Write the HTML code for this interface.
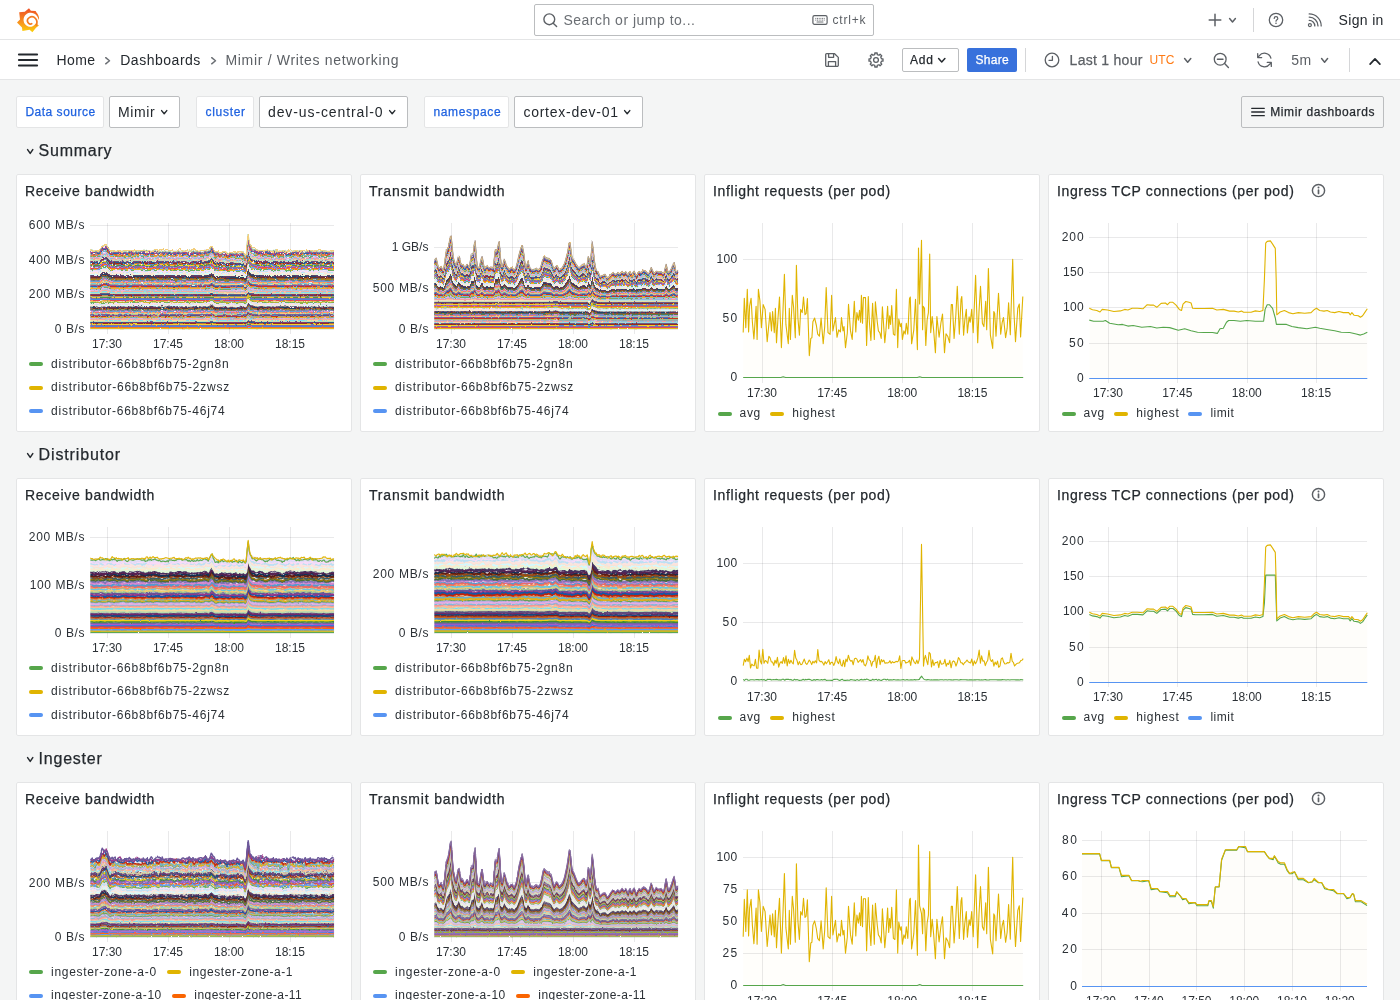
<!DOCTYPE html>
<html lang="en"><head><meta charset="utf-8"><title>Mimir / Writes networking - Dashboards - Grafana</title>
<style>
html,body{margin:0;padding:0}
body{width:1400px;height:1000px;overflow:hidden;background:#f4f5f5;font-family:"Liberation Sans", sans-serif;position:relative;color:#24292e}
#app{position:absolute;left:0;top:0;width:1400px;height:1000px;will-change:transform}
.t{position:absolute;white-space:pre;line-height:1;font-family:"Liberation Sans", sans-serif}
.abs{position:absolute}
header.top{position:absolute;left:0;top:0;width:1400px;height:39px;background:#fff;border-bottom:1px solid #e4e5e6}
nav.bar{position:absolute;left:0;top:40px;width:1400px;height:39px;background:#fff;border-bottom:1px solid #e4e5e6}
.panel{position:absolute;width:334px;height:256px;background:#fff;border:1px solid #e4e5e6;border-radius:2px}
.lbl{position:absolute;top:96px;height:30px;background:#fff;border:1px solid #e4e5e6;border-radius:2px}
.sel{position:absolute;top:96px;height:30px;background:#fff;border:1px solid #bbbdbf;border-radius:2px}
svg{position:absolute;overflow:visible}
.ns path{vector-effect:non-scaling-stroke;fill:none}
.sw{position:absolute;width:14px;height:4px;border-radius:2px}
</style></head>
<body>
<div id="app">
<header class="top"><svg class="abs" style="left:17px;top:7.8px" width="22.4" height="24.4" viewBox="0 0 22.4 24.4"><defs><linearGradient id="lg" x1="0" y1="1" x2="0" y2="0"><stop offset="0" stop-color="#fbd20b"/><stop offset="0.35" stop-color="#f99b1c"/><stop offset="1" stop-color="#ee4f27"/></linearGradient></defs>
<path d="M12.0 0.2 L13.9 2.7 L18.6 2.9 L19.5 4.4 C21.3 6.4 22.2 8.8 22.1 10.6 L21.7 11.9 C21.0 8.9 19.4 6.7 17.0 5.5 C14.4 4.3 11.4 4.6 9.3 6.2 C7.2 7.8 6.3 10.2 6.6 12.8 C6.9 15.5 8.7 17.7 11.2 18.5 C13.6 19.3 16.2 18.6 17.7 16.8 L19.0 15.2 L21.9 17.6 L19.0 19.8 L15.4 24.2 L12.6 21.8 L5.4 23.0 L5.0 19.4 L0.0 14.6 L3.0 11.4 L2.2 4.2 L7.8 3.8 Z" fill="url(#lg)"/>
<path d="M19.4 17.0 C20.3 14.6 20.1 12.2 18.5 10.5 C16.9 8.8 14.2 8.4 12.3 9.6 C10.6 10.7 10.0 12.7 10.9 14.4 C11.7 15.9 13.4 16.5 14.7 15.7" fill="none" stroke="#f47b20" stroke-width="1.7" stroke-linecap="round"/></svg><div class="abs" style="left:534px;top:4px;width:338px;height:30px;border:1px solid #bbbdbf;border-radius:2px;background:#fff"></div><svg class="abs" style="left:542px;top:12px" width="16" height="16" viewBox="0 0 16 16"><circle cx="7.3" cy="7.3" r="5.4" fill="none" stroke="#5c6065" stroke-width="1.4"/><path d="M11.2 11.2 L14.6 14.6" stroke="#5c6065" stroke-width="1.4" stroke-linecap="round"/></svg><span class="t" style="left:563.40px;top:13.00px;font-size:14px;color:#6b6f74;letter-spacing:0.496px;">Search or jump to...</span><svg class="abs" style="left:812px;top:14px" width="16" height="12" viewBox="0 0 16 12"><rect x="0.9" y="1.6" width="14.2" height="8.8" rx="1.6" fill="none" stroke="#5c6065" stroke-width="1.2"/><path d="M3.3 4.4h9.4M3.3 6.1h9.4" stroke="#5c6065" stroke-width="0.9" stroke-dasharray="1 0.7"/><path d="M4.6 8h6.8" stroke="#5c6065" stroke-width="0.9"/></svg><span class="t" style="left:832.40px;top:14.00px;font-size:12px;color:#5c6065;letter-spacing:0.837px;">ctrl+k</span><svg class="abs" style="left:1208px;top:13px" width="14" height="14" viewBox="0 0 14 14"><path d="M7 1.2V12.8M1.2 7H12.8" stroke="#5c6065" stroke-width="1.5" stroke-linecap="round"/></svg><svg class="abs" style="left:1228.6px;top:17.6px" width="7" height="5" viewBox="0 0 7 5"><path d="M0.6 0.6 L3.5 4 L6.4 0.6" fill="none" stroke="#5c6065" stroke-width="1.5" stroke-linecap="round" stroke-linejoin="round"/></svg><div class="abs" style="left:1253px;top:8px;width:1px;height:24px;background:#d5d6d8"></div><svg class="abs" style="left:1268px;top:12px" width="16" height="16" viewBox="0 0 16 16"><circle cx="8" cy="8" r="6.7" fill="none" stroke="#5c6065" stroke-width="1.3"/><path d="M6.2 6.5c0-1.1 0.8-1.8 1.8-1.8s1.8 0.7 1.8 1.7c0 1.3-1.8 1.4-1.8 2.8" fill="none" stroke="#5c6065" stroke-width="1.2" stroke-linecap="round"/><circle cx="8" cy="11.2" r="0.8" fill="#5c6065"/></svg><svg class="abs" style="left:1307px;top:13px" width="16" height="15" viewBox="0 0 16 15"><circle cx="2.9" cy="12.1" r="1.5" fill="none" stroke="#5c6065" stroke-width="1.2"/><path d="M2.2 7.3a5.6 5.6 0 0 1 5.6 5.6M2.2 4.1a8.8 8.8 0 0 1 8.8 8.8M2.2 0.9a12 12 0 0 1 12 12" fill="none" stroke="#5c6065" stroke-width="1.3" stroke-linecap="round"/></svg><span class="t" style="left:1338.50px;top:13.00px;font-size:14px;color:#24292e;letter-spacing:0.348px;">Sign in</span></header>
<nav class="bar"><svg class="abs" style="left:18px;top:13px" width="20" height="14" viewBox="0 0 20 14"><path d="M0.9 1.5H19.1M0.9 7H19.1M0.9 12.5H19.1" stroke="#24292e" stroke-width="2" stroke-linecap="round"/></svg><span class="t" style="left:56.60px;top:13.00px;font-size:14px;color:#24292e;letter-spacing:0.347px;">Home</span><svg class="abs" style="left:105.4px;top:17px" width="5.5" height="7.5" viewBox="0 0 5.5 7.5"><path d="M0.7 0.7 L4.5 3.75 L0.7 6.8" fill="none" stroke="#6b6f74" stroke-width="1.5" stroke-linecap="round" stroke-linejoin="round"/></svg><span class="t" style="left:120.20px;top:13.00px;font-size:14px;color:#24292e;letter-spacing:0.522px;">Dashboards</span><svg class="abs" style="left:210.6px;top:17px" width="5.5" height="7.5" viewBox="0 0 5.5 7.5"><path d="M0.7 0.7 L4.5 3.75 L0.7 6.8" fill="none" stroke="#6b6f74" stroke-width="1.5" stroke-linecap="round" stroke-linejoin="round"/></svg><span class="t" style="left:225.50px;top:13.00px;font-size:14px;color:#5c6065;letter-spacing:0.675px;">Mimir / Writes networking</span><svg class="abs" style="left:824px;top:12px" width="16" height="16" viewBox="0 0 16 16"><path d="M2.6 1.7H10.6L14.3 5.4V13.2A1.2 1.2 0 0 1 13.1 14.4H2.9A1.2 1.2 0 0 1 1.7 13.2V2.6A0.9 0.9 0 0 1 2.6 1.7Z" fill="none" stroke="#5c6065" stroke-width="1.3" stroke-linejoin="round"/><path d="M4.6 1.9V5.3H9.6V1.9M4.4 14.2V9.6H11.6V14.2" fill="none" stroke="#5c6065" stroke-width="1.3" stroke-linejoin="round"/></svg><svg class="abs" style="left:868px;top:12px" width="16" height="16" viewBox="0 0 16 16"><path d="M6.80 1.00 L9.20 1.00 L9.22 2.53 L11.00 3.27 L12.10 2.20 L13.80 3.90 L12.73 5.00 L13.47 6.78 L15.00 6.80 L15.00 9.20 L13.47 9.22 L12.73 11.00 L13.80 12.10 L12.10 13.80 L11.00 12.73 L9.22 13.47 L9.20 15.00 L6.80 15.00 L6.78 13.47 L5.00 12.73 L3.90 13.80 L2.20 12.10 L3.27 11.00 L2.53 9.22 L1.00 9.20 L1.00 6.80 L2.53 6.78 L3.27 5.00 L2.20 3.90 L3.90 2.20 L5.00 3.27 L6.78 2.53Z" fill="none" stroke="#5c6065" stroke-width="1.3" stroke-linejoin="round"/><circle cx="8" cy="8" r="2.4" fill="none" stroke="#5c6065" stroke-width="1.3"/></svg><div class="abs" style="left:902px;top:8px;width:55px;height:22px;border:1px solid #bbbdbf;border-radius:2px;background:#fff"></div><span class="t" style="left:910.00px;top:14.00px;font-size:12px;color:#24292e;letter-spacing:0.820px;-webkit-text-stroke:0.25px #24292e;">Add</span><svg class="abs" style="left:938px;top:18px" width="7.5" height="5" viewBox="0 0 7.5 5"><path d="M0.6 0.6 L3.75 4 L6.9 0.6" fill="none" stroke="#24292e" stroke-width="1.5" stroke-linecap="round" stroke-linejoin="round"/></svg><div class="abs" style="left:967px;top:8px;width:50px;height:24px;border-radius:2px;background:#3871dc"></div><span class="t" style="left:975.60px;top:14.00px;font-size:12px;color:#ffffff;letter-spacing:0.242px;-webkit-text-stroke:0.25px #ffffff;">Share</span><div class="abs" style="left:1025px;top:8px;width:1px;height:24px;background:#d5d6d8"></div><svg class="abs" style="left:1044px;top:12px" width="16" height="16" viewBox="0 0 16 16"><circle cx="8" cy="8" r="6.8" fill="none" stroke="#5c6065" stroke-width="1.3"/><path d="M8.4 4.3V8.3H5" fill="none" stroke="#5c6065" stroke-width="1.3" stroke-linecap="round" stroke-linejoin="round"/></svg><span class="t" style="left:1069.60px;top:13.00px;font-size:14px;color:#5c6065;letter-spacing:0.274px;-webkit-text-stroke:0.25px #5c6065;">Last 1 hour</span><span class="t" style="left:1149.60px;top:14.40px;font-size:12px;color:#ff7a14;letter-spacing:0.064px;">UTC</span><svg class="abs" style="left:1183.6px;top:18px" width="7.4" height="5.2" viewBox="0 0 7.4 5.2"><path d="M0.6 0.6 L3.7 4.2 L6.800000000000001 0.6" fill="none" stroke="#5c6065" stroke-width="1.5" stroke-linecap="round" stroke-linejoin="round"/></svg><svg class="abs" style="left:1213px;top:12px" width="17" height="17" viewBox="0 0 17 17"><circle cx="7.2" cy="7.2" r="5.9" fill="none" stroke="#5c6065" stroke-width="1.3"/><path d="M4.4 7.2H10M11.6 11.6L15.4 15.4" stroke="#5c6065" stroke-width="1.4" stroke-linecap="round"/></svg><svg class="abs" style="left:1256px;top:12px" width="17" height="16" viewBox="0 0 17 16"><path d="M14.9 6.2A6.6 6.6 0 0 0 3.2 3.9L1.9 5.4M1.7 1.6V5.6H5.7M2.1 9.8A6.6 6.6 0 0 0 13.8 12.1L15.1 10.6M15.3 14.4V10.4H11.3" fill="none" stroke="#5c6065" stroke-width="1.3" stroke-linecap="round" stroke-linejoin="round"/></svg><span class="t" style="left:1291.20px;top:13.00px;font-size:14px;color:#5c6065;letter-spacing:0.547px;">5m</span><svg class="abs" style="left:1320.8px;top:18px" width="7.2" height="5.2" viewBox="0 0 7.2 5.2"><path d="M0.6 0.6 L3.6 4.2 L6.6000000000000005 0.6" fill="none" stroke="#5c6065" stroke-width="1.5" stroke-linecap="round" stroke-linejoin="round"/></svg><div class="abs" style="left:1349px;top:8px;width:1px;height:24px;background:#d5d6d8"></div><svg class="abs" style="left:1369px;top:16.6px" width="12" height="9" viewBox="0 0 12 9"><path d="M1.1 7.2L6 1.9L10.9 7.2" fill="none" stroke="#24292e" stroke-width="1.7" stroke-linecap="round" stroke-linejoin="round"/></svg></nav>
<div class="lbl" style="left:16px;width:86px"></div><span class="t" style="left:25.40px;top:106.00px;font-size:12px;color:#1f62e0;letter-spacing:0.510px;-webkit-text-stroke:0.25px #1f62e0;">Data source</span><div class="sel" style="left:109px;width:69px"></div><span class="t" style="left:118.00px;top:105.00px;font-size:14px;color:#24292e;letter-spacing:0.595px;">Mimir</span><svg class="abs" style="left:161px;top:110px" width="6.4" height="4.8" viewBox="0 0 6.4 4.8"><path d="M0.6 0.6 L3.2 3.8 L5.800000000000001 0.6" fill="none" stroke="#24292e" stroke-width="1.4" stroke-linecap="round" stroke-linejoin="round"/></svg><div class="lbl" style="left:196px;width:56px"></div><span class="t" style="left:205.60px;top:106.00px;font-size:12px;color:#1f62e0;letter-spacing:0.676px;-webkit-text-stroke:0.25px #1f62e0;">cluster</span><div class="sel" style="left:259px;width:147px"></div><span class="t" style="left:268.00px;top:105.00px;font-size:14px;color:#24292e;letter-spacing:0.896px;">dev-us-central-0</span><svg class="abs" style="left:389px;top:110px" width="6.4" height="4.8" viewBox="0 0 6.4 4.8"><path d="M0.6 0.6 L3.2 3.8 L5.800000000000001 0.6" fill="none" stroke="#24292e" stroke-width="1.4" stroke-linecap="round" stroke-linejoin="round"/></svg><div class="lbl" style="left:424px;width:83px"></div><span class="t" style="left:433.40px;top:106.00px;font-size:12px;color:#1f62e0;letter-spacing:0.644px;-webkit-text-stroke:0.25px #1f62e0;">namespace</span><div class="sel" style="left:514px;width:127px"></div><span class="t" style="left:523.40px;top:105.00px;font-size:14px;color:#24292e;letter-spacing:0.751px;">cortex-dev-01</span><svg class="abs" style="left:624px;top:110px" width="6.4" height="4.8" viewBox="0 0 6.4 4.8"><path d="M0.6 0.6 L3.2 3.8 L5.800000000000001 0.6" fill="none" stroke="#24292e" stroke-width="1.4" stroke-linecap="round" stroke-linejoin="round"/></svg><div class="abs" style="left:1241px;top:96px;width:141px;height:30px;border:1px solid #bbbdbf;border-radius:2px"></div><svg class="abs" style="left:1251px;top:107px" width="14" height="10" viewBox="0 0 14 10"><path d="M0.7 1.3H13.3M0.7 5H13.3M0.7 8.7H13.3" stroke="#24292e" stroke-width="1.3" stroke-linecap="round"/></svg><span class="t" style="left:1270.20px;top:106.20px;font-size:12px;color:#24292e;letter-spacing:0.595px;-webkit-text-stroke:0.25px #24292e;">Mimir dashboards</span>
<svg class="abs" style="left:26.6px;top:149.4px" width="6.4" height="5.4" viewBox="0 0 6.4 5.4"><path d="M0.6 0.6 L3.2 4.4 L5.800000000000001 0.6" fill="none" stroke="#24292e" stroke-width="1.5" stroke-linecap="round" stroke-linejoin="round"/></svg><span class="t" style="left:38.60px;top:142.50px;font-size:16px;color:#24292e;letter-spacing:0.758px;-webkit-text-stroke:0.25px #24292e;">Summary</span>
<svg class="abs" style="left:26.6px;top:453.4px" width="6.4" height="5.4" viewBox="0 0 6.4 5.4"><path d="M0.6 0.6 L3.2 4.4 L5.800000000000001 0.6" fill="none" stroke="#24292e" stroke-width="1.5" stroke-linecap="round" stroke-linejoin="round"/></svg><span class="t" style="left:38.60px;top:446.50px;font-size:16px;color:#24292e;letter-spacing:0.869px;-webkit-text-stroke:0.25px #24292e;">Distributor</span>
<svg class="abs" style="left:26.6px;top:757.4px" width="6.4" height="5.4" viewBox="0 0 6.4 5.4"><path d="M0.6 0.6 L3.2 4.4 L5.800000000000001 0.6" fill="none" stroke="#24292e" stroke-width="1.5" stroke-linecap="round" stroke-linejoin="round"/></svg><span class="t" style="left:38.60px;top:750.50px;font-size:16px;color:#24292e;letter-spacing:0.770px;-webkit-text-stroke:0.25px #24292e;">Ingester</span>
<section class="panel" style="left:16px;top:174px"></section><span class="t" style="left:25.00px;top:183.70px;font-size:14px;color:#24292e;letter-spacing:0.688px;-webkit-text-stroke:0.25px #24292e;">Receive bandwidth</span>
<section class="panel" style="left:360px;top:174px"></section><span class="t" style="left:369.00px;top:183.70px;font-size:14px;color:#24292e;letter-spacing:0.814px;-webkit-text-stroke:0.25px #24292e;">Transmit bandwidth</span>
<section class="panel" style="left:704px;top:174px"></section><span class="t" style="left:713.00px;top:183.70px;font-size:14px;color:#24292e;letter-spacing:0.680px;-webkit-text-stroke:0.25px #24292e;">Inflight requests (per pod)</span>
<section class="panel" style="left:1048px;top:174px"></section><span class="t" style="left:1057.00px;top:183.70px;font-size:14px;color:#24292e;letter-spacing:0.631px;-webkit-text-stroke:0.25px #24292e;">Ingress TCP connections (per pod)</span><svg class="abs" style="left:1311.3px;top:183.0px" width="15" height="15" viewBox="0 0 15 15"><circle cx="7.5" cy="7.5" r="6.1" fill="none" stroke="#5c6065" stroke-width="1.45"/><path d="M7.5 7.1V10.5" stroke="#5c6065" stroke-width="1.7" stroke-linecap="round"/><circle cx="7.5" cy="4.6" r="1.0" fill="#5c6065"/></svg>
<section class="panel" style="left:16px;top:478px"></section><span class="t" style="left:25.00px;top:487.70px;font-size:14px;color:#24292e;letter-spacing:0.688px;-webkit-text-stroke:0.25px #24292e;">Receive bandwidth</span>
<section class="panel" style="left:360px;top:478px"></section><span class="t" style="left:369.00px;top:487.70px;font-size:14px;color:#24292e;letter-spacing:0.814px;-webkit-text-stroke:0.25px #24292e;">Transmit bandwidth</span>
<section class="panel" style="left:704px;top:478px"></section><span class="t" style="left:713.00px;top:487.70px;font-size:14px;color:#24292e;letter-spacing:0.680px;-webkit-text-stroke:0.25px #24292e;">Inflight requests (per pod)</span>
<section class="panel" style="left:1048px;top:478px"></section><span class="t" style="left:1057.00px;top:487.70px;font-size:14px;color:#24292e;letter-spacing:0.631px;-webkit-text-stroke:0.25px #24292e;">Ingress TCP connections (per pod)</span><svg class="abs" style="left:1311.3px;top:487.0px" width="15" height="15" viewBox="0 0 15 15"><circle cx="7.5" cy="7.5" r="6.1" fill="none" stroke="#5c6065" stroke-width="1.45"/><path d="M7.5 7.1V10.5" stroke="#5c6065" stroke-width="1.7" stroke-linecap="round"/><circle cx="7.5" cy="4.6" r="1.0" fill="#5c6065"/></svg>
<section class="panel" style="left:16px;top:782px"></section><span class="t" style="left:25.00px;top:791.70px;font-size:14px;color:#24292e;letter-spacing:0.688px;-webkit-text-stroke:0.25px #24292e;">Receive bandwidth</span>
<section class="panel" style="left:360px;top:782px"></section><span class="t" style="left:369.00px;top:791.70px;font-size:14px;color:#24292e;letter-spacing:0.814px;-webkit-text-stroke:0.25px #24292e;">Transmit bandwidth</span>
<section class="panel" style="left:704px;top:782px"></section><span class="t" style="left:713.00px;top:791.70px;font-size:14px;color:#24292e;letter-spacing:0.680px;-webkit-text-stroke:0.25px #24292e;">Inflight requests (per pod)</span>
<section class="panel" style="left:1048px;top:782px"></section><span class="t" style="left:1057.00px;top:791.70px;font-size:14px;color:#24292e;letter-spacing:0.631px;-webkit-text-stroke:0.25px #24292e;">Ingress TCP connections (per pod)</span><svg class="abs" style="left:1311.3px;top:791.0px" width="15" height="15" viewBox="0 0 15 15"><circle cx="7.5" cy="7.5" r="6.1" fill="none" stroke="#5c6065" stroke-width="1.45"/><path d="M7.5 7.1V10.5" stroke="#5c6065" stroke-width="1.7" stroke-linecap="round"/><circle cx="7.5" cy="4.6" r="1.0" fill="#5c6065"/></svg>
<svg class="abs" style="left:0;top:0" width="1400" height="1000" shape-rendering="crispEdges"><path d="M107.5 223.3V334.0" stroke="rgba(36,41,46,0.1)" stroke-width="1"/><path d="M168.5 223.3V334.0" stroke="rgba(36,41,46,0.1)" stroke-width="1"/><path d="M229.5 223.3V334.0" stroke="rgba(36,41,46,0.1)" stroke-width="1"/><path d="M290.5 223.3V334.0" stroke="rgba(36,41,46,0.1)" stroke-width="1"/><path d="M90.2 329.5H334.2" stroke="rgba(36,41,46,0.1)" stroke-width="1"/><path d="M90.2 294.5H334.2" stroke="rgba(36,41,46,0.1)" stroke-width="1"/><path d="M90.2 260.5H334.2" stroke="rgba(36,41,46,0.1)" stroke-width="1"/><path d="M90.2 225.5H334.2" stroke="rgba(36,41,46,0.1)" stroke-width="1"/></svg><span class="t" style="left:92.00px;top:337.60px;font-size:12px;color:#2b3035;letter-spacing:-0.008px;">17:30</span><span class="t" style="left:153.00px;top:337.60px;font-size:12px;color:#2b3035;letter-spacing:-0.008px;">17:45</span><span class="t" style="left:214.00px;top:337.60px;font-size:12px;color:#2b3035;letter-spacing:-0.008px;">18:00</span><span class="t" style="left:275.00px;top:337.60px;font-size:12px;color:#2b3035;letter-spacing:-0.008px;">18:15</span><span class="t" style="left:54.80px;top:322.90px;font-size:12px;color:#2b3035;letter-spacing:0.560px;">0 B/s</span><span class="t" style="left:28.80px;top:287.90px;font-size:12px;color:#2b3035;letter-spacing:0.700px;">200 MB/s</span><span class="t" style="left:28.80px;top:253.90px;font-size:12px;color:#2b3035;letter-spacing:0.700px;">400 MB/s</span><span class="t" style="left:28.80px;top:218.90px;font-size:12px;color:#2b3035;letter-spacing:0.700px;">600 MB/s</span>
<svg class="abs" style="left:0;top:0" width="1400" height="1000"><defs><filter id="fs00" x="-2%" y="-10%" width="104%" height="120%" color-interpolation-filters="sRGB"><feTurbulence type="fractalNoise" baseFrequency="0.45 0.35" numOctaves="1" seed="23" result="t"/><feColorMatrix in="t" type="matrix" values="0 0 0 0 0.5  0 1 0 0 0  0 0 1 0 0  0 0 0 0 1" result="m"/><feDisplacementMap in="SourceGraphic" in2="m" scale="2.4" xChannelSelector="R" yChannelSelector="G"/></filter><clipPath id="cs00"><rect x="90.2" y="0" width="244" height="329.3"/></clipPath><g class="ns"><path id="s0000" d="M0 -27.6L1 -28.1L2 -27.8L3 -27.3L4 -27.4L5 -26.6L6 -27.2L7 -26.7L8 -27.4L9 -27.8L10 -28.3L11 -28.3L12 -27.7L13 -27.9L14 -27.0L15 -28.2L16 -28.0L17 -27.4L18 -27.8L19 -28.3L20 -26.6L21 -26.6L22 -27.2L23 -28.2L24 -26.8L25 -26.8L26 -27.2L27 -27.0L28 -27.1L29 -27.5L30 -28.1L31 -27.4L32 -27.2L33 -26.8L34 -27.8L35 -27.9L36 -28.1L37 -27.2L38 -26.9L39 -27.1L40 -27.7L41 -27.3L42 -26.7L43 -26.7L44 -26.6L45 -26.3L46 -27.5L47 -26.5L48 -27.1L49 -28.1L50 -27.5L51 -27.2L52 -27.9L53 -27.0L54 -26.8L55 -27.2L56 -27.8L57 -26.7L58 -26.9L59 -26.9L60 -28.0L61 -27.1L62 -26.9L63 -26.9L64 -26.8L65 -26.9L66 -27.1L67 -26.9L68 -26.8L69 -26.3L70 -27.0L71 -28.0L72 -27.9L73 -27.6L74 -27.6L75 -28.1L76 -27.5L77 -28.0L78 -27.3L79 -27.0L80 -27.4L81 -27.2L82 -27.3L83 -27.4L84 -27.9L85 -27.9L86 -26.9L87 -27.5L88 -27.3L89 -27.4L90 -28.3L91 -27.9L92 -27.4L93 -27.1L94 -27.1L95 -26.6L96 -26.9L97 -27.0L98 -27.9L99 -28.0L100 -27.6L101 -27.7L102 -27.6L103 -28.1L104 -27.4L105 -27.8L106 -27.8L107 -27.0L108 -27.9L109 -28.1L110 -27.5L111 -27.8L112 -27.2L113 -27.3L114 -27.6L115 -28.3L116 -27.5L117 -27.2L118 -27.9L119 -27.7L120 -27.9L121 -29.6L122 -28.5L123 -27.5L124 -27.2L125 -26.8L126 -27.2L127 -26.2L128 -27.1L129 -27.0L130 -27.1L131 -27.0L132 -26.5L133 -27.6L134 -27.8L135 -27.2L136 -27.4L137 -26.7L138 -26.6L139 -27.0L140 -26.3L141 -26.0L142 -27.0L143 -26.1L144 -26.5L145 -27.4L146 -26.6L147 -27.3L148 -27.0L149 -28.2L150 -28.1L151 -27.2L152 -26.7L153 -27.6L154 -27.4L155 -27.2L156 -27.9L157 -31.3L158 -34.3L159 -30.5L160 -29.2L161 -29.2L162 -28.6L163 -27.9L164 -28.7L165 -28.4L166 -27.9L167 -27.7L168 -27.0L169 -26.8L170 -27.9L171 -27.8L172 -27.6L173 -27.2L174 -27.4L175 -28.5L176 -27.7L177 -27.3L178 -27.5L179 -27.5L180 -27.2L181 -26.6L182 -27.6L183 -27.3L184 -27.2L185 -27.5L186 -27.7L187 -27.8L188 -28.1L189 -28.1L190 -28.0L191 -27.9L192 -28.3L193 -27.6L194 -27.8L195 -26.9L196 -27.3L197 -28.2L198 -27.8L199 -27.2L200 -27.3L201 -27.1L202 -27.4L203 -27.1L204 -27.9L205 -28.4L206 -28.2L207 -27.1L208 -27.3L209 -28.2L210 -28.0L211 -27.5L212 -27.7L213 -27.3L214 -27.4L215 -27.5L216 -28.0L217 -28.2L218 -28.3L219 -27.9L220 -27.4L221 -27.7L222 -28.0L223 -28.1L224 -28.3L225 -27.1L226 -27.5L227 -27.5L228 -28.1L229 -27.6L230 -27.3L231 -27.2L232 -26.9L233 -27.2L234 -27.1L235 -27.3L236 -27.3L237 -28.3L238 -28.1L239 -27.7L240 -27.8L241 -28.0L242 -27.8L243 -26.5L244 -27.2"/><path id="s0001" d="M0 -27.3L1 -27.0L2 -27.1L3 -27.0L4 -27.5L5 -27.2L6 -26.8L7 -26.9L8 -27.5L9 -26.7L10 -27.4L11 -27.3L12 -25.9L13 -27.0L14 -25.9L15 -26.5L16 -27.2L17 -27.7L18 -27.6L19 -26.8L20 -26.8L21 -27.1L22 -27.2L23 -27.5L24 -27.7L25 -28.2L26 -27.9L27 -27.6L28 -26.9L29 -26.8L30 -27.4L31 -27.1L32 -27.5L33 -27.2L34 -27.2L35 -27.0L36 -27.2L37 -27.1L38 -27.5L39 -27.6L40 -27.0L41 -27.9L42 -27.5L43 -27.0L44 -27.1L45 -27.5L46 -27.4L47 -27.1L48 -27.4L49 -27.6L50 -27.8L51 -28.2L52 -28.0L53 -28.1L54 -27.2L55 -27.9L56 -27.3L57 -27.1L58 -27.0L59 -27.5L60 -26.9L61 -27.6L62 -27.8L63 -28.4L64 -27.8L65 -27.9L66 -27.3L67 -27.3L68 -27.3L69 -27.3L70 -26.6L71 -28.6L72 -28.2L73 -27.9L74 -27.3L75 -27.2L76 -27.0L77 -27.5L78 -27.2L79 -26.9L80 -27.6L81 -27.7L82 -27.7L83 -27.6L84 -27.2L85 -27.3L86 -26.9L87 -27.9L88 -27.4L89 -27.0L90 -27.3L91 -27.3L92 -27.6L93 -26.9L94 -28.0L95 -28.0L96 -27.3L97 -27.1L98 -26.7L99 -27.0L100 -26.8L101 -27.8L102 -27.8L103 -28.0L104 -27.7L105 -27.1L106 -27.7L107 -27.7L108 -27.3L109 -27.6L110 -27.2L111 -26.8L112 -26.8L113 -27.1L114 -28.1L115 -27.8L116 -27.3L117 -28.4L118 -28.1L119 -28.0L120 -28.5L121 -29.2L122 -29.2L123 -28.7L124 -27.7L125 -27.0L126 -26.3L127 -26.0L128 -26.0L129 -26.9L130 -26.6L131 -27.0L132 -26.6L133 -27.2L134 -27.7L135 -27.2L136 -27.3L137 -26.7L138 -26.5L139 -26.6L140 -26.6L141 -26.9L142 -26.7L143 -26.8L144 -26.6L145 -26.9L146 -26.0L147 -26.2L148 -27.1L149 -26.6L150 -26.6L151 -27.2L152 -26.9L153 -27.3L154 -27.2L155 -25.7L156 -27.2L157 -30.4L158 -33.4L159 -30.5L160 -29.9L161 -29.1L162 -29.8L163 -27.6L164 -27.7L165 -27.8L166 -28.0L167 -27.6L168 -27.5L169 -28.2L170 -27.8L171 -28.4L172 -27.3L173 -26.5L174 -27.2L175 -27.3L176 -27.4L177 -27.5L178 -27.3L179 -28.1L180 -27.8L181 -26.8L182 -26.9L183 -27.1L184 -27.1L185 -26.8L186 -27.0L187 -26.8L188 -27.0L189 -27.7L190 -27.9L191 -27.5L192 -27.5L193 -28.1L194 -28.5L195 -27.5L196 -26.8L197 -27.6L198 -27.2L199 -27.4L200 -27.2L201 -27.0L202 -27.4L203 -27.0L204 -27.3L205 -28.1L206 -27.2L207 -26.9L208 -27.1L209 -27.5L210 -26.8L211 -27.1L212 -26.4L213 -27.7L214 -27.3L215 -27.8L216 -26.9L217 -27.3L218 -27.4L219 -27.2L220 -27.1L221 -26.9L222 -27.8L223 -26.1L224 -26.9L225 -27.3L226 -27.3L227 -28.1L228 -27.7L229 -27.0L230 -26.4L231 -27.1L232 -27.6L233 -28.0L234 -27.9L235 -27.6L236 -27.4L237 -28.4L238 -27.4L239 -27.1L240 -27.2L241 -27.1L242 -26.6L243 -27.1L244 -28.0"/><path id="s0002" d="M0 -27.3L1 -27.9L2 -27.7L3 -27.8L4 -27.3L5 -27.8L6 -27.1L7 -27.2L8 -27.5L9 -26.1L10 -26.4L11 -26.7L12 -27.4L13 -27.3L14 -27.4L15 -27.6L16 -27.0L17 -27.2L18 -27.3L19 -27.6L20 -28.0L21 -26.9L22 -27.1L23 -27.3L24 -26.8L25 -27.2L26 -28.0L27 -27.8L28 -27.4L29 -27.0L30 -26.9L31 -26.8L32 -27.4L33 -26.9L34 -26.9L35 -27.2L36 -27.2L37 -27.4L38 -27.5L39 -27.2L40 -27.6L41 -27.9L42 -27.1L43 -28.5L44 -28.8L45 -27.2L46 -27.1L47 -27.2L48 -28.3L49 -27.6L50 -27.2L51 -27.8L52 -28.8L53 -26.7L54 -27.0L55 -26.5L56 -27.0L57 -26.6L58 -26.4L59 -26.7L60 -27.6L61 -27.7L62 -26.9L63 -27.2L64 -27.0L65 -27.0L66 -27.6L67 -27.1L68 -27.9L69 -27.9L70 -27.4L71 -28.2L72 -28.4L73 -27.9L74 -27.9L75 -27.5L76 -27.3L77 -27.5L78 -28.5L79 -28.7L80 -27.3L81 -27.2L82 -27.4L83 -26.9L84 -26.7L85 -26.8L86 -27.4L87 -27.3L88 -26.3L89 -27.1L90 -27.2L91 -26.9L92 -27.1L93 -26.8L94 -26.5L95 -27.4L96 -27.6L97 -27.6L98 -27.8L99 -27.3L100 -27.4L101 -27.4L102 -27.1L103 -27.1L104 -27.2L105 -27.0L106 -28.1L107 -28.2L108 -27.7L109 -27.7L110 -27.4L111 -27.4L112 -26.8L113 -26.8L114 -27.3L115 -27.7L116 -27.5L117 -27.7L118 -27.7L119 -28.2L120 -29.4L121 -29.3L122 -29.5L123 -28.7L124 -28.3L125 -26.9L126 -26.6L127 -26.5L128 -26.4L129 -26.7L130 -26.8L131 -27.5L132 -27.4L133 -27.4L134 -26.9L135 -26.9L136 -27.0L137 -26.8L138 -26.8L139 -26.3L140 -26.9L141 -26.8L142 -27.7L143 -26.7L144 -26.6L145 -26.3L146 -26.7L147 -26.6L148 -25.8L149 -27.3L150 -26.9L151 -27.5L152 -27.2L153 -27.2L154 -27.3L155 -26.2L156 -26.8L157 -30.4L158 -34.5L159 -29.8L160 -28.8L161 -28.0L162 -28.5L163 -28.4L164 -27.5L165 -27.9L166 -27.7L167 -28.0L168 -27.3L169 -27.1L170 -27.5L171 -27.9L172 -27.8L173 -27.2L174 -27.5L175 -28.0L176 -27.3L177 -26.9L178 -27.1L179 -27.0L180 -27.0L181 -27.2L182 -27.4L183 -27.2L184 -26.8L185 -27.1L186 -27.2L187 -27.0L188 -26.9L189 -27.6L190 -28.4L191 -27.6L192 -27.9L193 -27.7L194 -28.6L195 -28.2L196 -28.1L197 -28.0L198 -27.9L199 -27.4L200 -27.7L201 -27.3L202 -27.7L203 -28.2L204 -27.4L205 -27.3L206 -27.3L207 -26.4L208 -27.7L209 -27.3L210 -27.3L211 -27.4L212 -27.0L213 -27.5L214 -26.6L215 -27.7L216 -27.0L217 -26.6L218 -28.1L219 -26.9L220 -27.9L221 -28.1L222 -27.1L223 -27.9L224 -27.7L225 -27.8L226 -27.5L227 -26.7L228 -26.8L229 -27.4L230 -26.6L231 -26.9L232 -26.9L233 -27.1L234 -27.0L235 -27.5L236 -28.2L237 -27.6L238 -27.2L239 -27.5L240 -26.7L241 -27.2L242 -27.3L243 -28.0L244 -27.6"/><path id="s0003" d="M0 -28.1L1 -28.0L2 -27.5L3 -27.6L4 -27.7L5 -27.5L6 -28.0L7 -27.0L8 -27.7L9 -28.1L10 -28.4L11 -28.4L12 -27.9L13 -27.3L14 -27.7L15 -27.3L16 -26.6L17 -26.7L18 -28.3L19 -27.5L20 -26.9L21 -27.2L22 -26.9L23 -28.0L24 -27.2L25 -27.1L26 -27.2L27 -26.7L28 -27.3L29 -27.0L30 -27.1L31 -27.7L32 -27.9L33 -27.5L34 -27.6L35 -27.6L36 -27.5L37 -28.2L38 -27.0L39 -26.9L40 -28.3L41 -27.9L42 -27.5L43 -27.1L44 -27.6L45 -26.9L46 -27.8L47 -27.8L48 -27.1L49 -26.7L50 -26.2L51 -26.6L52 -27.1L53 -27.9L54 -27.5L55 -27.9L56 -27.3L57 -27.2L58 -27.2L59 -27.4L60 -26.8L61 -26.8L62 -27.3L63 -27.9L64 -27.7L65 -27.8L66 -27.2L67 -27.5L68 -26.9L69 -27.2L70 -27.1L71 -27.9L72 -27.2L73 -26.7L74 -27.8L75 -27.8L76 -27.2L77 -28.5L78 -27.1L79 -27.5L80 -27.5L81 -26.9L82 -27.5L83 -27.5L84 -28.2L85 -27.8L86 -28.3L87 -27.9L88 -27.0L89 -27.8L90 -28.1L91 -27.7L92 -28.2L93 -27.5L94 -27.9L95 -27.7L96 -27.2L97 -26.9L98 -27.0L99 -28.0L100 -27.2L101 -27.3L102 -27.0L103 -27.3L104 -27.2L105 -26.3L106 -28.3L107 -27.7L108 -28.2L109 -27.7L110 -28.0L111 -27.6L112 -28.7L113 -28.0L114 -28.6L115 -28.2L116 -27.4L117 -27.5L118 -27.4L119 -26.9L120 -28.5L121 -29.5L122 -28.9L123 -28.7L124 -28.3L125 -27.7L126 -27.5L127 -26.7L128 -27.3L129 -26.5L130 -27.4L131 -26.9L132 -26.2L133 -26.5L134 -26.2L135 -26.7L136 -27.3L137 -26.7L138 -27.3L139 -26.8L140 -26.2L141 -26.8L142 -26.8L143 -26.4L144 -27.0L145 -26.3L146 -27.4L147 -27.1L148 -26.5L149 -26.4L150 -26.0L151 -27.1L152 -26.9L153 -28.3L154 -27.1L155 -27.3L156 -27.2L157 -30.5L158 -34.5L159 -30.9L160 -29.7L161 -29.0L162 -28.8L163 -28.2L164 -27.9L165 -27.1L166 -27.9L167 -27.8L168 -27.0L169 -28.0L170 -27.7L171 -28.2L172 -28.3L173 -27.3L174 -27.7L175 -27.5L176 -28.4L177 -27.7L178 -27.2L179 -27.6L180 -27.7L181 -28.0L182 -27.3L183 -27.4L184 -27.6L185 -27.1L186 -27.6L187 -26.9L188 -27.0L189 -27.4L190 -27.3L191 -27.7L192 -27.6L193 -27.3L194 -27.7L195 -27.0L196 -27.0L197 -27.4L198 -27.4L199 -27.3L200 -26.4L201 -26.8L202 -26.6L203 -26.5L204 -26.6L205 -26.3L206 -27.3L207 -27.6L208 -27.1L209 -26.6L210 -27.3L211 -27.0L212 -26.8L213 -27.1L214 -27.1L215 -27.7L216 -26.9L217 -27.5L218 -28.2L219 -27.8L220 -27.7L221 -27.4L222 -27.4L223 -27.5L224 -27.8L225 -28.4L226 -27.5L227 -27.5L228 -27.5L229 -27.0L230 -27.0L231 -27.3L232 -27.1L233 -27.6L234 -26.9L235 -27.5L236 -27.2L237 -27.6L238 -27.6L239 -27.7L240 -28.0L241 -28.3L242 -28.2L243 -27.6L244 -28.0"/><path id="s0004" d="M0 -28.1L1 -26.4L2 -26.5L3 -28.2L4 -27.6L5 -27.3L6 -26.0L7 -26.4L8 -26.8L9 -27.4L10 -26.9L11 -26.4L12 -26.5L13 -27.2L14 -27.6L15 -26.8L16 -27.1L17 -27.4L18 -27.7L19 -27.9L20 -27.8L21 -27.9L22 -27.5L23 -27.4L24 -27.3L25 -27.9L26 -27.6L27 -27.4L28 -28.0L29 -27.2L30 -26.8L31 -27.4L32 -27.2L33 -27.6L34 -27.6L35 -27.0L36 -26.8L37 -26.8L38 -26.9L39 -27.4L40 -27.6L41 -27.5L42 -26.9L43 -27.1L44 -27.5L45 -27.5L46 -27.1L47 -27.7L48 -27.0L49 -27.4L50 -27.6L51 -27.1L52 -26.5L53 -26.8L54 -27.7L55 -27.7L56 -27.7L57 -27.3L58 -26.6L59 -27.6L60 -28.0L61 -28.5L62 -28.4L63 -27.6L64 -27.3L65 -27.3L66 -27.8L67 -26.5L68 -27.5L69 -27.5L70 -27.6L71 -26.2L72 -26.6L73 -26.9L74 -26.8L75 -25.7L76 -26.8L77 -28.1L78 -27.8L79 -27.8L80 -27.6L81 -28.2L82 -27.0L83 -28.0L84 -27.3L85 -27.2L86 -27.0L87 -28.2L88 -27.5L89 -26.1L90 -26.9L91 -27.6L92 -27.6L93 -26.9L94 -27.4L95 -27.8L96 -27.8L97 -27.8L98 -26.9L99 -26.9L100 -26.6L101 -26.5L102 -26.8L103 -28.1L104 -27.3L105 -27.9L106 -28.3L107 -27.8L108 -27.7L109 -27.8L110 -27.9L111 -27.0L112 -26.8L113 -27.7L114 -27.6L115 -28.0L116 -27.0L117 -26.9L118 -27.8L119 -27.6L120 -28.5L121 -29.2L122 -29.4L123 -28.0L124 -27.2L125 -27.3L126 -27.7L127 -27.3L128 -26.5L129 -26.9L130 -27.0L131 -26.8L132 -26.9L133 -26.1L134 -27.0L135 -27.5L136 -27.3L137 -26.2L138 -26.0L139 -26.4L140 -26.8L141 -26.7L142 -27.1L143 -26.6L144 -26.6L145 -26.2L146 -26.1L147 -26.7L148 -27.5L149 -26.8L150 -26.4L151 -27.5L152 -26.7L153 -27.6L154 -27.6L155 -26.4L156 -26.6L157 -30.3L158 -34.2L159 -31.5L160 -29.3L161 -28.9L162 -29.1L163 -28.2L164 -28.4L165 -27.5L166 -27.6L167 -27.1L168 -27.2L169 -27.6L170 -27.8L171 -28.2L172 -28.2L173 -27.4L174 -27.4L175 -27.0L176 -27.0L177 -27.6L178 -27.7L179 -27.6L180 -27.6L181 -26.5L182 -27.5L183 -27.7L184 -27.0L185 -26.7L186 -27.8L187 -27.6L188 -27.7L189 -28.1L190 -27.1L191 -27.6L192 -27.8L193 -27.8L194 -27.5L195 -27.4L196 -27.5L197 -28.6L198 -27.3L199 -27.9L200 -28.2L201 -27.4L202 -27.7L203 -27.6L204 -27.8L205 -28.0L206 -27.9L207 -27.6L208 -27.7L209 -26.9L210 -27.5L211 -27.6L212 -26.8L213 -27.8L214 -27.0L215 -27.9L216 -27.3L217 -27.5L218 -28.0L219 -26.8L220 -27.0L221 -26.1L222 -25.9L223 -27.3L224 -28.1L225 -27.6L226 -26.5L227 -28.2L228 -27.4L229 -27.8L230 -27.4L231 -26.8L232 -26.2L233 -27.2L234 -26.9L235 -26.7L236 -27.1L237 -26.4L238 -26.7L239 -27.4L240 -27.5L241 -27.2L242 -27.3L243 -27.0L244 -27.0"/><path id="s0010" d="M0 -52.0L1 -51.1L2 -51.2L3 -50.1L4 -50.2L5 -51.2L6 -51.5L7 -51.0L8 -50.5L9 -51.6L10 -53.1L11 -54.4L12 -55.4L13 -55.6L14 -56.8L15 -57.0L16 -57.1L17 -55.7L18 -53.0L19 -52.9L20 -51.1L21 -50.0L22 -51.6L23 -50.9L24 -51.6L25 -50.1L26 -49.7L27 -50.7L28 -51.2L29 -50.7L30 -51.4L31 -50.2L32 -49.0L33 -51.5L34 -51.7L35 -51.4L36 -51.2L37 -51.0L38 -51.2L39 -51.5L40 -51.5L41 -50.8L42 -51.0L43 -50.1L44 -52.4L45 -51.2L46 -51.9L47 -51.2L48 -51.1L49 -51.3L50 -51.8L51 -51.5L52 -51.6L53 -50.9L54 -51.8L55 -50.9L56 -50.3L57 -50.0L58 -51.4L59 -51.0L60 -49.7L61 -50.4L62 -49.9L63 -50.5L64 -52.2L65 -51.8L66 -52.2L67 -52.7L68 -50.4L69 -51.7L70 -52.3L71 -52.1L72 -51.4L73 -53.1L74 -51.6L75 -51.8L76 -52.5L77 -52.1L78 -51.7L79 -51.5L80 -51.3L81 -51.0L82 -52.0L83 -50.6L84 -50.1L85 -49.8L86 -49.8L87 -51.0L88 -51.5L89 -52.8L90 -53.0L91 -51.6L92 -51.0L93 -50.8L94 -50.8L95 -50.7L96 -51.6L97 -52.0L98 -50.6L99 -50.5L100 -50.1L101 -51.2L102 -52.7L103 -52.5L104 -53.2L105 -51.9L106 -50.9L107 -51.6L108 -50.4L109 -50.0L110 -50.8L111 -51.3L112 -51.6L113 -51.2L114 -51.0L115 -51.8L116 -51.6L117 -52.4L118 -52.2L119 -52.8L120 -54.6L121 -55.8L122 -55.5L123 -53.4L124 -51.3L125 -49.8L126 -50.3L127 -50.7L128 -50.7L129 -48.0L130 -48.5L131 -49.4L132 -49.7L133 -50.1L134 -50.0L135 -50.0L136 -49.2L137 -47.5L138 -47.3L139 -49.1L140 -48.9L141 -49.9L142 -48.8L143 -50.1L144 -49.7L145 -50.2L146 -49.0L147 -49.6L148 -50.1L149 -49.8L150 -50.0L151 -50.3L152 -49.3L153 -49.7L154 -48.7L155 -45.9L156 -47.7L157 -59.5L158 -68.0L159 -60.0L160 -57.8L161 -56.8L162 -54.7L163 -54.1L164 -54.5L165 -53.3L166 -52.5L167 -51.2L168 -50.5L169 -51.6L170 -51.5L171 -51.7L172 -50.8L173 -51.4L174 -50.2L175 -51.6L176 -51.1L177 -52.1L178 -51.6L179 -51.0L180 -50.4L181 -50.3L182 -49.7L183 -50.2L184 -49.4L185 -49.4L186 -51.4L187 -52.1L188 -50.0L189 -50.7L190 -50.0L191 -50.2L192 -51.3L193 -51.0L194 -49.1L195 -49.6L196 -50.2L197 -50.5L198 -51.0L199 -50.4L200 -52.4L201 -51.4L202 -50.8L203 -50.4L204 -50.6L205 -51.4L206 -51.1L207 -51.1L208 -50.4L209 -49.7L210 -49.0L211 -50.7L212 -51.4L213 -51.5L214 -51.1L215 -51.8L216 -52.1L217 -51.1L218 -50.7L219 -51.2L220 -51.4L221 -51.8L222 -51.4L223 -50.5L224 -51.0L225 -49.9L226 -51.5L227 -51.1L228 -50.8L229 -52.0L230 -52.1L231 -51.1L232 -51.7L233 -51.7L234 -51.8L235 -50.4L236 -49.9L237 -50.0L238 -50.1L239 -50.4L240 -51.1L241 -51.1L242 -51.9L243 -51.3L244 -50.3"/><path id="s0011" d="M0 -51.5L1 -52.7L2 -52.9L3 -51.2L4 -51.6L5 -51.2L6 -51.0L7 -51.5L8 -50.6L9 -50.8L10 -53.3L11 -54.5L12 -56.7L13 -56.8L14 -57.0L15 -56.6L16 -56.8L17 -56.3L18 -55.5L19 -52.7L20 -51.7L21 -52.0L22 -50.3L23 -50.7L24 -51.5L25 -51.2L26 -51.0L27 -50.9L28 -51.3L29 -51.2L30 -51.3L31 -51.0L32 -51.6L33 -50.6L34 -50.9L35 -51.1L36 -51.3L37 -49.7L38 -50.5L39 -52.3L40 -50.9L41 -51.6L42 -51.6L43 -50.3L44 -50.1L45 -50.4L46 -52.3L47 -50.2L48 -51.0L49 -51.0L50 -51.3L51 -51.6L52 -51.1L53 -52.0L54 -53.0L55 -51.6L56 -52.4L57 -52.0L58 -51.3L59 -51.2L60 -51.7L61 -50.6L62 -51.0L63 -52.3L64 -51.9L65 -52.6L66 -51.3L67 -50.2L68 -49.9L69 -50.7L70 -51.2L71 -50.9L72 -49.7L73 -50.8L74 -51.0L75 -51.4L76 -50.9L77 -50.5L78 -50.9L79 -51.1L80 -51.1L81 -50.2L82 -49.8L83 -50.8L84 -50.9L85 -51.0L86 -50.3L87 -50.9L88 -51.4L89 -51.2L90 -50.2L91 -50.5L92 -50.4L93 -51.6L94 -51.5L95 -51.1L96 -50.9L97 -49.8L98 -51.0L99 -51.5L100 -51.9L101 -51.3L102 -50.1L103 -52.1L104 -51.2L105 -51.0L106 -50.4L107 -52.2L108 -50.2L109 -51.4L110 -51.2L111 -50.3L112 -49.4L113 -49.5L114 -51.3L115 -52.5L116 -50.8L117 -51.1L118 -52.0L119 -51.9L120 -52.4L121 -56.4L122 -55.6L123 -53.7L124 -51.8L125 -49.8L126 -49.6L127 -50.2L128 -50.7L129 -50.2L130 -49.5L131 -48.7L132 -49.8L133 -50.2L134 -50.2L135 -51.0L136 -50.8L137 -49.3L138 -48.9L139 -49.2L140 -49.8L141 -49.2L142 -49.3L143 -49.2L144 -49.2L145 -48.7L146 -50.0L147 -49.1L148 -49.3L149 -49.1L150 -49.4L151 -49.0L152 -50.4L153 -51.0L154 -47.2L155 -44.7L156 -47.5L157 -60.2L158 -68.9L159 -60.8L160 -56.8L161 -56.3L162 -53.5L163 -51.6L164 -53.4L165 -52.9L166 -52.7L167 -52.6L168 -52.2L169 -52.0L170 -51.6L171 -51.8L172 -52.1L173 -51.5L174 -51.8L175 -52.3L176 -52.1L177 -52.6L178 -51.3L179 -50.9L180 -51.6L181 -51.7L182 -50.9L183 -52.4L184 -52.2L185 -52.2L186 -51.1L187 -50.2L188 -50.4L189 -51.6L190 -51.5L191 -51.6L192 -50.9L193 -51.7L194 -51.4L195 -52.2L196 -50.9L197 -51.7L198 -51.5L199 -51.7L200 -50.9L201 -49.8L202 -51.1L203 -51.7L204 -51.5L205 -51.4L206 -50.8L207 -51.6L208 -51.2L209 -52.0L210 -51.9L211 -50.9L212 -50.5L213 -50.0L214 -50.2L215 -50.7L216 -51.1L217 -51.2L218 -51.8L219 -51.9L220 -51.3L221 -51.6L222 -50.2L223 -51.5L224 -51.5L225 -51.0L226 -51.0L227 -50.9L228 -50.6L229 -50.3L230 -51.3L231 -50.8L232 -51.8L233 -50.9L234 -50.9L235 -51.4L236 -51.9L237 -50.6L238 -50.5L239 -50.8L240 -50.4L241 -50.4L242 -50.2L243 -51.1L244 -52.2"/><path id="s0012" d="M0 -51.5L1 -51.6L2 -50.5L3 -51.7L4 -51.9L5 -52.2L6 -52.4L7 -51.2L8 -51.2L9 -50.9L10 -52.8L11 -53.1L12 -57.2L13 -55.9L14 -55.4L15 -55.1L16 -57.1L17 -55.7L18 -55.3L19 -52.7L20 -50.4L21 -51.0L22 -50.1L23 -50.9L24 -51.3L25 -51.5L26 -51.1L27 -51.2L28 -51.1L29 -51.6L30 -51.8L31 -50.4L32 -50.7L33 -51.5L34 -51.3L35 -50.4L36 -50.5L37 -50.2L38 -52.0L39 -52.6L40 -52.2L41 -51.5L42 -50.2L43 -50.5L44 -51.2L45 -52.2L46 -51.3L47 -51.3L48 -51.6L49 -51.3L50 -51.1L51 -50.7L52 -50.9L53 -50.8L54 -51.6L55 -50.7L56 -49.5L57 -51.2L58 -50.2L59 -51.0L60 -50.4L61 -51.3L62 -50.8L63 -51.5L64 -50.5L65 -50.5L66 -50.5L67 -51.6L68 -52.8L69 -51.1L70 -51.4L71 -51.7L72 -51.7L73 -50.2L74 -51.2L75 -51.9L76 -51.2L77 -50.2L78 -51.3L79 -51.0L80 -51.0L81 -49.7L82 -50.4L83 -50.7L84 -50.3L85 -49.8L86 -50.3L87 -51.3L88 -51.0L89 -50.7L90 -50.5L91 -51.1L92 -50.1L93 -51.4L94 -51.4L95 -51.0L96 -50.5L97 -50.6L98 -49.9L99 -47.9L100 -49.7L101 -50.4L102 -50.1L103 -50.3L104 -50.9L105 -50.8L106 -51.8L107 -49.8L108 -50.8L109 -50.7L110 -51.3L111 -51.9L112 -51.5L113 -50.6L114 -51.2L115 -50.7L116 -52.1L117 -53.0L118 -52.7L119 -52.1L120 -52.9L121 -55.7L122 -55.5L123 -52.5L124 -51.4L125 -49.8L126 -51.8L127 -50.7L128 -50.2L129 -49.3L130 -49.5L131 -49.7L132 -50.9L133 -49.4L134 -49.3L135 -49.3L136 -50.7L137 -48.3L138 -48.5L139 -48.1L140 -49.4L141 -50.2L142 -49.9L143 -48.6L144 -49.8L145 -49.5L146 -49.7L147 -48.0L148 -49.2L149 -48.1L150 -48.3L151 -49.9L152 -50.0L153 -51.1L154 -48.1L155 -45.8L156 -48.7L157 -60.5L158 -67.7L159 -59.1L160 -55.9L161 -54.3L162 -52.9L163 -53.0L164 -52.2L165 -53.7L166 -52.2L167 -52.3L168 -51.1L169 -52.0L170 -50.3L171 -51.8L172 -50.8L173 -50.7L174 -52.0L175 -51.9L176 -52.4L177 -51.5L178 -51.1L179 -51.4L180 -51.0L181 -50.9L182 -50.1L183 -48.7L184 -49.5L185 -50.3L186 -51.1L187 -50.9L188 -50.5L189 -50.6L190 -52.1L191 -51.3L192 -52.1L193 -51.9L194 -51.3L195 -50.8L196 -48.9L197 -50.2L198 -50.0L199 -49.8L200 -49.0L201 -50.2L202 -50.7L203 -51.3L204 -52.3L205 -51.5L206 -53.0L207 -50.5L208 -50.5L209 -51.6L210 -51.6L211 -50.7L212 -52.3L213 -51.1L214 -51.7L215 -51.1L216 -51.1L217 -51.2L218 -51.2L219 -50.9L220 -50.7L221 -52.0L222 -51.9L223 -50.6L224 -51.2L225 -51.1L226 -52.2L227 -51.1L228 -50.7L229 -51.3L230 -51.4L231 -52.3L232 -51.5L233 -51.1L234 -51.6L235 -51.4L236 -51.0L237 -51.4L238 -50.9L239 -50.7L240 -50.9L241 -50.7L242 -51.2L243 -50.1L244 -49.4"/><path id="s0013" d="M0 -49.6L1 -49.8L2 -49.9L3 -49.9L4 -50.5L5 -50.6L6 -49.7L7 -49.7L8 -50.8L9 -51.3L10 -51.9L11 -54.4L12 -55.5L13 -57.9L14 -57.3L15 -58.4L16 -56.5L17 -56.0L18 -54.0L19 -53.6L20 -52.1L21 -51.1L22 -51.3L23 -50.9L24 -51.5L25 -51.1L26 -51.1L27 -49.6L28 -49.9L29 -50.8L30 -50.6L31 -50.5L32 -49.9L33 -49.3L34 -49.7L35 -50.4L36 -51.5L37 -52.7L38 -52.3L39 -50.1L40 -50.3L41 -50.4L42 -51.9L43 -51.4L44 -52.3L45 -51.6L46 -51.5L47 -51.4L48 -51.4L49 -52.3L50 -51.6L51 -52.6L52 -52.3L53 -52.4L54 -50.9L55 -50.4L56 -50.2L57 -51.0L58 -52.0L59 -52.0L60 -51.9L61 -51.6L62 -51.0L63 -51.4L64 -51.4L65 -50.0L66 -49.8L67 -50.6L68 -52.3L69 -50.2L70 -50.8L71 -50.7L72 -51.2L73 -50.0L74 -49.7L75 -50.7L76 -51.0L77 -51.0L78 -50.7L79 -50.0L80 -50.5L81 -50.1L82 -50.2L83 -49.7L84 -48.9L85 -49.6L86 -50.3L87 -50.5L88 -50.8L89 -51.0L90 -52.1L91 -50.7L92 -49.9L93 -50.5L94 -50.6L95 -51.6L96 -51.4L97 -51.0L98 -52.0L99 -50.3L100 -51.5L101 -50.6L102 -50.5L103 -50.9L104 -49.7L105 -50.1L106 -49.8L107 -49.5L108 -50.8L109 -50.7L110 -49.7L111 -51.3L112 -51.5L113 -49.7L114 -51.0L115 -52.2L116 -51.7L117 -50.8L118 -51.2L119 -51.8L120 -53.6L121 -54.7L122 -55.6L123 -53.0L124 -52.1L125 -49.3L126 -49.3L127 -49.0L128 -49.9L129 -50.8L130 -49.6L131 -49.7L132 -48.5L133 -48.1L134 -48.4L135 -49.7L136 -48.9L137 -48.5L138 -49.1L139 -48.9L140 -49.4L141 -50.2L142 -50.8L143 -50.1L144 -50.4L145 -49.7L146 -49.3L147 -50.9L148 -50.2L149 -50.4L150 -50.0L151 -50.3L152 -50.7L153 -51.5L154 -48.6L155 -44.9L156 -47.7L157 -60.9L158 -68.9L159 -61.5L160 -56.8L161 -54.7L162 -54.0L163 -55.1L164 -53.5L165 -53.1L166 -52.6L167 -52.3L168 -51.6L169 -51.6L170 -51.4L171 -49.9L172 -50.8L173 -51.3L174 -50.8L175 -51.3L176 -51.2L177 -50.9L178 -51.0L179 -51.0L180 -51.2L181 -51.7L182 -51.9L183 -51.7L184 -52.1L185 -51.5L186 -50.7L187 -50.9L188 -50.2L189 -50.6L190 -50.9L191 -49.8L192 -50.6L193 -50.4L194 -50.3L195 -51.1L196 -52.4L197 -51.6L198 -51.5L199 -52.7L200 -52.0L201 -51.7L202 -52.0L203 -51.3L204 -51.4L205 -51.7L206 -50.5L207 -50.4L208 -52.4L209 -51.6L210 -51.4L211 -52.0L212 -51.2L213 -52.1L214 -52.7L215 -51.9L216 -52.1L217 -50.8L218 -52.0L219 -52.7L220 -52.5L221 -52.6L222 -53.3L223 -52.3L224 -52.0L225 -51.3L226 -51.0L227 -49.7L228 -50.7L229 -51.3L230 -50.2L231 -50.7L232 -50.8L233 -50.4L234 -51.1L235 -50.6L236 -49.9L237 -50.3L238 -51.2L239 -51.3L240 -51.8L241 -51.9L242 -51.8L243 -50.7L244 -50.3"/><path id="s0014" d="M0 -51.8L1 -50.5L2 -51.3L3 -50.5L4 -50.8L5 -51.0L6 -51.4L7 -51.1L8 -50.2L9 -50.0L10 -52.7L11 -55.7L12 -57.0L13 -57.5L14 -56.6L15 -56.0L16 -56.8L17 -56.6L18 -54.6L19 -53.4L20 -52.8L21 -51.6L22 -51.1L23 -50.7L24 -52.0L25 -51.1L26 -50.9L27 -50.8L28 -51.3L29 -50.2L30 -50.5L31 -51.0L32 -50.5L33 -51.8L34 -50.7L35 -49.5L36 -50.9L37 -51.7L38 -51.4L39 -50.7L40 -50.6L41 -50.1L42 -49.8L43 -51.6L44 -51.3L45 -50.7L46 -51.4L47 -51.2L48 -51.0L49 -52.1L50 -52.4L51 -50.9L52 -51.1L53 -49.7L54 -51.5L55 -52.0L56 -51.1L57 -51.2L58 -51.0L59 -51.4L60 -51.8L61 -52.9L62 -50.1L63 -50.9L64 -50.1L65 -51.1L66 -52.0L67 -51.9L68 -52.0L69 -50.7L70 -50.8L71 -50.7L72 -51.8L73 -52.0L74 -50.4L75 -50.8L76 -51.8L77 -50.9L78 -52.6L79 -52.1L80 -50.9L81 -51.7L82 -51.2L83 -52.1L84 -51.2L85 -50.2L86 -51.3L87 -51.2L88 -52.3L89 -51.3L90 -50.2L91 -50.8L92 -51.6L93 -51.7L94 -51.5L95 -51.9L96 -51.5L97 -50.2L98 -50.8L99 -50.7L100 -50.5L101 -50.6L102 -50.8L103 -51.3L104 -51.1L105 -51.2L106 -50.6L107 -51.2L108 -51.6L109 -51.9L110 -51.1L111 -51.1L112 -50.3L113 -49.8L114 -51.4L115 -51.9L116 -52.2L117 -51.2L118 -52.1L119 -52.4L120 -53.9L121 -55.8L122 -54.5L123 -53.1L124 -52.5L125 -48.4L126 -49.7L127 -50.3L128 -50.0L129 -50.5L130 -49.9L131 -50.6L132 -50.1L133 -50.6L134 -49.8L135 -48.6L136 -49.3L137 -49.1L138 -48.7L139 -50.2L140 -49.7L141 -49.9L142 -49.8L143 -50.1L144 -49.4L145 -49.0L146 -48.5L147 -48.5L148 -48.7L149 -49.1L150 -48.1L151 -48.5L152 -47.3L153 -49.5L154 -47.5L155 -45.9L156 -49.0L157 -60.6L158 -67.8L159 -61.6L160 -56.4L161 -53.9L162 -53.7L163 -53.5L164 -52.6L165 -51.5L166 -52.6L167 -51.4L168 -53.2L169 -52.7L170 -50.9L171 -52.5L172 -51.1L173 -50.7L174 -51.2L175 -52.0L176 -52.4L177 -50.9L178 -50.5L179 -50.3L180 -50.2L181 -50.0L182 -50.0L183 -50.4L184 -51.2L185 -51.9L186 -51.5L187 -52.4L188 -50.1L189 -49.9L190 -51.1L191 -51.2L192 -50.4L193 -50.9L194 -51.2L195 -51.6L196 -51.0L197 -51.0L198 -51.9L199 -51.7L200 -50.8L201 -49.8L202 -51.1L203 -51.0L204 -51.8L205 -51.3L206 -52.0L207 -52.0L208 -50.8L209 -50.3L210 -51.5L211 -50.7L212 -50.3L213 -49.1L214 -50.1L215 -51.3L216 -50.7L217 -52.5L218 -52.4L219 -49.7L220 -49.5L221 -51.2L222 -50.8L223 -51.6L224 -52.0L225 -51.6L226 -52.2L227 -51.5L228 -50.9L229 -49.8L230 -51.8L231 -51.7L232 -50.4L233 -50.3L234 -50.0L235 -49.9L236 -49.9L237 -51.0L238 -51.0L239 -51.1L240 -50.3L241 -51.4L242 -51.6L243 -52.4L244 -49.9"/></g></defs><g clip-path="url(#cs00)" opacity="0.88"><g fill="none" stroke-linejoin="round" shape-rendering="crispEdges" filter="url(#fs00)"><g transform="translate(90.2,301.45)"><path d="M0 0L0 -51.1L1 -51.1L2 -51.1L3 -51.1L4 -51.1L5 -51.1L6 -51.1L7 -51.1L8 -51.1L9 -51.2L10 -53.0L11 -54.9L12 -56.7L13 -56.9L14 -56.6L15 -56.4L16 -56.2L17 -55.6L18 -54.1L19 -52.5L20 -51.1L21 -51.1L22 -51.1L23 -51.1L24 -51.1L25 -51.1L26 -51.1L27 -51.1L28 -51.1L29 -51.1L30 -51.1L31 -51.1L32 -51.1L33 -51.1L34 -51.1L35 -51.1L36 -51.1L37 -51.1L38 -51.1L39 -51.1L40 -51.1L41 -51.1L42 -51.1L43 -51.1L44 -51.1L45 -51.1L46 -51.1L47 -51.1L48 -51.1L49 -51.1L50 -51.1L51 -51.1L52 -51.1L53 -51.1L54 -51.1L55 -51.1L56 -51.1L57 -51.1L58 -51.1L59 -51.1L60 -51.1L61 -51.1L62 -51.1L63 -51.1L64 -51.1L65 -51.1L66 -51.1L67 -51.1L68 -51.1L69 -51.1L70 -51.1L71 -51.1L72 -51.1L73 -51.1L74 -51.1L75 -51.1L76 -51.1L77 -51.1L78 -51.1L79 -51.1L80 -51.1L81 -51.1L82 -51.1L83 -51.1L84 -51.1L85 -51.1L86 -51.1L87 -51.1L88 -51.1L89 -51.1L90 -51.1L91 -51.1L92 -51.1L93 -51.1L94 -51.1L95 -51.1L96 -51.1L97 -51.1L98 -51.1L99 -51.1L100 -51.1L101 -51.1L102 -51.1L103 -51.1L104 -51.1L105 -51.1L106 -51.1L107 -51.1L108 -51.1L109 -51.1L110 -51.1L111 -51.1L112 -51.2L113 -51.3L114 -51.9L115 -52.6L116 -52.1L117 -51.4L118 -51.3L119 -52.0L120 -53.9L121 -55.8L122 -55.5L123 -53.4L124 -51.8L125 -49.7L126 -49.6L127 -49.6L128 -49.6L129 -49.6L130 -49.6L131 -49.6L132 -49.6L133 -49.6L134 -49.6L135 -49.6L136 -49.6L137 -48.6L138 -48.6L139 -48.6L140 -48.6L141 -49.6L142 -49.6L143 -49.6L144 -49.6L145 -49.6L146 -49.6L147 -49.6L148 -49.6L149 -49.6L150 -49.6L151 -49.6L152 -49.6L153 -50.8L154 -48.3L155 -45.5L156 -48.7L157 -60.1L158 -68.6L159 -60.2L160 -56.6L161 -54.9L162 -54.0L163 -53.4L164 -52.9L165 -52.6L166 -52.4L167 -52.1L168 -52.0L169 -51.8L170 -51.7L171 -51.6L172 -51.5L173 -51.5L174 -51.4L175 -51.4L176 -51.3L177 -51.3L178 -51.3L179 -51.2L180 -51.2L181 -51.2L182 -51.2L183 -51.2L184 -51.2L185 -51.2L186 -51.2L187 -51.2L188 -51.2L189 -51.2L190 -51.2L191 -51.2L192 -51.2L193 -51.2L194 -51.1L195 -51.1L196 -51.1L197 -51.1L198 -51.1L199 -51.1L200 -51.1L201 -51.1L202 -51.1L203 -51.1L204 -51.1L205 -51.1L206 -51.1L207 -51.1L208 -51.1L209 -51.1L210 -51.1L211 -51.1L212 -51.1L213 -51.1L214 -51.1L215 -51.1L216 -51.1L217 -51.1L218 -51.1L219 -51.1L220 -51.1L221 -51.1L222 -51.1L223 -51.1L224 -51.1L225 -51.1L226 -51.1L227 -51.1L228 -51.1L229 -51.1L230 -51.1L231 -51.1L232 -51.1L233 -51.1L234 -51.1L235 -51.1L236 -51.1L237 -51.1L238 -51.1L239 -51.1L240 -51.1L241 -51.1L242 -51.1L243 -51.1L244 -51.1L244 0Z" fill="#ece9f1" fill-opacity="0.9" stroke="none"/><use href="#s0010" transform="scale(1,0.0045)" stroke="#5794F2" stroke-width="1"/><use href="#s0010" transform="scale(1,0.0154)" stroke="#FA6400" stroke-width="1"/><use href="#s0011" transform="scale(1,0.0278)" stroke="#E02F44" stroke-width="1"/><use href="#s0013" transform="scale(1,0.0395)" stroke="#3274D9" stroke-width="1"/><use href="#s0013" transform="scale(1,0.0498)" stroke="#A352CC" stroke-width="1"/><use href="#s0013" transform="scale(1,0.0611)" stroke="#705DA0" stroke-width="1"/><use href="#s0010" transform="scale(1,0.0745)" stroke="#37872D" stroke-width="1"/><use href="#s0014" transform="scale(1,0.0869)" stroke="#F2CC0C" stroke-width="1"/><use href="#s0010" transform="scale(1,0.0983)" stroke="#447EBC" stroke-width="1"/><use href="#s0011" transform="scale(1,0.1087)" stroke="#C15C17" stroke-width="1"/><use href="#s0012" transform="scale(1,0.1175)" stroke="#890F02" stroke-width="1"/><use href="#s0012" transform="scale(1,0.1267)" stroke="#0A437C" stroke-width="1"/><use href="#s0014" transform="scale(1,0.1378)" stroke="#6D1F62" stroke-width="1"/><use href="#s0012" transform="scale(1,0.148)" stroke="#584477" stroke-width="1"/><use href="#s0014" transform="scale(1,0.1588)" stroke="#B7DBAB" stroke-width="1"/><use href="#s0014" transform="scale(1,0.1702)" stroke="#F4D598" stroke-width="1"/><use href="#s0012" transform="scale(1,0.1797)" stroke="#70DBED" stroke-width="1"/><use href="#s0010" transform="scale(1,0.1886)" stroke="#F9BA8F" stroke-width="1"/><use href="#s0012" transform="scale(1,0.2001)" stroke="#F29191" stroke-width="1"/><use href="#s0014" transform="scale(1,0.2139)" stroke="#82B5D8" stroke-width="1"/><use href="#s0013" transform="scale(1,0.2273)" stroke="#E5A8E2" stroke-width="1"/><use href="#s0013" transform="scale(1,0.2403)" stroke="#AEA2E0" stroke-width="1"/><use href="#s0013" transform="scale(1,0.2504)" stroke="#629E51" stroke-width="1"/><use href="#s0014" transform="scale(1,0.2596)" stroke="#E5AC0E" stroke-width="1"/><use href="#s0012" transform="scale(1,0.2703)" stroke="#64B0C8" stroke-width="1"/><use href="#s0012" transform="scale(1,0.2803)" stroke="#E0752D" stroke-width="1"/><use href="#s0013" transform="scale(1,0.2919)" stroke="#BF1B00" stroke-width="1"/><use href="#s0013" transform="scale(1,0.3043)" stroke="#0A50A1" stroke-width="1"/><use href="#s0010" transform="scale(1,0.314)" stroke="#962D82" stroke-width="1"/><use href="#s0014" transform="scale(1,0.3252)" stroke="#614D93" stroke-width="1"/><use href="#s0013" transform="scale(1,0.3363)" stroke="#9AC48A" stroke-width="1"/><use href="#s0012" transform="scale(1,0.3478)" stroke="#F2C96D" stroke-width="1"/><use href="#s0014" transform="scale(1,0.3605)" stroke="#65C5DB" stroke-width="1"/><use href="#s0013" transform="scale(1,0.3718)" stroke="#F9934E" stroke-width="1"/><use href="#s0011" transform="scale(1,0.3828)" stroke="#EA6460" stroke-width="1"/><use href="#s0013" transform="scale(1,0.3935)" stroke="#5195CE" stroke-width="1"/><use href="#s0012" transform="scale(1,0.4037)" stroke="#D683CE" stroke-width="1"/><use href="#s0014" transform="scale(1,0.4124)" stroke="#806EB7" stroke-width="1"/><use href="#s0010" transform="scale(1,0.4234)" stroke="#3F6833" stroke-width="1"/><use href="#s0014" transform="scale(1,0.435)" stroke="#967302" stroke-width="1"/><use href="#s0011" transform="scale(1,0.4464)" stroke="#2F575E" stroke-width="1"/><use href="#s0014" transform="scale(1,0.4577)" stroke="#99440A" stroke-width="1"/><use href="#s0014" transform="scale(1,0.4696)" stroke="#58140C" stroke-width="1"/><use href="#s0012" transform="scale(1,0.4839)" stroke="#052B51" stroke-width="1"/><use href="#s0013" transform="scale(1,0.4974)" stroke="#511749" stroke-width="1"/><use href="#s0012" transform="scale(1,0.5105)" stroke="#3F2B5B" stroke-width="1"/><use href="#s0014" transform="scale(1,0.523)" stroke="#E0F9D7" stroke-width="1"/><use href="#s0012" transform="scale(1,0.5353)" stroke="#FCEACA" stroke-width="1"/><use href="#s0013" transform="scale(1,0.5462)" stroke="#CFFAFF" stroke-width="1"/><use href="#s0010" transform="scale(1,0.5561)" stroke="#F9E2D2" stroke-width="1"/><use href="#s0012" transform="scale(1,0.5685)" stroke="#FCE2DE" stroke-width="1"/><use href="#s0011" transform="scale(1,0.5799)" stroke="#BADFF4" stroke-width="1"/><use href="#s0011" transform="scale(1,0.5916)" stroke="#F9D9F9" stroke-width="1"/><use href="#s0014" transform="scale(1,0.6057)" stroke="#DEDAF7" stroke-width="1"/><use href="#s0012" transform="scale(1,0.618)" stroke="#56A64B" stroke-width="1"/><use href="#s0011" transform="scale(1,0.6286)" stroke="#E0B400" stroke-width="1"/><use href="#s0014" transform="scale(1,0.6393)" stroke="#5794F2" stroke-width="1"/><use href="#s0010" transform="scale(1,0.6501)" stroke="#FA6400" stroke-width="1"/><use href="#s0013" transform="scale(1,0.6627)" stroke="#E02F44" stroke-width="1"/><use href="#s0011" transform="scale(1,0.6753)" stroke="#3274D9" stroke-width="1"/><use href="#s0010" transform="scale(1,0.6846)" stroke="#A352CC" stroke-width="1"/><use href="#s0011" transform="scale(1,0.693)" stroke="#705DA0" stroke-width="1"/><use href="#s0010" transform="scale(1,0.7036)" stroke="#37872D" stroke-width="1"/><use href="#s0012" transform="scale(1,0.7174)" stroke="#F2CC0C" stroke-width="1"/><use href="#s0010" transform="scale(1,0.7304)" stroke="#447EBC" stroke-width="1"/><use href="#s0013" transform="scale(1,0.7416)" stroke="#C15C17" stroke-width="1"/><use href="#s0010" transform="scale(1,0.7531)" stroke="#890F02" stroke-width="1"/><use href="#s0014" transform="scale(1,0.7654)" stroke="#0A437C" stroke-width="1"/><use href="#s0012" transform="scale(1,0.7767)" stroke="#6D1F62" stroke-width="1"/><use href="#s0011" transform="scale(1,0.7874)" stroke="#584477" stroke-width="1"/><use href="#s0014" transform="scale(1,0.7993)" stroke="#B7DBAB" stroke-width="1"/><use href="#s0012" transform="scale(1,0.8112)" stroke="#F4D598" stroke-width="1"/><use href="#s0012" transform="scale(1,0.8219)" stroke="#70DBED" stroke-width="1"/><use href="#s0011" transform="scale(1,0.831)" stroke="#F9BA8F" stroke-width="1"/><use href="#s0010" transform="scale(1,0.8407)" stroke="#F29191" stroke-width="1"/><use href="#s0012" transform="scale(1,0.8529)" stroke="#82B5D8" stroke-width="1"/><use href="#s0012" transform="scale(1,0.8652)" stroke="#E5A8E2" stroke-width="1"/><use href="#s0013" transform="scale(1,0.8763)" stroke="#AEA2E0" stroke-width="1"/><use href="#s0014" transform="scale(1,0.8873)" stroke="#629E51" stroke-width="1"/><use href="#s0012" transform="scale(1,0.8966)" stroke="#E5AC0E" stroke-width="1"/><use href="#s0012" transform="scale(1,0.9051)" stroke="#64B0C8" stroke-width="1"/><use href="#s0013" transform="scale(1,0.916)" stroke="#E0752D" stroke-width="1"/><use href="#s0010" transform="scale(1,0.9294)" stroke="#BF1B00" stroke-width="1"/><use href="#s0012" transform="scale(1,0.9412)" stroke="#0A50A1" stroke-width="1"/><use href="#s0012" transform="scale(1,0.9527)" stroke="#962D82" stroke-width="1"/><use href="#s0011" transform="scale(1,0.9653)" stroke="#614D93" stroke-width="1"/><use href="#s0011" transform="scale(1,0.9785)" stroke="#9AC48A" stroke-width="1"/><use href="#s0010" transform="scale(1,0.9928)" stroke="#F2C96D" stroke-width="1"/></g><g transform="translate(90.2,328.90)"><path d="M0 0L0 -27.4L1 -27.4L2 -27.4L3 -27.4L4 -27.4L5 -27.4L6 -27.4L7 -27.4L8 -27.4L9 -27.4L10 -27.4L11 -27.4L12 -27.4L13 -27.4L14 -27.4L15 -27.4L16 -27.4L17 -27.4L18 -27.4L19 -27.4L20 -27.4L21 -27.4L22 -27.4L23 -27.4L24 -27.4L25 -27.4L26 -27.4L27 -27.4L28 -27.4L29 -27.4L30 -27.4L31 -27.4L32 -27.4L33 -27.4L34 -27.4L35 -27.4L36 -27.4L37 -27.4L38 -27.4L39 -27.4L40 -27.4L41 -27.4L42 -27.4L43 -27.4L44 -27.4L45 -27.4L46 -27.4L47 -27.4L48 -27.4L49 -27.4L50 -27.4L51 -27.4L52 -27.4L53 -27.4L54 -27.4L55 -27.4L56 -27.4L57 -27.4L58 -27.4L59 -27.4L60 -27.4L61 -27.4L62 -27.4L63 -27.4L64 -27.4L65 -27.4L66 -27.4L67 -27.4L68 -27.4L69 -27.4L70 -27.4L71 -27.4L72 -27.4L73 -27.4L74 -27.4L75 -27.4L76 -27.4L77 -27.4L78 -27.4L79 -27.4L80 -27.4L81 -27.4L82 -27.4L83 -27.4L84 -27.4L85 -27.4L86 -27.4L87 -27.4L88 -27.4L89 -27.4L90 -27.4L91 -27.4L92 -27.4L93 -27.4L94 -27.4L95 -27.4L96 -27.4L97 -27.4L98 -27.4L99 -27.4L100 -27.4L101 -27.4L102 -27.4L103 -27.4L104 -27.4L105 -27.4L106 -27.4L107 -27.4L108 -27.4L109 -27.4L110 -27.4L111 -27.4L112 -27.4L113 -27.5L114 -27.7L115 -27.9L116 -27.8L117 -27.5L118 -27.5L119 -27.8L120 -28.4L121 -29.1L122 -29.0L123 -28.3L124 -27.7L125 -26.9L126 -26.9L127 -26.9L128 -26.9L129 -26.9L130 -26.9L131 -26.9L132 -26.9L133 -26.9L134 -26.9L135 -26.9L136 -26.9L137 -26.6L138 -26.6L139 -26.6L140 -26.6L141 -26.9L142 -26.9L143 -26.9L144 -26.9L145 -26.9L146 -26.9L147 -26.9L148 -26.9L149 -26.9L150 -26.9L151 -26.9L152 -26.9L153 -27.4L154 -26.9L155 -26.4L156 -27.0L157 -30.8L158 -34.0L159 -30.8L160 -29.5L161 -28.9L162 -28.5L163 -28.3L164 -28.1L165 -28.0L166 -27.9L167 -27.8L168 -27.8L169 -27.7L170 -27.7L171 -27.6L172 -27.6L173 -27.6L174 -27.5L175 -27.5L176 -27.5L177 -27.5L178 -27.5L179 -27.5L180 -27.5L181 -27.5L182 -27.5L183 -27.5L184 -27.5L185 -27.5L186 -27.5L187 -27.5L188 -27.5L189 -27.5L190 -27.4L191 -27.4L192 -27.4L193 -27.4L194 -27.4L195 -27.4L196 -27.4L197 -27.4L198 -27.4L199 -27.4L200 -27.4L201 -27.4L202 -27.4L203 -27.4L204 -27.4L205 -27.4L206 -27.4L207 -27.4L208 -27.4L209 -27.4L210 -27.4L211 -27.4L212 -27.4L213 -27.4L214 -27.4L215 -27.4L216 -27.4L217 -27.4L218 -27.4L219 -27.4L220 -27.4L221 -27.4L222 -27.4L223 -27.4L224 -27.4L225 -27.4L226 -27.4L227 -27.4L228 -27.4L229 -27.4L230 -27.4L231 -27.4L232 -27.4L233 -27.4L234 -27.4L235 -27.4L236 -27.4L237 -27.4L238 -27.4L239 -27.4L240 -27.4L241 -27.4L242 -27.4L243 -27.4L244 -27.4L244 0Z" fill="#ece9f1" fill-opacity="0.9" stroke="none"/><use href="#s0002" transform="scale(1,0.0084)" stroke="#56A64B" stroke-width="1"/><use href="#s0002" transform="scale(1,0.0256)" stroke="#E0B400" stroke-width="1"/><use href="#s0003" transform="scale(1,0.0453)" stroke="#5794F2" stroke-width="1"/><use href="#s0001" transform="scale(1,0.0645)" stroke="#FA6400" stroke-width="1"/><use href="#s0002" transform="scale(1,0.0816)" stroke="#E02F44" stroke-width="1"/><use href="#s0001" transform="scale(1,0.0993)" stroke="#3274D9" stroke-width="1"/><use href="#s0001" transform="scale(1,0.1153)" stroke="#A352CC" stroke-width="1"/><use href="#s0002" transform="scale(1,0.131)" stroke="#705DA0" stroke-width="1"/><use href="#s0001" transform="scale(1,0.1489)" stroke="#37872D" stroke-width="1"/><use href="#s0003" transform="scale(1,0.1683)" stroke="#F2CC0C" stroke-width="1"/><use href="#s0004" transform="scale(1,0.1849)" stroke="#447EBC" stroke-width="1"/><use href="#s0004" transform="scale(1,0.199)" stroke="#C15C17" stroke-width="1"/><use href="#s0003" transform="scale(1,0.2131)" stroke="#890F02" stroke-width="1"/><use href="#s0001" transform="scale(1,0.2298)" stroke="#0A437C" stroke-width="1"/><use href="#s0003" transform="scale(1,0.2496)" stroke="#6D1F62" stroke-width="1"/><use href="#s0003" transform="scale(1,0.2654)" stroke="#584477" stroke-width="1"/><use href="#s0004" transform="scale(1,0.2827)" stroke="#B7DBAB" stroke-width="1"/><use href="#s0002" transform="scale(1,0.3048)" stroke="#F4D598" stroke-width="1"/><use href="#s0003" transform="scale(1,0.3252)" stroke="#70DBED" stroke-width="1"/><use href="#s0001" transform="scale(1,0.3438)" stroke="#F9BA8F" stroke-width="1"/><use href="#s0001" transform="scale(1,0.3598)" stroke="#F29191" stroke-width="1"/><use href="#s0000" transform="scale(1,0.3728)" stroke="#82B5D8" stroke-width="1"/><use href="#s0000" transform="scale(1,0.3876)" stroke="#E5A8E2" stroke-width="1"/><use href="#s0001" transform="scale(1,0.4027)" stroke="#AEA2E0" stroke-width="1"/><use href="#s0002" transform="scale(1,0.416)" stroke="#629E51" stroke-width="1"/><use href="#s0003" transform="scale(1,0.4303)" stroke="#E5AC0E" stroke-width="1"/><use href="#s0000" transform="scale(1,0.4437)" stroke="#64B0C8" stroke-width="1"/><use href="#s0004" transform="scale(1,0.4583)" stroke="#E0752D" stroke-width="1"/><use href="#s0001" transform="scale(1,0.475)" stroke="#BF1B00" stroke-width="1"/><use href="#s0003" transform="scale(1,0.4937)" stroke="#0A50A1" stroke-width="1"/><use href="#s0000" transform="scale(1,0.5128)" stroke="#962D82" stroke-width="1"/><use href="#s0001" transform="scale(1,0.5308)" stroke="#614D93" stroke-width="1"/><use href="#s0000" transform="scale(1,0.5487)" stroke="#9AC48A" stroke-width="1"/><use href="#s0000" transform="scale(1,0.5668)" stroke="#F2C96D" stroke-width="1"/><use href="#s0004" transform="scale(1,0.5846)" stroke="#65C5DB" stroke-width="1"/><use href="#s0004" transform="scale(1,0.6004)" stroke="#F9934E" stroke-width="1"/><use href="#s0001" transform="scale(1,0.6191)" stroke="#EA6460" stroke-width="1"/><use href="#s0003" transform="scale(1,0.6414)" stroke="#5195CE" stroke-width="1"/><use href="#s0004" transform="scale(1,0.6629)" stroke="#D683CE" stroke-width="1"/><use href="#s0001" transform="scale(1,0.6829)" stroke="#806EB7" stroke-width="1"/><use href="#s0000" transform="scale(1,0.7003)" stroke="#3F6833" stroke-width="1"/><use href="#s0003" transform="scale(1,0.7151)" stroke="#967302" stroke-width="1"/><use href="#s0004" transform="scale(1,0.7298)" stroke="#2F575E" stroke-width="1"/><use href="#s0001" transform="scale(1,0.7437)" stroke="#99440A" stroke-width="1"/><use href="#s0000" transform="scale(1,0.7601)" stroke="#58140C" stroke-width="1"/><use href="#s0003" transform="scale(1,0.7782)" stroke="#052B51" stroke-width="1"/><use href="#s0002" transform="scale(1,0.7966)" stroke="#511749" stroke-width="1"/><use href="#s0002" transform="scale(1,0.815)" stroke="#3F2B5B" stroke-width="1"/><use href="#s0004" transform="scale(1,0.834)" stroke="#E0F9D7" stroke-width="1"/><use href="#s0002" transform="scale(1,0.8554)" stroke="#FCEACA" stroke-width="1"/><use href="#s0002" transform="scale(1,0.8718)" stroke="#CFFAFF" stroke-width="1"/><use href="#s0001" transform="scale(1,0.8849)" stroke="#F9E2D2" stroke-width="1"/><use href="#s0001" transform="scale(1,0.9027)" stroke="#FCE2DE" stroke-width="1"/><use href="#s0004" transform="scale(1,0.9219)" stroke="#BADFF4" stroke-width="1"/><use href="#s0000" transform="scale(1,0.9414)" stroke="#F9D9F9" stroke-width="1"/><use href="#s0001" transform="scale(1,0.9606)" stroke="#DEDAF7" stroke-width="1"/><use href="#s0001" transform="scale(1,0.9751)" stroke="#56A64B" stroke-width="1"/><use href="#s0002" transform="scale(1,0.9907)" stroke="#E0B400" stroke-width="1"/></g></g></g></svg>
<div class="sw" style="left:29.1px;top:362.0px;background:#56A64B"></div><span class="t" style="left:51.10px;top:357.50px;font-size:12px;color:#2b3035;letter-spacing:0.742px;">distributor-66b8bf6b75-2gn8n</span>
<div class="sw" style="left:29.1px;top:385.5px;background:#E0B400"></div><span class="t" style="left:51.10px;top:381.00px;font-size:12px;color:#2b3035;letter-spacing:0.766px;">distributor-66b8bf6b75-2zwsz</span>
<div class="sw" style="left:29.1px;top:409.0px;background:#5794F2"></div><span class="t" style="left:51.10px;top:404.50px;font-size:12px;color:#2b3035;letter-spacing:0.746px;">distributor-66b8bf6b75-46j74</span>
<svg class="abs" style="left:0;top:0" width="1400" height="1000" shape-rendering="crispEdges"><path d="M451.5 223.3V334.0" stroke="rgba(36,41,46,0.1)" stroke-width="1"/><path d="M512.5 223.3V334.0" stroke="rgba(36,41,46,0.1)" stroke-width="1"/><path d="M573.5 223.3V334.0" stroke="rgba(36,41,46,0.1)" stroke-width="1"/><path d="M634.5 223.3V334.0" stroke="rgba(36,41,46,0.1)" stroke-width="1"/><path d="M434.2 329.5H678.2" stroke="rgba(36,41,46,0.1)" stroke-width="1"/><path d="M434.2 288.5H678.2" stroke="rgba(36,41,46,0.1)" stroke-width="1"/><path d="M434.2 247.5H678.2" stroke="rgba(36,41,46,0.1)" stroke-width="1"/></svg><span class="t" style="left:436.00px;top:337.60px;font-size:12px;color:#2b3035;letter-spacing:-0.008px;">17:30</span><span class="t" style="left:497.00px;top:337.60px;font-size:12px;color:#2b3035;letter-spacing:-0.008px;">17:45</span><span class="t" style="left:558.00px;top:337.60px;font-size:12px;color:#2b3035;letter-spacing:-0.008px;">18:00</span><span class="t" style="left:619.00px;top:337.60px;font-size:12px;color:#2b3035;letter-spacing:-0.008px;">18:15</span><span class="t" style="left:398.80px;top:322.90px;font-size:12px;color:#2b3035;letter-spacing:0.560px;">0 B/s</span><span class="t" style="left:372.80px;top:281.90px;font-size:12px;color:#2b3035;letter-spacing:0.700px;">500 MB/s</span><span class="t" style="left:391.80px;top:240.90px;font-size:12px;color:#2b3035;letter-spacing:-0.017px;">1 GB/s</span>
<svg class="abs" style="left:0;top:0" width="1400" height="1000"><defs><filter id="fs01" x="-2%" y="-10%" width="104%" height="120%" color-interpolation-filters="sRGB"><feTurbulence type="fractalNoise" baseFrequency="0.45 0.35" numOctaves="1" seed="5" result="t"/><feColorMatrix in="t" type="matrix" values="0 0 0 0 0.5  0 1 0 0 0  0 0 1 0 0  0 0 0 0 1" result="m"/><feDisplacementMap in="SourceGraphic" in2="m" scale="2.4" xChannelSelector="R" yChannelSelector="G"/></filter><clipPath id="cs01"><rect x="434.2" y="0" width="244" height="329.3"/></clipPath><g class="ns"><path id="s0100" d="M0 -21.8L1 -21.7L2 -22.2L3 -22.0L4 -21.7L5 -22.0L6 -22.0L7 -21.7L8 -21.9L9 -21.9L10 -22.1L11 -22.3L12 -22.3L13 -21.8L14 -22.3L15 -21.9L16 -21.6L17 -21.8L18 -21.6L19 -22.2L20 -21.9L21 -22.0L22 -21.6L23 -21.9L24 -22.2L25 -22.2L26 -21.8L27 -21.8L28 -21.9L29 -21.8L30 -21.6L31 -21.8L32 -21.7L33 -21.9L34 -22.0L35 -22.1L36 -21.7L37 -21.9L38 -21.8L39 -22.0L40 -22.2L41 -21.7L42 -22.0L43 -21.8L44 -21.9L45 -21.9L46 -21.8L47 -22.3L48 -21.8L49 -21.6L50 -21.6L51 -21.4L52 -21.2L53 -21.7L54 -21.4L55 -22.0L56 -22.0L57 -21.6L58 -21.9L59 -21.9L60 -21.8L61 -21.7L62 -22.3L63 -22.0L64 -22.0L65 -21.9L66 -21.7L67 -21.7L68 -21.9L69 -21.6L70 -21.9L71 -21.7L72 -22.0L73 -21.6L74 -21.7L75 -21.6L76 -21.9L77 -21.8L78 -22.1L79 -21.8L80 -21.8L81 -22.0L82 -21.8L83 -21.7L84 -21.8L85 -21.6L86 -21.6L87 -22.1L88 -22.4L89 -22.1L90 -21.8L91 -22.0L92 -22.2L93 -22.1L94 -22.0L95 -21.8L96 -22.1L97 -21.9L98 -22.1L99 -21.7L100 -21.5L101 -21.6L102 -21.3L103 -21.6L104 -21.7L105 -21.6L106 -21.9L107 -21.9L108 -21.8L109 -21.9L110 -21.5L111 -22.2L112 -21.8L113 -22.2L114 -22.3L115 -22.2L116 -22.3L117 -22.0L118 -21.9L119 -22.1L120 -22.3L121 -22.6L122 -22.6L123 -22.5L124 -21.7L125 -21.3L126 -21.3L127 -21.0L128 -21.0L129 -21.1L130 -21.6L131 -21.7L132 -21.2L133 -21.6L134 -21.6L135 -21.2L136 -21.0L137 -21.1L138 -21.2L139 -21.3L140 -21.7L141 -21.5L142 -21.4L143 -21.1L144 -21.3L145 -21.2L146 -21.4L147 -21.0L148 -21.2L149 -21.2L150 -21.5L151 -21.6L152 -21.7L153 -22.0L154 -20.8L155 -19.5L156 -20.7L157 -23.5L158 -25.6L159 -23.3L160 -23.2L161 -22.9L162 -22.5L163 -22.0L164 -21.5L165 -21.3L166 -21.3L167 -21.3L168 -21.5L169 -21.4L170 -21.2L171 -21.4L172 -21.2L173 -21.4L174 -21.4L175 -21.8L176 -21.4L177 -21.6L178 -21.4L179 -21.6L180 -21.3L181 -21.2L182 -21.3L183 -20.8L184 -21.2L185 -21.2L186 -21.3L187 -21.4L188 -21.2L189 -21.1L190 -20.9L191 -21.4L192 -21.0L193 -20.9L194 -21.1L195 -21.5L196 -21.7L197 -21.2L198 -21.3L199 -21.1L200 -21.2L201 -21.3L202 -21.1L203 -21.0L204 -21.5L205 -21.5L206 -21.5L207 -21.4L208 -21.5L209 -21.3L210 -21.5L211 -21.3L212 -21.5L213 -21.5L214 -21.3L215 -21.5L216 -21.2L217 -21.6L218 -21.7L219 -21.5L220 -21.7L221 -21.2L222 -21.3L223 -21.2L224 -21.5L225 -21.4L226 -21.4L227 -21.3L228 -21.2L229 -21.3L230 -21.3L231 -21.6L232 -21.6L233 -21.4L234 -21.3L235 -21.0L236 -21.3L237 -21.5L238 -21.5L239 -21.7L240 -21.6L241 -21.5L242 -21.4L243 -21.6L244 -21.2"/><path id="s0101" d="M0 -21.5L1 -21.6L2 -21.7L3 -21.6L4 -21.7L5 -21.9L6 -21.5L7 -21.9L8 -21.7L9 -22.2L10 -21.6L11 -21.4L12 -21.9L13 -22.0L14 -21.8L15 -21.7L16 -21.4L17 -21.6L18 -21.3L19 -21.7L20 -22.2L21 -21.8L22 -21.8L23 -22.2L24 -21.8L25 -22.0L26 -21.7L27 -22.0L28 -22.2L29 -21.9L30 -21.6L31 -21.9L32 -21.8L33 -21.8L34 -21.9L35 -21.9L36 -21.9L37 -21.4L38 -21.8L39 -21.7L40 -21.4L41 -21.7L42 -21.8L43 -21.6L44 -21.9L45 -21.7L46 -21.8L47 -21.6L48 -21.3L49 -21.4L50 -21.5L51 -21.6L52 -21.7L53 -21.6L54 -21.8L55 -21.4L56 -21.9L57 -21.7L58 -21.9L59 -22.1L60 -21.9L61 -21.7L62 -21.7L63 -21.7L64 -21.8L65 -21.8L66 -22.0L67 -21.7L68 -21.5L69 -21.4L70 -21.6L71 -21.6L72 -21.5L73 -21.9L74 -21.7L75 -21.9L76 -21.6L77 -21.9L78 -22.1L79 -21.9L80 -21.9L81 -22.2L82 -21.6L83 -21.4L84 -21.6L85 -21.9L86 -21.7L87 -22.2L88 -22.1L89 -22.2L90 -21.9L91 -21.9L92 -21.8L93 -21.8L94 -21.7L95 -22.2L96 -22.1L97 -22.2L98 -21.9L99 -21.7L100 -21.7L101 -21.5L102 -21.7L103 -21.8L104 -21.4L105 -21.5L106 -21.9L107 -21.9L108 -21.8L109 -21.6L110 -21.4L111 -21.4L112 -22.0L113 -21.6L114 -21.8L115 -21.9L116 -21.7L117 -21.4L118 -21.5L119 -21.9L120 -22.7L121 -22.8L122 -22.7L123 -22.2L124 -21.8L125 -21.6L126 -21.5L127 -21.5L128 -21.4L129 -21.2L130 -21.5L131 -21.6L132 -21.6L133 -21.7L134 -21.5L135 -21.3L136 -21.5L137 -21.1L138 -21.3L139 -21.2L140 -20.7L141 -20.8L142 -20.9L143 -21.7L144 -21.5L145 -21.5L146 -21.8L147 -22.0L148 -21.8L149 -21.6L150 -20.9L151 -20.8L152 -21.4L153 -21.5L154 -21.2L155 -19.8L156 -21.1L157 -23.5L158 -25.8L159 -23.6L160 -22.9L161 -22.3L162 -22.0L163 -21.8L164 -21.8L165 -21.7L166 -21.5L167 -21.8L168 -21.8L169 -21.6L170 -21.6L171 -21.3L172 -21.5L173 -21.4L174 -21.3L175 -21.6L176 -21.8L177 -21.4L178 -21.5L179 -21.3L180 -21.3L181 -21.2L182 -21.2L183 -21.6L184 -21.2L185 -21.0L186 -21.3L187 -20.8L188 -21.0L189 -21.1L190 -21.2L191 -21.2L192 -21.3L193 -21.6L194 -21.5L195 -21.3L196 -22.0L197 -21.6L198 -21.5L199 -21.3L200 -21.4L201 -21.2L202 -21.5L203 -21.6L204 -21.2L205 -21.7L206 -21.2L207 -21.4L208 -20.9L209 -21.3L210 -21.6L211 -21.3L212 -21.4L213 -21.4L214 -21.7L215 -21.1L216 -21.2L217 -21.3L218 -21.2L219 -21.1L220 -21.3L221 -21.6L222 -21.4L223 -21.3L224 -21.3L225 -21.2L226 -21.3L227 -21.3L228 -21.5L229 -21.5L230 -21.4L231 -21.6L232 -21.4L233 -21.3L234 -21.2L235 -21.1L236 -21.4L237 -21.4L238 -21.4L239 -21.7L240 -21.3L241 -21.0L242 -21.2L243 -21.1L244 -21.4"/><path id="s0102" d="M0 -21.8L1 -22.1L2 -21.9L3 -22.0L4 -22.0L5 -21.8L6 -21.7L7 -22.0L8 -22.1L9 -21.6L10 -21.9L11 -21.8L12 -21.9L13 -22.0L14 -22.1L15 -21.6L16 -21.7L17 -22.1L18 -22.2L19 -21.6L20 -21.7L21 -21.6L22 -21.7L23 -21.9L24 -21.8L25 -21.8L26 -21.8L27 -21.9L28 -21.8L29 -21.9L30 -22.0L31 -21.5L32 -21.6L33 -21.7L34 -22.3L35 -21.9L36 -21.6L37 -21.9L38 -21.9L39 -21.8L40 -22.0L41 -21.9L42 -21.6L43 -21.8L44 -21.4L45 -21.6L46 -21.5L47 -21.6L48 -21.7L49 -21.6L50 -21.6L51 -21.9L52 -21.8L53 -21.5L54 -21.6L55 -21.6L56 -21.6L57 -21.6L58 -21.6L59 -21.4L60 -21.5L61 -21.8L62 -21.9L63 -21.8L64 -21.9L65 -21.9L66 -22.2L67 -22.1L68 -22.0L69 -22.1L70 -22.4L71 -21.9L72 -21.8L73 -21.6L74 -21.3L75 -21.4L76 -21.7L77 -21.7L78 -21.7L79 -21.9L80 -21.7L81 -21.8L82 -21.8L83 -21.6L84 -21.6L85 -21.4L86 -21.9L87 -22.0L88 -21.8L89 -21.9L90 -21.7L91 -21.7L92 -21.8L93 -22.0L94 -21.4L95 -21.5L96 -22.0L97 -21.6L98 -22.0L99 -21.7L100 -21.9L101 -21.9L102 -21.5L103 -21.6L104 -21.8L105 -21.8L106 -21.8L107 -22.0L108 -22.3L109 -21.9L110 -21.8L111 -22.0L112 -21.8L113 -22.0L114 -22.0L115 -22.5L116 -21.7L117 -21.5L118 -21.6L119 -22.0L120 -22.4L121 -22.8L122 -22.7L123 -22.3L124 -21.7L125 -21.4L126 -21.2L127 -21.0L128 -21.2L129 -21.5L130 -21.5L131 -21.3L132 -21.2L133 -21.1L134 -21.3L135 -21.2L136 -21.3L137 -21.1L138 -21.1L139 -21.1L140 -21.0L141 -21.8L142 -21.5L143 -21.5L144 -21.6L145 -21.7L146 -21.4L147 -21.2L148 -21.3L149 -21.2L150 -21.4L151 -21.6L152 -21.9L153 -22.1L154 -20.8L155 -19.7L156 -20.7L157 -23.6L158 -25.2L159 -23.4L160 -22.3L161 -22.4L162 -22.6L163 -21.8L164 -21.5L165 -21.6L166 -21.5L167 -21.6L168 -21.6L169 -21.4L170 -21.4L171 -21.4L172 -21.6L173 -21.5L174 -21.4L175 -21.6L176 -21.7L177 -21.5L178 -21.3L179 -21.2L180 -21.5L181 -21.1L182 -21.3L183 -21.7L184 -21.6L185 -21.3L186 -21.2L187 -21.7L188 -21.4L189 -20.8L190 -21.2L191 -21.0L192 -21.1L193 -21.4L194 -21.2L195 -21.5L196 -21.4L197 -21.9L198 -21.5L199 -21.2L200 -21.5L201 -21.2L202 -21.1L203 -21.5L204 -21.2L205 -21.5L206 -21.2L207 -21.4L208 -20.9L209 -21.3L210 -21.6L211 -21.4L212 -21.3L213 -21.6L214 -21.8L215 -21.3L216 -21.5L217 -21.0L218 -21.6L219 -21.5L220 -21.4L221 -21.3L222 -21.2L223 -21.3L224 -21.5L225 -21.5L226 -21.6L227 -21.6L228 -21.6L229 -21.7L230 -21.0L231 -21.3L232 -21.5L233 -21.2L234 -21.0L235 -21.2L236 -21.3L237 -21.2L238 -21.4L239 -21.5L240 -21.4L241 -21.5L242 -21.3L243 -21.6L244 -21.3"/><path id="s0103" d="M0 -22.0L1 -21.9L2 -21.7L3 -21.4L4 -21.6L5 -22.2L6 -22.1L7 -21.5L8 -21.8L9 -21.7L10 -21.6L11 -21.4L12 -21.8L13 -21.5L14 -21.8L15 -21.9L16 -21.7L17 -22.0L18 -22.1L19 -22.0L20 -21.9L21 -22.2L22 -21.7L23 -21.8L24 -21.7L25 -22.0L26 -22.0L27 -22.0L28 -21.4L29 -21.8L30 -21.9L31 -22.2L32 -21.8L33 -21.8L34 -21.9L35 -22.3L36 -21.9L37 -21.8L38 -22.1L39 -21.6L40 -21.5L41 -21.8L42 -21.8L43 -22.0L44 -21.6L45 -22.1L46 -22.1L47 -22.1L48 -21.8L49 -21.7L50 -21.4L51 -22.0L52 -21.7L53 -21.8L54 -22.0L55 -21.8L56 -21.9L57 -22.1L58 -21.9L59 -21.8L60 -22.1L61 -21.7L62 -21.7L63 -21.5L64 -21.9L65 -21.8L66 -21.4L67 -22.0L68 -22.1L69 -21.9L70 -21.8L71 -22.0L72 -22.0L73 -21.9L74 -21.7L75 -22.0L76 -22.1L77 -21.8L78 -22.3L79 -22.1L80 -22.3L81 -21.8L82 -21.7L83 -21.7L84 -21.9L85 -22.0L86 -21.6L87 -21.5L88 -21.4L89 -21.8L90 -21.8L91 -21.9L92 -21.7L93 -21.8L94 -21.9L95 -21.6L96 -21.8L97 -21.7L98 -21.8L99 -22.0L100 -21.5L101 -21.8L102 -21.7L103 -21.7L104 -21.9L105 -21.8L106 -22.0L107 -21.9L108 -21.8L109 -21.9L110 -21.8L111 -21.6L112 -22.0L113 -21.8L114 -21.5L115 -22.1L116 -22.0L117 -21.9L118 -21.8L119 -22.1L120 -22.3L121 -22.5L122 -22.4L123 -22.2L124 -22.4L125 -21.9L126 -21.7L127 -21.8L128 -21.1L129 -21.5L130 -21.6L131 -22.0L132 -21.5L133 -21.4L134 -21.5L135 -21.3L136 -21.1L137 -21.4L138 -21.1L139 -21.2L140 -21.6L141 -21.4L142 -21.2L143 -21.7L144 -21.3L145 -21.4L146 -21.7L147 -21.6L148 -21.3L149 -21.5L150 -21.6L151 -21.1L152 -21.4L153 -21.5L154 -20.3L155 -19.6L156 -21.0L157 -23.6L158 -25.4L159 -23.3L160 -23.0L161 -22.6L162 -22.2L163 -21.6L164 -21.5L165 -21.6L166 -21.7L167 -21.8L168 -21.8L169 -21.3L170 -21.5L171 -21.5L172 -21.0L173 -21.3L174 -21.6L175 -21.7L176 -21.6L177 -21.4L178 -21.3L179 -21.1L180 -21.4L181 -21.8L182 -21.2L183 -21.2L184 -21.4L185 -21.5L186 -21.3L187 -21.5L188 -21.3L189 -21.5L190 -21.4L191 -21.6L192 -21.2L193 -21.2L194 -21.0L195 -21.6L196 -21.2L197 -21.2L198 -21.5L199 -21.3L200 -21.4L201 -21.3L202 -21.2L203 -21.6L204 -21.4L205 -20.9L206 -21.4L207 -21.4L208 -21.1L209 -21.2L210 -21.3L211 -21.4L212 -21.4L213 -21.1L214 -21.2L215 -21.5L216 -21.1L217 -21.0L218 -21.3L219 -21.2L220 -21.0L221 -20.9L222 -21.4L223 -21.2L224 -21.5L225 -21.5L226 -21.0L227 -21.4L228 -21.4L229 -21.4L230 -21.5L231 -21.3L232 -21.2L233 -21.5L234 -21.4L235 -21.3L236 -21.2L237 -21.2L238 -21.3L239 -21.2L240 -21.1L241 -21.1L242 -20.7L243 -20.8L244 -21.0"/><path id="s0104" d="M0 -21.8L1 -22.0L2 -22.0L3 -22.2L4 -22.0L5 -21.8L6 -21.9L7 -21.8L8 -21.9L9 -22.1L10 -21.8L11 -21.8L12 -21.7L13 -22.0L14 -22.0L15 -21.7L16 -22.0L17 -22.1L18 -22.0L19 -21.7L20 -22.1L21 -21.6L22 -21.8L23 -21.8L24 -21.9L25 -21.5L26 -21.7L27 -22.0L28 -21.9L29 -21.8L30 -22.1L31 -22.0L32 -21.9L33 -21.8L34 -21.8L35 -22.0L36 -21.9L37 -22.1L38 -21.7L39 -21.7L40 -22.0L41 -21.9L42 -21.8L43 -21.7L44 -22.1L45 -21.9L46 -21.9L47 -21.8L48 -21.9L49 -21.8L50 -21.7L51 -22.0L52 -21.7L53 -21.6L54 -21.6L55 -21.8L56 -21.9L57 -21.8L58 -21.7L59 -21.7L60 -22.0L61 -22.1L62 -21.9L63 -21.8L64 -21.9L65 -21.7L66 -21.7L67 -21.6L68 -21.6L69 -21.6L70 -21.5L71 -22.0L72 -21.7L73 -21.8L74 -21.6L75 -21.8L76 -22.1L77 -21.8L78 -21.5L79 -21.6L80 -21.6L81 -21.8L82 -21.6L83 -21.7L84 -21.8L85 -22.0L86 -21.6L87 -22.2L88 -21.8L89 -21.7L90 -21.4L91 -21.5L92 -21.9L93 -21.5L94 -21.4L95 -21.8L96 -22.1L97 -21.7L98 -21.9L99 -21.9L100 -22.0L101 -21.9L102 -21.7L103 -21.4L104 -21.7L105 -21.6L106 -21.6L107 -21.7L108 -21.6L109 -21.8L110 -21.8L111 -22.1L112 -22.1L113 -22.0L114 -22.1L115 -22.2L116 -21.8L117 -21.7L118 -21.6L119 -21.8L120 -21.9L121 -22.9L122 -22.4L123 -22.1L124 -21.8L125 -21.5L126 -21.2L127 -21.1L128 -21.5L129 -21.7L130 -21.3L131 -21.2L132 -20.9L133 -21.4L134 -21.1L135 -21.4L136 -21.8L137 -21.5L138 -21.3L139 -21.3L140 -21.5L141 -21.3L142 -21.5L143 -21.2L144 -21.3L145 -21.7L146 -21.0L147 -21.5L148 -21.2L149 -21.2L150 -21.2L151 -21.1L152 -21.4L153 -21.8L154 -20.9L155 -19.7L156 -20.7L157 -23.6L158 -25.7L159 -24.1L160 -23.4L161 -22.6L162 -22.4L163 -22.1L164 -21.6L165 -21.9L166 -21.5L167 -21.4L168 -21.6L169 -21.1L170 -21.0L171 -21.1L172 -21.5L173 -21.1L174 -21.2L175 -21.6L176 -21.4L177 -21.4L178 -21.3L179 -21.4L180 -21.2L181 -21.2L182 -21.1L183 -21.4L184 -21.6L185 -21.4L186 -21.2L187 -21.4L188 -21.0L189 -21.2L190 -21.5L191 -21.6L192 -21.5L193 -21.4L194 -20.9L195 -21.4L196 -21.5L197 -21.4L198 -21.2L199 -21.2L200 -21.3L201 -21.4L202 -21.4L203 -21.4L204 -21.0L205 -21.2L206 -21.2L207 -21.4L208 -21.5L209 -21.2L210 -21.1L211 -21.3L212 -21.0L213 -21.3L214 -21.2L215 -21.3L216 -21.1L217 -21.5L218 -21.2L219 -21.1L220 -21.1L221 -21.2L222 -21.5L223 -21.3L224 -21.1L225 -21.6L226 -21.2L227 -21.4L228 -21.3L229 -21.5L230 -21.3L231 -21.0L232 -21.2L233 -21.1L234 -21.5L235 -21.3L236 -21.7L237 -21.4L238 -21.5L239 -21.6L240 -21.5L241 -21.6L242 -21.4L243 -21.5L244 -21.4"/><path id="s0110" d="M0 -6.5L1 -6.6L2 -6.6L3 -6.6L4 -6.9L5 -6.7L6 -6.7L7 -6.3L8 -6.3L9 -6.5L10 -6.7L11 -6.4L12 -6.5L13 -6.7L14 -6.6L15 -6.7L16 -6.7L17 -6.7L18 -6.7L19 -6.5L20 -6.5L21 -6.4L22 -6.4L23 -6.4L24 -6.6L25 -6.6L26 -6.7L27 -6.7L28 -6.6L29 -6.5L30 -6.5L31 -6.4L32 -6.3L33 -6.6L34 -6.7L35 -6.5L36 -6.4L37 -6.7L38 -6.8L39 -6.8L40 -6.9L41 -6.6L42 -6.8L43 -6.3L44 -6.4L45 -6.5L46 -6.6L47 -6.7L48 -6.8L49 -6.6L50 -6.6L51 -6.6L52 -6.3L53 -6.7L54 -6.6L55 -6.5L56 -6.4L57 -6.5L58 -6.5L59 -6.6L60 -6.4L61 -6.6L62 -6.4L63 -6.5L64 -6.6L65 -6.7L66 -6.6L67 -6.5L68 -6.6L69 -6.5L70 -6.7L71 -6.4L72 -6.6L73 -6.6L74 -6.8L75 -6.5L76 -6.5L77 -6.5L78 -6.6L79 -6.4L80 -6.4L81 -6.5L82 -6.6L83 -6.6L84 -6.7L85 -6.9L86 -6.6L87 -6.8L88 -6.5L89 -6.4L90 -6.6L91 -6.6L92 -6.5L93 -6.4L94 -6.6L95 -6.7L96 -6.5L97 -6.5L98 -6.3L99 -6.6L100 -6.4L101 -6.8L102 -6.6L103 -6.7L104 -6.7L105 -6.4L106 -6.8L107 -6.8L108 -6.6L109 -6.5L110 -6.5L111 -6.6L112 -6.5L113 -6.8L114 -6.7L115 -6.9L116 -6.7L117 -6.7L118 -6.6L119 -6.8L120 -7.0L121 -7.1L122 -7.0L123 -7.0L124 -6.8L125 -6.1L126 -6.2L127 -6.2L128 -6.4L129 -6.0L130 -5.9L131 -6.2L132 -6.3L133 -6.4L134 -6.2L135 -6.0L136 -6.3L137 -6.2L138 -5.8L139 -5.9L140 -5.9L141 -6.0L142 -6.2L143 -6.1L144 -6.0L145 -6.2L146 -6.2L147 -6.1L148 -6.1L149 -6.2L150 -5.9L151 -6.0L152 -6.3L153 -6.4L154 -5.3L155 -4.1L156 -5.7L157 -8.4L158 -10.4L159 -8.6L160 -7.7L161 -7.2L162 -7.1L163 -6.5L164 -6.3L165 -6.4L166 -6.1L167 -6.4L168 -6.0L169 -6.1L170 -6.0L171 -6.2L172 -6.0L173 -6.1L174 -6.0L175 -6.4L176 -6.4L177 -6.3L178 -6.2L179 -6.1L180 -5.9L181 -6.0L182 -6.0L183 -6.2L184 -6.2L185 -6.3L186 -6.2L187 -6.0L188 -6.2L189 -6.1L190 -6.3L191 -6.1L192 -5.9L193 -5.9L194 -6.1L195 -6.0L196 -6.2L197 -6.1L198 -6.2L199 -6.0L200 -6.1L201 -6.3L202 -6.2L203 -5.9L204 -6.0L205 -6.1L206 -6.0L207 -6.1L208 -6.3L209 -6.1L210 -6.0L211 -5.9L212 -6.1L213 -6.1L214 -6.1L215 -6.2L216 -6.2L217 -6.2L218 -6.0L219 -6.2L220 -6.0L221 -5.9L222 -5.8L223 -5.9L224 -5.9L225 -6.2L226 -6.2L227 -6.1L228 -6.3L229 -6.0L230 -6.1L231 -6.0L232 -5.9L233 -6.2L234 -6.0L235 -6.0L236 -6.0L237 -6.0L238 -6.0L239 -5.9L240 -6.1L241 -6.0L242 -5.9L243 -6.1L244 -6.0"/><path id="s0111" d="M0 -6.7L1 -6.4L2 -6.5L3 -6.5L4 -6.4L5 -6.3L6 -6.5L7 -6.5L8 -6.7L9 -6.5L10 -6.4L11 -6.5L12 -6.5L13 -6.4L14 -6.6L15 -6.5L16 -6.9L17 -6.6L18 -6.6L19 -6.7L20 -6.9L21 -6.5L22 -6.4L23 -6.8L24 -6.7L25 -6.5L26 -6.8L27 -6.5L28 -6.5L29 -6.8L30 -6.3L31 -6.8L32 -6.5L33 -6.6L34 -6.5L35 -6.6L36 -6.3L37 -6.5L38 -6.5L39 -6.6L40 -6.6L41 -6.6L42 -6.7L43 -6.8L44 -6.6L45 -6.8L46 -6.5L47 -6.8L48 -6.7L49 -6.8L50 -6.7L51 -6.5L52 -6.5L53 -6.3L54 -6.5L55 -6.5L56 -6.4L57 -6.6L58 -6.7L59 -6.4L60 -6.4L61 -6.5L62 -6.6L63 -6.7L64 -6.5L65 -6.3L66 -6.6L67 -6.6L68 -6.5L69 -6.4L70 -6.4L71 -6.5L72 -6.7L73 -6.4L74 -6.3L75 -6.6L76 -6.4L77 -6.4L78 -6.5L79 -6.7L80 -6.7L81 -6.8L82 -6.7L83 -6.7L84 -6.7L85 -6.5L86 -6.5L87 -6.4L88 -6.6L89 -6.6L90 -6.5L91 -6.8L92 -6.6L93 -6.7L94 -6.8L95 -6.8L96 -6.4L97 -6.7L98 -6.4L99 -6.3L100 -6.3L101 -6.6L102 -6.5L103 -6.5L104 -6.3L105 -6.8L106 -6.4L107 -6.5L108 -6.7L109 -6.7L110 -6.6L111 -6.5L112 -6.5L113 -6.8L114 -7.0L115 -6.9L116 -6.8L117 -6.6L118 -6.6L119 -6.6L120 -6.8L121 -7.4L122 -7.1L123 -7.1L124 -6.8L125 -6.1L126 -6.3L127 -6.3L128 -6.0L129 -6.3L130 -6.2L131 -6.3L132 -6.3L133 -6.1L134 -6.1L135 -6.0L136 -6.3L137 -5.9L138 -6.0L139 -5.7L140 -6.0L141 -6.2L142 -6.1L143 -6.1L144 -6.0L145 -6.1L146 -6.0L147 -6.2L148 -6.2L149 -6.1L150 -6.0L151 -6.1L152 -6.1L153 -6.3L154 -5.2L155 -4.1L156 -5.5L157 -8.6L158 -10.5L159 -8.5L160 -7.6L161 -7.5L162 -7.0L163 -6.5L164 -6.6L165 -6.5L166 -6.2L167 -6.3L168 -6.4L169 -6.4L170 -6.4L171 -6.2L172 -6.0L173 -6.2L174 -6.1L175 -6.4L176 -6.3L177 -6.2L178 -5.9L179 -6.2L180 -6.1L181 -6.0L182 -6.1L183 -6.1L184 -6.2L185 -6.1L186 -6.2L187 -6.0L188 -6.3L189 -6.2L190 -6.3L191 -6.1L192 -6.4L193 -6.0L194 -6.1L195 -6.2L196 -5.9L197 -6.1L198 -5.9L199 -6.3L200 -6.0L201 -6.2L202 -5.9L203 -6.2L204 -5.9L205 -6.2L206 -5.9L207 -6.0L208 -6.0L209 -6.3L210 -6.4L211 -6.2L212 -6.1L213 -6.2L214 -6.1L215 -5.8L216 -6.0L217 -6.0L218 -6.2L219 -6.0L220 -6.0L221 -6.0L222 -5.8L223 -5.9L224 -6.1L225 -6.2L226 -6.1L227 -6.0L228 -6.1L229 -5.9L230 -5.9L231 -6.1L232 -6.0L233 -6.2L234 -6.2L235 -6.0L236 -5.9L237 -6.1L238 -6.2L239 -6.3L240 -6.0L241 -5.8L242 -6.1L243 -6.1L244 -6.0"/><path id="s0112" d="M0 -6.6L1 -6.4L2 -6.3L3 -6.5L4 -6.6L5 -6.4L6 -6.7L7 -6.4L8 -6.6L9 -6.5L10 -6.5L11 -6.6L12 -6.6L13 -6.5L14 -6.8L15 -6.6L16 -6.8L17 -6.8L18 -6.4L19 -6.6L20 -6.2L21 -6.7L22 -6.7L23 -6.6L24 -6.6L25 -6.6L26 -6.6L27 -6.5L28 -6.6L29 -6.5L30 -6.6L31 -6.4L32 -6.5L33 -6.4L34 -6.5L35 -6.8L36 -6.3L37 -6.6L38 -6.4L39 -6.6L40 -6.7L41 -6.6L42 -6.8L43 -6.8L44 -6.5L45 -6.8L46 -6.4L47 -6.8L48 -6.5L49 -6.3L50 -6.3L51 -6.4L52 -6.4L53 -6.4L54 -6.6L55 -6.7L56 -6.6L57 -6.7L58 -6.6L59 -6.5L60 -6.6L61 -6.6L62 -6.5L63 -6.7L64 -6.5L65 -6.3L66 -6.5L67 -6.5L68 -6.7L69 -6.5L70 -6.4L71 -6.6L72 -6.7L73 -6.7L74 -6.8L75 -6.4L76 -6.6L77 -6.5L78 -6.6L79 -6.8L80 -6.6L81 -6.5L82 -6.7L83 -6.5L84 -6.7L85 -6.8L86 -6.6L87 -6.6L88 -6.6L89 -6.8L90 -6.7L91 -6.8L92 -6.5L93 -6.7L94 -6.7L95 -6.8L96 -6.9L97 -6.8L98 -6.4L99 -6.6L100 -7.0L101 -6.7L102 -6.7L103 -6.4L104 -6.8L105 -6.8L106 -6.6L107 -6.6L108 -6.5L109 -6.5L110 -6.7L111 -6.6L112 -6.7L113 -6.6L114 -6.7L115 -6.9L116 -6.7L117 -6.8L118 -6.5L119 -6.9L120 -6.9L121 -7.2L122 -7.2L123 -6.8L124 -6.6L125 -6.1L126 -6.0L127 -6.1L128 -6.1L129 -6.0L130 -6.0L131 -6.2L132 -6.2L133 -6.0L134 -6.2L135 -6.2L136 -6.2L137 -5.8L138 -6.0L139 -5.9L140 -5.7L141 -6.1L142 -6.2L143 -6.3L144 -6.1L145 -6.4L146 -6.0L147 -6.0L148 -6.0L149 -6.1L150 -6.0L151 -6.1L152 -6.4L153 -6.4L154 -5.4L155 -4.4L156 -5.6L157 -8.2L158 -10.4L159 -8.4L160 -7.5L161 -7.4L162 -7.3L163 -6.7L164 -6.2L165 -6.3L166 -6.2L167 -6.2L168 -6.3L169 -6.4L170 -6.2L171 -6.2L172 -6.2L173 -6.2L174 -6.2L175 -6.3L176 -6.1L177 -6.1L178 -5.8L179 -6.1L180 -6.1L181 -6.1L182 -6.2L183 -5.9L184 -6.2L185 -6.1L186 -6.1L187 -6.0L188 -6.2L189 -6.1L190 -6.4L191 -6.1L192 -6.0L193 -6.1L194 -6.2L195 -6.1L196 -6.1L197 -6.3L198 -5.7L199 -6.0L200 -5.8L201 -6.1L202 -6.0L203 -5.9L204 -6.0L205 -6.1L206 -5.9L207 -5.9L208 -6.2L209 -6.0L210 -6.0L211 -6.1L212 -6.0L213 -6.0L214 -6.2L215 -6.2L216 -6.0L217 -6.0L218 -6.0L219 -6.1L220 -6.0L221 -5.9L222 -5.8L223 -5.9L224 -6.1L225 -6.3L226 -5.9L227 -6.0L228 -6.1L229 -6.1L230 -6.1L231 -5.8L232 -6.2L233 -6.3L234 -6.3L235 -6.2L236 -6.3L237 -6.3L238 -6.0L239 -6.3L240 -6.1L241 -6.1L242 -6.0L243 -6.0L244 -5.9"/><path id="s0120" d="M0 -40.3L1 -41.8L2 -42.8L3 -39.0L4 -34.1L5 -32.2L6 -33.5L7 -34.3L8 -32.1L9 -30.4L10 -34.6L11 -42.5L12 -50.1L13 -51.6L14 -53.3L15 -58.3L16 -63.9L17 -65.0L18 -55.1L19 -43.8L20 -40.7L21 -37.3L22 -35.4L23 -39.9L24 -44.2L25 -44.5L26 -39.7L27 -36.1L28 -37.5L29 -36.1L30 -34.4L31 -33.9L32 -35.4L33 -36.6L34 -34.9L35 -33.5L36 -39.2L37 -46.6L38 -47.1L39 -46.7L40 -56.3L41 -60.2L42 -45.9L43 -34.4L44 -33.7L45 -33.3L46 -37.7L47 -42.3L48 -44.8L49 -38.7L50 -33.3L51 -33.3L52 -34.3L53 -35.2L54 -33.8L55 -32.6L56 -33.7L57 -33.8L58 -33.2L59 -33.0L60 -41.5L61 -51.1L62 -50.7L63 -50.7L64 -56.3L65 -59.3L66 -47.1L67 -35.3L68 -34.0L69 -37.9L70 -41.7L71 -39.5L72 -36.1L73 -34.1L74 -32.7L75 -31.4L76 -31.9L77 -32.8L78 -33.1L79 -31.6L80 -30.5L81 -32.2L82 -34.3L83 -37.9L84 -42.6L85 -46.9L86 -50.4L87 -53.2L88 -55.4L89 -51.3L90 -45.1L91 -35.0L92 -32.3L93 -37.1L94 -40.0L95 -35.7L96 -32.1L97 -31.6L98 -31.0L99 -31.1L100 -31.5L101 -31.8L102 -32.6L103 -31.9L104 -31.3L105 -31.6L106 -32.9L107 -35.5L108 -39.3L109 -42.8L110 -44.4L111 -43.9L112 -43.1L113 -42.8L114 -42.3L115 -42.3L116 -41.2L117 -40.2L118 -37.0L119 -33.7L120 -32.0L121 -33.9L122 -34.5L123 -34.9L124 -33.2L125 -31.2L126 -31.6L127 -32.4L128 -33.2L129 -35.0L130 -36.8L131 -39.4L132 -43.4L133 -46.7L134 -52.2L135 -58.1L136 -57.6L137 -48.7L138 -43.0L139 -41.7L140 -40.4L141 -38.4L142 -36.6L143 -35.3L144 -33.5L145 -33.1L146 -34.4L147 -35.3L148 -36.1L149 -36.4L150 -37.2L151 -35.4L152 -33.1L153 -36.4L154 -44.2L155 -42.1L156 -36.9L157 -46.7L158 -59.2L159 -52.3L160 -41.6L161 -35.0L162 -30.3L163 -29.4L164 -28.8L165 -26.4L166 -24.3L167 -24.6L168 -25.0L169 -25.6L170 -26.1L171 -26.5L172 -24.7L173 -23.3L174 -23.4L175 -24.6L176 -25.8L177 -26.7L178 -27.3L179 -28.2L180 -27.4L181 -26.5L182 -26.8L183 -28.0L184 -28.2L185 -27.0L186 -27.4L187 -28.6L188 -29.5L189 -27.9L190 -27.4L191 -28.8L192 -28.9L193 -26.7L194 -25.9L195 -28.3L196 -29.1L197 -26.8L198 -26.9L199 -28.9L200 -29.7L201 -27.6L202 -25.3L203 -26.5L204 -28.5L205 -29.2L206 -28.5L207 -28.2L208 -29.6L209 -30.4L210 -30.0L211 -29.9L212 -29.3L213 -27.7L214 -26.9L215 -28.2L216 -30.4L217 -33.5L218 -31.3L219 -28.9L220 -27.5L221 -28.5L222 -29.4L223 -29.3L224 -28.6L225 -28.6L226 -28.8L227 -29.2L228 -28.5L229 -27.1L230 -28.4L231 -33.1L232 -36.6L233 -32.3L234 -28.2L235 -28.5L236 -30.4L237 -32.1L238 -34.6L239 -36.9L240 -38.5L241 -34.0L242 -29.2L243 -29.7L244 -30.9"/><path id="s0121" d="M0 -41.1L1 -42.3L2 -42.7L3 -38.7L4 -34.0L5 -32.5L6 -33.6L7 -34.2L8 -32.3L9 -30.6L10 -35.1L11 -42.8L12 -50.0L13 -51.9L14 -53.7L15 -58.6L16 -63.4L17 -64.7L18 -54.3L19 -43.8L20 -40.3L21 -37.1L22 -35.5L23 -39.9L24 -43.9L25 -44.3L26 -39.6L27 -36.3L28 -37.0L29 -35.9L30 -34.1L31 -34.2L32 -35.1L33 -36.6L34 -34.9L35 -33.6L36 -38.9L37 -46.6L38 -46.8L39 -47.0L40 -56.9L41 -59.9L42 -44.8L43 -34.1L44 -33.4L45 -33.1L46 -37.1L47 -41.8L48 -43.8L49 -38.1L50 -32.8L51 -33.0L52 -34.4L53 -35.1L54 -33.8L55 -33.3L56 -33.6L57 -33.7L58 -33.0L59 -32.9L60 -41.6L61 -51.1L62 -50.7L63 -51.4L64 -56.0L65 -59.7L66 -46.9L67 -35.0L68 -34.2L69 -37.4L70 -41.3L71 -39.5L72 -36.4L73 -34.1L74 -33.0L75 -31.6L76 -32.1L77 -33.5L78 -33.1L79 -31.9L80 -30.7L81 -32.1L82 -33.7L83 -37.8L84 -42.0L85 -46.8L86 -50.5L87 -54.3L88 -55.8L89 -51.2L90 -45.1L91 -35.0L92 -32.8L93 -37.3L94 -40.1L95 -35.7L96 -32.3L97 -31.7L98 -31.6L99 -30.9L100 -31.1L101 -31.7L102 -32.0L103 -31.7L104 -31.2L105 -31.6L106 -33.0L107 -35.6L108 -39.6L109 -43.4L110 -45.0L111 -43.7L112 -42.9L113 -42.7L114 -42.3L115 -41.9L116 -41.4L117 -40.3L118 -37.3L119 -33.8L120 -31.8L121 -33.6L122 -35.3L123 -35.3L124 -32.9L125 -31.2L126 -31.7L127 -32.2L128 -32.7L129 -34.9L130 -36.9L131 -39.5L132 -43.2L133 -47.1L134 -52.1L135 -58.7L136 -58.2L137 -49.0L138 -42.8L139 -41.9L140 -40.4L141 -38.3L142 -36.8L143 -35.0L144 -33.5L145 -33.1L146 -34.1L147 -35.1L148 -35.6L149 -36.1L150 -37.0L151 -35.2L152 -33.0L153 -36.5L154 -44.1L155 -42.3L156 -37.3L157 -46.6L158 -58.7L159 -51.7L160 -41.6L161 -35.0L162 -30.2L163 -29.5L164 -28.9L165 -26.1L166 -24.0L167 -24.8L168 -25.4L169 -25.6L170 -26.1L171 -26.2L172 -24.7L173 -22.8L174 -23.0L175 -24.1L176 -25.4L177 -26.7L178 -27.6L179 -28.6L180 -27.3L181 -26.6L182 -26.8L183 -27.8L184 -27.9L185 -26.9L186 -27.3L187 -28.6L188 -29.2L189 -27.8L190 -27.7L191 -29.1L192 -28.6L193 -26.6L194 -25.8L195 -28.5L196 -29.3L197 -26.6L198 -26.5L199 -28.8L200 -29.6L201 -27.7L202 -25.4L203 -26.6L204 -28.5L205 -29.3L206 -28.8L207 -28.3L208 -29.4L209 -30.6L210 -30.5L211 -29.9L212 -29.4L213 -28.2L214 -27.1L215 -28.1L216 -30.7L217 -33.4L218 -31.1L219 -29.2L220 -27.5L221 -28.4L222 -29.8L223 -29.5L224 -29.2L225 -28.9L226 -29.1L227 -29.2L228 -28.5L229 -27.1L230 -28.6L231 -32.8L232 -36.8L233 -32.2L234 -28.7L235 -28.6L236 -30.4L237 -31.9L238 -34.1L239 -36.4L240 -38.2L241 -33.3L242 -29.0L243 -29.9L244 -31.0"/><path id="s0122" d="M0 -41.0L1 -41.8L2 -42.9L3 -39.2L4 -33.9L5 -32.1L6 -33.7L7 -34.4L8 -32.4L9 -30.4L10 -35.0L11 -42.3L12 -49.9L13 -51.9L14 -53.8L15 -57.7L16 -63.5L17 -64.9L18 -54.5L19 -44.2L20 -40.7L21 -36.8L22 -35.3L23 -39.6L24 -44.7L25 -45.2L26 -40.0L27 -36.2L28 -37.0L29 -35.8L30 -33.9L31 -34.1L32 -35.4L33 -36.5L34 -35.0L35 -33.5L36 -39.4L37 -46.6L38 -47.2L39 -46.9L40 -56.9L41 -60.2L42 -45.3L43 -34.3L44 -33.6L45 -33.5L46 -37.3L47 -42.3L48 -44.4L49 -38.2L50 -32.8L51 -32.9L52 -33.8L53 -34.9L54 -33.7L55 -32.7L56 -33.6L57 -33.5L58 -32.8L59 -32.7L60 -41.4L61 -51.0L62 -50.3L63 -50.6L64 -56.4L65 -59.7L66 -47.5L67 -35.5L68 -34.3L69 -37.9L70 -41.9L71 -39.4L72 -36.1L73 -33.6L74 -32.7L75 -31.2L76 -32.3L77 -33.2L78 -33.3L79 -31.9L80 -30.3L81 -31.8L82 -33.9L83 -38.2L84 -43.1L85 -47.3L86 -50.7L87 -53.7L88 -55.5L89 -51.2L90 -44.8L91 -34.7L92 -32.4L93 -37.6L94 -40.0L95 -35.8L96 -32.5L97 -31.6L98 -31.3L99 -31.3L100 -31.6L101 -32.1L102 -32.5L103 -32.2L104 -31.6L105 -31.8L106 -33.0L107 -35.4L108 -38.6L109 -42.9L110 -44.3L111 -43.5L112 -43.0L113 -42.6L114 -42.5L115 -42.2L116 -41.3L117 -40.5L118 -37.3L119 -33.9L120 -31.6L121 -33.7L122 -35.0L123 -35.0L124 -33.3L125 -31.4L126 -31.8L127 -32.3L128 -33.4L129 -34.9L130 -36.9L131 -39.6L132 -43.6L133 -47.2L134 -52.3L135 -58.7L136 -58.0L137 -49.2L138 -42.7L139 -41.5L140 -40.7L141 -38.9L142 -36.8L143 -35.2L144 -34.1L145 -33.2L146 -34.1L147 -35.3L148 -36.0L149 -36.4L150 -36.9L151 -35.0L152 -33.2L153 -36.4L154 -44.0L155 -42.1L156 -37.1L157 -46.4L158 -58.7L159 -52.5L160 -41.5L161 -34.7L162 -30.3L163 -29.8L164 -29.2L165 -26.5L166 -24.1L167 -24.8L168 -25.5L169 -25.8L170 -26.1L171 -26.3L172 -24.6L173 -22.8L174 -23.1L175 -24.3L176 -25.1L177 -26.3L178 -27.2L179 -28.2L180 -27.6L181 -26.2L182 -26.8L183 -28.0L184 -28.2L185 -27.0L186 -27.3L187 -28.6L188 -29.3L189 -28.1L190 -27.5L191 -29.2L192 -28.9L193 -26.6L194 -25.4L195 -28.2L196 -29.2L197 -26.9L198 -26.9L199 -28.8L200 -29.5L201 -27.4L202 -25.2L203 -26.8L204 -28.8L205 -29.0L206 -28.7L207 -28.3L208 -29.7L209 -30.8L210 -30.7L211 -30.2L212 -29.1L213 -27.9L214 -27.0L215 -28.6L216 -31.3L217 -33.7L218 -31.3L219 -28.9L220 -27.5L221 -28.7L222 -29.9L223 -29.2L224 -28.8L225 -28.4L226 -28.9L227 -29.1L228 -28.1L229 -26.7L230 -28.2L231 -32.6L232 -36.8L233 -32.4L234 -28.3L235 -28.6L236 -30.1L237 -32.5L238 -34.6L239 -36.4L240 -38.7L241 -33.6L242 -28.9L243 -29.7L244 -31.0"/><path id="s0123" d="M0 -40.9L1 -41.8L2 -43.4L3 -39.3L4 -33.9L5 -32.4L6 -33.8L7 -34.3L8 -31.9L9 -30.2L10 -34.6L11 -42.5L12 -50.4L13 -52.4L14 -53.6L15 -58.2L16 -63.8L17 -65.1L18 -54.4L19 -44.1L20 -40.4L21 -37.0L22 -35.5L23 -40.3L24 -44.4L25 -45.0L26 -40.1L27 -36.0L28 -36.9L29 -35.6L30 -33.8L31 -33.8L32 -35.0L33 -36.3L34 -34.6L35 -33.0L36 -38.8L37 -46.3L38 -46.5L39 -46.8L40 -57.2L41 -60.7L42 -45.8L43 -34.5L44 -33.9L45 -33.2L46 -37.6L47 -41.9L48 -43.9L49 -38.1L50 -32.6L51 -32.6L52 -34.1L53 -34.8L54 -33.5L55 -32.8L56 -33.9L57 -33.6L58 -33.0L59 -33.1L60 -42.0L61 -51.5L62 -50.8L63 -50.6L64 -55.8L65 -59.2L66 -47.3L67 -35.1L68 -34.1L69 -37.7L70 -41.3L71 -39.4L72 -36.4L73 -33.5L74 -32.4L75 -31.3L76 -31.9L77 -33.0L78 -33.1L79 -31.5L80 -30.1L81 -32.2L82 -34.1L83 -38.2L84 -42.6L85 -47.5L86 -50.5L87 -53.4L88 -54.8L89 -51.0L90 -44.8L91 -35.2L92 -32.9L93 -37.2L94 -40.0L95 -36.0L96 -32.5L97 -31.6L98 -31.3L99 -31.2L100 -31.5L101 -32.2L102 -32.3L103 -31.9L104 -31.3L105 -31.7L106 -32.9L107 -35.5L108 -39.1L109 -43.2L110 -45.1L111 -44.1L112 -42.9L113 -42.6L114 -42.3L115 -42.1L116 -41.5L117 -40.6L118 -36.9L119 -33.5L120 -31.8L121 -33.6L122 -35.3L123 -35.1L124 -33.5L125 -31.5L126 -32.0L127 -32.4L128 -33.3L129 -34.7L130 -36.8L131 -39.4L132 -43.4L133 -47.0L134 -52.3L135 -58.6L136 -58.1L137 -48.6L138 -42.6L139 -41.9L140 -40.7L141 -38.7L142 -37.0L143 -35.5L144 -33.3L145 -33.1L146 -34.3L147 -34.9L148 -35.7L149 -36.3L150 -37.1L151 -35.0L152 -33.1L153 -36.4L154 -44.2L155 -42.4L156 -37.4L157 -46.9L158 -59.5L159 -53.1L160 -41.8L161 -35.2L162 -30.3L163 -29.8L164 -29.2L165 -26.2L166 -24.0L167 -24.9L168 -25.3L169 -25.8L170 -26.1L171 -26.1L172 -24.4L173 -22.7L174 -23.4L175 -24.3L176 -25.7L177 -26.7L178 -27.8L179 -28.7L180 -27.6L181 -26.3L182 -26.6L183 -27.8L184 -27.7L185 -26.7L186 -27.0L187 -28.2L188 -29.8L189 -28.1L190 -27.7L191 -29.0L192 -29.1L193 -26.8L194 -25.6L195 -28.2L196 -29.0L197 -26.7L198 -26.5L199 -28.5L200 -29.5L201 -27.4L202 -25.4L203 -26.5L204 -28.5L205 -29.3L206 -28.6L207 -28.3L208 -29.6L209 -30.7L210 -30.1L211 -29.8L212 -29.0L213 -27.6L214 -26.4L215 -28.2L216 -30.7L217 -33.5L218 -31.4L219 -29.2L220 -27.3L221 -28.5L222 -29.8L223 -29.6L224 -29.0L225 -28.9L226 -29.1L227 -29.3L228 -28.2L229 -27.0L230 -28.7L231 -33.1L232 -37.2L233 -32.7L234 -28.8L235 -28.3L236 -30.5L237 -32.2L238 -34.1L239 -36.4L240 -38.4L241 -33.8L242 -29.2L243 -29.5L244 -31.2"/><path id="s0124" d="M0 -41.0L1 -41.9L2 -42.4L3 -38.8L4 -33.9L5 -32.6L6 -33.8L7 -34.7L8 -32.7L9 -30.5L10 -34.6L11 -42.4L12 -49.9L13 -52.0L14 -54.3L15 -58.2L16 -64.3L17 -65.4L18 -54.3L19 -43.4L20 -40.4L21 -36.9L22 -35.4L23 -39.8L24 -44.7L25 -44.7L26 -40.1L27 -36.0L28 -37.1L29 -35.5L30 -33.7L31 -33.6L32 -35.3L33 -36.6L34 -35.0L35 -33.4L36 -38.7L37 -46.2L38 -46.7L39 -46.7L40 -57.1L41 -60.4L42 -45.4L43 -33.9L44 -33.8L45 -33.4L46 -37.6L47 -42.4L48 -45.2L49 -39.1L50 -32.8L51 -32.6L52 -33.9L53 -34.8L54 -33.2L55 -32.7L56 -34.1L57 -33.9L58 -33.1L59 -32.7L60 -41.6L61 -51.1L62 -50.3L63 -50.9L64 -56.2L65 -59.9L66 -47.1L67 -35.1L68 -33.8L69 -37.6L70 -41.8L71 -39.6L72 -36.1L73 -33.5L74 -32.4L75 -30.9L76 -31.7L77 -32.9L78 -33.0L79 -31.8L80 -30.6L81 -32.3L82 -34.2L83 -38.1L84 -42.4L85 -47.3L86 -50.2L87 -53.5L88 -54.9L89 -51.0L90 -45.4L91 -35.0L92 -32.9L93 -37.3L94 -40.3L95 -36.0L96 -32.1L97 -31.7L98 -31.0L99 -30.8L100 -31.6L101 -31.8L102 -32.3L103 -32.1L104 -31.5L105 -31.8L106 -33.3L107 -35.8L108 -39.3L109 -42.7L110 -45.3L111 -43.8L112 -43.0L113 -42.6L114 -42.5L115 -41.8L116 -41.1L117 -40.0L118 -36.4L119 -33.6L120 -31.8L121 -33.7L122 -35.2L123 -35.0L124 -33.7L125 -31.3L126 -32.1L127 -32.7L128 -33.3L129 -35.1L130 -36.7L131 -40.0L132 -43.5L133 -47.6L134 -52.5L135 -58.1L136 -57.9L137 -48.5L138 -42.9L139 -41.8L140 -40.7L141 -38.7L142 -36.6L143 -34.8L144 -33.4L145 -33.0L146 -33.9L147 -35.0L148 -35.6L149 -36.8L150 -36.9L151 -35.1L152 -33.4L153 -36.6L154 -44.3L155 -42.0L156 -37.0L157 -45.9L158 -58.7L159 -52.3L160 -41.8L161 -35.4L162 -30.7L163 -29.4L164 -28.9L165 -26.4L166 -24.3L167 -24.8L168 -25.2L169 -25.7L170 -25.9L171 -25.9L172 -24.1L173 -22.8L174 -23.4L175 -24.8L176 -25.5L177 -26.5L178 -27.6L179 -28.3L180 -27.5L181 -26.4L182 -26.7L183 -28.0L184 -27.9L185 -26.7L186 -27.1L187 -28.5L188 -29.2L189 -27.8L190 -27.6L191 -29.1L192 -28.9L193 -26.9L194 -25.6L195 -28.3L196 -29.2L197 -26.8L198 -26.7L199 -28.7L200 -29.5L201 -27.7L202 -25.4L203 -26.5L204 -28.6L205 -29.1L206 -28.3L207 -28.3L208 -29.5L209 -30.4L210 -30.4L211 -30.3L212 -28.9L213 -27.8L214 -26.8L215 -28.5L216 -30.8L217 -33.5L218 -31.0L219 -29.1L220 -27.4L221 -28.7L222 -29.9L223 -29.4L224 -29.0L225 -28.7L226 -29.1L227 -29.0L228 -28.3L229 -27.1L230 -28.7L231 -32.9L232 -36.4L233 -32.2L234 -28.2L235 -28.4L236 -30.2L237 -32.2L238 -34.3L239 -36.3L240 -38.4L241 -33.3L242 -29.1L243 -29.8L244 -31.1"/></g></defs><g clip-path="url(#cs01)" opacity="0.88"><g fill="none" stroke-linejoin="round" shape-rendering="crispEdges" filter="url(#fs01)"><g transform="translate(434.2,300.53)"><path d="M0 0L0 -40.7L1 -41.8L2 -42.9L3 -39.0L4 -33.9L5 -32.4L6 -33.5L7 -34.3L8 -32.3L9 -30.3L10 -34.6L11 -42.3L12 -49.8L13 -51.7L14 -53.7L15 -58.2L16 -63.9L17 -65.2L18 -54.4L19 -43.8L20 -40.4L21 -36.9L22 -35.5L23 -40.0L24 -44.6L25 -44.9L26 -39.8L27 -36.1L28 -37.2L29 -36.0L30 -34.1L31 -33.9L32 -35.3L33 -36.6L34 -34.9L35 -33.4L36 -39.0L37 -46.5L38 -46.8L39 -46.8L40 -56.8L41 -60.1L42 -45.5L43 -34.4L44 -33.8L45 -33.2L46 -37.3L47 -41.9L48 -44.3L49 -38.3L50 -32.9L51 -32.8L52 -34.2L53 -35.0L54 -33.5L55 -32.7L56 -33.5L57 -33.6L58 -33.0L59 -32.8L60 -41.7L61 -51.2L62 -50.7L63 -51.1L64 -56.2L65 -59.6L66 -47.4L67 -35.2L68 -34.1L69 -37.7L70 -41.6L71 -39.3L72 -36.3L73 -33.7L74 -32.5L75 -31.3L76 -32.1L77 -33.2L78 -33.2L79 -31.8L80 -30.5L81 -32.3L82 -34.2L83 -38.0L84 -42.6L85 -47.2L86 -50.3L87 -53.5L88 -55.1L89 -51.2L90 -45.0L91 -34.9L92 -32.6L93 -37.3L94 -39.9L95 -35.9L96 -32.3L97 -31.6L98 -31.3L99 -31.1L100 -31.6L101 -32.1L102 -32.3L103 -31.8L104 -31.3L105 -31.7L106 -33.0L107 -35.5L108 -39.3L109 -43.1L110 -44.8L111 -43.9L112 -43.0L113 -42.5L114 -42.4L115 -42.2L116 -41.2L117 -40.1L118 -36.9L119 -33.7L120 -31.9L121 -33.7L122 -35.1L123 -35.0L124 -33.3L125 -31.4L126 -31.9L127 -32.3L128 -33.1L129 -34.9L130 -36.8L131 -39.5L132 -43.3L133 -47.0L134 -52.3L135 -58.4L136 -58.1L137 -48.9L138 -42.8L139 -41.8L140 -40.5L141 -38.6L142 -36.6L143 -35.0L144 -33.5L145 -33.2L146 -34.2L147 -35.2L148 -35.9L149 -36.5L150 -37.0L151 -35.0L152 -33.0L153 -36.2L154 -44.1L155 -42.2L156 -37.2L157 -46.5L158 -58.6L159 -52.3L160 -41.7L161 -35.0L162 -30.4L163 -29.6L164 -29.1L165 -26.4L166 -24.0L167 -24.7L168 -25.4L169 -25.9L170 -26.0L171 -26.1L172 -24.6L173 -22.9L174 -23.2L175 -24.4L176 -25.6L177 -26.7L178 -27.6L179 -28.4L180 -27.4L181 -26.4L182 -26.8L183 -27.9L184 -28.0L185 -26.9L186 -27.2L187 -28.5L188 -29.4L189 -28.1L190 -27.6L191 -29.1L192 -28.9L193 -26.8L194 -25.6L195 -28.2L196 -29.1L197 -26.9L198 -26.7L199 -28.7L200 -29.6L201 -27.5L202 -25.4L203 -26.6L204 -28.4L205 -29.2L206 -28.4L207 -28.1L208 -29.6L209 -30.5L210 -30.3L211 -30.0L212 -29.2L213 -28.0L214 -26.7L215 -28.3L216 -30.8L217 -33.3L218 -31.2L219 -29.0L220 -27.4L221 -28.6L222 -29.8L223 -29.4L224 -28.8L225 -28.7L226 -28.9L227 -29.1L228 -28.3L229 -27.1L230 -28.6L231 -32.9L232 -36.6L233 -32.5L234 -28.5L235 -28.4L236 -30.2L237 -32.1L238 -34.3L239 -36.6L240 -38.5L241 -33.6L242 -29.1L243 -29.8L244 -31.3L244 0Z" fill="#efedf3" fill-opacity="0.9" stroke="none"/><use href="#s0121" transform="scale(1,0.0077)" stroke="#70DBED" stroke-width="1"/><use href="#s0121" transform="scale(1,0.0203)" stroke="#F9BA8F" stroke-width="1"/><use href="#s0123" transform="scale(1,0.0336)" stroke="#F29191" stroke-width="1"/><use href="#s0121" transform="scale(1,0.0492)" stroke="#82B5D8" stroke-width="1"/><use href="#s0122" transform="scale(1,0.0624)" stroke="#E5A8E2" stroke-width="1"/><use href="#s0124" transform="scale(1,0.074)" stroke="#AEA2E0" stroke-width="1"/><use href="#s0123" transform="scale(1,0.0878)" stroke="#629E51" stroke-width="1"/><use href="#s0120" transform="scale(1,0.1032)" stroke="#E5AC0E" stroke-width="1"/><use href="#s0123" transform="scale(1,0.119)" stroke="#64B0C8" stroke-width="1"/><use href="#s0122" transform="scale(1,0.1355)" stroke="#E0752D" stroke-width="1"/><use href="#s0123" transform="scale(1,0.1522)" stroke="#BF1B00" stroke-width="1"/><use href="#s0124" transform="scale(1,0.1679)" stroke="#0A50A1" stroke-width="1"/><use href="#s0121" transform="scale(1,0.1827)" stroke="#962D82" stroke-width="1"/><use href="#s0124" transform="scale(1,0.1976)" stroke="#614D93" stroke-width="1"/><use href="#s0123" transform="scale(1,0.2107)" stroke="#9AC48A" stroke-width="1"/><use href="#s0121" transform="scale(1,0.2252)" stroke="#F2C96D" stroke-width="1"/><use href="#s0123" transform="scale(1,0.2399)" stroke="#65C5DB" stroke-width="1"/><use href="#s0120" transform="scale(1,0.2539)" stroke="#F9934E" stroke-width="1"/><use href="#s0124" transform="scale(1,0.2706)" stroke="#EA6460" stroke-width="1"/><use href="#s0123" transform="scale(1,0.2867)" stroke="#5195CE" stroke-width="1"/><use href="#s0123" transform="scale(1,0.2995)" stroke="#D683CE" stroke-width="1"/><use href="#s0124" transform="scale(1,0.313)" stroke="#806EB7" stroke-width="1"/><use href="#s0123" transform="scale(1,0.3286)" stroke="#3F6833" stroke-width="1"/><use href="#s0120" transform="scale(1,0.3416)" stroke="#967302" stroke-width="1"/><use href="#s0123" transform="scale(1,0.3521)" stroke="#2F575E" stroke-width="1"/><use href="#s0121" transform="scale(1,0.3641)" stroke="#99440A" stroke-width="1"/><use href="#s0122" transform="scale(1,0.3759)" stroke="#58140C" stroke-width="1"/><use href="#s0124" transform="scale(1,0.3894)" stroke="#052B51" stroke-width="1"/><use href="#s0121" transform="scale(1,0.4048)" stroke="#511749" stroke-width="1"/><use href="#s0124" transform="scale(1,0.4185)" stroke="#3F2B5B" stroke-width="1"/><use href="#s0120" transform="scale(1,0.4318)" stroke="#E0F9D7" stroke-width="1"/><use href="#s0120" transform="scale(1,0.4457)" stroke="#FCEACA" stroke-width="1"/><use href="#s0122" transform="scale(1,0.4617)" stroke="#CFFAFF" stroke-width="1"/><use href="#s0122" transform="scale(1,0.4763)" stroke="#F9E2D2" stroke-width="1"/><use href="#s0120" transform="scale(1,0.4886)" stroke="#FCE2DE" stroke-width="1"/><use href="#s0121" transform="scale(1,0.5021)" stroke="#BADFF4" stroke-width="1"/><use href="#s0121" transform="scale(1,0.5152)" stroke="#F9D9F9" stroke-width="1"/><use href="#s0124" transform="scale(1,0.5284)" stroke="#DEDAF7" stroke-width="1"/><use href="#s0123" transform="scale(1,0.5426)" stroke="#56A64B" stroke-width="1"/><use href="#s0123" transform="scale(1,0.5561)" stroke="#E0B400" stroke-width="1"/><use href="#s0120" transform="scale(1,0.5702)" stroke="#5794F2" stroke-width="1"/><use href="#s0122" transform="scale(1,0.5847)" stroke="#FA6400" stroke-width="1"/><use href="#s0122" transform="scale(1,0.5967)" stroke="#E02F44" stroke-width="1"/><use href="#s0120" transform="scale(1,0.6107)" stroke="#3274D9" stroke-width="1"/><use href="#s0121" transform="scale(1,0.6258)" stroke="#A352CC" stroke-width="1"/><use href="#s0124" transform="scale(1,0.6385)" stroke="#705DA0" stroke-width="1"/><use href="#s0120" transform="scale(1,0.6515)" stroke="#37872D" stroke-width="1"/><use href="#s0121" transform="scale(1,0.6665)" stroke="#F2CC0C" stroke-width="1"/><use href="#s0124" transform="scale(1,0.6837)" stroke="#447EBC" stroke-width="1"/><use href="#s0124" transform="scale(1,0.6992)" stroke="#C15C17" stroke-width="1"/><use href="#s0124" transform="scale(1,0.7125)" stroke="#890F02" stroke-width="1"/><use href="#s0124" transform="scale(1,0.7241)" stroke="#0A437C" stroke-width="1"/><use href="#s0122" transform="scale(1,0.7377)" stroke="#6D1F62" stroke-width="1"/><use href="#s0120" transform="scale(1,0.7516)" stroke="#584477" stroke-width="1"/><use href="#s0122" transform="scale(1,0.7641)" stroke="#B7DBAB" stroke-width="1"/><use href="#s0121" transform="scale(1,0.7773)" stroke="#F4D598" stroke-width="1"/><use href="#s0124" transform="scale(1,0.7896)" stroke="#70DBED" stroke-width="1"/><use href="#s0122" transform="scale(1,0.8019)" stroke="#F9BA8F" stroke-width="1"/><use href="#s0123" transform="scale(1,0.8137)" stroke="#F29191" stroke-width="1"/><use href="#s0121" transform="scale(1,0.8242)" stroke="#82B5D8" stroke-width="1"/><use href="#s0120" transform="scale(1,0.8361)" stroke="#E5A8E2" stroke-width="1"/><use href="#s0123" transform="scale(1,0.8511)" stroke="#AEA2E0" stroke-width="1"/><use href="#s0123" transform="scale(1,0.8665)" stroke="#629E51" stroke-width="1"/><use href="#s0122" transform="scale(1,0.8795)" stroke="#E5AC0E" stroke-width="1"/><use href="#s0121" transform="scale(1,0.8927)" stroke="#64B0C8" stroke-width="1"/><use href="#s0121" transform="scale(1,0.9053)" stroke="#E0752D" stroke-width="1"/><use href="#s0120" transform="scale(1,0.9168)" stroke="#BF1B00" stroke-width="1"/><use href="#s0124" transform="scale(1,0.9314)" stroke="#0A50A1" stroke-width="1"/><use href="#s0122" transform="scale(1,0.9481)" stroke="#962D82" stroke-width="1"/><use href="#s0124" transform="scale(1,0.9633)" stroke="#614D93" stroke-width="1"/><use href="#s0121" transform="scale(1,0.9781)" stroke="#9AC48A" stroke-width="1"/><use href="#s0121" transform="scale(1,0.9932)" stroke="#F2C96D" stroke-width="1"/><use href="#s0120" stroke="#9a8783" stroke-width=".8"/></g><g transform="translate(434.2,307.09)"><path d="M0 0L0 -6.6L1 -6.6L2 -6.6L3 -6.6L4 -6.6L5 -6.6L6 -6.6L7 -6.6L8 -6.6L9 -6.6L10 -6.6L11 -6.6L12 -6.6L13 -6.6L14 -6.6L15 -6.6L16 -6.6L17 -6.6L18 -6.6L19 -6.6L20 -6.6L21 -6.6L22 -6.6L23 -6.6L24 -6.6L25 -6.6L26 -6.6L27 -6.6L28 -6.6L29 -6.6L30 -6.6L31 -6.6L32 -6.6L33 -6.6L34 -6.6L35 -6.6L36 -6.6L37 -6.6L38 -6.6L39 -6.6L40 -6.6L41 -6.6L42 -6.6L43 -6.6L44 -6.6L45 -6.6L46 -6.6L47 -6.6L48 -6.6L49 -6.6L50 -6.6L51 -6.6L52 -6.6L53 -6.6L54 -6.6L55 -6.6L56 -6.6L57 -6.6L58 -6.6L59 -6.6L60 -6.6L61 -6.6L62 -6.6L63 -6.6L64 -6.6L65 -6.6L66 -6.6L67 -6.6L68 -6.6L69 -6.6L70 -6.6L71 -6.6L72 -6.6L73 -6.6L74 -6.6L75 -6.6L76 -6.6L77 -6.6L78 -6.6L79 -6.6L80 -6.6L81 -6.6L82 -6.6L83 -6.6L84 -6.6L85 -6.6L86 -6.6L87 -6.6L88 -6.6L89 -6.6L90 -6.6L91 -6.6L92 -6.6L93 -6.6L94 -6.6L95 -6.6L96 -6.6L97 -6.6L98 -6.6L99 -6.6L100 -6.6L101 -6.6L102 -6.6L103 -6.6L104 -6.6L105 -6.6L106 -6.6L107 -6.6L108 -6.6L109 -6.6L110 -6.6L111 -6.6L112 -6.6L113 -6.6L114 -6.8L115 -7.0L116 -6.8L117 -6.6L118 -6.6L119 -6.7L120 -7.0L121 -7.3L122 -7.2L123 -6.9L124 -6.7L125 -6.1L126 -6.1L127 -6.1L128 -6.1L129 -6.1L130 -6.1L131 -6.1L132 -6.1L133 -6.1L134 -6.1L135 -6.1L136 -6.1L137 -5.9L138 -5.9L139 -5.9L140 -5.9L141 -6.1L142 -6.1L143 -6.1L144 -6.1L145 -6.1L146 -6.1L147 -6.1L148 -6.1L149 -6.1L150 -6.1L151 -6.1L152 -6.1L153 -6.4L154 -5.5L155 -4.4L156 -5.6L157 -8.4L158 -10.3L159 -8.5L160 -7.7L161 -7.4L162 -7.2L163 -6.5L164 -6.5L165 -6.4L166 -6.3L167 -6.3L168 -6.2L169 -6.2L170 -6.2L171 -6.2L172 -6.2L173 -6.1L174 -6.1L175 -6.1L176 -6.1L177 -6.1L178 -6.1L179 -6.1L180 -6.1L181 -6.1L182 -6.1L183 -6.1L184 -6.1L185 -6.1L186 -6.1L187 -6.1L188 -6.1L189 -6.1L190 -6.1L191 -6.1L192 -6.1L193 -6.1L194 -6.1L195 -6.1L196 -6.1L197 -6.1L198 -6.1L199 -6.1L200 -6.1L201 -6.1L202 -6.1L203 -6.1L204 -6.1L205 -6.1L206 -6.1L207 -6.1L208 -6.1L209 -6.1L210 -6.1L211 -6.1L212 -6.1L213 -6.1L214 -6.1L215 -6.1L216 -6.1L217 -6.1L218 -6.1L219 -6.1L220 -6.1L221 -6.1L222 -6.1L223 -6.1L224 -6.1L225 -6.1L226 -6.1L227 -6.1L228 -6.1L229 -6.1L230 -6.1L231 -6.1L232 -6.1L233 -6.1L234 -6.1L235 -6.1L236 -6.1L237 -6.1L238 -6.1L239 -6.1L240 -6.1L241 -6.1L242 -6.1L243 -6.1L244 -6.1L244 0Z" fill="#ece9f1" fill-opacity="0.9" stroke="none"/><use href="#s0111" transform="scale(1,0.0384)" stroke="#5794F2" stroke-width="1"/><use href="#s0110" transform="scale(1,0.1005)" stroke="#FA6400" stroke-width="1"/><use href="#s0110" transform="scale(1,0.1457)" stroke="#E02F44" stroke-width="1"/><use href="#s0112" transform="scale(1,0.2065)" stroke="#3274D9" stroke-width="1"/><use href="#s0111" transform="scale(1,0.2701)" stroke="#A352CC" stroke-width="1"/><use href="#s0110" transform="scale(1,0.3178)" stroke="#705DA0" stroke-width="1"/><use href="#s0111" transform="scale(1,0.374)" stroke="#37872D" stroke-width="1"/><use href="#s0111" transform="scale(1,0.4343)" stroke="#F2CC0C" stroke-width="1"/><use href="#s0111" transform="scale(1,0.4988)" stroke="#447EBC" stroke-width="1"/><use href="#s0111" transform="scale(1,0.5614)" stroke="#C15C17" stroke-width="1"/><use href="#s0110" transform="scale(1,0.6251)" stroke="#890F02" stroke-width="1"/><use href="#s0111" transform="scale(1,0.6905)" stroke="#0A437C" stroke-width="1"/><use href="#s0111" transform="scale(1,0.7494)" stroke="#6D1F62" stroke-width="1"/><use href="#s0110" transform="scale(1,0.8193)" stroke="#584477" stroke-width="1"/><use href="#s0110" transform="scale(1,0.8908)" stroke="#B7DBAB" stroke-width="1"/><use href="#s0112" transform="scale(1,0.9622)" stroke="#F4D598" stroke-width="1"/></g><g transform="translate(434.2,328.90)"><path d="M0 0L0 -21.8L1 -21.8L2 -21.8L3 -21.8L4 -21.8L5 -21.8L6 -21.8L7 -21.8L8 -21.8L9 -21.8L10 -21.8L11 -21.8L12 -21.8L13 -21.8L14 -21.8L15 -21.8L16 -21.8L17 -21.8L18 -21.8L19 -21.8L20 -21.8L21 -21.8L22 -21.8L23 -21.8L24 -21.8L25 -21.8L26 -21.8L27 -21.8L28 -21.8L29 -21.8L30 -21.8L31 -21.8L32 -21.8L33 -21.8L34 -21.8L35 -21.8L36 -21.8L37 -21.8L38 -21.8L39 -21.8L40 -21.8L41 -21.8L42 -21.8L43 -21.8L44 -21.8L45 -21.8L46 -21.8L47 -21.8L48 -21.8L49 -21.8L50 -21.8L51 -21.8L52 -21.8L53 -21.8L54 -21.8L55 -21.8L56 -21.8L57 -21.8L58 -21.8L59 -21.8L60 -21.8L61 -21.8L62 -21.8L63 -21.8L64 -21.8L65 -21.8L66 -21.8L67 -21.8L68 -21.8L69 -21.8L70 -21.8L71 -21.8L72 -21.8L73 -21.8L74 -21.8L75 -21.8L76 -21.8L77 -21.8L78 -21.8L79 -21.8L80 -21.8L81 -21.8L82 -21.8L83 -21.8L84 -21.8L85 -21.8L86 -21.8L87 -21.8L88 -21.8L89 -21.8L90 -21.8L91 -21.8L92 -21.8L93 -21.8L94 -21.8L95 -21.8L96 -21.8L97 -21.8L98 -21.8L99 -21.8L100 -21.8L101 -21.8L102 -21.8L103 -21.8L104 -21.8L105 -21.8L106 -21.8L107 -21.8L108 -21.8L109 -21.8L110 -21.8L111 -21.8L112 -21.8L113 -21.9L114 -22.0L115 -22.2L116 -22.1L117 -21.9L118 -21.8L119 -22.0L120 -22.2L121 -22.5L122 -22.5L123 -22.2L124 -21.9L125 -21.4L126 -21.4L127 -21.4L128 -21.4L129 -21.4L130 -21.4L131 -21.4L132 -21.4L133 -21.4L134 -21.4L135 -21.4L136 -21.4L137 -21.1L138 -21.1L139 -21.1L140 -21.1L141 -21.4L142 -21.4L143 -21.4L144 -21.4L145 -21.4L146 -21.4L147 -21.4L148 -21.4L149 -21.4L150 -21.4L151 -21.4L152 -21.4L153 -21.7L154 -20.7L155 -19.6L156 -20.9L157 -23.7L158 -25.5L159 -23.7L160 -23.0L161 -22.6L162 -22.4L163 -21.8L164 -21.7L165 -21.6L166 -21.6L167 -21.5L168 -21.5L169 -21.5L170 -21.4L171 -21.4L172 -21.4L173 -21.4L174 -21.4L175 -21.4L176 -21.4L177 -21.4L178 -21.3L179 -21.3L180 -21.3L181 -21.3L182 -21.3L183 -21.3L184 -21.3L185 -21.3L186 -21.3L187 -21.3L188 -21.3L189 -21.3L190 -21.3L191 -21.3L192 -21.3L193 -21.3L194 -21.3L195 -21.3L196 -21.3L197 -21.3L198 -21.3L199 -21.3L200 -21.3L201 -21.3L202 -21.3L203 -21.3L204 -21.3L205 -21.3L206 -21.3L207 -21.3L208 -21.3L209 -21.3L210 -21.3L211 -21.3L212 -21.3L213 -21.3L214 -21.3L215 -21.3L216 -21.3L217 -21.3L218 -21.3L219 -21.3L220 -21.3L221 -21.3L222 -21.3L223 -21.3L224 -21.3L225 -21.3L226 -21.3L227 -21.3L228 -21.3L229 -21.3L230 -21.3L231 -21.3L232 -21.3L233 -21.3L234 -21.3L235 -21.3L236 -21.3L237 -21.3L238 -21.3L239 -21.3L240 -21.3L241 -21.3L242 -21.3L243 -21.3L244 -21.3L244 0Z" fill="#ece9f1" fill-opacity="0.9" stroke="none"/><use href="#s0101" transform="scale(1,0.0087)" stroke="#56A64B" stroke-width="1"/><use href="#s0103" transform="scale(1,0.027)" stroke="#E0B400" stroke-width="1"/><use href="#s0102" transform="scale(1,0.0464)" stroke="#5794F2" stroke-width="1"/><use href="#s0104" transform="scale(1,0.063)" stroke="#FA6400" stroke-width="1"/><use href="#s0102" transform="scale(1,0.0762)" stroke="#E02F44" stroke-width="1"/><use href="#s0103" transform="scale(1,0.0906)" stroke="#3274D9" stroke-width="1"/><use href="#s0101" transform="scale(1,0.1064)" stroke="#A352CC" stroke-width="1"/><use href="#s0101" transform="scale(1,0.1245)" stroke="#705DA0" stroke-width="1"/><use href="#s0100" transform="scale(1,0.1448)" stroke="#37872D" stroke-width="1"/><use href="#s0101" transform="scale(1,0.164)" stroke="#F2CC0C" stroke-width="1"/><use href="#s0100" transform="scale(1,0.1825)" stroke="#447EBC" stroke-width="1"/><use href="#s0103" transform="scale(1,0.2013)" stroke="#C15C17" stroke-width="1"/><use href="#s0104" transform="scale(1,0.2179)" stroke="#890F02" stroke-width="1"/><use href="#s0101" transform="scale(1,0.2333)" stroke="#0A437C" stroke-width="1"/><use href="#s0103" transform="scale(1,0.2489)" stroke="#6D1F62" stroke-width="1"/><use href="#s0102" transform="scale(1,0.2669)" stroke="#584477" stroke-width="1"/><use href="#s0101" transform="scale(1,0.2844)" stroke="#B7DBAB" stroke-width="1"/><use href="#s0104" transform="scale(1,0.3014)" stroke="#F4D598" stroke-width="1"/><use href="#s0101" transform="scale(1,0.3184)" stroke="#70DBED" stroke-width="1"/><use href="#s0101" transform="scale(1,0.3348)" stroke="#F9BA8F" stroke-width="1"/><use href="#s0104" transform="scale(1,0.3526)" stroke="#F29191" stroke-width="1"/><use href="#s0101" transform="scale(1,0.3689)" stroke="#82B5D8" stroke-width="1"/><use href="#s0103" transform="scale(1,0.3878)" stroke="#E5A8E2" stroke-width="1"/><use href="#s0103" transform="scale(1,0.4047)" stroke="#AEA2E0" stroke-width="1"/><use href="#s0102" transform="scale(1,0.4175)" stroke="#629E51" stroke-width="1"/><use href="#s0102" transform="scale(1,0.435)" stroke="#E5AC0E" stroke-width="1"/><use href="#s0101" transform="scale(1,0.4549)" stroke="#64B0C8" stroke-width="1"/><use href="#s0102" transform="scale(1,0.4704)" stroke="#E0752D" stroke-width="1"/><use href="#s0103" transform="scale(1,0.4885)" stroke="#BF1B00" stroke-width="1"/><use href="#s0104" transform="scale(1,0.5111)" stroke="#0A50A1" stroke-width="1"/><use href="#s0103" transform="scale(1,0.5291)" stroke="#962D82" stroke-width="1"/><use href="#s0104" transform="scale(1,0.5442)" stroke="#614D93" stroke-width="1"/><use href="#s0103" transform="scale(1,0.5596)" stroke="#9AC48A" stroke-width="1"/><use href="#s0101" transform="scale(1,0.5743)" stroke="#F2C96D" stroke-width="1"/><use href="#s0100" transform="scale(1,0.5916)" stroke="#65C5DB" stroke-width="1"/><use href="#s0104" transform="scale(1,0.6081)" stroke="#F9934E" stroke-width="1"/><use href="#s0100" transform="scale(1,0.625)" stroke="#EA6460" stroke-width="1"/><use href="#s0104" transform="scale(1,0.6413)" stroke="#5195CE" stroke-width="1"/><use href="#s0103" transform="scale(1,0.6548)" stroke="#D683CE" stroke-width="1"/><use href="#s0101" transform="scale(1,0.6724)" stroke="#806EB7" stroke-width="1"/><use href="#s0101" transform="scale(1,0.6912)" stroke="#3F6833" stroke-width="1"/><use href="#s0100" transform="scale(1,0.7079)" stroke="#967302" stroke-width="1"/><use href="#s0104" transform="scale(1,0.7256)" stroke="#2F575E" stroke-width="1"/><use href="#s0103" transform="scale(1,0.7437)" stroke="#99440A" stroke-width="1"/><use href="#s0100" transform="scale(1,0.7606)" stroke="#58140C" stroke-width="1"/><use href="#s0103" transform="scale(1,0.7751)" stroke="#052B51" stroke-width="1"/><use href="#s0103" transform="scale(1,0.7915)" stroke="#511749" stroke-width="1"/><use href="#s0103" transform="scale(1,0.8128)" stroke="#3F2B5B" stroke-width="1"/><use href="#s0104" transform="scale(1,0.8354)" stroke="#E0F9D7" stroke-width="1"/><use href="#s0100" transform="scale(1,0.8565)" stroke="#FCEACA" stroke-width="1"/><use href="#s0104" transform="scale(1,0.8742)" stroke="#CFFAFF" stroke-width="1"/><use href="#s0103" transform="scale(1,0.8904)" stroke="#F9E2D2" stroke-width="1"/><use href="#s0103" transform="scale(1,0.9083)" stroke="#FCE2DE" stroke-width="1"/><use href="#s0103" transform="scale(1,0.9279)" stroke="#BADFF4" stroke-width="1"/><use href="#s0101" transform="scale(1,0.9444)" stroke="#F9D9F9" stroke-width="1"/><use href="#s0100" transform="scale(1,0.9586)" stroke="#DEDAF7" stroke-width="1"/><use href="#s0103" transform="scale(1,0.9741)" stroke="#56A64B" stroke-width="1"/><use href="#s0100" transform="scale(1,0.9911)" stroke="#E0B400" stroke-width="1"/></g></g></g></svg>
<div class="sw" style="left:373.1px;top:362.0px;background:#56A64B"></div><span class="t" style="left:395.10px;top:357.50px;font-size:12px;color:#2b3035;letter-spacing:0.742px;">distributor-66b8bf6b75-2gn8n</span>
<div class="sw" style="left:373.1px;top:385.5px;background:#E0B400"></div><span class="t" style="left:395.10px;top:381.00px;font-size:12px;color:#2b3035;letter-spacing:0.766px;">distributor-66b8bf6b75-2zwsz</span>
<div class="sw" style="left:373.1px;top:409.0px;background:#5794F2"></div><span class="t" style="left:395.10px;top:404.50px;font-size:12px;color:#2b3035;letter-spacing:0.746px;">distributor-66b8bf6b75-46j74</span>
<svg class="abs" style="left:0;top:0" width="1400" height="1000" shape-rendering="crispEdges"><path d="M107.5 527.3V638.0" stroke="rgba(36,41,46,0.1)" stroke-width="1"/><path d="M168.5 527.3V638.0" stroke="rgba(36,41,46,0.1)" stroke-width="1"/><path d="M229.5 527.3V638.0" stroke="rgba(36,41,46,0.1)" stroke-width="1"/><path d="M290.5 527.3V638.0" stroke="rgba(36,41,46,0.1)" stroke-width="1"/><path d="M90.2 633.5H334.2" stroke="rgba(36,41,46,0.1)" stroke-width="1"/><path d="M90.2 585.5H334.2" stroke="rgba(36,41,46,0.1)" stroke-width="1"/><path d="M90.2 537.5H334.2" stroke="rgba(36,41,46,0.1)" stroke-width="1"/></svg><span class="t" style="left:92.00px;top:641.60px;font-size:12px;color:#2b3035;letter-spacing:-0.008px;">17:30</span><span class="t" style="left:153.00px;top:641.60px;font-size:12px;color:#2b3035;letter-spacing:-0.008px;">17:45</span><span class="t" style="left:214.00px;top:641.60px;font-size:12px;color:#2b3035;letter-spacing:-0.008px;">18:00</span><span class="t" style="left:275.00px;top:641.60px;font-size:12px;color:#2b3035;letter-spacing:-0.008px;">18:15</span><span class="t" style="left:54.80px;top:626.90px;font-size:12px;color:#2b3035;letter-spacing:0.560px;">0 B/s</span><span class="t" style="left:29.80px;top:578.90px;font-size:12px;color:#2b3035;letter-spacing:0.557px;">100 MB/s</span><span class="t" style="left:28.80px;top:530.90px;font-size:12px;color:#2b3035;letter-spacing:0.700px;">200 MB/s</span>
<svg class="abs" style="left:0;top:0" width="1400" height="1000"><defs><filter id="fs10" x="-2%" y="-10%" width="104%" height="120%" color-interpolation-filters="sRGB"><feTurbulence type="fractalNoise" baseFrequency="0.45 0.35" numOctaves="1" seed="22" result="t"/><feColorMatrix in="t" type="matrix" values="0 0 0 0 0.5  0 1 0 0 0  0 0 1 0 0  0 0 0 0 1" result="m"/><feDisplacementMap in="SourceGraphic" in2="m" scale="2.0" xChannelSelector="R" yChannelSelector="G"/></filter><clipPath id="cs10"><rect x="90.2" y="0" width="244" height="633.3"/></clipPath><g class="ns"><path id="s1000" d="M0 -75.6L1 -74.7L2 -74.9L3 -74.3L4 -73.9L5 -74.4L6 -74.5L7 -74.4L8 -74.3L9 -74.8L10 -76.4L11 -75.5L12 -75.7L13 -75.0L14 -74.5L15 -73.7L16 -73.4L17 -75.0L18 -74.5L19 -74.1L20 -73.8L21 -75.2L22 -77.0L23 -75.7L24 -75.6L25 -74.4L26 -76.0L27 -74.5L28 -75.1L29 -74.9L30 -74.5L31 -75.0L32 -73.3L33 -74.7L34 -74.3L35 -74.6L36 -75.0L37 -75.0L38 -75.9L39 -73.5L40 -74.1L41 -74.8L42 -74.7L43 -75.0L44 -74.5L45 -74.6L46 -74.1L47 -74.9L48 -74.3L49 -74.1L50 -74.3L51 -74.9L52 -75.4L53 -74.6L54 -75.1L55 -74.3L56 -76.5L57 -76.6L58 -75.1L59 -75.3L60 -76.5L61 -75.2L62 -76.2L63 -76.9L64 -75.8L65 -75.9L66 -75.9L67 -76.3L68 -75.1L69 -74.3L70 -74.7L71 -74.2L72 -74.9L73 -74.8L74 -75.1L75 -75.7L76 -75.8L77 -75.5L78 -75.2L79 -74.8L80 -75.2L81 -75.2L82 -75.3L83 -75.9L84 -76.1L85 -74.4L86 -74.8L87 -74.9L88 -74.8L89 -75.4L90 -74.4L91 -74.8L92 -74.5L93 -73.7L94 -74.3L95 -75.3L96 -75.9L97 -75.1L98 -76.3L99 -75.0L100 -75.4L101 -74.0L102 -74.6L103 -74.1L104 -74.6L105 -75.3L106 -75.4L107 -75.2L108 -75.7L109 -75.2L110 -75.8L111 -75.1L112 -75.1L113 -74.7L114 -75.1L115 -75.1L116 -75.6L117 -75.8L118 -73.9L119 -74.3L120 -76.9L121 -79.1L122 -79.6L123 -77.4L124 -76.4L125 -75.1L126 -74.4L127 -73.4L128 -73.6L129 -71.7L130 -73.0L131 -74.0L132 -73.5L133 -74.6L134 -74.0L135 -73.1L136 -72.5L137 -72.0L138 -73.5L139 -71.3L140 -72.8L141 -73.1L142 -72.4L143 -74.2L144 -74.7L145 -73.1L146 -71.9L147 -71.8L148 -72.8L149 -73.8L150 -73.2L151 -73.1L152 -72.6L153 -73.6L154 -72.3L155 -70.9L156 -74.1L157 -84.2L158 -93.3L159 -84.6L160 -79.3L161 -78.0L162 -76.1L163 -75.0L164 -75.6L165 -75.9L166 -74.8L167 -75.9L168 -74.2L169 -74.4L170 -75.9L171 -74.3L172 -74.4L173 -74.7L174 -74.9L175 -74.9L176 -74.3L177 -75.1L178 -74.7L179 -75.5L180 -74.7L181 -73.3L182 -74.8L183 -74.1L184 -74.7L185 -75.8L186 -75.0L187 -75.1L188 -76.0L189 -75.6L190 -76.4L191 -75.3L192 -75.4L193 -74.7L194 -75.0L195 -74.3L196 -74.2L197 -75.4L198 -74.6L199 -75.4L200 -75.8L201 -74.8L202 -74.2L203 -74.9L204 -74.8L205 -75.3L206 -75.7L207 -75.4L208 -75.5L209 -75.1L210 -74.2L211 -76.2L212 -76.0L213 -75.9L214 -76.4L215 -74.6L216 -74.5L217 -74.9L218 -74.9L219 -75.5L220 -76.3L221 -75.3L222 -73.3L223 -74.9L224 -74.7L225 -75.0L226 -74.4L227 -74.6L228 -74.7L229 -74.8L230 -75.0L231 -75.2L232 -75.4L233 -76.6L234 -76.2L235 -76.7L236 -75.6L237 -74.9L238 -75.2L239 -74.8L240 -75.5L241 -73.7L242 -74.0L243 -74.7L244 -74.2"/><path id="s1001" d="M0 -75.6L1 -75.2L2 -75.5L3 -74.3L4 -74.7L5 -74.0L6 -75.0L7 -75.5L8 -74.0L9 -75.1L10 -76.6L11 -76.2L12 -75.2L13 -74.9L14 -74.0L15 -72.6L16 -74.8L17 -75.2L18 -75.2L19 -75.5L20 -75.2L21 -75.7L22 -75.0L23 -74.0L24 -73.8L25 -75.6L26 -74.3L27 -73.4L28 -73.5L29 -73.8L30 -73.6L31 -74.9L32 -74.8L33 -75.4L34 -75.6L35 -75.8L36 -74.8L37 -74.6L38 -74.6L39 -74.4L40 -74.4L41 -75.1L42 -75.0L43 -74.7L44 -75.1L45 -74.3L46 -75.4L47 -75.4L48 -76.5L49 -75.6L50 -75.0L51 -75.4L52 -75.9L53 -75.2L54 -76.3L55 -75.6L56 -75.4L57 -75.4L58 -73.7L59 -73.7L60 -73.5L61 -75.2L62 -73.6L63 -74.5L64 -73.7L65 -74.9L66 -74.0L67 -75.3L68 -73.7L69 -75.1L70 -74.1L71 -72.9L72 -73.0L73 -73.7L74 -74.6L75 -74.0L76 -75.9L77 -75.0L78 -75.8L79 -75.5L80 -75.8L81 -74.2L82 -74.7L83 -74.5L84 -75.4L85 -74.5L86 -74.7L87 -75.9L88 -75.4L89 -75.4L90 -74.2L91 -74.7L92 -75.5L93 -75.7L94 -74.7L95 -74.1L96 -75.0L97 -74.9L98 -75.1L99 -74.0L100 -74.8L101 -75.1L102 -74.4L103 -74.5L104 -75.4L105 -74.7L106 -73.7L107 -75.5L108 -75.9L109 -75.8L110 -76.0L111 -76.1L112 -76.3L113 -75.5L114 -75.7L115 -76.6L116 -76.0L117 -75.4L118 -75.1L119 -75.7L120 -76.4L121 -78.9L122 -79.1L123 -79.0L124 -75.1L125 -72.3L126 -72.2L127 -72.4L128 -73.0L129 -73.7L130 -74.4L131 -72.8L132 -73.2L133 -73.0L134 -73.0L135 -74.4L136 -73.1L137 -72.2L138 -72.1L139 -73.5L140 -74.4L141 -74.9L142 -73.9L143 -72.7L144 -73.0L145 -73.0L146 -74.3L147 -74.7L148 -73.7L149 -73.1L150 -73.4L151 -73.8L152 -74.0L153 -74.5L154 -74.3L155 -71.0L156 -71.4L157 -83.2L158 -93.7L159 -84.6L160 -80.2L161 -78.6L162 -77.5L163 -77.9L164 -78.3L165 -77.5L166 -76.1L167 -75.5L168 -75.5L169 -76.3L170 -75.4L171 -74.4L172 -75.4L173 -74.8L174 -75.6L175 -75.7L176 -75.2L177 -77.0L178 -76.5L179 -76.6L180 -75.0L181 -76.3L182 -74.2L183 -75.1L184 -76.8L185 -76.2L186 -75.2L187 -76.1L188 -75.4L189 -74.3L190 -74.9L191 -75.0L192 -74.8L193 -75.3L194 -75.7L195 -73.9L196 -74.5L197 -74.1L198 -76.5L199 -75.8L200 -75.2L201 -74.1L202 -76.0L203 -77.0L204 -75.4L205 -73.9L206 -74.9L207 -76.2L208 -75.4L209 -75.4L210 -74.0L211 -74.7L212 -74.4L213 -75.9L214 -75.5L215 -74.4L216 -73.9L217 -74.3L218 -76.3L219 -74.6L220 -75.3L221 -75.0L222 -74.9L223 -74.3L224 -73.3L225 -75.1L226 -75.4L227 -74.7L228 -73.5L229 -74.0L230 -75.1L231 -76.1L232 -75.0L233 -75.8L234 -74.2L235 -74.6L236 -74.0L237 -74.6L238 -74.0L239 -74.8L240 -75.1L241 -75.6L242 -76.4L243 -75.9L244 -76.7"/><path id="s1002" d="M0 -75.1L1 -74.9L2 -75.0L3 -74.6L4 -74.3L5 -74.1L6 -74.6L7 -74.1L8 -75.8L9 -75.3L10 -74.9L11 -75.2L12 -74.0L13 -74.3L14 -74.3L15 -74.0L16 -74.5L17 -74.9L18 -75.8L19 -76.3L20 -74.9L21 -74.6L22 -75.3L23 -74.3L24 -73.4L25 -75.0L26 -74.4L27 -75.0L28 -74.8L29 -74.9L30 -76.1L31 -75.7L32 -76.8L33 -76.7L34 -76.7L35 -74.9L36 -74.8L37 -75.2L38 -74.9L39 -75.0L40 -75.5L41 -76.1L42 -75.8L43 -75.0L44 -74.8L45 -73.7L46 -75.1L47 -74.7L48 -74.9L49 -75.1L50 -75.0L51 -74.7L52 -73.5L53 -74.8L54 -74.1L55 -75.0L56 -75.5L57 -75.6L58 -75.1L59 -74.9L60 -76.4L61 -74.9L62 -75.5L63 -73.7L64 -75.5L65 -75.2L66 -75.9L67 -76.5L68 -75.8L69 -75.5L70 -75.7L71 -74.6L72 -74.8L73 -76.4L74 -74.5L75 -75.4L76 -74.2L77 -74.4L78 -75.3L79 -75.9L80 -75.6L81 -76.3L82 -75.2L83 -75.3L84 -74.8L85 -74.6L86 -75.5L87 -75.4L88 -75.3L89 -74.6L90 -75.7L91 -76.1L92 -76.1L93 -75.9L94 -75.8L95 -75.0L96 -75.4L97 -76.0L98 -75.6L99 -76.3L100 -74.7L101 -74.5L102 -75.0L103 -74.8L104 -76.5L105 -75.5L106 -73.8L107 -74.3L108 -74.8L109 -75.8L110 -73.9L111 -73.7L112 -74.2L113 -74.2L114 -75.0L115 -76.7L116 -77.0L117 -76.3L118 -75.6L119 -75.4L120 -76.6L121 -78.2L122 -77.7L123 -76.2L124 -75.0L125 -72.3L126 -71.7L127 -73.1L128 -73.3L129 -74.1L130 -74.6L131 -74.2L132 -73.0L133 -72.6L134 -72.6L135 -73.6L136 -75.7L137 -73.4L138 -72.8L139 -72.2L140 -73.0L141 -73.9L142 -74.3L143 -73.6L144 -72.8L145 -73.9L146 -74.2L147 -74.6L148 -73.2L149 -72.3L150 -73.2L151 -73.3L152 -73.1L153 -74.6L154 -73.4L155 -71.4L156 -74.5L157 -85.2L158 -92.1L159 -84.1L160 -80.1L161 -77.8L162 -76.9L163 -77.1L164 -75.6L165 -76.4L166 -76.4L167 -75.2L168 -75.8L169 -75.4L170 -75.8L171 -75.1L172 -74.9L173 -76.2L174 -74.8L175 -75.1L176 -75.2L177 -74.4L178 -74.4L179 -73.1L180 -74.0L181 -73.5L182 -74.2L183 -73.4L184 -74.5L185 -74.1L186 -74.5L187 -75.5L188 -76.5L189 -75.6L190 -75.0L191 -75.0L192 -74.3L193 -74.6L194 -74.1L195 -73.0L196 -73.7L197 -74.9L198 -74.5L199 -75.5L200 -75.8L201 -74.6L202 -73.5L203 -73.8L204 -74.9L205 -75.9L206 -75.1L207 -74.7L208 -74.7L209 -76.2L210 -75.5L211 -76.3L212 -76.3L213 -74.7L214 -74.8L215 -74.6L216 -74.1L217 -75.3L218 -74.4L219 -74.3L220 -74.6L221 -75.9L222 -75.6L223 -75.2L224 -75.3L225 -74.0L226 -73.9L227 -74.2L228 -73.1L229 -73.1L230 -73.7L231 -75.5L232 -75.9L233 -74.5L234 -75.0L235 -74.6L236 -74.0L237 -75.2L238 -74.8L239 -74.1L240 -74.4L241 -75.1L242 -73.3L243 -74.0L244 -74.1"/><path id="s1003" d="M0 -74.9L1 -74.7L2 -74.7L3 -74.8L4 -75.2L5 -74.2L6 -74.6L7 -75.2L8 -75.7L9 -75.8L10 -74.6L11 -74.9L12 -75.2L13 -75.3L14 -74.9L15 -76.1L16 -76.4L17 -74.8L18 -75.3L19 -74.1L20 -74.5L21 -75.7L22 -74.9L23 -75.6L24 -75.2L25 -75.9L26 -74.3L27 -73.5L28 -74.7L29 -74.5L30 -74.8L31 -74.7L32 -75.4L33 -75.2L34 -76.5L35 -74.8L36 -73.9L37 -73.2L38 -73.9L39 -75.7L40 -75.4L41 -74.9L42 -74.9L43 -74.5L44 -75.0L45 -75.3L46 -75.4L47 -76.3L48 -75.5L49 -76.0L50 -75.9L51 -74.8L52 -74.7L53 -74.6L54 -75.5L55 -73.4L56 -73.8L57 -73.9L58 -75.3L59 -74.7L60 -75.8L61 -74.4L62 -75.1L63 -75.2L64 -75.5L65 -76.0L66 -74.8L67 -74.8L68 -73.9L69 -75.0L70 -73.8L71 -73.1L72 -73.7L73 -73.8L74 -73.4L75 -73.2L76 -73.2L77 -74.2L78 -72.8L79 -75.2L80 -74.8L81 -75.0L82 -74.4L83 -74.5L84 -74.0L85 -74.5L86 -74.6L87 -75.6L88 -75.8L89 -75.6L90 -75.6L91 -75.8L92 -74.5L93 -75.1L94 -75.1L95 -75.1L96 -75.3L97 -74.6L98 -73.6L99 -74.6L100 -73.2L101 -74.0L102 -74.5L103 -73.4L104 -74.2L105 -73.7L106 -73.8L107 -75.4L108 -74.0L109 -74.1L110 -75.0L111 -74.4L112 -74.7L113 -75.4L114 -75.9L115 -76.2L116 -75.1L117 -75.4L118 -73.6L119 -76.6L120 -78.1L121 -79.9L122 -81.1L123 -76.6L124 -75.0L125 -72.3L126 -72.7L127 -73.2L128 -72.0L129 -73.1L130 -73.1L131 -74.1L132 -74.7L133 -73.2L134 -73.6L135 -74.0L136 -73.6L137 -72.9L138 -73.3L139 -73.5L140 -73.3L141 -74.4L142 -72.4L143 -73.3L144 -73.1L145 -73.8L146 -74.4L147 -73.3L148 -71.9L149 -73.7L150 -73.2L151 -72.1L152 -72.1L153 -74.0L154 -72.5L155 -71.6L156 -73.1L157 -85.4L158 -93.8L159 -84.0L160 -80.4L161 -78.7L162 -76.1L163 -76.4L164 -76.2L165 -75.0L166 -73.9L167 -74.5L168 -75.3L169 -76.4L170 -75.8L171 -75.3L172 -75.3L173 -74.9L174 -73.8L175 -73.0L176 -73.8L177 -73.2L178 -74.5L179 -74.9L180 -76.2L181 -76.2L182 -75.0L183 -75.2L184 -76.2L185 -76.4L186 -74.9L187 -74.5L188 -74.7L189 -74.3L190 -73.8L191 -74.1L192 -72.3L193 -73.6L194 -73.3L195 -75.5L196 -75.3L197 -74.8L198 -75.5L199 -76.1L200 -76.2L201 -76.5L202 -76.4L203 -77.6L204 -75.5L205 -75.5L206 -74.2L207 -74.5L208 -75.4L209 -74.0L210 -74.9L211 -75.0L212 -74.9L213 -75.1L214 -75.5L215 -75.6L216 -75.5L217 -74.9L218 -75.0L219 -75.1L220 -76.5L221 -75.6L222 -76.5L223 -74.7L224 -75.1L225 -74.9L226 -75.8L227 -74.3L228 -73.4L229 -74.1L230 -73.2L231 -73.8L232 -73.7L233 -74.7L234 -74.7L235 -73.0L236 -72.6L237 -72.9L238 -72.9L239 -74.2L240 -73.9L241 -74.7L242 -75.0L243 -74.9L244 -73.9"/><path id="s1004" d="M0 -74.7L1 -76.0L2 -75.5L3 -74.1L4 -72.8L5 -73.8L6 -74.4L7 -73.8L8 -73.8L9 -73.3L10 -73.4L11 -74.3L12 -73.9L13 -73.9L14 -74.0L15 -74.0L16 -74.7L17 -75.5L18 -75.1L19 -74.4L20 -74.6L21 -74.2L22 -74.2L23 -75.2L24 -75.2L25 -76.2L26 -75.1L27 -75.4L28 -74.4L29 -74.9L30 -74.0L31 -75.1L32 -75.2L33 -76.2L34 -75.0L35 -74.9L36 -76.1L37 -74.5L38 -74.3L39 -74.3L40 -73.9L41 -73.6L42 -74.6L43 -75.4L44 -73.5L45 -74.1L46 -73.7L47 -75.2L48 -74.6L49 -74.6L50 -74.8L51 -75.1L52 -74.8L53 -74.1L54 -74.5L55 -73.5L56 -73.9L57 -74.9L58 -75.1L59 -74.9L60 -74.5L61 -75.8L62 -75.1L63 -75.0L64 -75.0L65 -75.7L66 -75.9L67 -76.0L68 -74.6L69 -75.1L70 -75.7L71 -74.3L72 -74.9L73 -74.6L74 -74.6L75 -75.7L76 -74.7L77 -75.4L78 -76.4L79 -75.5L80 -75.1L81 -73.6L82 -75.1L83 -75.5L84 -75.8L85 -75.9L86 -74.0L87 -74.4L88 -74.9L89 -76.3L90 -76.4L91 -77.3L92 -75.5L93 -75.3L94 -74.9L95 -74.7L96 -76.1L97 -75.5L98 -75.5L99 -75.7L100 -75.1L101 -74.9L102 -75.7L103 -75.5L104 -75.0L105 -75.9L106 -75.0L107 -75.1L108 -76.5L109 -75.7L110 -75.3L111 -74.5L112 -75.5L113 -74.2L114 -74.1L115 -75.1L116 -77.1L117 -75.0L118 -75.4L119 -75.0L120 -75.8L121 -77.8L122 -78.0L123 -77.7L124 -75.8L125 -73.6L126 -73.4L127 -73.9L128 -73.5L129 -72.4L130 -72.8L131 -74.0L132 -75.0L133 -73.4L134 -72.8L135 -73.1L136 -73.5L137 -71.7L138 -72.4L139 -72.0L140 -72.1L141 -73.6L142 -73.6L143 -73.7L144 -73.2L145 -73.8L146 -73.1L147 -73.3L148 -73.1L149 -73.6L150 -72.7L151 -73.1L152 -73.4L153 -75.4L154 -73.4L155 -72.5L156 -73.1L157 -84.7L158 -93.9L159 -84.8L160 -80.5L161 -78.4L162 -76.7L163 -76.9L164 -77.1L165 -76.0L166 -76.6L167 -76.8L168 -76.1L169 -76.4L170 -77.4L171 -76.8L172 -76.1L173 -75.2L174 -75.7L175 -73.6L176 -75.2L177 -76.6L178 -75.2L179 -75.4L180 -74.6L181 -73.5L182 -74.0L183 -73.7L184 -74.6L185 -74.3L186 -74.0L187 -74.4L188 -74.9L189 -75.6L190 -75.5L191 -76.4L192 -74.6L193 -76.6L194 -76.4L195 -75.7L196 -75.9L197 -75.1L198 -74.8L199 -74.2L200 -75.7L201 -75.0L202 -74.6L203 -74.1L204 -74.8L205 -75.0L206 -74.5L207 -75.9L208 -76.8L209 -75.5L210 -75.0L211 -74.3L212 -75.9L213 -74.4L214 -75.8L215 -75.3L216 -75.5L217 -75.0L218 -75.1L219 -74.3L220 -75.5L221 -76.3L222 -76.3L223 -75.7L224 -74.0L225 -74.0L226 -74.0L227 -74.0L228 -75.0L229 -75.9L230 -75.4L231 -75.6L232 -74.9L233 -75.2L234 -75.3L235 -75.6L236 -74.9L237 -74.5L238 -75.0L239 -76.2L240 -74.3L241 -75.1L242 -75.1L243 -74.4L244 -74.2"/></g></defs><g clip-path="url(#cs10)" opacity="0.96"><g fill="none" stroke-linejoin="round" shape-rendering="auto" filter="url(#fs10)"><g transform="translate(90.2,632.90)"><path d="M0 0L0 -74.9L1 -74.9L2 -74.9L3 -74.9L4 -74.9L5 -74.9L6 -74.9L7 -74.9L8 -74.9L9 -74.9L10 -74.9L11 -74.9L12 -74.9L13 -74.9L14 -74.9L15 -74.9L16 -74.9L17 -74.9L18 -74.9L19 -74.9L20 -74.9L21 -74.9L22 -74.9L23 -74.9L24 -74.9L25 -74.9L26 -74.9L27 -74.9L28 -74.9L29 -74.9L30 -74.9L31 -74.9L32 -74.9L33 -74.9L34 -74.9L35 -74.9L36 -74.9L37 -74.9L38 -74.9L39 -74.9L40 -74.9L41 -74.9L42 -74.9L43 -74.9L44 -74.9L45 -74.9L46 -74.9L47 -74.9L48 -74.9L49 -74.9L50 -74.9L51 -74.9L52 -74.9L53 -74.9L54 -74.9L55 -74.9L56 -74.9L57 -74.9L58 -74.9L59 -74.9L60 -74.9L61 -74.9L62 -74.9L63 -74.9L64 -74.9L65 -74.9L66 -74.9L67 -74.9L68 -74.9L69 -74.9L70 -74.9L71 -74.9L72 -74.9L73 -74.9L74 -74.9L75 -74.9L76 -74.9L77 -74.9L78 -74.9L79 -74.9L80 -74.9L81 -74.9L82 -74.9L83 -74.9L84 -74.9L85 -74.9L86 -74.9L87 -74.9L88 -74.9L89 -74.9L90 -74.9L91 -74.9L92 -74.9L93 -74.9L94 -74.9L95 -74.9L96 -74.9L97 -74.9L98 -74.9L99 -74.9L100 -74.9L101 -74.9L102 -74.9L103 -74.9L104 -74.9L105 -74.9L106 -74.9L107 -74.9L108 -74.9L109 -74.9L110 -74.9L111 -74.9L112 -74.9L113 -75.0L114 -75.6L115 -76.2L116 -75.8L117 -75.1L118 -75.1L119 -75.8L120 -77.6L121 -79.5L122 -79.2L123 -77.1L124 -75.5L125 -73.5L126 -73.4L127 -73.4L128 -73.4L129 -73.4L130 -73.4L131 -73.4L132 -73.4L133 -73.4L134 -73.4L135 -73.4L136 -73.4L137 -72.5L138 -72.5L139 -72.5L140 -72.5L141 -73.4L142 -73.4L143 -73.4L144 -73.4L145 -73.4L146 -73.4L147 -73.4L148 -73.4L149 -73.4L150 -73.4L151 -73.4L152 -73.4L153 -74.7L154 -73.4L155 -71.9L156 -73.6L157 -84.1L158 -92.8L159 -84.1L160 -80.5L161 -78.7L162 -77.8L163 -77.2L164 -76.7L165 -76.4L166 -76.1L167 -75.9L168 -75.7L169 -75.6L170 -75.5L171 -75.4L172 -75.3L173 -75.2L174 -75.2L175 -75.1L176 -75.1L177 -75.0L178 -75.0L179 -75.0L180 -75.0L181 -75.0L182 -74.9L183 -74.9L184 -74.9L185 -74.9L186 -74.9L187 -74.9L188 -74.9L189 -74.9L190 -74.9L191 -74.9L192 -74.9L193 -74.9L194 -74.9L195 -74.9L196 -74.9L197 -74.9L198 -74.9L199 -74.9L200 -74.9L201 -74.9L202 -74.9L203 -74.9L204 -74.9L205 -74.9L206 -74.9L207 -74.9L208 -74.9L209 -74.9L210 -74.9L211 -74.9L212 -74.9L213 -74.9L214 -74.9L215 -74.9L216 -74.9L217 -74.9L218 -74.9L219 -74.9L220 -74.9L221 -74.9L222 -74.9L223 -74.9L224 -74.9L225 -74.9L226 -74.9L227 -74.9L228 -74.9L229 -74.9L230 -74.9L231 -74.9L232 -74.9L233 -74.9L234 -74.9L235 -74.9L236 -74.9L237 -74.9L238 -74.9L239 -74.9L240 -74.9L241 -74.9L242 -74.9L243 -74.9L244 -74.9L244 0Z" fill="#ece9f1" fill-opacity="0.9" stroke="none"/><use href="#s1000" transform="scale(1,0.0084)" stroke="#56A64B" stroke-width="1.63"/><use href="#s1004" transform="scale(1,0.0256)" stroke="#E0B400" stroke-width="1.73"/><use href="#s1000" transform="scale(1,0.0453)" stroke="#5794F2" stroke-width="2.1"/><use href="#s1002" transform="scale(1,0.0645)" stroke="#FA6400" stroke-width="1.64"/><use href="#s1000" transform="scale(1,0.0816)" stroke="#E02F44" stroke-width="1.68"/><use href="#s1000" transform="scale(1,0.0993)" stroke="#3274D9" stroke-width="1.76"/><use href="#s1004" transform="scale(1,0.1153)" stroke="#A352CC" stroke-width="1.36"/><use href="#s1002" transform="scale(1,0.131)" stroke="#705DA0" stroke-width="1.69"/><use href="#s1004" transform="scale(1,0.1489)" stroke="#37872D" stroke-width="1.81"/><use href="#s1001" transform="scale(1,0.1683)" stroke="#F2CC0C" stroke-width="1.97"/><use href="#s1002" transform="scale(1,0.1849)" stroke="#447EBC" stroke-width="1.27"/><use href="#s1002" transform="scale(1,0.199)" stroke="#C15C17" stroke-width="1.48"/><use href="#s1000" transform="scale(1,0.2131)" stroke="#890F02" stroke-width="1.26"/><use href="#s1001" transform="scale(1,0.2298)" stroke="#0A437C" stroke-width="1.99"/><use href="#s1000" transform="scale(1,0.2496)" stroke="#6D1F62" stroke-width="1.87"/><use href="#s1002" transform="scale(1,0.2654)" stroke="#584477" stroke-width="1.21"/><use href="#s1003" transform="scale(1,0.2827)" stroke="#B7DBAB" stroke-width="2.16"/><use href="#s1003" transform="scale(1,0.3048)" stroke="#F4D598" stroke-width="2.14"/><use href="#s1004" transform="scale(1,0.3252)" stroke="#70DBED" stroke-width="1.83"/><use href="#s1002" transform="scale(1,0.3438)" stroke="#F9BA8F" stroke-width="1.79"/><use href="#s1000" transform="scale(1,0.3598)" stroke="#F29191" stroke-width="1.33"/><use href="#s1000" transform="scale(1,0.3728)" stroke="#82B5D8" stroke-width="1.19"/><use href="#s1000" transform="scale(1,0.3876)" stroke="#E5A8E2" stroke-width="1.7"/><use href="#s1002" transform="scale(1,0.4027)" stroke="#AEA2E0" stroke-width="1.23"/><use href="#s1002" transform="scale(1,0.416)" stroke="#629E51" stroke-width="1.36"/><use href="#s1002" transform="scale(1,0.4303)" stroke="#E5AC0E" stroke-width="1.42"/><use href="#s1004" transform="scale(1,0.4437)" stroke="#64B0C8" stroke-width="1.2"/><use href="#s1002" transform="scale(1,0.4583)" stroke="#E0752D" stroke-width="1.64"/><use href="#s1002" transform="scale(1,0.475)" stroke="#BF1B00" stroke-width="1.61"/><use href="#s1001" transform="scale(1,0.4937)" stroke="#0A50A1" stroke-width="2.02"/><use href="#s1004" transform="scale(1,0.5128)" stroke="#962D82" stroke-width="1.69"/><use href="#s1001" transform="scale(1,0.5308)" stroke="#614D93" stroke-width="1.82"/><use href="#s1000" transform="scale(1,0.5487)" stroke="#9AC48A" stroke-width="1.67"/><use href="#s1003" transform="scale(1,0.5668)" stroke="#F2C96D" stroke-width="1.84"/><use href="#s1002" transform="scale(1,0.5846)" stroke="#65C5DB" stroke-width="1.63"/><use href="#s1003" transform="scale(1,0.6004)" stroke="#F9934E" stroke-width="1.45"/><use href="#s1002" transform="scale(1,0.6191)" stroke="#EA6460" stroke-width="2.17"/><use href="#s1004" transform="scale(1,0.6414)" stroke="#5195CE" stroke-width="2.17"/><use href="#s1000" transform="scale(1,0.6629)" stroke="#D683CE" stroke-width="2.02"/><use href="#s1001" transform="scale(1,0.6829)" stroke="#806EB7" stroke-width="1.88"/><use href="#s1003" transform="scale(1,0.7003)" stroke="#3F6833" stroke-width="1.49"/><use href="#s1003" transform="scale(1,0.7151)" stroke="#967302" stroke-width="1.4"/><use href="#s1001" transform="scale(1,0.7298)" stroke="#2F575E" stroke-width="1.46"/><use href="#s1004" transform="scale(1,0.7437)" stroke="#99440A" stroke-width="1.24"/><use href="#s1000" transform="scale(1,0.7601)" stroke="#58140C" stroke-width="1.94"/><use href="#s1003" transform="scale(1,0.7782)" stroke="#052B51" stroke-width="1.57"/><use href="#s1004" transform="scale(1,0.7966)" stroke="#511749" stroke-width="2.02"/><use href="#s1003" transform="scale(1,0.815)" stroke="#3F2B5B" stroke-width="1.56"/><use href="#s1003" transform="scale(1,0.834)" stroke="#E0F9D7" stroke-width="2.13"/><use href="#s1002" transform="scale(1,0.8554)" stroke="#FCEACA" stroke-width="2.02"/><use href="#s1000" transform="scale(1,0.8718)" stroke="#CFFAFF" stroke-width="1.17"/><use href="#s1004" transform="scale(1,0.8849)" stroke="#F9E2D2" stroke-width="1.38"/><use href="#s1001" transform="scale(1,0.9027)" stroke="#FCE2DE" stroke-width="2.09"/><use href="#s1002" transform="scale(1,0.9219)" stroke="#BADFF4" stroke-width="1.64"/><use href="#s1001" transform="scale(1,0.9414)" stroke="#F9D9F9" stroke-width="2.16"/><use href="#s1004" transform="scale(1,0.9606)" stroke="#DEDAF7" stroke-width="1.57"/><use href="#s1003" transform="scale(1,0.9738)" stroke="#56A64B" stroke-width="1.15"/><use href="#s1000" transform="scale(1,0.9923)" stroke="#E0B400" stroke-width="1.15"/></g></g></g></svg>
<div class="sw" style="left:29.1px;top:666.0px;background:#56A64B"></div><span class="t" style="left:51.10px;top:661.50px;font-size:12px;color:#2b3035;letter-spacing:0.742px;">distributor-66b8bf6b75-2gn8n</span>
<div class="sw" style="left:29.1px;top:689.5px;background:#E0B400"></div><span class="t" style="left:51.10px;top:685.00px;font-size:12px;color:#2b3035;letter-spacing:0.766px;">distributor-66b8bf6b75-2zwsz</span>
<div class="sw" style="left:29.1px;top:713.0px;background:#5794F2"></div><span class="t" style="left:51.10px;top:708.50px;font-size:12px;color:#2b3035;letter-spacing:0.746px;">distributor-66b8bf6b75-46j74</span>
<svg class="abs" style="left:0;top:0" width="1400" height="1000" shape-rendering="crispEdges"><path d="M451.5 527.3V638.0" stroke="rgba(36,41,46,0.1)" stroke-width="1"/><path d="M512.5 527.3V638.0" stroke="rgba(36,41,46,0.1)" stroke-width="1"/><path d="M573.5 527.3V638.0" stroke="rgba(36,41,46,0.1)" stroke-width="1"/><path d="M634.5 527.3V638.0" stroke="rgba(36,41,46,0.1)" stroke-width="1"/><path d="M434.2 633.5H678.2" stroke="rgba(36,41,46,0.1)" stroke-width="1"/><path d="M434.2 574.5H678.2" stroke="rgba(36,41,46,0.1)" stroke-width="1"/></svg><span class="t" style="left:436.00px;top:641.60px;font-size:12px;color:#2b3035;letter-spacing:-0.008px;">17:30</span><span class="t" style="left:497.00px;top:641.60px;font-size:12px;color:#2b3035;letter-spacing:-0.008px;">17:45</span><span class="t" style="left:558.00px;top:641.60px;font-size:12px;color:#2b3035;letter-spacing:-0.008px;">18:00</span><span class="t" style="left:619.00px;top:641.60px;font-size:12px;color:#2b3035;letter-spacing:-0.008px;">18:15</span><span class="t" style="left:398.80px;top:626.90px;font-size:12px;color:#2b3035;letter-spacing:0.560px;">0 B/s</span><span class="t" style="left:372.80px;top:567.90px;font-size:12px;color:#2b3035;letter-spacing:0.700px;">200 MB/s</span>
<svg class="abs" style="left:0;top:0" width="1400" height="1000"><defs><filter id="fs11" x="-2%" y="-10%" width="104%" height="120%" color-interpolation-filters="sRGB"><feTurbulence type="fractalNoise" baseFrequency="0.45 0.35" numOctaves="1" seed="17" result="t"/><feColorMatrix in="t" type="matrix" values="0 0 0 0 0.5  0 1 0 0 0  0 0 1 0 0  0 0 0 0 1" result="m"/><feDisplacementMap in="SourceGraphic" in2="m" scale="2.0" xChannelSelector="R" yChannelSelector="G"/></filter><clipPath id="cs11"><rect x="434.2" y="0" width="244" height="633.3"/></clipPath><g class="ns"><path id="s1100" d="M0 -78.6L1 -77.8L2 -79.3L3 -78.7L4 -77.8L5 -79.0L6 -78.9L7 -79.1L8 -78.5L9 -78.6L10 -78.3L11 -77.5L12 -77.9L13 -78.6L14 -79.0L15 -80.0L16 -79.7L17 -78.6L18 -78.5L19 -77.8L20 -78.0L21 -77.9L22 -77.3L23 -77.4L24 -79.1L25 -77.9L26 -78.2L27 -78.5L28 -78.3L29 -78.5L30 -78.8L31 -80.2L32 -79.2L33 -79.0L34 -79.7L35 -79.2L36 -80.0L37 -78.8L38 -78.4L39 -77.2L40 -77.0L41 -77.7L42 -78.4L43 -78.0L44 -77.6L45 -77.4L46 -78.4L47 -79.4L48 -80.0L49 -80.7L50 -79.8L51 -78.0L52 -76.5L53 -76.5L54 -77.0L55 -78.5L56 -77.8L57 -76.7L58 -78.6L59 -79.3L60 -78.2L61 -78.9L62 -77.1L63 -78.3L64 -76.5L65 -76.9L66 -78.0L67 -77.9L68 -79.5L69 -78.5L70 -79.1L71 -79.5L72 -78.7L73 -79.0L74 -79.5L75 -79.2L76 -78.8L77 -78.6L78 -77.3L79 -77.0L80 -76.9L81 -78.7L82 -77.6L83 -77.6L84 -76.0L85 -77.2L86 -77.5L87 -78.5L88 -79.1L89 -79.1L90 -80.3L91 -80.2L92 -80.2L93 -80.3L94 -79.2L95 -78.2L96 -78.8L97 -78.9L98 -79.4L99 -78.7L100 -78.3L101 -78.2L102 -79.0L103 -78.8L104 -78.2L105 -79.0L106 -77.8L107 -77.2L108 -77.6L109 -78.0L110 -77.6L111 -78.3L112 -77.9L113 -78.1L114 -77.8L115 -77.5L116 -78.0L117 -78.9L118 -79.7L119 -80.7L120 -79.7L121 -80.6L122 -80.5L123 -79.2L124 -78.6L125 -76.8L126 -76.9L127 -77.8L128 -78.1L129 -77.2L130 -77.6L131 -77.0L132 -75.7L133 -75.9L134 -76.6L135 -77.1L136 -76.7L137 -75.9L138 -76.5L139 -76.5L140 -76.9L141 -76.2L142 -76.8L143 -76.0L144 -74.7L145 -75.9L146 -76.4L147 -76.8L148 -76.9L149 -76.9L150 -77.8L151 -77.2L152 -76.8L153 -77.7L154 -73.8L155 -70.5L156 -74.8L157 -84.3L158 -90.3L159 -84.8L160 -82.0L161 -79.5L162 -80.8L163 -78.3L164 -78.6L165 -79.3L166 -78.6L167 -79.0L168 -76.8L169 -76.8L170 -77.1L171 -76.0L172 -76.8L173 -76.2L174 -76.0L175 -74.7L176 -76.1L177 -75.7L178 -76.8L179 -75.9L180 -75.8L181 -76.6L182 -75.0L183 -76.7L184 -77.2L185 -78.6L186 -77.9L187 -77.8L188 -77.0L189 -75.6L190 -76.2L191 -77.1L192 -75.5L193 -75.6L194 -75.5L195 -76.8L196 -75.7L197 -76.8L198 -77.6L199 -76.2L200 -76.5L201 -77.7L202 -76.2L203 -77.2L204 -76.2L205 -77.2L206 -75.9L207 -76.2L208 -77.2L209 -76.8L210 -76.6L211 -77.0L212 -78.0L213 -77.4L214 -77.6L215 -76.8L216 -76.7L217 -76.8L218 -76.6L219 -77.0L220 -77.5L221 -77.6L222 -77.7L223 -77.7L224 -77.5L225 -76.2L226 -75.7L227 -77.2L228 -77.3L229 -76.6L230 -76.9L231 -76.0L232 -76.5L233 -76.4L234 -76.8L235 -77.2L236 -76.4L237 -76.4L238 -76.3L239 -76.0L240 -77.0L241 -75.6L242 -76.5L243 -76.2L244 -77.3"/><path id="s1101" d="M0 -79.1L1 -77.9L2 -77.6L3 -79.0L4 -79.3L5 -79.4L6 -77.6L7 -79.1L8 -79.2L9 -79.1L10 -78.8L11 -78.3L12 -77.8L13 -76.5L14 -77.8L15 -78.5L16 -77.3L17 -78.3L18 -76.9L19 -76.9L20 -78.8L21 -78.3L22 -80.2L23 -79.2L24 -78.6L25 -78.5L26 -79.8L27 -80.0L28 -79.7L29 -80.3L30 -79.6L31 -78.6L32 -79.6L33 -79.3L34 -79.6L35 -77.9L36 -77.8L37 -78.3L38 -77.5L39 -77.1L40 -77.1L41 -76.8L42 -76.7L43 -77.6L44 -77.9L45 -78.5L46 -77.5L47 -76.8L48 -77.9L49 -78.8L50 -78.0L51 -77.5L52 -78.0L53 -77.8L54 -78.7L55 -77.5L56 -78.1L57 -77.7L58 -77.3L59 -78.3L60 -78.0L61 -78.3L62 -78.6L63 -80.1L64 -78.6L65 -78.1L66 -77.2L67 -79.5L68 -80.8L69 -79.2L70 -78.8L71 -79.9L72 -80.6L73 -78.7L74 -77.9L75 -78.1L76 -79.0L77 -77.3L78 -77.2L79 -76.4L80 -78.5L81 -78.3L82 -78.4L83 -78.8L84 -77.3L85 -77.9L86 -77.8L87 -78.9L88 -78.7L89 -79.2L90 -79.5L91 -80.5L92 -78.6L93 -78.6L94 -79.4L95 -80.1L96 -79.6L97 -78.4L98 -78.8L99 -79.9L100 -79.9L101 -78.2L102 -79.5L103 -79.0L104 -78.0L105 -77.3L106 -77.5L107 -77.1L108 -77.8L109 -77.7L110 -80.1L111 -79.8L112 -79.5L113 -79.9L114 -80.9L115 -80.6L116 -79.6L117 -79.7L118 -77.6L119 -78.3L120 -80.2L121 -82.0L122 -81.4L123 -79.3L124 -78.2L125 -78.1L126 -77.7L127 -77.3L128 -79.3L129 -78.2L130 -76.4L131 -76.9L132 -76.2L133 -76.0L134 -76.0L135 -75.4L136 -76.5L137 -75.9L138 -74.9L139 -75.6L140 -75.3L141 -77.9L142 -76.5L143 -78.6L144 -77.3L145 -77.6L146 -76.2L147 -75.3L148 -77.9L149 -78.9L150 -77.7L151 -77.1L152 -77.3L153 -78.5L154 -74.2L155 -69.4L156 -73.6L157 -85.3L158 -91.9L159 -85.4L160 -83.0L161 -80.2L162 -80.5L163 -78.3L164 -78.6L165 -78.7L166 -77.7L167 -76.4L168 -78.5L169 -78.4L170 -78.2L171 -77.2L172 -76.6L173 -77.0L174 -75.4L175 -76.1L176 -77.4L177 -77.8L178 -75.5L179 -77.0L180 -76.9L181 -77.4L182 -77.5L183 -76.3L184 -77.4L185 -76.8L186 -75.5L187 -75.4L188 -77.4L189 -77.4L190 -77.4L191 -78.1L192 -77.0L193 -76.3L194 -76.6L195 -75.8L196 -77.0L197 -77.2L198 -77.1L199 -76.7L200 -76.3L201 -76.5L202 -76.6L203 -76.7L204 -76.4L205 -78.2L206 -77.1L207 -77.4L208 -78.2L209 -77.3L210 -75.7L211 -76.1L212 -76.8L213 -75.8L214 -75.9L215 -77.7L216 -78.3L217 -76.9L218 -76.9L219 -76.1L220 -75.2L221 -76.8L222 -76.1L223 -77.1L224 -77.1L225 -77.5L226 -76.8L227 -76.9L228 -76.3L229 -77.9L230 -78.2L231 -77.3L232 -76.2L233 -76.9L234 -77.0L235 -77.3L236 -76.7L237 -76.2L238 -75.8L239 -77.3L240 -76.3L241 -76.9L242 -77.5L243 -76.7L244 -77.5"/><path id="s1102" d="M0 -76.2L1 -77.6L2 -78.0L3 -77.0L4 -76.9L5 -78.9L6 -77.7L7 -79.2L8 -78.6L9 -79.3L10 -80.6L11 -79.0L12 -80.8L13 -79.5L14 -78.9L15 -78.9L16 -79.4L17 -77.8L18 -78.3L19 -78.3L20 -78.1L21 -78.9L22 -78.4L23 -78.9L24 -79.1L25 -78.5L26 -78.0L27 -78.9L28 -78.2L29 -80.4L30 -78.5L31 -77.5L32 -79.2L33 -78.8L34 -77.4L35 -77.5L36 -77.8L37 -78.6L38 -77.7L39 -78.1L40 -78.9L41 -78.8L42 -80.9L43 -78.3L44 -78.3L45 -77.7L46 -78.3L47 -80.0L48 -78.8L49 -79.3L50 -78.5L51 -78.8L52 -79.5L53 -79.2L54 -79.3L55 -79.7L56 -78.9L57 -78.4L58 -78.9L59 -77.2L60 -77.0L61 -77.6L62 -76.7L63 -76.8L64 -78.0L65 -77.9L66 -78.6L67 -78.7L68 -78.9L69 -78.0L70 -78.8L71 -77.7L72 -78.6L73 -79.2L74 -78.6L75 -77.4L76 -78.3L77 -78.6L78 -77.9L79 -77.9L80 -78.0L81 -77.7L82 -77.4L83 -78.3L84 -77.4L85 -79.8L86 -79.8L87 -78.8L88 -79.0L89 -79.6L90 -78.1L91 -77.4L92 -77.9L93 -78.7L94 -77.0L95 -76.3L96 -77.6L97 -77.5L98 -77.6L99 -78.2L100 -77.8L101 -79.0L102 -79.1L103 -78.4L104 -77.8L105 -77.5L106 -78.5L107 -77.0L108 -78.1L109 -78.7L110 -78.6L111 -78.5L112 -78.5L113 -77.7L114 -79.1L115 -81.8L116 -81.4L117 -80.7L118 -81.2L119 -80.7L120 -81.1L121 -81.8L122 -82.3L123 -79.0L124 -78.9L125 -76.2L126 -75.9L127 -77.2L128 -78.2L129 -77.8L130 -77.9L131 -77.6L132 -76.8L133 -78.2L134 -77.3L135 -77.0L136 -78.1L137 -75.8L138 -75.6L139 -76.7L140 -76.4L141 -76.6L142 -77.2L143 -76.8L144 -78.2L145 -77.4L146 -76.1L147 -77.4L148 -75.9L149 -75.4L150 -75.1L151 -75.5L152 -75.2L153 -76.6L154 -72.3L155 -69.4L156 -75.5L157 -85.9L158 -89.8L159 -85.4L160 -82.8L161 -81.2L162 -80.2L163 -78.7L164 -78.7L165 -78.4L166 -77.6L167 -77.8L168 -77.2L169 -78.2L170 -77.3L171 -77.7L172 -77.8L173 -76.8L174 -78.0L175 -77.5L176 -76.6L177 -75.8L178 -76.4L179 -77.4L180 -76.6L181 -75.9L182 -75.7L183 -77.3L184 -77.2L185 -75.6L186 -75.2L187 -75.2L188 -77.2L189 -77.8L190 -77.9L191 -77.5L192 -76.8L193 -76.2L194 -75.7L195 -76.3L196 -74.4L197 -75.2L198 -76.6L199 -76.3L200 -76.7L201 -77.3L202 -76.8L203 -76.1L204 -76.2L205 -75.3L206 -77.2L207 -76.5L208 -75.8L209 -76.9L210 -77.1L211 -77.4L212 -76.5L213 -75.6L214 -77.3L215 -76.5L216 -76.5L217 -77.6L218 -77.6L219 -77.3L220 -77.2L221 -77.1L222 -77.5L223 -76.2L224 -76.0L225 -76.7L226 -75.6L227 -76.2L228 -76.8L229 -75.9L230 -76.0L231 -75.3L232 -74.9L233 -76.6L234 -76.2L235 -76.4L236 -77.2L237 -77.7L238 -77.3L239 -76.3L240 -77.6L241 -75.4L242 -75.2L243 -75.6L244 -75.6"/><path id="s1103" d="M0 -79.2L1 -78.6L2 -79.1L3 -79.5L4 -79.2L5 -78.7L6 -78.1L7 -78.7L8 -79.4L9 -78.6L10 -79.5L11 -79.9L12 -78.1L13 -76.8L14 -78.9L15 -77.3L16 -77.9L17 -78.7L18 -78.5L19 -78.8L20 -78.3L21 -77.7L22 -78.9L23 -78.3L24 -78.8L25 -78.0L26 -78.2L27 -79.2L28 -79.3L29 -78.7L30 -77.9L31 -79.2L32 -78.6L33 -78.9L34 -79.3L35 -79.6L36 -80.0L37 -78.6L38 -79.3L39 -79.5L40 -77.3L41 -79.0L42 -79.2L43 -78.3L44 -79.1L45 -78.8L46 -78.5L47 -77.6L48 -79.8L49 -79.8L50 -79.6L51 -78.6L52 -78.7L53 -78.1L54 -77.8L55 -78.0L56 -78.8L57 -78.9L58 -78.0L59 -78.6L60 -78.6L61 -78.7L62 -79.3L63 -80.0L64 -77.4L65 -77.6L66 -77.6L67 -79.3L68 -78.7L69 -78.3L70 -78.9L71 -77.3L72 -77.1L73 -77.0L74 -77.5L75 -77.7L76 -77.6L77 -77.8L78 -77.7L79 -78.5L80 -78.3L81 -79.3L82 -78.8L83 -77.9L84 -78.2L85 -78.4L86 -78.4L87 -78.3L88 -77.9L89 -77.4L90 -78.0L91 -77.5L92 -77.4L93 -78.2L94 -77.8L95 -77.0L96 -77.6L97 -78.0L98 -77.2L99 -78.4L100 -77.8L101 -78.2L102 -78.9L103 -79.7L104 -80.1L105 -78.4L106 -78.4L107 -77.6L108 -77.8L109 -78.0L110 -79.1L111 -79.7L112 -79.5L113 -78.0L114 -80.3L115 -80.7L116 -79.8L117 -80.0L118 -80.0L119 -79.8L120 -80.7L121 -81.1L122 -82.3L123 -79.9L124 -79.1L125 -76.7L126 -75.5L127 -76.0L128 -76.6L129 -76.6L130 -76.3L131 -77.2L132 -77.2L133 -77.7L134 -76.7L135 -77.0L136 -77.2L137 -75.1L138 -76.6L139 -76.0L140 -77.0L141 -77.8L142 -76.7L143 -77.9L144 -77.5L145 -78.0L146 -77.4L147 -75.9L148 -76.5L149 -77.2L150 -77.5L151 -76.4L152 -75.6L153 -76.7L154 -74.3L155 -70.2L156 -74.8L157 -84.7L158 -91.5L159 -85.3L160 -81.4L161 -79.9L162 -79.1L163 -78.3L164 -76.7L165 -76.7L166 -76.9L167 -76.4L168 -76.8L169 -76.2L170 -76.0L171 -77.7L172 -75.6L173 -76.8L174 -76.1L175 -75.8L176 -77.2L177 -78.1L178 -77.0L179 -76.6L180 -75.7L181 -77.6L182 -77.7L183 -77.0L184 -74.7L185 -76.0L186 -74.6L187 -75.7L188 -75.5L189 -75.2L190 -76.2L191 -74.5L192 -76.8L193 -76.6L194 -77.8L195 -76.9L196 -77.1L197 -77.2L198 -76.5L199 -76.6L200 -75.5L201 -75.5L202 -76.7L203 -76.8L204 -77.1L205 -77.6L206 -76.3L207 -75.5L208 -76.5L209 -76.4L210 -76.8L211 -76.7L212 -76.5L213 -76.5L214 -76.3L215 -76.1L216 -75.6L217 -76.4L218 -78.2L219 -77.6L220 -78.0L221 -76.7L222 -77.8L223 -77.4L224 -76.9L225 -76.7L226 -77.7L227 -77.6L228 -77.3L229 -76.2L230 -76.6L231 -78.1L232 -78.8L233 -77.7L234 -76.5L235 -75.8L236 -77.2L237 -76.4L238 -77.1L239 -76.1L240 -75.6L241 -76.4L242 -75.4L243 -75.6L244 -76.6"/><path id="s1104" d="M0 -78.4L1 -77.3L2 -78.0L3 -78.7L4 -77.7L5 -78.2L6 -77.7L7 -78.6L8 -77.2L9 -78.5L10 -77.5L11 -79.6L12 -80.4L13 -78.4L14 -78.8L15 -79.9L16 -79.5L17 -78.7L18 -78.6L19 -79.4L20 -77.8L21 -77.7L22 -79.0L23 -79.4L24 -77.9L25 -78.2L26 -78.2L27 -77.5L28 -78.3L29 -78.1L30 -76.7L31 -78.0L32 -77.7L33 -77.7L34 -78.1L35 -78.6L36 -78.6L37 -79.5L38 -78.3L39 -77.8L40 -77.4L41 -79.5L42 -78.6L43 -77.9L44 -79.3L45 -78.1L46 -78.5L47 -78.3L48 -79.0L49 -78.3L50 -79.1L51 -78.4L52 -78.3L53 -78.3L54 -79.0L55 -79.2L56 -78.1L57 -79.6L58 -77.8L59 -78.6L60 -77.4L61 -77.7L62 -79.3L63 -79.0L64 -78.4L65 -78.5L66 -78.6L67 -78.2L68 -78.4L69 -78.8L70 -78.5L71 -78.3L72 -79.7L73 -78.6L74 -79.4L75 -79.8L76 -80.0L77 -78.8L78 -77.5L79 -79.1L80 -77.4L81 -78.4L82 -78.9L83 -78.2L84 -78.5L85 -80.2L86 -79.9L87 -79.9L88 -78.8L89 -80.3L90 -80.7L91 -78.4L92 -78.8L93 -79.8L94 -80.5L95 -79.3L96 -78.5L97 -78.3L98 -78.1L99 -78.5L100 -78.0L101 -78.0L102 -79.0L103 -78.4L104 -77.6L105 -76.9L106 -77.6L107 -78.0L108 -77.6L109 -77.7L110 -77.0L111 -78.4L112 -78.8L113 -79.0L114 -79.1L115 -80.4L116 -80.6L117 -78.1L118 -78.1L119 -78.9L120 -80.2L121 -80.2L122 -80.8L123 -80.3L124 -78.6L125 -75.9L126 -76.1L127 -76.2L128 -76.9L129 -76.5L130 -77.1L131 -76.5L132 -76.0L133 -75.3L134 -77.1L135 -77.2L136 -77.4L137 -77.2L138 -76.4L139 -75.8L140 -76.8L141 -77.3L142 -76.3L143 -76.2L144 -76.1L145 -75.8L146 -76.8L147 -77.0L148 -76.7L149 -76.7L150 -77.6L151 -76.5L152 -75.8L153 -77.8L154 -74.2L155 -70.8L156 -75.6L157 -86.6L158 -93.3L159 -87.0L160 -83.4L161 -82.2L162 -81.2L163 -79.8L164 -77.7L165 -76.9L166 -77.2L167 -76.0L168 -77.5L169 -76.0L170 -76.4L171 -75.4L172 -76.3L173 -76.9L174 -76.6L175 -76.6L176 -75.8L177 -75.0L178 -76.8L179 -77.5L180 -78.0L181 -77.0L182 -76.9L183 -76.2L184 -77.1L185 -77.7L186 -77.8L187 -77.2L188 -75.8L189 -76.9L190 -76.8L191 -76.8L192 -77.9L193 -75.9L194 -78.4L195 -78.6L196 -77.5L197 -76.9L198 -77.8L199 -76.4L200 -75.8L201 -75.8L202 -76.0L203 -76.3L204 -75.2L205 -75.4L206 -76.7L207 -75.9L208 -76.4L209 -76.1L210 -76.4L211 -76.4L212 -76.5L213 -76.6L214 -77.7L215 -77.0L216 -76.3L217 -76.9L218 -77.9L219 -77.5L220 -76.6L221 -77.4L222 -78.7L223 -77.6L224 -75.7L225 -77.0L226 -77.1L227 -76.5L228 -76.4L229 -77.0L230 -75.9L231 -76.8L232 -76.4L233 -76.1L234 -75.4L235 -75.4L236 -74.9L237 -75.0L238 -76.3L239 -76.9L240 -77.9L241 -76.4L242 -76.7L243 -77.0L244 -77.8"/></g></defs><g clip-path="url(#cs11)" opacity="0.96"><g fill="none" stroke-linejoin="round" shape-rendering="auto" filter="url(#fs11)"><g transform="translate(434.2,632.90)"><path d="M0 0L0 -78.5L1 -78.5L2 -78.5L3 -78.5L4 -78.5L5 -78.5L6 -78.5L7 -78.5L8 -78.5L9 -78.5L10 -78.5L11 -78.5L12 -78.5L13 -78.5L14 -78.5L15 -78.5L16 -78.5L17 -78.5L18 -78.5L19 -78.5L20 -78.5L21 -78.5L22 -78.5L23 -78.5L24 -78.5L25 -78.5L26 -78.5L27 -78.5L28 -78.5L29 -78.5L30 -78.5L31 -78.5L32 -78.5L33 -78.5L34 -78.5L35 -78.5L36 -78.5L37 -78.5L38 -78.5L39 -78.5L40 -78.5L41 -78.5L42 -78.5L43 -78.5L44 -78.5L45 -78.5L46 -78.5L47 -78.5L48 -78.5L49 -78.5L50 -78.5L51 -78.5L52 -78.5L53 -78.5L54 -78.5L55 -78.5L56 -78.5L57 -78.5L58 -78.5L59 -78.5L60 -78.5L61 -78.5L62 -78.5L63 -78.5L64 -78.5L65 -78.5L66 -78.5L67 -78.5L68 -78.5L69 -78.5L70 -78.5L71 -78.5L72 -78.5L73 -78.5L74 -78.5L75 -78.5L76 -78.5L77 -78.5L78 -78.5L79 -78.5L80 -78.5L81 -78.5L82 -78.5L83 -78.5L84 -78.5L85 -78.5L86 -78.5L87 -78.5L88 -78.5L89 -78.5L90 -78.5L91 -78.5L92 -78.5L93 -78.5L94 -78.5L95 -78.5L96 -78.5L97 -78.5L98 -78.5L99 -78.5L100 -78.5L101 -78.5L102 -78.5L103 -78.5L104 -78.5L105 -78.5L106 -78.5L107 -78.5L108 -78.5L109 -78.5L110 -78.5L111 -78.5L112 -78.5L113 -78.6L114 -79.3L115 -79.9L116 -79.4L117 -78.7L118 -78.6L119 -79.0L120 -80.0L121 -81.1L122 -80.9L123 -79.7L124 -78.8L125 -77.0L126 -76.9L127 -76.9L128 -76.9L129 -76.9L130 -76.9L131 -76.9L132 -76.9L133 -76.9L134 -76.9L135 -76.9L136 -76.9L137 -76.0L138 -76.0L139 -76.0L140 -76.0L141 -76.9L142 -76.9L143 -76.9L144 -76.9L145 -76.9L146 -76.9L147 -76.9L148 -76.9L149 -76.9L150 -76.9L151 -76.9L152 -76.9L153 -78.0L154 -74.5L155 -70.6L156 -75.2L157 -85.2L158 -91.8L159 -85.4L160 -82.6L161 -81.3L162 -80.6L163 -78.4L164 -78.1L165 -77.8L166 -77.6L167 -77.5L168 -77.3L169 -77.2L170 -77.1L171 -77.1L172 -77.0L173 -76.9L174 -76.9L175 -76.9L176 -76.8L177 -76.8L178 -76.8L179 -76.8L180 -76.8L181 -76.8L182 -76.7L183 -76.7L184 -76.7L185 -76.7L186 -76.7L187 -76.7L188 -76.7L189 -76.7L190 -76.7L191 -76.7L192 -76.7L193 -76.7L194 -76.7L195 -76.7L196 -76.7L197 -76.7L198 -76.7L199 -76.7L200 -76.7L201 -76.7L202 -76.7L203 -76.7L204 -76.7L205 -76.7L206 -76.7L207 -76.7L208 -76.7L209 -76.7L210 -76.7L211 -76.7L212 -76.7L213 -76.7L214 -76.7L215 -76.7L216 -76.7L217 -76.7L218 -76.7L219 -76.7L220 -76.7L221 -76.7L222 -76.7L223 -76.7L224 -76.7L225 -76.7L226 -76.7L227 -76.7L228 -76.7L229 -76.7L230 -76.7L231 -76.7L232 -76.7L233 -76.7L234 -76.7L235 -76.7L236 -76.7L237 -76.7L238 -76.7L239 -76.7L240 -76.7L241 -76.7L242 -76.7L243 -76.7L244 -76.7L244 0Z" fill="#ece9f1" fill-opacity="0.9" stroke="none"/><use href="#s1104" transform="scale(1,0.0087)" stroke="#56A64B" stroke-width="1.77"/><use href="#s1100" transform="scale(1,0.027)" stroke="#E0B400" stroke-width="1.97"/><use href="#s1101" transform="scale(1,0.0464)" stroke="#5794F2" stroke-width="1.98"/><use href="#s1103" transform="scale(1,0.063)" stroke="#FA6400" stroke-width="1.41"/><use href="#s1102" transform="scale(1,0.0762)" stroke="#E02F44" stroke-width="1.27"/><use href="#s1104" transform="scale(1,0.0906)" stroke="#3274D9" stroke-width="1.66"/><use href="#s1104" transform="scale(1,0.1064)" stroke="#A352CC" stroke-width="1.56"/><use href="#s1103" transform="scale(1,0.1245)" stroke="#705DA0" stroke-width="2.14"/><use href="#s1103" transform="scale(1,0.1448)" stroke="#37872D" stroke-width="2.01"/><use href="#s1102" transform="scale(1,0.164)" stroke="#F2CC0C" stroke-width="1.91"/><use href="#s1104" transform="scale(1,0.1825)" stroke="#447EBC" stroke-width="1.86"/><use href="#s1103" transform="scale(1,0.2013)" stroke="#C15C17" stroke-width="1.97"/><use href="#s1103" transform="scale(1,0.2179)" stroke="#890F02" stroke-width="1.42"/><use href="#s1103" transform="scale(1,0.2333)" stroke="#0A437C" stroke-width="1.74"/><use href="#s1101" transform="scale(1,0.2489)" stroke="#6D1F62" stroke-width="1.44"/><use href="#s1103" transform="scale(1,0.2669)" stroke="#584477" stroke-width="2.24"/><use href="#s1104" transform="scale(1,0.2844)" stroke="#B7DBAB" stroke-width="1.32"/><use href="#s1104" transform="scale(1,0.3014)" stroke="#F4D598" stroke-width="2.14"/><use href="#s1100" transform="scale(1,0.3184)" stroke="#70DBED" stroke-width="1.34"/><use href="#s1101" transform="scale(1,0.3348)" stroke="#F9BA8F" stroke-width="2"/><use href="#s1102" transform="scale(1,0.3526)" stroke="#F29191" stroke-width="1.62"/><use href="#s1101" transform="scale(1,0.3689)" stroke="#82B5D8" stroke-width="1.7"/><use href="#s1104" transform="scale(1,0.3878)" stroke="#E5A8E2" stroke-width="2.17"/><use href="#s1104" transform="scale(1,0.4047)" stroke="#AEA2E0" stroke-width="1.28"/><use href="#s1102" transform="scale(1,0.4175)" stroke="#629E51" stroke-width="1.33"/><use href="#s1104" transform="scale(1,0.435)" stroke="#E5AC0E" stroke-width="2.25"/><use href="#s1104" transform="scale(1,0.4549)" stroke="#64B0C8" stroke-width="1.81"/><use href="#s1100" transform="scale(1,0.4704)" stroke="#E0752D" stroke-width="1.36"/><use href="#s1101" transform="scale(1,0.4885)" stroke="#BF1B00" stroke-width="2.33"/><use href="#s1101" transform="scale(1,0.5111)" stroke="#0A50A1" stroke-width="2.28"/><use href="#s1101" transform="scale(1,0.5291)" stroke="#962D82" stroke-width="1.38"/><use href="#s1104" transform="scale(1,0.5442)" stroke="#614D93" stroke-width="1.72"/><use href="#s1103" transform="scale(1,0.5596)" stroke="#9AC48A" stroke-width="1.41"/><use href="#s1100" transform="scale(1,0.5743)" stroke="#F2C96D" stroke-width="1.6"/><use href="#s1100" transform="scale(1,0.5916)" stroke="#65C5DB" stroke-width="1.93"/><use href="#s1103" transform="scale(1,0.6081)" stroke="#F9934E" stroke-width="1.44"/><use href="#s1101" transform="scale(1,0.625)" stroke="#EA6460" stroke-width="2.01"/><use href="#s1101" transform="scale(1,0.6413)" stroke="#5195CE" stroke-width="1.32"/><use href="#s1103" transform="scale(1,0.6548)" stroke="#D683CE" stroke-width="1.45"/><use href="#s1103" transform="scale(1,0.6724)" stroke="#806EB7" stroke-width="2.14"/><use href="#s1102" transform="scale(1,0.6912)" stroke="#3F6833" stroke-width="1.69"/><use href="#s1100" transform="scale(1,0.7079)" stroke="#967302" stroke-width="1.71"/><use href="#s1100" transform="scale(1,0.7256)" stroke="#2F575E" stroke-width="1.9"/><use href="#s1103" transform="scale(1,0.7437)" stroke="#99440A" stroke-width="1.78"/><use href="#s1100" transform="scale(1,0.7606)" stroke="#58140C" stroke-width="1.68"/><use href="#s1102" transform="scale(1,0.7751)" stroke="#052B51" stroke-width="1.29"/><use href="#s1103" transform="scale(1,0.7915)" stroke="#511749" stroke-width="2.04"/><use href="#s1100" transform="scale(1,0.8128)" stroke="#3F2B5B" stroke-width="2.31"/><use href="#s1104" transform="scale(1,0.8354)" stroke="#E0F9D7" stroke-width="2.31"/><use href="#s1101" transform="scale(1,0.8565)" stroke="#FCEACA" stroke-width="1.98"/><use href="#s1102" transform="scale(1,0.8742)" stroke="#CFFAFF" stroke-width="1.65"/><use href="#s1100" transform="scale(1,0.8904)" stroke="#F9E2D2" stroke-width="1.65"/><use href="#s1100" transform="scale(1,0.9083)" stroke="#FCE2DE" stroke-width="2.01"/><use href="#s1104" transform="scale(1,0.9279)" stroke="#BADFF4" stroke-width="1.99"/><use href="#s1101" transform="scale(1,0.9444)" stroke="#F9D9F9" stroke-width="1.38"/><use href="#s1103" transform="scale(1,0.9586)" stroke="#DEDAF7" stroke-width="1.51"/><use href="#s1102" transform="scale(1,0.9749)" stroke="#56A64B" stroke-width="1.15"/><use href="#s1101" transform="scale(1,0.9927)" stroke="#E0B400" stroke-width="1.15"/></g></g></g></svg>
<div class="sw" style="left:373.1px;top:666.0px;background:#56A64B"></div><span class="t" style="left:395.10px;top:661.50px;font-size:12px;color:#2b3035;letter-spacing:0.742px;">distributor-66b8bf6b75-2gn8n</span>
<div class="sw" style="left:373.1px;top:689.5px;background:#E0B400"></div><span class="t" style="left:395.10px;top:685.00px;font-size:12px;color:#2b3035;letter-spacing:0.766px;">distributor-66b8bf6b75-2zwsz</span>
<div class="sw" style="left:373.1px;top:713.0px;background:#5794F2"></div><span class="t" style="left:395.10px;top:708.50px;font-size:12px;color:#2b3035;letter-spacing:0.746px;">distributor-66b8bf6b75-46j74</span>
<svg class="abs" style="left:0;top:0" width="1400" height="1000" shape-rendering="crispEdges"><path d="M107.5 831.3V942.0" stroke="rgba(36,41,46,0.1)" stroke-width="1"/><path d="M168.5 831.3V942.0" stroke="rgba(36,41,46,0.1)" stroke-width="1"/><path d="M229.5 831.3V942.0" stroke="rgba(36,41,46,0.1)" stroke-width="1"/><path d="M290.5 831.3V942.0" stroke="rgba(36,41,46,0.1)" stroke-width="1"/><path d="M90.2 937.5H334.2" stroke="rgba(36,41,46,0.1)" stroke-width="1"/><path d="M90.2 883.5H334.2" stroke="rgba(36,41,46,0.1)" stroke-width="1"/></svg><span class="t" style="left:92.00px;top:945.60px;font-size:12px;color:#2b3035;letter-spacing:-0.008px;">17:30</span><span class="t" style="left:153.00px;top:945.60px;font-size:12px;color:#2b3035;letter-spacing:-0.008px;">17:45</span><span class="t" style="left:214.00px;top:945.60px;font-size:12px;color:#2b3035;letter-spacing:-0.008px;">18:00</span><span class="t" style="left:275.00px;top:945.60px;font-size:12px;color:#2b3035;letter-spacing:-0.008px;">18:15</span><span class="t" style="left:54.80px;top:930.90px;font-size:12px;color:#2b3035;letter-spacing:0.560px;">0 B/s</span><span class="t" style="left:28.80px;top:876.90px;font-size:12px;color:#2b3035;letter-spacing:0.700px;">200 MB/s</span>
<svg class="abs" style="left:0;top:0" width="1400" height="1000"><defs><filter id="fs20" x="-2%" y="-10%" width="104%" height="120%" color-interpolation-filters="sRGB"><feTurbulence type="fractalNoise" baseFrequency="0.45 0.35" numOctaves="1" seed="23" result="t"/><feColorMatrix in="t" type="matrix" values="0 0 0 0 0.5  0 1 0 0 0  0 0 1 0 0  0 0 0 0 1" result="m"/><feDisplacementMap in="SourceGraphic" in2="m" scale="2.6" xChannelSelector="R" yChannelSelector="G"/></filter><clipPath id="cs20"><rect x="90.2" y="0" width="244" height="937.3"/></clipPath><g class="ns"><path id="s2000" d="M0 -77.9L1 -77.9L2 -79.4L3 -78.3L4 -76.6L5 -76.0L6 -79.0L7 -79.6L8 -79.3L9 -79.9L10 -81.4L11 -85.9L12 -89.3L13 -87.7L14 -86.7L15 -86.8L16 -86.1L17 -86.1L18 -81.9L19 -80.5L20 -79.1L21 -79.0L22 -80.2L23 -78.1L24 -79.9L25 -80.4L26 -78.0L27 -78.6L28 -79.2L29 -77.4L30 -77.2L31 -78.5L32 -76.8L33 -77.3L34 -77.8L35 -77.7L36 -79.0L37 -78.8L38 -78.0L39 -80.0L40 -78.8L41 -78.1L42 -76.9L43 -78.7L44 -77.6L45 -78.3L46 -77.7L47 -77.6L48 -79.0L49 -79.1L50 -76.4L51 -77.5L52 -77.0L53 -79.5L54 -77.8L55 -78.1L56 -78.3L57 -79.0L58 -76.7L59 -77.7L60 -78.8L61 -80.7L62 -79.5L63 -78.6L64 -78.5L65 -77.8L66 -80.2L67 -81.3L68 -79.9L69 -80.4L70 -79.1L71 -77.2L72 -80.5L73 -77.2L74 -77.7L75 -78.0L76 -78.6L77 -78.4L78 -77.9L79 -78.7L80 -79.0L81 -78.5L82 -78.5L83 -77.2L84 -76.4L85 -76.6L86 -77.5L87 -78.1L88 -78.4L89 -77.0L90 -77.6L91 -78.1L92 -79.2L93 -79.6L94 -78.9L95 -78.1L96 -79.2L97 -78.9L98 -78.6L99 -80.6L100 -79.3L101 -77.4L102 -79.6L103 -79.7L104 -77.4L105 -78.6L106 -78.3L107 -78.0L108 -78.1L109 -79.4L110 -79.8L111 -79.7L112 -79.2L113 -78.3L114 -79.5L115 -80.7L116 -80.7L117 -78.2L118 -78.3L119 -77.5L120 -80.7L121 -84.3L122 -83.0L123 -81.2L124 -80.6L125 -77.7L126 -76.0L127 -77.8L128 -76.7L129 -76.9L130 -75.8L131 -76.2L132 -76.7L133 -76.0L134 -76.7L135 -77.4L136 -75.7L137 -74.7L138 -75.0L139 -76.7L140 -76.2L141 -76.0L142 -76.2L143 -77.5L144 -77.0L145 -76.8L146 -76.4L147 -79.3L148 -77.6L149 -77.5L150 -74.5L151 -75.3L152 -74.4L153 -76.4L154 -74.8L155 -71.1L156 -75.8L157 -87.1L158 -96.9L159 -89.1L160 -82.5L161 -82.8L162 -80.2L163 -80.4L164 -78.3L165 -78.8L166 -80.8L167 -77.5L168 -75.7L169 -79.6L170 -80.8L171 -80.4L172 -79.5L173 -78.8L174 -78.7L175 -79.9L176 -80.7L177 -79.5L178 -79.0L179 -77.7L180 -77.7L181 -78.0L182 -78.9L183 -79.1L184 -78.0L185 -77.8L186 -78.8L187 -77.0L188 -78.1L189 -77.9L190 -74.9L191 -76.9L192 -76.3L193 -77.4L194 -78.5L195 -77.8L196 -79.2L197 -78.9L198 -74.9L199 -76.6L200 -79.5L201 -79.6L202 -79.9L203 -80.5L204 -78.9L205 -80.0L206 -77.3L207 -78.3L208 -79.6L209 -78.5L210 -78.7L211 -77.6L212 -78.4L213 -76.5L214 -77.9L215 -79.8L216 -77.8L217 -78.0L218 -78.6L219 -77.6L220 -79.6L221 -77.3L222 -78.3L223 -78.2L224 -77.8L225 -78.0L226 -77.2L227 -78.5L228 -78.5L229 -79.1L230 -78.1L231 -79.4L232 -79.3L233 -77.3L234 -79.8L235 -78.6L236 -78.8L237 -77.7L238 -77.8L239 -77.1L240 -78.5L241 -78.8L242 -80.1L243 -79.4L244 -78.4"/><path id="s2001" d="M0 -78.6L1 -79.0L2 -78.4L3 -78.0L4 -78.6L5 -79.3L6 -78.8L7 -78.4L8 -77.8L9 -79.1L10 -83.3L11 -85.5L12 -86.6L13 -87.3L14 -88.3L15 -88.2L16 -87.6L17 -84.8L18 -81.6L19 -78.4L20 -75.6L21 -78.2L22 -81.1L23 -79.6L24 -80.7L25 -80.9L26 -79.9L27 -77.8L28 -79.1L29 -77.7L30 -78.1L31 -79.5L32 -78.0L33 -79.2L34 -78.7L35 -77.3L36 -78.3L37 -78.9L38 -77.7L39 -78.3L40 -78.2L41 -78.4L42 -79.9L43 -79.1L44 -78.8L45 -77.3L46 -77.6L47 -79.4L48 -78.6L49 -78.9L50 -79.2L51 -78.6L52 -79.5L53 -77.8L54 -78.6L55 -77.9L56 -76.8L57 -77.9L58 -78.2L59 -77.5L60 -77.8L61 -78.1L62 -78.9L63 -81.2L64 -78.6L65 -79.3L66 -77.6L67 -77.3L68 -77.7L69 -78.4L70 -79.7L71 -80.1L72 -78.4L73 -79.5L74 -79.3L75 -80.4L76 -81.7L77 -80.5L78 -81.3L79 -80.7L80 -78.5L81 -77.9L82 -78.6L83 -80.2L84 -78.3L85 -78.3L86 -78.9L87 -79.0L88 -78.3L89 -77.7L90 -79.3L91 -78.6L92 -78.4L93 -77.6L94 -76.9L95 -77.9L96 -79.5L97 -80.0L98 -78.4L99 -78.5L100 -77.8L101 -81.0L102 -79.4L103 -80.3L104 -78.0L105 -78.1L106 -79.2L107 -79.2L108 -79.6L109 -79.9L110 -79.1L111 -78.8L112 -77.6L113 -77.2L114 -80.3L115 -79.3L116 -78.1L117 -79.9L118 -78.3L119 -79.1L120 -81.0L121 -83.0L122 -82.1L123 -80.3L124 -79.2L125 -76.5L126 -77.3L127 -77.3L128 -79.6L129 -79.6L130 -79.8L131 -76.0L132 -77.6L133 -75.5L134 -76.6L135 -78.5L136 -77.6L137 -75.5L138 -74.4L139 -73.4L140 -77.0L141 -76.2L142 -76.7L143 -78.6L144 -76.8L145 -75.5L146 -76.6L147 -78.6L148 -77.4L149 -78.5L150 -77.8L151 -76.2L152 -76.9L153 -78.3L154 -74.0L155 -70.3L156 -74.9L157 -86.7L158 -96.9L159 -86.0L160 -81.1L161 -82.1L162 -80.1L163 -79.4L164 -78.0L165 -79.3L166 -80.6L167 -80.1L168 -79.3L169 -79.7L170 -77.4L171 -78.3L172 -79.1L173 -78.8L174 -78.9L175 -79.7L176 -78.8L177 -76.0L178 -78.4L179 -80.0L180 -79.9L181 -77.3L182 -76.8L183 -76.4L184 -78.3L185 -79.0L186 -77.6L187 -78.2L188 -77.3L189 -76.6L190 -78.8L191 -78.7L192 -78.2L193 -78.4L194 -78.7L195 -78.9L196 -77.8L197 -79.0L198 -77.2L199 -79.6L200 -78.5L201 -80.9L202 -78.7L203 -78.9L204 -77.2L205 -77.9L206 -78.6L207 -78.1L208 -78.2L209 -78.7L210 -79.3L211 -78.3L212 -80.1L213 -81.0L214 -80.0L215 -79.8L216 -79.8L217 -79.4L218 -80.2L219 -78.4L220 -79.5L221 -80.4L222 -80.1L223 -80.8L224 -79.7L225 -78.2L226 -79.5L227 -78.3L228 -75.8L229 -76.1L230 -76.5L231 -78.8L232 -79.1L233 -80.6L234 -78.9L235 -79.3L236 -81.6L237 -80.1L238 -79.1L239 -77.2L240 -77.2L241 -78.7L242 -79.3L243 -79.1L244 -78.7"/><path id="s2002" d="M0 -78.2L1 -78.2L2 -77.5L3 -77.4L4 -79.0L5 -81.0L6 -80.3L7 -79.8L8 -78.7L9 -78.2L10 -82.4L11 -85.0L12 -87.0L13 -85.7L14 -88.4L15 -88.9L16 -84.3L17 -83.5L18 -82.3L19 -80.0L20 -78.7L21 -78.9L22 -77.4L23 -77.3L24 -78.3L25 -80.2L26 -79.7L27 -79.2L28 -77.8L29 -77.2L30 -77.2L31 -77.6L32 -77.0L33 -77.3L34 -78.2L35 -80.0L36 -80.2L37 -78.2L38 -78.2L39 -77.7L40 -79.5L41 -77.7L42 -77.6L43 -76.6L44 -79.4L45 -79.4L46 -79.9L47 -77.8L48 -78.9L49 -78.9L50 -79.3L51 -78.8L52 -77.9L53 -78.5L54 -79.2L55 -78.0L56 -77.9L57 -75.4L58 -75.4L59 -77.5L60 -76.6L61 -76.3L62 -76.5L63 -79.5L64 -79.0L65 -78.4L66 -78.8L67 -78.8L68 -80.1L69 -79.3L70 -80.1L71 -79.4L72 -80.7L73 -79.6L74 -79.3L75 -78.2L76 -77.9L77 -79.2L78 -79.7L79 -78.2L80 -79.0L81 -79.1L82 -78.4L83 -78.2L84 -78.2L85 -78.6L86 -79.8L87 -77.5L88 -79.0L89 -79.0L90 -79.3L91 -79.2L92 -79.0L93 -77.8L94 -78.1L95 -76.9L96 -76.1L97 -76.1L98 -78.9L99 -79.5L100 -79.9L101 -79.8L102 -78.5L103 -78.5L104 -80.0L105 -78.8L106 -79.8L107 -79.5L108 -80.0L109 -77.4L110 -78.1L111 -77.1L112 -79.3L113 -78.0L114 -79.3L115 -80.4L116 -81.3L117 -77.7L118 -77.8L119 -80.3L120 -81.9L121 -83.3L122 -82.5L123 -80.0L124 -79.4L125 -77.1L126 -78.3L127 -77.6L128 -75.7L129 -75.6L130 -75.7L131 -77.2L132 -78.3L133 -77.5L134 -77.8L135 -76.1L136 -75.0L137 -74.0L138 -77.0L139 -75.1L140 -77.0L141 -77.0L142 -76.6L143 -76.3L144 -77.2L145 -76.8L146 -75.3L147 -76.9L148 -76.1L149 -74.9L150 -77.3L151 -77.3L152 -78.2L153 -79.5L154 -75.3L155 -71.9L156 -77.9L157 -88.6L158 -97.2L159 -86.2L160 -83.7L161 -82.9L162 -82.6L163 -80.4L164 -81.2L165 -80.0L166 -79.2L167 -80.6L168 -81.3L169 -80.0L170 -78.8L171 -76.9L172 -78.0L173 -79.2L174 -79.6L175 -78.2L176 -80.2L177 -79.3L178 -78.4L179 -79.2L180 -78.1L181 -78.5L182 -78.8L183 -78.5L184 -79.5L185 -78.0L186 -79.4L187 -79.5L188 -77.7L189 -77.9L190 -78.2L191 -79.2L192 -78.2L193 -78.1L194 -80.3L195 -78.3L196 -78.8L197 -77.5L198 -78.7L199 -77.9L200 -80.2L201 -78.8L202 -79.1L203 -77.3L204 -76.6L205 -78.5L206 -79.2L207 -78.4L208 -76.7L209 -76.6L210 -76.8L211 -78.6L212 -77.2L213 -78.1L214 -79.2L215 -79.4L216 -79.8L217 -78.1L218 -77.9L219 -77.1L220 -79.4L221 -79.0L222 -78.1L223 -78.1L224 -76.6L225 -77.8L226 -80.1L227 -78.1L228 -78.2L229 -76.9L230 -79.4L231 -79.4L232 -80.1L233 -78.8L234 -80.0L235 -77.9L236 -77.8L237 -78.5L238 -77.6L239 -78.8L240 -78.8L241 -77.1L242 -79.3L243 -79.5L244 -80.4"/><path id="s2003" d="M0 -78.4L1 -79.1L2 -78.5L3 -78.2L4 -80.1L5 -78.1L6 -78.5L7 -79.8L8 -80.2L9 -79.6L10 -81.2L11 -83.2L12 -85.3L13 -85.6L14 -88.6L15 -86.9L16 -89.8L17 -87.1L18 -83.4L19 -81.8L20 -78.8L21 -78.7L22 -77.3L23 -79.0L24 -78.0L25 -78.8L26 -77.9L27 -79.2L28 -80.5L29 -81.2L30 -81.7L31 -79.3L32 -77.7L33 -77.9L34 -79.0L35 -78.8L36 -77.6L37 -77.5L38 -77.6L39 -78.1L40 -78.8L41 -78.0L42 -78.4L43 -76.9L44 -76.7L45 -79.5L46 -81.1L47 -81.2L48 -79.9L49 -79.6L50 -78.8L51 -79.6L52 -78.8L53 -78.5L54 -77.5L55 -78.1L56 -78.3L57 -77.7L58 -78.0L59 -78.3L60 -79.5L61 -78.9L62 -77.2L63 -77.7L64 -77.9L65 -79.6L66 -78.8L67 -78.8L68 -79.1L69 -77.5L70 -79.2L71 -78.1L72 -79.8L73 -79.0L74 -79.2L75 -79.3L76 -78.2L77 -79.0L78 -78.5L79 -79.9L80 -79.3L81 -79.8L82 -79.6L83 -79.3L84 -79.5L85 -77.8L86 -77.8L87 -77.6L88 -78.3L89 -79.1L90 -78.8L91 -78.0L92 -78.7L93 -77.1L94 -76.8L95 -77.0L96 -78.3L97 -78.7L98 -81.1L99 -78.5L100 -79.7L101 -77.4L102 -79.2L103 -78.3L104 -77.7L105 -79.2L106 -78.0L107 -77.5L108 -80.4L109 -79.6L110 -78.8L111 -78.0L112 -79.2L113 -80.6L114 -80.6L115 -82.3L116 -81.0L117 -78.2L118 -79.0L119 -79.6L120 -81.1L121 -82.2L122 -81.1L123 -80.0L124 -79.5L125 -76.4L126 -77.7L127 -78.3L128 -77.2L129 -76.6L130 -77.5L131 -78.0L132 -75.9L133 -77.6L134 -78.1L135 -77.7L136 -76.9L137 -76.5L138 -76.2L139 -75.6L140 -74.7L141 -78.0L142 -77.3L143 -77.0L144 -76.6L145 -75.9L146 -77.0L147 -76.9L148 -76.9L149 -76.4L150 -76.3L151 -75.5L152 -75.6L153 -77.7L154 -72.9L155 -70.4L156 -75.7L157 -87.6L158 -95.1L159 -87.6L160 -81.5L161 -80.9L162 -80.5L163 -81.1L164 -79.6L165 -78.5L166 -80.7L167 -79.5L168 -81.6L169 -80.7L170 -79.3L171 -79.9L172 -82.7L173 -81.4L174 -79.7L175 -77.6L176 -78.6L177 -79.1L178 -79.7L179 -78.6L180 -79.6L181 -78.6L182 -78.1L183 -79.8L184 -78.7L185 -78.9L186 -79.5L187 -78.3L188 -78.6L189 -79.4L190 -77.8L191 -79.0L192 -78.0L193 -78.6L194 -79.4L195 -79.4L196 -78.6L197 -79.2L198 -78.4L199 -79.2L200 -78.9L201 -76.6L202 -76.9L203 -77.5L204 -76.7L205 -77.8L206 -77.6L207 -79.2L208 -79.2L209 -79.1L210 -77.7L211 -78.6L212 -77.6L213 -78.3L214 -76.9L215 -78.3L216 -77.6L217 -78.1L218 -78.5L219 -77.9L220 -79.3L221 -78.8L222 -78.0L223 -78.9L224 -78.5L225 -77.3L226 -78.5L227 -78.5L228 -77.0L229 -78.1L230 -77.8L231 -78.3L232 -79.4L233 -78.0L234 -79.1L235 -79.8L236 -79.8L237 -78.8L238 -78.6L239 -76.9L240 -78.3L241 -76.1L242 -76.5L243 -78.4L244 -79.6"/><path id="s2004" d="M0 -77.9L1 -79.1L2 -80.6L3 -80.2L4 -79.7L5 -79.7L6 -79.5L7 -77.6L8 -77.7L9 -78.0L10 -80.7L11 -84.2L12 -86.6L13 -87.5L14 -84.7L15 -86.5L16 -87.6L17 -85.6L18 -82.1L19 -78.6L20 -75.5L21 -77.9L22 -78.5L23 -78.1L24 -79.9L25 -80.6L26 -82.1L27 -80.0L28 -79.8L29 -79.6L30 -77.8L31 -78.9L32 -77.3L33 -77.7L34 -77.4L35 -78.7L36 -78.2L37 -76.2L38 -76.9L39 -76.3L40 -77.2L41 -76.6L42 -76.5L43 -77.5L44 -77.2L45 -77.0L46 -77.0L47 -76.4L48 -76.7L49 -76.3L50 -76.1L51 -75.8L52 -78.2L53 -76.5L54 -77.0L55 -77.9L56 -76.6L57 -77.1L58 -76.6L59 -79.0L60 -76.9L61 -78.6L62 -79.1L63 -78.8L64 -80.2L65 -81.1L66 -78.4L67 -78.3L68 -76.8L69 -77.6L70 -80.3L71 -78.7L72 -78.3L73 -79.3L74 -79.2L75 -78.6L76 -79.0L77 -78.9L78 -78.2L79 -77.7L80 -79.7L81 -81.6L82 -80.4L83 -78.6L84 -77.8L85 -79.6L86 -81.9L87 -80.4L88 -80.6L89 -79.5L90 -78.0L91 -79.1L92 -77.7L93 -80.3L94 -79.2L95 -78.8L96 -78.3L97 -78.1L98 -79.3L99 -77.9L100 -79.1L101 -79.5L102 -79.0L103 -77.6L104 -76.2L105 -77.9L106 -80.2L107 -78.2L108 -79.3L109 -79.3L110 -77.6L111 -78.5L112 -78.4L113 -78.7L114 -77.9L115 -80.6L116 -77.7L117 -78.0L118 -77.9L119 -79.3L120 -78.5L121 -80.6L122 -79.0L123 -77.6L124 -77.3L125 -74.8L126 -77.1L127 -75.7L128 -77.0L129 -77.5L130 -78.3L131 -77.4L132 -78.9L133 -80.1L134 -77.9L135 -76.9L136 -75.9L137 -77.7L138 -77.4L139 -76.4L140 -75.8L141 -78.4L142 -75.7L143 -77.3L144 -76.8L145 -77.4L146 -76.6L147 -79.1L148 -78.2L149 -77.5L150 -76.5L151 -78.7L152 -77.1L153 -77.9L154 -73.7L155 -70.3L156 -75.7L157 -88.0L158 -93.8L159 -85.6L160 -84.5L161 -82.6L162 -80.3L163 -80.2L164 -79.9L165 -79.9L166 -78.9L167 -79.6L168 -81.5L169 -78.6L170 -79.4L171 -80.2L172 -78.4L173 -77.1L174 -78.6L175 -79.0L176 -80.2L177 -79.2L178 -79.6L179 -79.4L180 -79.2L181 -80.6L182 -79.2L183 -78.8L184 -77.9L185 -80.8L186 -78.4L187 -80.3L188 -78.8L189 -80.3L190 -78.4L191 -78.0L192 -78.5L193 -75.7L194 -77.1L195 -77.0L196 -76.7L197 -77.8L198 -78.5L199 -79.2L200 -78.2L201 -80.5L202 -78.6L203 -77.7L204 -79.2L205 -78.4L206 -79.9L207 -80.6L208 -78.0L209 -79.1L210 -79.7L211 -80.5L212 -77.4L213 -79.0L214 -79.8L215 -79.9L216 -75.7L217 -76.7L218 -77.4L219 -77.2L220 -77.8L221 -78.7L222 -77.9L223 -78.0L224 -78.3L225 -77.9L226 -78.9L227 -79.3L228 -79.8L229 -78.2L230 -80.8L231 -78.9L232 -79.6L233 -77.1L234 -77.7L235 -78.7L236 -77.7L237 -78.4L238 -77.5L239 -77.4L240 -80.0L241 -79.1L242 -79.3L243 -79.2L244 -79.8"/></g></defs><g clip-path="url(#cs20)" opacity="0.93"><g fill="none" stroke-linejoin="round" shape-rendering="auto" filter="url(#fs20)"><g transform="translate(90.2,936.90)"><path d="M0 0L0 -78.5L1 -78.5L2 -78.5L3 -78.5L4 -78.5L5 -78.5L6 -78.5L7 -78.5L8 -78.5L9 -78.6L10 -81.4L11 -84.2L12 -87.0L13 -87.2L14 -86.9L15 -86.6L16 -86.3L17 -85.3L18 -83.0L19 -80.6L20 -78.5L21 -78.5L22 -78.5L23 -78.5L24 -78.5L25 -78.5L26 -78.5L27 -78.5L28 -78.5L29 -78.5L30 -78.5L31 -78.5L32 -78.5L33 -78.5L34 -78.5L35 -78.5L36 -78.5L37 -78.5L38 -78.5L39 -78.5L40 -78.5L41 -78.5L42 -78.5L43 -78.5L44 -78.5L45 -78.5L46 -78.5L47 -78.5L48 -78.5L49 -78.5L50 -78.5L51 -78.5L52 -78.5L53 -78.5L54 -78.5L55 -78.5L56 -78.5L57 -78.5L58 -78.5L59 -78.5L60 -78.5L61 -78.5L62 -78.5L63 -78.5L64 -78.5L65 -78.5L66 -78.5L67 -78.5L68 -78.5L69 -78.5L70 -78.5L71 -78.5L72 -78.5L73 -78.5L74 -78.5L75 -78.5L76 -78.5L77 -78.5L78 -78.5L79 -78.5L80 -78.5L81 -78.5L82 -78.5L83 -78.5L84 -78.5L85 -78.5L86 -78.5L87 -78.5L88 -78.5L89 -78.5L90 -78.5L91 -78.5L92 -78.5L93 -78.5L94 -78.5L95 -78.5L96 -78.5L97 -78.5L98 -78.5L99 -78.5L100 -78.5L101 -78.5L102 -78.5L103 -78.5L104 -78.5L105 -78.5L106 -78.5L107 -78.5L108 -78.5L109 -78.5L110 -78.5L111 -78.5L112 -78.5L113 -78.7L114 -79.3L115 -79.9L116 -79.4L117 -78.7L118 -78.7L119 -79.3L120 -81.1L121 -83.0L122 -82.7L123 -80.7L124 -79.1L125 -77.0L126 -76.9L127 -76.9L128 -76.9L129 -76.9L130 -76.9L131 -76.9L132 -76.9L133 -76.9L134 -76.9L135 -76.9L136 -76.9L137 -76.0L138 -76.0L139 -76.0L140 -76.0L141 -76.9L142 -76.9L143 -76.9L144 -76.9L145 -76.9L146 -76.9L147 -76.9L148 -76.9L149 -76.9L150 -76.9L151 -76.9L152 -76.9L153 -78.1L154 -74.9L155 -71.4L156 -75.5L157 -87.0L158 -95.2L159 -87.1L160 -83.7L161 -82.1L162 -81.2L163 -80.6L164 -80.2L165 -79.9L166 -79.7L167 -79.5L168 -79.3L169 -79.1L170 -79.0L171 -78.9L172 -78.9L173 -78.8L174 -78.7L175 -78.7L176 -78.7L177 -78.6L178 -78.6L179 -78.6L180 -78.6L181 -78.6L182 -78.5L183 -78.5L184 -78.5L185 -78.5L186 -78.5L187 -78.5L188 -78.5L189 -78.5L190 -78.5L191 -78.5L192 -78.5L193 -78.5L194 -78.5L195 -78.5L196 -78.5L197 -78.5L198 -78.5L199 -78.5L200 -78.5L201 -78.5L202 -78.5L203 -78.5L204 -78.5L205 -78.5L206 -78.5L207 -78.5L208 -78.5L209 -78.5L210 -78.5L211 -78.5L212 -78.5L213 -78.5L214 -78.5L215 -78.5L216 -78.5L217 -78.5L218 -78.5L219 -78.5L220 -78.5L221 -78.5L222 -78.5L223 -78.5L224 -78.5L225 -78.5L226 -78.5L227 -78.5L228 -78.5L229 -78.5L230 -78.5L231 -78.5L232 -78.5L233 -78.5L234 -78.5L235 -78.5L236 -78.5L237 -78.5L238 -78.5L239 -78.5L240 -78.5L241 -78.5L242 -78.5L243 -78.5L244 -78.5L244 0Z" fill="#ece9f1" fill-opacity="0.9" stroke="none"/><use href="#s2001" transform="scale(1,0.0045)" stroke="#56A64B" stroke-width="1"/><use href="#s2003" transform="scale(1,0.0154)" stroke="#E0B400" stroke-width="1.29"/><use href="#s2003" transform="scale(1,0.0278)" stroke="#5794F2" stroke-width="1.25"/><use href="#s2000" transform="scale(1,0.0395)" stroke="#FA6400" stroke-width="1.14"/><use href="#s2001" transform="scale(1,0.0498)" stroke="#E02F44" stroke-width="1"/><use href="#s2003" transform="scale(1,0.0611)" stroke="#3274D9" stroke-width="1.36"/><use href="#s2000" transform="scale(1,0.0745)" stroke="#A352CC" stroke-width="1.37"/><use href="#s2000" transform="scale(1,0.0869)" stroke="#705DA0" stroke-width="1.16"/><use href="#s2002" transform="scale(1,0.0983)" stroke="#37872D" stroke-width="1.16"/><use href="#s2003" transform="scale(1,0.1087)" stroke="#F2CC0C" stroke-width="1"/><use href="#s2000" transform="scale(1,0.1175)" stroke="#447EBC" stroke-width="1"/><use href="#s2001" transform="scale(1,0.1267)" stroke="#C15C17" stroke-width="1.07"/><use href="#s2001" transform="scale(1,0.1378)" stroke="#890F02" stroke-width="1.21"/><use href="#s2000" transform="scale(1,0.148)" stroke="#0A437C" stroke-width="1"/><use href="#s2003" transform="scale(1,0.1588)" stroke="#6D1F62" stroke-width="1.36"/><use href="#s2004" transform="scale(1,0.1702)" stroke="#584477" stroke-width="1"/><use href="#s2000" transform="scale(1,0.1797)" stroke="#B7DBAB" stroke-width="1"/><use href="#s2004" transform="scale(1,0.1886)" stroke="#F4D598" stroke-width="1"/><use href="#s2000" transform="scale(1,0.2001)" stroke="#70DBED" stroke-width="1.5"/><use href="#s2003" transform="scale(1,0.2139)" stroke="#F9BA8F" stroke-width="1.32"/><use href="#s2003" transform="scale(1,0.2273)" stroke="#F29191" stroke-width="1.42"/><use href="#s2002" transform="scale(1,0.2403)" stroke="#82B5D8" stroke-width="1.24"/><use href="#s2001" transform="scale(1,0.2504)" stroke="#E5A8E2" stroke-width="1"/><use href="#s2001" transform="scale(1,0.2596)" stroke="#AEA2E0" stroke-width="1.04"/><use href="#s2004" transform="scale(1,0.2703)" stroke="#629E51" stroke-width="1.15"/><use href="#s2003" transform="scale(1,0.2803)" stroke="#E5AC0E" stroke-width="1"/><use href="#s2004" transform="scale(1,0.2919)" stroke="#64B0C8" stroke-width="1.47"/><use href="#s2001" transform="scale(1,0.3043)" stroke="#E0752D" stroke-width="1.06"/><use href="#s2002" transform="scale(1,0.314)" stroke="#BF1B00" stroke-width="1"/><use href="#s2003" transform="scale(1,0.3252)" stroke="#0A50A1" stroke-width="1.38"/><use href="#s2002" transform="scale(1,0.3363)" stroke="#962D82" stroke-width="1"/><use href="#s2002" transform="scale(1,0.3478)" stroke="#614D93" stroke-width="1.45"/><use href="#s2003" transform="scale(1,0.3605)" stroke="#9AC48A" stroke-width="1.12"/><use href="#s2004" transform="scale(1,0.3718)" stroke="#F2C96D" stroke-width="1.19"/><use href="#s2000" transform="scale(1,0.3828)" stroke="#65C5DB" stroke-width="1.05"/><use href="#s2002" transform="scale(1,0.3935)" stroke="#F9934E" stroke-width="1.14"/><use href="#s2002" transform="scale(1,0.4037)" stroke="#EA6460" stroke-width="1"/><use href="#s2001" transform="scale(1,0.4124)" stroke="#5195CE" stroke-width="1"/><use href="#s2001" transform="scale(1,0.4234)" stroke="#D683CE" stroke-width="1.41"/><use href="#s2002" transform="scale(1,0.435)" stroke="#806EB7" stroke-width="1"/><use href="#s2001" transform="scale(1,0.4464)" stroke="#3F6833" stroke-width="1.35"/><use href="#s2004" transform="scale(1,0.4577)" stroke="#967302" stroke-width="1"/><use href="#s2002" transform="scale(1,0.4696)" stroke="#2F575E" stroke-width="1.48"/><use href="#s2002" transform="scale(1,0.4839)" stroke="#99440A" stroke-width="1.43"/><use href="#s2000" transform="scale(1,0.4974)" stroke="#58140C" stroke-width="1.33"/><use href="#s2002" transform="scale(1,0.5105)" stroke="#052B51" stroke-width="1.34"/><use href="#s2001" transform="scale(1,0.523)" stroke="#511749" stroke-width="1.21"/><use href="#s2000" transform="scale(1,0.5353)" stroke="#3F2B5B" stroke-width="1.31"/><use href="#s2002" transform="scale(1,0.5462)" stroke="#E0F9D7" stroke-width="1"/><use href="#s2001" transform="scale(1,0.5561)" stroke="#FCEACA" stroke-width="1.14"/><use href="#s2004" transform="scale(1,0.5685)" stroke="#CFFAFF" stroke-width="1.38"/><use href="#s2003" transform="scale(1,0.5799)" stroke="#F9E2D2" stroke-width="1"/><use href="#s2002" transform="scale(1,0.5916)" stroke="#FCE2DE" stroke-width="1.45"/><use href="#s2004" transform="scale(1,0.6057)" stroke="#BADFF4" stroke-width="1.42"/><use href="#s2000" transform="scale(1,0.618)" stroke="#F9D9F9" stroke-width="1.09"/><use href="#s2002" transform="scale(1,0.6286)" stroke="#DEDAF7" stroke-width="1.06"/><use href="#s2004" transform="scale(1,0.6393)" stroke="#56A64B" stroke-width="1.12"/><use href="#s2003" transform="scale(1,0.6501)" stroke="#E0B400" stroke-width="1.08"/><use href="#s2000" transform="scale(1,0.6627)" stroke="#5794F2" stroke-width="1.5"/><use href="#s2001" transform="scale(1,0.6753)" stroke="#FA6400" stroke-width="1.08"/><use href="#s2003" transform="scale(1,0.6846)" stroke="#E02F44" stroke-width="1"/><use href="#s2004" transform="scale(1,0.693)" stroke="#3274D9" stroke-width="1"/><use href="#s2001" transform="scale(1,0.7036)" stroke="#A352CC" stroke-width="1.31"/><use href="#s2000" transform="scale(1,0.7174)" stroke="#705DA0" stroke-width="1.5"/><use href="#s2000" transform="scale(1,0.7304)" stroke="#37872D" stroke-width="1.15"/><use href="#s2004" transform="scale(1,0.7416)" stroke="#F2CC0C" stroke-width="1.15"/><use href="#s2002" transform="scale(1,0.7531)" stroke="#447EBC" stroke-width="1.19"/><use href="#s2001" transform="scale(1,0.7654)" stroke="#C15C17" stroke-width="1.33"/><use href="#s2003" transform="scale(1,0.7767)" stroke="#890F02" stroke-width="1"/><use href="#s2004" transform="scale(1,0.7874)" stroke="#0A437C" stroke-width="1.23"/><use href="#s2003" transform="scale(1,0.7993)" stroke="#6D1F62" stroke-width="1.19"/><use href="#s2001" transform="scale(1,0.8112)" stroke="#584477" stroke-width="1.24"/><use href="#s2004" transform="scale(1,0.8219)" stroke="#B7DBAB" stroke-width="1"/><use href="#s2004" transform="scale(1,0.831)" stroke="#F4D598" stroke-width="1"/><use href="#s2001" transform="scale(1,0.8407)" stroke="#70DBED" stroke-width="1.05"/><use href="#s2003" transform="scale(1,0.8529)" stroke="#F9BA8F" stroke-width="1.45"/><use href="#s2002" transform="scale(1,0.8652)" stroke="#F29191" stroke-width="1.05"/><use href="#s2000" transform="scale(1,0.8763)" stroke="#82B5D8" stroke-width="1.22"/><use href="#s2004" transform="scale(1,0.8873)" stroke="#E5A8E2" stroke-width="1.02"/><use href="#s2004" transform="scale(1,0.8966)" stroke="#AEA2E0" stroke-width="1"/><use href="#s2000" transform="scale(1,0.9051)" stroke="#629E51" stroke-width="1"/><use href="#s2002" transform="scale(1,0.916)" stroke="#E5AC0E" stroke-width="1.37"/><use href="#s2000" transform="scale(1,0.9294)" stroke="#64B0C8" stroke-width="1.35"/><use href="#s2004" transform="scale(1,0.9412)" stroke="#E0752D" stroke-width="1.07"/><use href="#s2004" transform="scale(1,0.9527)" stroke="#BF1B00" stroke-width="1.28"/><use href="#s2002" transform="scale(1,0.9653)" stroke="#0A50A1" stroke-width="1.28"/><use href="#s2003" transform="scale(1,0.9785)" stroke="#962D82" stroke-width="1.43"/><use href="#s2000" transform="scale(1,0.9928)" stroke="#614D93" stroke-width="1.47"/></g></g></g></svg>
<div class="sw" style="left:29.1px;top:970.0px;background:#56A64B"></div><span class="t" style="left:51.10px;top:965.50px;font-size:12px;color:#2b3035;letter-spacing:0.684px;">ingester-zone-a-0</span>
<div class="sw" style="left:167.3px;top:970.0px;background:#E0B400"></div><span class="t" style="left:189.30px;top:965.50px;font-size:12px;color:#2b3035;letter-spacing:0.571px;">ingester-zone-a-1</span>
<div class="sw" style="left:29.1px;top:993.5px;background:#5794F2"></div><span class="t" style="left:51.10px;top:989.00px;font-size:12px;color:#2b3035;letter-spacing:0.557px;">ingester-zone-a-10</span>
<div class="sw" style="left:172.3px;top:993.5px;background:#FA6400"></div><span class="t" style="left:194.30px;top:989.00px;font-size:12px;color:#2b3035;letter-spacing:0.450px;">ingester-zone-a-11</span>
<svg class="abs" style="left:0;top:0" width="1400" height="1000" shape-rendering="crispEdges"><path d="M451.5 831.3V942.0" stroke="rgba(36,41,46,0.1)" stroke-width="1"/><path d="M512.5 831.3V942.0" stroke="rgba(36,41,46,0.1)" stroke-width="1"/><path d="M573.5 831.3V942.0" stroke="rgba(36,41,46,0.1)" stroke-width="1"/><path d="M634.5 831.3V942.0" stroke="rgba(36,41,46,0.1)" stroke-width="1"/><path d="M434.2 937.5H678.2" stroke="rgba(36,41,46,0.1)" stroke-width="1"/><path d="M434.2 882.5H678.2" stroke="rgba(36,41,46,0.1)" stroke-width="1"/></svg><span class="t" style="left:436.00px;top:945.60px;font-size:12px;color:#2b3035;letter-spacing:-0.008px;">17:30</span><span class="t" style="left:497.00px;top:945.60px;font-size:12px;color:#2b3035;letter-spacing:-0.008px;">17:45</span><span class="t" style="left:558.00px;top:945.60px;font-size:12px;color:#2b3035;letter-spacing:-0.008px;">18:00</span><span class="t" style="left:619.00px;top:945.60px;font-size:12px;color:#2b3035;letter-spacing:-0.008px;">18:15</span><span class="t" style="left:398.80px;top:930.90px;font-size:12px;color:#2b3035;letter-spacing:0.560px;">0 B/s</span><span class="t" style="left:372.80px;top:875.90px;font-size:12px;color:#2b3035;letter-spacing:0.700px;">500 MB/s</span>
<svg class="abs" style="left:0;top:0" width="1400" height="1000"><defs><filter id="fs21" x="-2%" y="-10%" width="104%" height="120%" color-interpolation-filters="sRGB"><feTurbulence type="fractalNoise" baseFrequency="0.45 0.35" numOctaves="1" seed="87" result="t"/><feColorMatrix in="t" type="matrix" values="0 0 0 0 0.5  0 1 0 0 0  0 0 1 0 0  0 0 0 0 1" result="m"/><feDisplacementMap in="SourceGraphic" in2="m" scale="2.6" xChannelSelector="R" yChannelSelector="G"/></filter><clipPath id="cs21"><rect x="434.2" y="0" width="244" height="937.3"/></clipPath><g class="ns"><path id="s2100" d="M0 -9.0L1 -8.7L2 -8.8L3 -8.9L4 -8.9L5 -8.7L6 -9.0L7 -8.8L8 -8.8L9 -8.9L10 -8.5L11 -8.6L12 -8.7L13 -8.8L14 -8.9L15 -8.6L16 -8.5L17 -8.8L18 -8.8L19 -8.5L20 -8.9L21 -8.7L22 -8.6L23 -9.0L24 -9.0L25 -9.0L26 -8.7L27 -9.0L28 -8.9L29 -8.7L30 -8.8L31 -8.7L32 -8.8L33 -8.7L34 -9.0L35 -8.7L36 -9.1L37 -9.0L38 -8.9L39 -8.8L40 -8.9L41 -8.7L42 -8.9L43 -8.9L44 -9.0L45 -8.7L46 -8.9L47 -8.5L48 -8.8L49 -8.6L50 -8.7L51 -8.4L52 -8.5L53 -9.0L54 -9.0L55 -8.7L56 -8.8L57 -8.6L58 -8.4L59 -8.8L60 -8.8L61 -8.6L62 -8.8L63 -8.6L64 -8.6L65 -8.7L66 -8.6L67 -8.7L68 -8.7L69 -8.6L70 -9.0L71 -9.0L72 -8.7L73 -8.6L74 -8.9L75 -8.9L76 -8.9L77 -9.1L78 -9.0L79 -8.9L80 -8.9L81 -8.7L82 -8.6L83 -8.8L84 -8.9L85 -8.7L86 -8.9L87 -8.7L88 -9.0L89 -8.8L90 -8.8L91 -8.8L92 -8.9L93 -8.8L94 -9.2L95 -8.9L96 -8.8L97 -8.9L98 -9.0L99 -8.4L100 -8.8L101 -8.9L102 -8.9L103 -8.6L104 -8.7L105 -8.6L106 -8.7L107 -8.8L108 -9.0L109 -9.1L110 -8.8L111 -9.1L112 -8.7L113 -8.8L114 -8.6L115 -8.4L116 -8.8L117 -8.6L118 -8.7L119 -8.6L120 -8.6L121 -8.6L122 -8.9L123 -9.0L124 -8.9L125 -9.0L126 -9.0L127 -8.5L128 -8.6L129 -9.0L130 -9.0L131 -9.0L132 -8.8L133 -8.6L134 -8.5L135 -8.6L136 -8.6L137 -8.7L138 -8.6L139 -8.8L140 -8.8L141 -9.1L142 -8.9L143 -8.9L144 -8.7L145 -8.7L146 -9.2L147 -9.0L148 -8.8L149 -9.0L150 -8.9L151 -8.8L152 -8.7L153 -8.9L154 -8.7L155 -8.8L156 -9.0L157 -8.4L158 -8.6L159 -8.6L160 -8.6L161 -8.8L162 -8.9L163 -8.7L164 -9.0L165 -8.6L166 -8.7L167 -8.8L168 -8.5L169 -9.0L170 -8.9L171 -8.7L172 -9.0L173 -8.9L174 -8.6L175 -8.5L176 -8.8L177 -8.8L178 -8.9L179 -9.1L180 -9.0L181 -8.6L182 -8.6L183 -8.6L184 -8.7L185 -8.4L186 -8.6L187 -8.8L188 -8.9L189 -8.9L190 -9.0L191 -8.7L192 -8.5L193 -8.9L194 -8.6L195 -8.8L196 -8.8L197 -8.7L198 -8.7L199 -8.9L200 -8.9L201 -8.7L202 -8.9L203 -8.7L204 -8.9L205 -8.9L206 -8.8L207 -9.0L208 -8.7L209 -8.7L210 -8.7L211 -8.8L212 -8.9L213 -8.6L214 -8.8L215 -8.9L216 -8.7L217 -9.1L218 -8.9L219 -8.7L220 -8.7L221 -9.0L222 -9.0L223 -8.7L224 -8.7L225 -8.6L226 -8.6L227 -8.6L228 -8.8L229 -8.9L230 -8.8L231 -8.7L232 -8.7L233 -8.8L234 -8.8L235 -8.7L236 -9.1L237 -9.2L238 -8.9L239 -8.9L240 -9.0L241 -8.8L242 -9.0L243 -8.9L244 -8.9"/><path id="s2101" d="M0 -8.7L1 -8.7L2 -9.1L3 -9.0L4 -8.9L5 -8.7L6 -8.9L7 -8.6L8 -8.7L9 -8.8L10 -9.0L11 -8.7L12 -8.6L13 -8.6L14 -8.7L15 -8.9L16 -8.8L17 -9.0L18 -9.0L19 -9.1L20 -8.8L21 -8.9L22 -8.9L23 -8.8L24 -8.8L25 -8.8L26 -8.6L27 -8.6L28 -8.8L29 -8.6L30 -8.8L31 -8.7L32 -8.6L33 -8.4L34 -8.9L35 -8.6L36 -8.7L37 -8.7L38 -9.0L39 -8.7L40 -9.0L41 -8.9L42 -8.8L43 -8.8L44 -8.6L45 -8.6L46 -8.9L47 -9.0L48 -8.7L49 -8.9L50 -8.9L51 -8.7L52 -9.0L53 -9.0L54 -8.8L55 -9.1L56 -8.8L57 -8.9L58 -8.5L59 -8.7L60 -8.9L61 -8.6L62 -8.6L63 -8.9L64 -9.1L65 -8.8L66 -8.7L67 -8.5L68 -8.6L69 -8.9L70 -8.6L71 -8.8L72 -9.0L73 -8.7L74 -9.0L75 -8.9L76 -9.0L77 -8.4L78 -8.6L79 -8.7L80 -8.8L81 -8.7L82 -9.0L83 -8.7L84 -8.9L85 -8.6L86 -8.7L87 -8.5L88 -8.5L89 -8.8L90 -8.7L91 -8.7L92 -8.8L93 -9.0L94 -8.9L95 -8.6L96 -8.6L97 -8.7L98 -8.7L99 -8.7L100 -9.0L101 -8.3L102 -9.0L103 -8.9L104 -9.0L105 -8.6L106 -8.8L107 -8.7L108 -8.6L109 -8.7L110 -9.0L111 -8.5L112 -8.8L113 -9.0L114 -9.0L115 -8.8L116 -8.9L117 -8.9L118 -8.9L119 -9.1L120 -8.8L121 -8.9L122 -9.0L123 -9.0L124 -8.8L125 -8.9L126 -8.7L127 -9.0L128 -9.0L129 -9.2L130 -8.8L131 -8.9L132 -8.6L133 -8.8L134 -8.7L135 -8.8L136 -8.8L137 -8.9L138 -8.9L139 -8.9L140 -8.6L141 -8.6L142 -9.0L143 -8.7L144 -8.6L145 -8.8L146 -8.6L147 -8.7L148 -8.9L149 -9.1L150 -8.7L151 -8.8L152 -8.6L153 -8.9L154 -8.7L155 -8.8L156 -9.0L157 -8.7L158 -9.0L159 -8.9L160 -8.5L161 -8.6L162 -9.1L163 -8.5L164 -8.6L165 -8.9L166 -8.7L167 -8.7L168 -8.9L169 -8.7L170 -8.9L171 -8.7L172 -8.7L173 -8.7L174 -8.8L175 -8.9L176 -9.0L177 -8.9L178 -8.9L179 -9.0L180 -8.9L181 -9.0L182 -9.0L183 -8.9L184 -8.8L185 -8.8L186 -8.7L187 -9.1L188 -8.8L189 -8.6L190 -9.0L191 -8.7L192 -8.6L193 -8.7L194 -8.4L195 -8.7L196 -8.8L197 -8.6L198 -8.7L199 -8.9L200 -9.0L201 -9.0L202 -8.9L203 -8.9L204 -8.6L205 -8.6L206 -8.8L207 -8.7L208 -8.9L209 -9.0L210 -9.0L211 -8.6L212 -8.9L213 -8.7L214 -8.7L215 -8.7L216 -8.7L217 -9.1L218 -8.8L219 -8.9L220 -8.9L221 -8.6L222 -9.0L223 -9.0L224 -9.0L225 -8.7L226 -9.0L227 -8.7L228 -9.0L229 -8.8L230 -9.1L231 -8.7L232 -8.9L233 -9.0L234 -8.6L235 -8.8L236 -8.9L237 -8.9L238 -8.9L239 -8.7L240 -9.0L241 -8.9L242 -8.7L243 -8.8L244 -8.5"/><path id="s2102" d="M0 -8.8L1 -8.8L2 -8.7L3 -8.7L4 -8.8L5 -9.1L6 -8.8L7 -9.0L8 -9.0L9 -9.0L10 -8.9L11 -9.2L12 -8.8L13 -8.7L14 -8.5L15 -8.8L16 -8.8L17 -8.8L18 -8.8L19 -8.7L20 -8.8L21 -8.9L22 -8.8L23 -8.7L24 -9.0L25 -9.0L26 -8.7L27 -8.7L28 -8.5L29 -8.6L30 -8.8L31 -9.1L32 -9.2L33 -9.0L34 -8.9L35 -8.7L36 -8.6L37 -8.7L38 -8.8L39 -8.9L40 -8.7L41 -8.8L42 -8.7L43 -9.0L44 -8.7L45 -9.0L46 -8.9L47 -8.8L48 -8.6L49 -8.8L50 -8.8L51 -8.8L52 -8.6L53 -8.5L54 -8.9L55 -8.8L56 -9.0L57 -9.0L58 -8.7L59 -8.9L60 -8.8L61 -8.8L62 -8.9L63 -8.9L64 -9.3L65 -8.8L66 -9.1L67 -9.0L68 -8.6L69 -8.7L70 -8.5L71 -8.8L72 -8.7L73 -8.8L74 -8.7L75 -8.7L76 -8.8L77 -8.8L78 -9.0L79 -8.8L80 -9.1L81 -9.1L82 -8.9L83 -9.1L84 -8.9L85 -9.0L86 -8.9L87 -8.9L88 -9.0L89 -9.0L90 -8.7L91 -8.5L92 -8.6L93 -8.9L94 -9.0L95 -8.7L96 -8.7L97 -9.0L98 -8.7L99 -8.8L100 -8.9L101 -8.6L102 -8.9L103 -8.8L104 -9.0L105 -9.0L106 -8.8L107 -8.9L108 -8.9L109 -9.1L110 -8.7L111 -8.9L112 -8.8L113 -8.7L114 -8.9L115 -8.9L116 -8.7L117 -8.9L118 -8.6L119 -8.9L120 -8.6L121 -8.4L122 -8.6L123 -8.9L124 -8.9L125 -8.7L126 -8.8L127 -9.1L128 -8.9L129 -9.0L130 -8.6L131 -9.0L132 -8.7L133 -9.0L134 -9.0L135 -9.0L136 -8.9L137 -9.0L138 -8.8L139 -8.5L140 -9.1L141 -9.1L142 -8.9L143 -8.8L144 -8.9L145 -9.0L146 -8.7L147 -8.7L148 -9.2L149 -9.0L150 -8.8L151 -8.9L152 -8.7L153 -8.7L154 -9.0L155 -8.7L156 -8.6L157 -8.5L158 -8.7L159 -9.0L160 -9.0L161 -8.8L162 -8.9L163 -9.1L164 -8.8L165 -8.9L166 -8.9L167 -8.8L168 -9.0L169 -8.9L170 -8.9L171 -8.7L172 -8.8L173 -8.7L174 -8.8L175 -8.9L176 -8.9L177 -8.8L178 -8.8L179 -8.8L180 -8.6L181 -9.0L182 -8.8L183 -8.6L184 -8.6L185 -8.8L186 -8.8L187 -8.7L188 -8.6L189 -8.8L190 -8.9L191 -8.8L192 -8.8L193 -8.8L194 -8.9L195 -8.9L196 -9.0L197 -8.9L198 -8.9L199 -8.6L200 -8.6L201 -8.7L202 -8.7L203 -8.9L204 -8.9L205 -9.0L206 -8.9L207 -8.6L208 -8.7L209 -8.5L210 -8.7L211 -8.9L212 -9.0L213 -8.5L214 -8.9L215 -8.8L216 -8.9L217 -9.4L218 -9.0L219 -8.7L220 -8.8L221 -8.8L222 -8.8L223 -9.0L224 -8.9L225 -8.8L226 -8.8L227 -8.7L228 -8.9L229 -9.1L230 -8.9L231 -8.8L232 -8.8L233 -8.8L234 -9.1L235 -9.0L236 -8.8L237 -8.8L238 -8.8L239 -8.6L240 -8.9L241 -8.9L242 -8.7L243 -8.8L244 -8.9"/><path id="s2110" d="M0 -54.7L1 -56.5L2 -57.6L3 -52.2L4 -45.3L5 -43.2L6 -44.6L7 -45.5L8 -43.1L9 -40.5L10 -46.5L11 -56.2L12 -66.8L13 -68.9L14 -72.2L15 -77.2L16 -85.3L17 -87.4L18 -72.8L19 -58.1L20 -54.0L21 -49.1L22 -47.4L23 -53.4L24 -59.2L25 -60.0L26 -53.7L27 -48.7L28 -50.0L29 -48.1L30 -45.3L31 -45.2L32 -47.4L33 -48.9L34 -47.2L35 -45.6L36 -53.0L37 -62.7L38 -62.8L39 -63.1L40 -76.0L41 -80.8L42 -61.3L43 -46.0L44 -45.1L45 -44.1L46 -50.2L47 -55.8L48 -58.7L49 -50.9L50 -43.8L51 -44.0L52 -45.7L53 -47.1L54 -45.2L55 -44.4L56 -45.4L57 -45.1L58 -44.0L59 -44.2L60 -56.1L61 -69.0L62 -68.6L63 -68.9L64 -75.7L65 -79.9L66 -63.9L67 -47.3L68 -45.4L69 -50.3L70 -55.7L71 -53.0L72 -49.1L73 -45.9L74 -44.0L75 -42.0L76 -43.0L77 -44.7L78 -44.5L79 -42.7L80 -40.8L81 -43.6L82 -45.8L83 -51.3L84 -56.9L85 -63.5L86 -67.5L87 -71.5L88 -74.7L89 -69.0L90 -60.6L91 -46.5L92 -43.9L93 -49.7L94 -53.5L95 -47.6L96 -42.8L97 -42.4L98 -42.3L99 -41.7L100 -42.0L101 -43.1L102 -43.8L103 -43.3L104 -42.4L105 -42.3L106 -43.6L107 -47.7L108 -52.5L109 -57.9L110 -59.9L111 -58.7L112 -57.5L113 -56.9L114 -56.4L115 -56.0L116 -55.1L117 -54.1L118 -49.4L119 -45.0L120 -42.3L121 -44.2L122 -46.6L123 -46.3L124 -44.2L125 -42.4L126 -43.2L127 -44.1L128 -45.1L129 -47.5L130 -50.0L131 -54.6L132 -59.0L133 -64.3L134 -70.8L135 -78.5L136 -78.4L137 -66.5L138 -58.2L139 -57.2L140 -55.1L141 -52.2L142 -49.5L143 -47.3L144 -45.3L145 -45.1L146 -46.4L147 -47.6L148 -48.9L149 -49.5L150 -50.1L151 -47.0L152 -44.6L153 -48.5L154 -61.1L155 -59.4L156 -51.2L157 -60.2L158 -74.3L159 -67.9L160 -54.8L161 -45.7L162 -39.7L163 -39.4L164 -39.3L165 -35.8L166 -32.7L167 -33.8L168 -34.7L169 -35.3L170 -35.2L171 -35.5L172 -33.4L173 -31.2L174 -31.7L175 -33.2L176 -35.0L177 -36.5L178 -38.0L179 -39.0L180 -37.8L181 -36.2L182 -36.6L183 -38.3L184 -38.4L185 -36.9L186 -37.2L187 -39.0L188 -40.2L189 -38.5L190 -38.0L191 -39.7L192 -39.6L193 -36.6L194 -34.8L195 -38.8L196 -40.0L197 -36.5L198 -36.1L199 -39.4L200 -40.5L201 -37.8L202 -34.9L203 -36.1L204 -38.9L205 -40.1L206 -38.9L207 -38.5L208 -40.5L209 -41.5L210 -41.0L211 -40.7L212 -39.9L213 -38.1L214 -36.5L215 -38.5L216 -41.9L217 -45.4L218 -42.7L219 -39.2L220 -37.2L221 -39.2L222 -41.2L223 -40.1L224 -39.1L225 -39.1L226 -39.4L227 -39.9L228 -38.5L229 -36.8L230 -38.6L231 -44.5L232 -49.4L233 -43.9L234 -38.7L235 -38.7L236 -40.5L237 -43.4L238 -46.4L239 -49.7L240 -52.2L241 -45.6L242 -39.6L243 -40.6L244 -42.6"/><path id="s2111" d="M0 -54.6L1 -55.9L2 -57.6L3 -52.2L4 -45.2L5 -43.1L6 -45.0L7 -45.8L8 -43.7L9 -40.9L10 -46.5L11 -57.4L12 -66.4L13 -69.4L14 -72.8L15 -77.4L16 -85.8L17 -86.9L18 -72.8L19 -58.7L20 -53.7L21 -49.2L22 -47.4L23 -53.2L24 -59.6L25 -60.1L26 -53.2L27 -48.3L28 -49.6L29 -48.1L30 -45.8L31 -45.5L32 -47.6L33 -48.9L34 -46.6L35 -44.0L36 -52.2L37 -61.8L38 -62.9L39 -62.8L40 -76.2L41 -80.9L42 -60.7L43 -45.9L44 -44.9L45 -44.5L46 -50.1L47 -56.1L48 -59.3L49 -51.4L50 -43.7L51 -44.1L52 -45.7L53 -47.3L54 -44.9L55 -43.3L56 -44.8L57 -44.8L58 -44.0L59 -44.1L60 -55.6L61 -68.0L62 -67.3L63 -68.5L64 -75.4L65 -79.8L66 -63.2L67 -47.3L68 -45.4L69 -50.2L70 -56.0L71 -52.7L72 -48.8L73 -45.3L74 -43.6L75 -41.7L76 -42.4L77 -44.5L78 -44.3L79 -42.5L80 -41.1L81 -43.1L82 -46.0L83 -51.1L84 -57.2L85 -63.2L86 -67.9L87 -72.3L88 -74.0L89 -69.3L90 -60.9L91 -46.7L92 -44.0L93 -49.9L94 -53.6L95 -48.3L96 -43.2L97 -42.1L98 -42.0L99 -42.0L100 -42.4L101 -43.2L102 -43.2L103 -42.6L104 -41.9L105 -42.6L106 -44.2L107 -47.4L108 -52.6L109 -57.4L110 -60.1L111 -59.0L112 -58.2L113 -57.1L114 -56.9L115 -56.1L116 -55.3L117 -54.0L118 -49.6L119 -45.1L120 -42.1L121 -44.1L122 -46.3L123 -46.3L124 -44.5L125 -42.6L126 -44.0L127 -44.3L128 -45.5L129 -47.7L130 -50.6L131 -53.7L132 -59.3L133 -64.3L134 -70.9L135 -78.9L136 -78.4L137 -67.2L138 -58.6L139 -57.4L140 -55.4L141 -52.6L142 -49.9L143 -47.6L144 -45.8L145 -44.7L146 -46.0L147 -47.9L148 -48.5L149 -49.3L150 -50.2L151 -47.3L152 -44.7L153 -48.9L154 -60.9L155 -60.1L156 -51.4L157 -60.2L158 -73.7L159 -67.4L160 -54.0L161 -46.0L162 -40.1L163 -39.8L164 -38.9L165 -35.6L166 -32.5L167 -33.6L168 -34.7L169 -35.1L170 -35.2L171 -35.4L172 -33.3L173 -31.1L174 -31.9L175 -33.6L176 -35.2L177 -36.7L178 -37.8L179 -39.0L180 -37.4L181 -36.2L182 -36.7L183 -38.0L184 -38.2L185 -36.5L186 -36.9L187 -38.7L188 -40.0L189 -38.4L190 -37.8L191 -39.6L192 -39.6L193 -36.4L194 -34.8L195 -38.4L196 -40.1L197 -37.1L198 -37.0L199 -39.6L200 -40.8L201 -37.7L202 -34.9L203 -36.5L204 -38.8L205 -39.6L206 -38.8L207 -38.5L208 -40.1L209 -41.1L210 -41.5L211 -40.9L212 -39.8L213 -38.3L214 -36.5L215 -38.5L216 -41.8L217 -45.3L218 -42.4L219 -39.3L220 -37.2L221 -38.6L222 -40.7L223 -40.2L224 -39.4L225 -39.0L226 -39.5L227 -39.7L228 -39.1L229 -37.3L230 -39.2L231 -45.2L232 -50.1L233 -44.3L234 -38.9L235 -38.9L236 -41.1L237 -43.7L238 -46.9L239 -49.9L240 -52.0L241 -45.6L242 -39.4L243 -40.5L244 -42.4"/><path id="s2112" d="M0 -54.8L1 -56.5L2 -58.1L3 -52.6L4 -45.9L5 -43.5L6 -45.1L7 -46.5L8 -43.8L9 -40.9L10 -46.9L11 -57.0L12 -66.9L13 -68.7L14 -71.4L15 -78.2L16 -85.7L17 -87.6L18 -72.5L19 -59.2L20 -54.3L21 -49.5L22 -47.4L23 -54.0L24 -59.8L25 -60.7L26 -53.8L27 -48.7L28 -50.1L29 -48.0L30 -45.7L31 -45.5L32 -47.0L33 -48.5L34 -46.8L35 -44.7L36 -52.5L37 -62.3L38 -62.3L39 -63.3L40 -76.6L41 -79.9L42 -61.2L43 -45.9L44 -45.4L45 -45.0L46 -50.3L47 -56.2L48 -59.9L49 -52.0L50 -44.4L51 -44.2L52 -46.1L53 -47.1L54 -45.2L55 -44.2L56 -45.2L57 -45.4L58 -44.6L59 -44.0L60 -55.6L61 -68.6L62 -68.6L63 -68.8L64 -76.4L65 -80.3L66 -63.2L67 -47.0L68 -45.8L69 -50.2L70 -55.7L71 -52.7L72 -48.8L73 -44.8L74 -43.3L75 -41.6L76 -42.7L77 -44.1L78 -44.6L79 -42.5L80 -41.2L81 -43.4L82 -46.1L83 -51.1L84 -57.4L85 -63.1L86 -67.3L87 -71.1L88 -73.8L89 -68.1L90 -60.2L91 -47.0L92 -43.7L93 -50.1L94 -53.8L95 -48.0L96 -43.8L97 -42.5L98 -41.9L99 -41.6L100 -42.7L101 -43.1L102 -43.7L103 -43.0L104 -42.2L105 -42.9L106 -44.5L107 -48.1L108 -52.2L109 -57.7L110 -59.8L111 -58.7L112 -57.6L113 -56.8L114 -56.7L115 -55.7L116 -54.8L117 -53.5L118 -49.3L119 -45.0L120 -41.8L121 -44.2L122 -46.1L123 -46.0L124 -44.3L125 -42.9L126 -43.5L127 -44.0L128 -45.1L129 -47.1L130 -50.0L131 -53.7L132 -58.6L133 -63.2L134 -70.3L135 -78.5L136 -78.2L137 -66.4L138 -58.3L139 -56.7L140 -55.2L141 -52.2L142 -49.3L143 -47.5L144 -45.2L145 -45.1L146 -45.9L147 -47.9L148 -48.8L149 -49.8L150 -50.6L151 -47.4L152 -45.0L153 -48.5L154 -60.3L155 -59.5L156 -50.8L157 -59.5L158 -73.0L159 -67.2L160 -54.0L161 -45.8L162 -40.1L163 -39.6L164 -38.8L165 -35.3L166 -32.3L167 -33.3L168 -34.4L169 -34.9L170 -35.2L171 -35.4L172 -33.5L173 -31.0L174 -31.5L175 -33.4L176 -35.2L177 -36.1L178 -37.6L179 -38.9L180 -37.0L181 -36.4L182 -36.8L183 -38.2L184 -38.2L185 -36.8L186 -37.2L187 -38.8L188 -40.3L189 -38.3L190 -37.7L191 -39.5L192 -39.4L193 -37.0L194 -35.3L195 -38.9L196 -39.8L197 -36.7L198 -36.5L199 -39.1L200 -40.1L201 -37.5L202 -34.6L203 -36.3L204 -38.6L205 -39.8L206 -38.7L207 -38.2L208 -40.2L209 -41.8L210 -41.3L211 -40.8L212 -39.9L213 -38.1L214 -36.4L215 -38.7L216 -41.8L217 -45.5L218 -42.9L219 -39.8L220 -37.2L221 -39.1L222 -40.7L223 -39.6L224 -39.0L225 -39.3L226 -39.2L227 -39.9L228 -38.5L229 -36.6L230 -38.8L231 -45.1L232 -50.1L233 -44.2L234 -39.0L235 -38.8L236 -41.1L237 -43.5L238 -46.3L239 -49.8L240 -52.2L241 -45.6L242 -39.7L243 -40.5L244 -42.4"/><path id="s2113" d="M0 -54.3L1 -55.9L2 -57.6L3 -52.4L4 -45.5L5 -43.4L6 -44.4L7 -45.8L8 -42.9L9 -40.1L10 -45.8L11 -56.9L12 -66.7L13 -69.6L14 -72.4L15 -78.1L16 -85.7L17 -87.3L18 -73.5L19 -59.1L20 -54.2L21 -49.7L22 -47.6L23 -53.8L24 -59.3L25 -59.8L26 -53.6L27 -48.4L28 -49.7L29 -48.0L30 -45.1L31 -45.0L32 -47.5L33 -49.3L34 -47.1L35 -44.5L36 -52.1L37 -61.8L38 -62.9L39 -62.1L40 -75.9L41 -80.7L42 -60.8L43 -46.3L44 -45.5L45 -44.6L46 -50.1L47 -56.6L48 -59.3L49 -51.2L50 -43.8L51 -43.9L52 -46.0L53 -47.3L54 -45.1L55 -43.8L56 -44.8L57 -45.0L58 -43.8L59 -43.9L60 -55.6L61 -68.0L62 -68.1L63 -69.2L64 -76.0L65 -80.5L66 -64.1L67 -47.3L68 -45.6L69 -50.8L70 -55.7L71 -52.6L72 -48.3L73 -44.8L74 -43.2L75 -41.6L76 -42.6L77 -44.2L78 -44.6L79 -42.9L80 -41.3L81 -43.3L82 -45.7L83 -51.0L84 -57.2L85 -63.1L86 -67.1L87 -72.3L88 -74.7L89 -69.4L90 -60.7L91 -46.9L92 -44.2L93 -50.7L94 -53.6L95 -48.2L96 -43.4L97 -42.3L98 -42.2L99 -41.7L100 -42.4L101 -43.7L102 -43.4L103 -42.8L104 -42.0L105 -42.7L106 -44.3L107 -48.0L108 -52.8L109 -57.8L110 -59.9L111 -58.5L112 -58.0L113 -57.0L114 -56.9L115 -55.7L116 -54.9L117 -53.9L118 -49.5L119 -45.1L120 -42.3L121 -44.5L122 -46.2L123 -46.1L124 -44.2L125 -42.6L126 -43.3L127 -44.0L128 -45.6L129 -47.6L130 -50.3L131 -54.0L132 -58.6L133 -63.9L134 -70.7L135 -78.3L136 -78.2L137 -66.6L138 -58.3L139 -56.9L140 -54.7L141 -52.0L142 -49.7L143 -47.4L144 -45.3L145 -45.1L146 -46.3L147 -47.3L148 -48.8L149 -49.6L150 -50.5L151 -47.9L152 -45.0L153 -48.7L154 -60.7L155 -59.4L156 -51.4L157 -60.3L158 -73.4L159 -67.0L160 -54.0L161 -45.6L162 -39.9L163 -39.6L164 -38.9L165 -35.5L166 -32.5L167 -33.3L168 -34.6L169 -35.1L170 -35.4L171 -35.5L172 -33.3L173 -31.3L174 -31.6L175 -33.3L176 -35.1L177 -36.4L178 -37.6L179 -38.8L180 -37.4L181 -36.1L182 -36.4L183 -38.3L184 -38.5L185 -36.9L186 -37.6L187 -38.9L188 -40.0L189 -38.3L190 -37.3L191 -39.6L192 -39.3L193 -36.6L194 -34.7L195 -38.4L196 -40.0L197 -36.8L198 -36.4L199 -39.4L200 -40.5L201 -37.6L202 -34.9L203 -36.2L204 -38.5L205 -39.6L206 -39.1L207 -38.6L208 -40.3L209 -41.3L210 -41.3L211 -40.9L212 -39.6L213 -38.3L214 -36.5L215 -38.4L216 -41.7L217 -45.2L218 -42.3L219 -39.1L220 -37.1L221 -38.9L222 -40.8L223 -40.0L224 -39.2L225 -39.3L226 -39.7L227 -39.8L228 -38.6L229 -37.2L230 -39.2L231 -45.2L232 -49.9L233 -44.2L234 -38.7L235 -38.6L236 -41.3L237 -43.8L238 -46.8L239 -49.9L240 -51.9L241 -45.6L242 -39.7L243 -40.7L244 -42.8"/><path id="s2114" d="M0 -54.8L1 -56.7L2 -58.6L3 -52.9L4 -46.0L5 -43.7L6 -44.7L7 -46.2L8 -43.2L9 -40.5L10 -46.1L11 -56.5L12 -66.4L13 -69.3L14 -73.0L15 -78.1L16 -85.2L17 -87.0L18 -72.4L19 -58.9L20 -54.4L21 -49.2L22 -47.4L23 -53.3L24 -59.3L25 -60.3L26 -53.5L27 -48.5L28 -49.8L29 -48.4L30 -45.8L31 -45.8L32 -47.2L33 -48.8L34 -46.8L35 -44.7L36 -52.2L37 -62.1L38 -62.3L39 -61.9L40 -76.0L41 -80.4L42 -61.2L43 -46.0L44 -45.1L45 -44.7L46 -50.1L47 -56.5L48 -60.1L49 -51.0L50 -43.6L51 -43.7L52 -45.6L53 -46.7L54 -44.9L55 -43.9L56 -45.1L57 -44.6L58 -44.0L59 -43.8L60 -56.0L61 -69.1L62 -68.9L63 -68.9L64 -75.4L65 -79.9L66 -63.6L67 -47.2L68 -45.9L69 -50.5L70 -55.8L71 -52.8L72 -48.6L73 -45.4L74 -43.6L75 -41.5L76 -42.6L77 -44.4L78 -44.5L79 -42.3L80 -40.7L81 -43.0L82 -46.1L83 -51.1L84 -57.4L85 -63.5L86 -67.8L87 -72.0L88 -73.6L89 -69.0L90 -60.9L91 -47.1L92 -43.9L93 -49.8L94 -53.1L95 -48.0L96 -43.3L97 -42.7L98 -42.1L99 -41.3L100 -42.0L101 -42.7L102 -43.3L103 -42.4L104 -42.1L105 -42.3L106 -44.6L107 -47.6L108 -52.7L109 -58.4L110 -60.3L111 -59.2L112 -57.4L113 -56.9L114 -56.6L115 -56.1L116 -54.4L117 -52.9L118 -49.0L119 -44.6L120 -42.3L121 -44.2L122 -46.3L123 -46.2L124 -44.6L125 -42.6L126 -42.8L127 -43.8L128 -45.1L129 -47.4L130 -49.7L131 -53.5L132 -58.6L133 -63.7L134 -70.4L135 -77.9L136 -78.6L137 -66.0L138 -58.4L139 -56.5L140 -54.9L141 -51.9L142 -49.3L143 -47.1L144 -45.5L145 -45.1L146 -46.5L147 -47.9L148 -48.9L149 -49.7L150 -50.4L151 -48.0L152 -45.1L153 -48.7L154 -60.7L155 -59.9L156 -51.1L157 -59.3L158 -73.0L159 -67.5L160 -53.9L161 -45.4L162 -39.8L163 -40.0L164 -39.6L165 -35.8L166 -32.5L167 -33.7L168 -34.6L169 -35.1L170 -35.3L171 -35.5L172 -33.3L173 -31.2L174 -31.6L175 -33.2L176 -35.2L177 -36.4L178 -38.1L179 -39.1L180 -37.8L181 -36.1L182 -36.6L183 -38.1L184 -38.1L185 -36.8L186 -37.1L187 -39.0L188 -40.1L189 -38.4L190 -38.0L191 -39.4L192 -39.0L193 -36.6L194 -34.8L195 -38.3L196 -39.7L197 -36.5L198 -36.7L199 -39.0L200 -40.5L201 -37.7L202 -34.7L203 -36.5L204 -38.6L205 -39.4L206 -38.8L207 -38.6L208 -40.6L209 -41.1L210 -41.2L211 -40.8L212 -39.9L213 -38.5L214 -36.5L215 -38.6L216 -42.0L217 -45.5L218 -42.6L219 -39.5L220 -37.4L221 -38.7L222 -40.8L223 -40.2L224 -39.6L225 -39.5L226 -39.7L227 -40.1L228 -38.7L229 -37.4L230 -39.2L231 -44.6L232 -49.4L233 -43.9L234 -38.7L235 -38.5L236 -40.8L237 -43.7L238 -46.5L239 -49.6L240 -51.7L241 -45.3L242 -39.6L243 -40.5L244 -42.7"/></g></defs><g clip-path="url(#cs21)" opacity="0.93"><g fill="none" stroke-linejoin="round" shape-rendering="auto" filter="url(#fs21)"><g transform="translate(434.2,928.10)"><path d="M0 0L0 -54.6L1 -56.1L2 -57.5L3 -52.3L4 -45.5L5 -43.5L6 -45.0L7 -46.0L8 -43.3L9 -40.7L10 -46.3L11 -56.8L12 -66.7L13 -69.4L14 -72.1L15 -78.1L16 -85.7L17 -87.5L18 -73.0L19 -58.8L20 -54.2L21 -49.5L22 -47.6L23 -53.7L24 -59.9L25 -60.2L26 -53.4L27 -48.5L28 -49.9L29 -48.2L30 -45.7L31 -45.5L32 -47.4L33 -49.1L34 -46.9L35 -44.8L36 -52.4L37 -62.4L38 -62.8L39 -62.8L40 -76.2L41 -80.6L42 -61.1L43 -46.2L44 -45.3L45 -44.5L46 -50.0L47 -56.2L48 -59.5L49 -51.4L50 -44.1L51 -44.0L52 -45.8L53 -46.9L54 -44.9L55 -43.9L56 -44.9L57 -45.1L58 -44.3L59 -44.1L60 -56.0L61 -68.6L62 -68.1L63 -68.5L64 -75.4L65 -80.0L66 -63.5L67 -47.2L68 -45.7L69 -50.5L70 -55.8L71 -52.7L72 -48.6L73 -45.3L74 -43.6L75 -41.9L76 -43.0L77 -44.6L78 -44.6L79 -42.6L80 -40.9L81 -43.3L82 -45.8L83 -51.0L84 -57.1L85 -63.3L86 -67.5L87 -71.8L88 -74.0L89 -68.7L90 -60.4L91 -46.8L92 -43.8L93 -50.0L94 -53.6L95 -48.1L96 -43.3L97 -42.4L98 -42.0L99 -41.7L100 -42.4L101 -43.1L102 -43.4L103 -42.7L104 -42.0L105 -42.5L106 -44.2L107 -47.6L108 -52.7L109 -57.9L110 -60.1L111 -58.9L112 -57.6L113 -57.0L114 -56.6L115 -56.1L116 -54.9L117 -53.7L118 -49.4L119 -45.0L120 -42.2L121 -44.2L122 -46.2L123 -46.4L124 -44.5L125 -42.6L126 -43.3L127 -44.0L128 -45.0L129 -47.4L130 -49.9L131 -53.6L132 -58.7L133 -63.7L134 -70.8L135 -79.0L136 -78.6L137 -66.5L138 -58.4L139 -56.9L140 -55.3L141 -52.4L142 -49.7L143 -47.5L144 -45.5L145 -45.2L146 -46.5L147 -47.8L148 -48.7L149 -49.5L150 -50.3L151 -47.6L152 -44.9L153 -48.8L154 -60.7L155 -59.6L156 -51.1L157 -59.9L158 -73.6L159 -67.6L160 -54.4L161 -45.9L162 -39.9L163 -39.7L164 -39.2L165 -35.6L166 -32.5L167 -33.5L168 -34.5L169 -35.3L170 -35.4L171 -35.6L172 -33.6L173 -31.3L174 -31.7L175 -33.3L176 -35.0L177 -36.4L178 -37.7L179 -38.8L180 -37.4L181 -36.0L182 -36.6L183 -38.1L184 -38.3L185 -36.8L186 -37.2L187 -38.9L188 -40.1L189 -38.3L190 -37.7L191 -39.7L192 -39.5L193 -36.6L194 -35.0L195 -38.5L196 -39.7L197 -36.7L198 -36.5L199 -39.2L200 -40.4L201 -37.6L202 -34.7L203 -36.4L204 -38.8L205 -39.8L206 -38.8L207 -38.4L208 -40.4L209 -41.6L210 -41.3L211 -40.9L212 -39.9L213 -38.2L214 -36.5L215 -38.7L216 -42.0L217 -45.3L218 -42.5L219 -39.5L220 -37.4L221 -39.0L222 -40.7L223 -40.1L224 -39.3L225 -39.1L226 -39.4L227 -39.8L228 -38.6L229 -37.0L230 -39.0L231 -44.8L232 -49.8L233 -44.2L234 -38.8L235 -38.7L236 -41.2L237 -43.8L238 -46.7L239 -49.8L240 -52.3L241 -45.8L242 -39.8L243 -40.6L244 -42.6L244 0Z" fill="#f3f1f6" fill-opacity="0.9" stroke="none"/><use href="#s2113" transform="scale(1,0.0077)" stroke="#B7DBAB" stroke-width="0.9"/><use href="#s2111" transform="scale(1,0.0203)" stroke="#F4D598" stroke-width="0.62"/><use href="#s2111" transform="scale(1,0.0336)" stroke="#70DBED" stroke-width="0.99"/><use href="#s2114" transform="scale(1,0.0492)" stroke="#F9BA8F" stroke-width="0.85"/><use href="#s2110" transform="scale(1,0.0624)" stroke="#F29191" stroke-width="0.71"/><use href="#s2110" transform="scale(1,0.074)" stroke="#82B5D8" stroke-width="0.65"/><use href="#s2113" transform="scale(1,0.0878)" stroke="#E5A8E2" stroke-width="0.97"/><use href="#s2113" transform="scale(1,0.1032)" stroke="#AEA2E0" stroke-width="0.84"/><use href="#s2113" transform="scale(1,0.119)" stroke="#629E51" stroke-width="1.01"/><use href="#s2110" transform="scale(1,0.1355)" stroke="#E5AC0E" stroke-width="0.93"/><use href="#s2114" transform="scale(1,0.1522)" stroke="#64B0C8" stroke-width="1.03"/><use href="#s2110" transform="scale(1,0.1679)" stroke="#E0752D" stroke-width="0.83"/><use href="#s2114" transform="scale(1,0.1827)" stroke="#BF1B00" stroke-width="0.9"/><use href="#s2110" transform="scale(1,0.1976)" stroke="#0A50A1" stroke-width="0.86"/><use href="#s2112" transform="scale(1,0.2107)" stroke="#962D82" stroke-width="0.69"/><use href="#s2110" transform="scale(1,0.2252)" stroke="#614D93" stroke-width="1.02"/><use href="#s2112" transform="scale(1,0.2399)" stroke="#9AC48A" stroke-width="0.71"/><use href="#s2110" transform="scale(1,0.2539)" stroke="#F2C96D" stroke-width="0.94"/><use href="#s2113" transform="scale(1,0.2706)" stroke="#65C5DB" stroke-width="1.02"/><use href="#s2114" transform="scale(1,0.2867)" stroke="#F9934E" stroke-width="0.88"/><use href="#s2112" transform="scale(1,0.2995)" stroke="#EA6460" stroke-width="0.63"/><use href="#s2112" transform="scale(1,0.313)" stroke="#5195CE" stroke-width="0.96"/><use href="#s2111" transform="scale(1,0.3286)" stroke="#D683CE" stroke-width="0.88"/><use href="#s2114" transform="scale(1,0.3416)" stroke="#806EB7" stroke-width="0.65"/><use href="#s2114" transform="scale(1,0.3521)" stroke="#3F6833" stroke-width="0.62"/><use href="#s2110" transform="scale(1,0.3641)" stroke="#967302" stroke-width="0.82"/><use href="#s2111" transform="scale(1,0.3759)" stroke="#2F575E" stroke-width="0.62"/><use href="#s2112" transform="scale(1,0.3894)" stroke="#99440A" stroke-width="1.01"/><use href="#s2112" transform="scale(1,0.4048)" stroke="#58140C" stroke-width="0.81"/><use href="#s2111" transform="scale(1,0.4185)" stroke="#052B51" stroke-width="0.81"/><use href="#s2110" transform="scale(1,0.4318)" stroke="#511749" stroke-width="0.76"/><use href="#s2114" transform="scale(1,0.4457)" stroke="#3F2B5B" stroke-width="0.88"/><use href="#s2113" transform="scale(1,0.4617)" stroke="#E0F9D7" stroke-width="1"/><use href="#s2110" transform="scale(1,0.4763)" stroke="#FCEACA" stroke-width="0.71"/><use href="#s2113" transform="scale(1,0.4886)" stroke="#CFFAFF" stroke-width="0.74"/><use href="#s2113" transform="scale(1,0.5021)" stroke="#F9E2D2" stroke-width="0.84"/><use href="#s2110" transform="scale(1,0.5152)" stroke="#FCE2DE" stroke-width="0.71"/><use href="#s2112" transform="scale(1,0.5284)" stroke="#BADFF4" stroke-width="0.85"/><use href="#s2113" transform="scale(1,0.5426)" stroke="#F9D9F9" stroke-width="0.82"/><use href="#s2114" transform="scale(1,0.5561)" stroke="#DEDAF7" stroke-width="0.77"/><use href="#s2111" transform="scale(1,0.5702)" stroke="#56A64B" stroke-width="0.89"/><use href="#s2114" transform="scale(1,0.5847)" stroke="#E0B400" stroke-width="0.82"/><use href="#s2112" transform="scale(1,0.5967)" stroke="#5794F2" stroke-width="0.62"/><use href="#s2110" transform="scale(1,0.6107)" stroke="#FA6400" stroke-width="1.04"/><use href="#s2111" transform="scale(1,0.6258)" stroke="#E02F44" stroke-width="0.73"/><use href="#s2111" transform="scale(1,0.6385)" stroke="#3274D9" stroke-width="0.77"/><use href="#s2114" transform="scale(1,0.6515)" stroke="#A352CC" stroke-width="0.76"/><use href="#s2112" transform="scale(1,0.6665)" stroke="#705DA0" stroke-width="1.01"/><use href="#s2110" transform="scale(1,0.6837)" stroke="#37872D" stroke-width="1.02"/><use href="#s2114" transform="scale(1,0.6992)" stroke="#F2CC0C" stroke-width="0.81"/><use href="#s2114" transform="scale(1,0.7125)" stroke="#447EBC" stroke-width="0.76"/><use href="#s2111" transform="scale(1,0.7241)" stroke="#C15C17" stroke-width="0.62"/><use href="#s2110" transform="scale(1,0.7377)" stroke="#890F02" stroke-width="0.99"/><use href="#s2114" transform="scale(1,0.7516)" stroke="#0A437C" stroke-width="0.64"/><use href="#s2111" transform="scale(1,0.7641)" stroke="#6D1F62" stroke-width="0.83"/><use href="#s2111" transform="scale(1,0.7773)" stroke="#584477" stroke-width="0.73"/><use href="#s2112" transform="scale(1,0.7896)" stroke="#B7DBAB" stroke-width="0.72"/><use href="#s2114" transform="scale(1,0.8019)" stroke="#F4D598" stroke-width="0.73"/><use href="#s2110" transform="scale(1,0.8137)" stroke="#70DBED" stroke-width="0.65"/><use href="#s2113" transform="scale(1,0.8242)" stroke="#F9BA8F" stroke-width="0.62"/><use href="#s2113" transform="scale(1,0.8361)" stroke="#F29191" stroke-width="0.82"/><use href="#s2113" transform="scale(1,0.8511)" stroke="#82B5D8" stroke-width="0.95"/><use href="#s2113" transform="scale(1,0.8665)" stroke="#E5A8E2" stroke-width="0.87"/><use href="#s2114" transform="scale(1,0.8795)" stroke="#AEA2E0" stroke-width="0.66"/><use href="#s2112" transform="scale(1,0.8927)" stroke="#629E51" stroke-width="0.9"/><use href="#s2112" transform="scale(1,0.9053)" stroke="#E5AC0E" stroke-width="0.62"/><use href="#s2111" transform="scale(1,0.9168)" stroke="#64B0C8" stroke-width="0.76"/><use href="#s2110" transform="scale(1,0.9314)" stroke="#E0752D" stroke-width="0.96"/><use href="#s2110" transform="scale(1,0.9481)" stroke="#BF1B00" stroke-width="1.01"/><use href="#s2114" transform="scale(1,0.9633)" stroke="#0A50A1" stroke-width="0.78"/><use href="#s2112" transform="scale(1,0.9781)" stroke="#962D82" stroke-width="0.97"/><use href="#s2113" transform="scale(1,0.9932)" stroke="#614D93" stroke-width="0.8"/><use href="#s2110" stroke="#86719c" stroke-width=".8"/></g><g transform="translate(434.2,936.90)"><path d="M0 0L0 -8.8L1 -8.8L2 -8.8L3 -8.8L4 -8.8L5 -8.8L6 -8.8L7 -8.8L8 -8.8L9 -8.8L10 -8.8L11 -8.8L12 -8.8L13 -8.8L14 -8.8L15 -8.8L16 -8.8L17 -8.8L18 -8.8L19 -8.8L20 -8.8L21 -8.8L22 -8.8L23 -8.8L24 -8.8L25 -8.8L26 -8.8L27 -8.8L28 -8.8L29 -8.8L30 -8.8L31 -8.8L32 -8.8L33 -8.8L34 -8.8L35 -8.8L36 -8.8L37 -8.8L38 -8.8L39 -8.8L40 -8.8L41 -8.8L42 -8.8L43 -8.8L44 -8.8L45 -8.8L46 -8.8L47 -8.8L48 -8.8L49 -8.8L50 -8.8L51 -8.8L52 -8.8L53 -8.8L54 -8.8L55 -8.8L56 -8.8L57 -8.8L58 -8.8L59 -8.8L60 -8.8L61 -8.8L62 -8.8L63 -8.8L64 -8.8L65 -8.8L66 -8.8L67 -8.8L68 -8.8L69 -8.8L70 -8.8L71 -8.8L72 -8.8L73 -8.8L74 -8.8L75 -8.8L76 -8.8L77 -8.8L78 -8.8L79 -8.8L80 -8.8L81 -8.8L82 -8.8L83 -8.8L84 -8.8L85 -8.8L86 -8.8L87 -8.8L88 -8.8L89 -8.8L90 -8.8L91 -8.8L92 -8.8L93 -8.8L94 -8.8L95 -8.8L96 -8.8L97 -8.8L98 -8.8L99 -8.8L100 -8.8L101 -8.8L102 -8.8L103 -8.8L104 -8.8L105 -8.8L106 -8.8L107 -8.8L108 -8.8L109 -8.8L110 -8.8L111 -8.8L112 -8.8L113 -8.8L114 -8.8L115 -8.8L116 -8.8L117 -8.8L118 -8.8L119 -8.8L120 -8.8L121 -8.8L122 -8.8L123 -8.8L124 -8.8L125 -8.8L126 -8.8L127 -8.8L128 -8.8L129 -8.8L130 -8.8L131 -8.8L132 -8.8L133 -8.8L134 -8.8L135 -8.8L136 -8.8L137 -8.8L138 -8.8L139 -8.8L140 -8.8L141 -8.8L142 -8.8L143 -8.8L144 -8.8L145 -8.8L146 -8.8L147 -8.8L148 -8.8L149 -8.8L150 -8.8L151 -8.8L152 -8.8L153 -8.8L154 -8.8L155 -8.8L156 -8.8L157 -8.8L158 -8.8L159 -8.8L160 -8.8L161 -8.8L162 -8.8L163 -8.8L164 -8.8L165 -8.8L166 -8.8L167 -8.8L168 -8.8L169 -8.8L170 -8.8L171 -8.8L172 -8.8L173 -8.8L174 -8.8L175 -8.8L176 -8.8L177 -8.8L178 -8.8L179 -8.8L180 -8.8L181 -8.8L182 -8.8L183 -8.8L184 -8.8L185 -8.8L186 -8.8L187 -8.8L188 -8.8L189 -8.8L190 -8.8L191 -8.8L192 -8.8L193 -8.8L194 -8.8L195 -8.8L196 -8.8L197 -8.8L198 -8.8L199 -8.8L200 -8.8L201 -8.8L202 -8.8L203 -8.8L204 -8.8L205 -8.8L206 -8.8L207 -8.8L208 -8.8L209 -8.8L210 -8.8L211 -8.8L212 -8.8L213 -8.8L214 -8.8L215 -8.8L216 -8.8L217 -8.8L218 -8.8L219 -8.8L220 -8.8L221 -8.8L222 -8.8L223 -8.8L224 -8.8L225 -8.8L226 -8.8L227 -8.8L228 -8.8L229 -8.8L230 -8.8L231 -8.8L232 -8.8L233 -8.8L234 -8.8L235 -8.8L236 -8.8L237 -8.8L238 -8.8L239 -8.8L240 -8.8L241 -8.8L242 -8.8L243 -8.8L244 -8.8L244 0Z" fill="#ece9f1" fill-opacity="0.9" stroke="none"/><use href="#s2102" transform="scale(1,0.0384)" stroke="#56A64B" stroke-width="1"/><use href="#s2101" transform="scale(1,0.1005)" stroke="#E0B400" stroke-width="1"/><use href="#s2102" transform="scale(1,0.1457)" stroke="#5794F2" stroke-width="1"/><use href="#s2100" transform="scale(1,0.2065)" stroke="#FA6400" stroke-width="1"/><use href="#s2100" transform="scale(1,0.2701)" stroke="#E02F44" stroke-width="1"/><use href="#s2101" transform="scale(1,0.3178)" stroke="#3274D9" stroke-width="1"/><use href="#s2102" transform="scale(1,0.374)" stroke="#A352CC" stroke-width="1"/><use href="#s2101" transform="scale(1,0.4343)" stroke="#705DA0" stroke-width="1"/><use href="#s2100" transform="scale(1,0.4988)" stroke="#37872D" stroke-width="1"/><use href="#s2100" transform="scale(1,0.5614)" stroke="#F2CC0C" stroke-width="1"/><use href="#s2100" transform="scale(1,0.6251)" stroke="#447EBC" stroke-width="1"/><use href="#s2102" transform="scale(1,0.6905)" stroke="#C15C17" stroke-width="1"/><use href="#s2100" transform="scale(1,0.7494)" stroke="#890F02" stroke-width="1"/><use href="#s2100" transform="scale(1,0.8193)" stroke="#0A437C" stroke-width="1"/><use href="#s2102" transform="scale(1,0.8908)" stroke="#6D1F62" stroke-width="1"/><use href="#s2100" transform="scale(1,0.9622)" stroke="#584477" stroke-width="1"/></g></g></g></svg>
<div class="sw" style="left:373.1px;top:970.0px;background:#56A64B"></div><span class="t" style="left:395.10px;top:965.50px;font-size:12px;color:#2b3035;letter-spacing:0.684px;">ingester-zone-a-0</span>
<div class="sw" style="left:511.3px;top:970.0px;background:#E0B400"></div><span class="t" style="left:533.30px;top:965.50px;font-size:12px;color:#2b3035;letter-spacing:0.571px;">ingester-zone-a-1</span>
<div class="sw" style="left:373.1px;top:993.5px;background:#5794F2"></div><span class="t" style="left:395.10px;top:989.00px;font-size:12px;color:#2b3035;letter-spacing:0.557px;">ingester-zone-a-10</span>
<div class="sw" style="left:516.3px;top:993.5px;background:#FA6400"></div><span class="t" style="left:538.30px;top:989.00px;font-size:12px;color:#2b3035;letter-spacing:0.450px;">ingester-zone-a-11</span>
<svg class="abs" style="left:0;top:0" width="1400" height="1000" shape-rendering="crispEdges"><path d="M762.5 223.3V382.5" stroke="rgba(36,41,46,0.1)" stroke-width="1"/><path d="M832.5 223.3V382.5" stroke="rgba(36,41,46,0.1)" stroke-width="1"/><path d="M902.5 223.3V382.5" stroke="rgba(36,41,46,0.1)" stroke-width="1"/><path d="M972.5 223.3V382.5" stroke="rgba(36,41,46,0.1)" stroke-width="1"/><path d="M743.2 377.5H1023.2" stroke="rgba(36,41,46,0.1)" stroke-width="1"/><path d="M743.2 318.5H1023.2" stroke="rgba(36,41,46,0.1)" stroke-width="1"/><path d="M743.2 259.5H1023.2" stroke="rgba(36,41,46,0.1)" stroke-width="1"/></svg><span class="t" style="left:747.00px;top:387.00px;font-size:12px;color:#2b3035;letter-spacing:-0.008px;">17:30</span><span class="t" style="left:817.13px;top:387.00px;font-size:12px;color:#2b3035;letter-spacing:-0.008px;">17:45</span><span class="t" style="left:887.26px;top:387.00px;font-size:12px;color:#2b3035;letter-spacing:-0.008px;">18:00</span><span class="t" style="left:957.39px;top:387.00px;font-size:12px;color:#2b3035;letter-spacing:-0.008px;">18:15</span><span class="t" style="left:730.51px;top:370.90px;font-size:12px;color:#2b3035;">0</span><span class="t" style="left:722.60px;top:311.90px;font-size:12px;color:#2b3035;letter-spacing:1.241px;">50</span><span class="t" style="left:716.60px;top:252.90px;font-size:12px;color:#2b3035;letter-spacing:0.284px;">100</span>
<svg class="abs" style="left:0;top:0" width="1400" height="1000"><path d="M743.2 332.6L744.3 298.2L745.8 327.6L747.3 289.4L748.6 331.9L749.6 306.2L751.1 298.2L752.4 322.3L753.9 339.0L756.1 306.2L757.1 339.5L758.4 289.4L759.9 300.8L761.4 327.6L763.2 304.6L765.1 309.4L767.2 341.6L770.0 312.6L771.5 330.9L772.6 311.5L774.3 332.6L775.4 308.3L776.5 342.7L778.0 318.0L779.5 297.1L781.4 347.6L782.9 312.6L784.4 274.3L785.9 324.4L788.3 343.8L789.3 308.3L790.4 339.5L792.3 295.4L793.6 307.2L795.3 337.7L796.4 265.3L797.9 318.0L799.4 335.2L800.7 309.4L802.2 312.6L803.5 297.1L805.0 314.7L806.1 313.7L807.4 298.6L809.3 355.6L810.8 338.4L811.9 337.7L812.9 321.8L814.6 318.0L816.4 325.5L817.7 334.1L819.4 336.2L821.1 318.0L823.2 343.8L824.7 326.6L826.2 287.5L828.0 332.6L830.1 334.3L831.6 295.4L832.9 330.9L835.5 317.5L837.0 337.3L838.7 329.8L840.4 331.9L841.5 317.5L843.0 330.9L844.0 326.6L845.5 347.6L847.3 333.0L848.5 304.4L850.5 330.9L852.2 339.5L854.3 301.4L855.8 331.9L856.9 312.6L858.4 320.1L859.5 310.4L860.6 322.3L861.4 295.4L862.5 323.3L863.4 297.6L865.5 297.6L866.6 345.5L868.3 296.5L869.4 322.3L870.9 340.5L872.6 303.4L874.3 339.5L875.4 301.9L877.3 322.3L878.4 330.9L879.9 333.0L881.2 338.4L882.4 306.8L884.8 342.7L885.9 330.9L887.6 306.2L888.7 328.7L889.7 315.8L890.6 324.4L891.7 305.5L893.4 334.1L894.9 335.2L896.4 289.4L897.7 347.6L898.8 319.0L900.3 326.6L901.3 323.3L902.4 339.5L903.9 330.9L905.2 334.1L906.3 323.3L907.8 334.1L909.5 298.6L910.3 297.1L911.6 343.8L913.8 329.8L915.5 299.3L917.4 349.6L918.5 248.1L919.6 304.0L921.5 240.2L922.6 329.8L923.2 306.2L924.5 308.3L925.8 345.5L927.1 320.1L928.4 312.6L929.7 254.1L930.7 332.6L932.2 316.5L933.7 330.9L935.4 352.8L936.9 316.5L939.1 337.3L941.0 322.3L942.5 314.1L944.5 352.8L946.0 333.7L947.7 336.2L949.6 342.7L951.3 304.6L952.4 304.6L954.1 338.4L955.8 315.8L957.3 286.4L959.3 334.1L961.0 299.7L961.8 296.5L963.6 335.2L964.8 320.1L966.3 309.4L967.4 333.0L969.1 316.9L970.2 322.3L971.7 309.4L973.2 332.6L975.6 275.4L977.7 342.7L979.0 311.5L980.5 286.4L982.4 323.3L983.9 326.6L985.7 301.4L986.7 329.8L988.4 268.5L990.4 335.2L992.7 348.5L993.8 311.5L994.7 313.2L996.0 336.2L998.5 293.3L1000.7 334.1L1002.2 322.3L1003.5 317.5L1005.6 337.7L1007.1 328.7L1008.6 302.9L1010.3 334.7L1012.7 259.3L1014.0 313.7L1015.5 341.6L1017.8 308.3L1019.3 304.0L1020.6 336.9L1022.8 296.5L1022.8 377.5L743.2 377.5Z" fill="#E0B400" fill-opacity="0.017"/><path d="M743.2 377.5L745.6 377.5L747.9 377.5L750.3 377.5L752.6 377.5L755.0 377.5L757.3 377.5L759.7 377.5L762.0 377.5L764.4 377.5L766.7 377.5L769.1 377.5L771.4 377.5L773.8 377.5L776.1 377.5L778.5 377.5L780.8 377.5L783.2 376.7L785.6 377.5L787.9 377.5L790.3 377.5L792.6 377.5L795.0 377.5L797.3 377.5L799.7 377.5L802.0 377.5L804.4 377.5L806.7 377.5L809.1 377.5L811.4 377.5L813.8 377.5L816.1 377.5L818.5 377.5L820.8 377.5L823.2 377.5L825.6 377.5L827.9 377.5L830.3 377.5L832.6 377.5L835.0 377.5L837.3 377.5L839.7 377.5L842.0 377.5L844.4 377.5L846.7 377.5L849.1 377.5L851.4 377.5L853.8 377.5L856.1 377.5L858.5 377.5L860.8 377.5L863.2 377.5L865.6 377.5L867.9 377.5L870.3 377.5L872.6 377.5L875.0 377.5L877.3 377.5L879.7 377.5L882.0 377.5L884.4 377.5L886.7 377.5L889.1 377.5L891.4 377.5L893.8 377.5L896.1 377.5L898.5 377.5L900.8 377.5L903.2 377.5L905.6 377.5L907.9 377.5L910.3 377.5L912.6 377.5L915.0 377.5L917.3 377.5L919.7 376.7L922.0 377.5L924.4 377.5L926.7 377.5L929.1 377.5L931.4 377.5L933.8 377.5L936.1 377.5L938.5 377.5L940.8 377.5L943.2 377.5L945.6 377.5L947.9 377.5L950.3 377.5L952.6 377.5L955.0 377.5L957.3 377.5L959.7 377.5L962.0 377.5L964.4 377.5L966.7 377.5L969.1 377.5L971.4 377.5L973.8 377.5L976.1 377.5L978.5 377.5L980.8 377.5L983.2 377.5L985.6 377.5L987.9 377.5L990.3 377.5L992.6 377.5L995.0 377.5L997.3 377.5L999.7 377.5L1002.0 377.5L1004.4 377.5L1006.7 377.5L1009.1 377.5L1011.4 377.5L1013.8 377.5L1016.1 377.5L1018.5 377.5L1020.8 377.5L1023.2 377.5L1023.2 377.5L743.2 377.5Z" fill="#56A64B" fill-opacity="0.006"/><path d="M743.2 332.6L744.3 298.2L745.8 327.6L747.3 289.4L748.6 331.9L749.6 306.2L751.1 298.2L752.4 322.3L753.9 339.0L756.1 306.2L757.1 339.5L758.4 289.4L759.9 300.8L761.4 327.6L763.2 304.6L765.1 309.4L767.2 341.6L770.0 312.6L771.5 330.9L772.6 311.5L774.3 332.6L775.4 308.3L776.5 342.7L778.0 318.0L779.5 297.1L781.4 347.6L782.9 312.6L784.4 274.3L785.9 324.4L788.3 343.8L789.3 308.3L790.4 339.5L792.3 295.4L793.6 307.2L795.3 337.7L796.4 265.3L797.9 318.0L799.4 335.2L800.7 309.4L802.2 312.6L803.5 297.1L805.0 314.7L806.1 313.7L807.4 298.6L809.3 355.6L810.8 338.4L811.9 337.7L812.9 321.8L814.6 318.0L816.4 325.5L817.7 334.1L819.4 336.2L821.1 318.0L823.2 343.8L824.7 326.6L826.2 287.5L828.0 332.6L830.1 334.3L831.6 295.4L832.9 330.9L835.5 317.5L837.0 337.3L838.7 329.8L840.4 331.9L841.5 317.5L843.0 330.9L844.0 326.6L845.5 347.6L847.3 333.0L848.5 304.4L850.5 330.9L852.2 339.5L854.3 301.4L855.8 331.9L856.9 312.6L858.4 320.1L859.5 310.4L860.6 322.3L861.4 295.4L862.5 323.3L863.4 297.6L865.5 297.6L866.6 345.5L868.3 296.5L869.4 322.3L870.9 340.5L872.6 303.4L874.3 339.5L875.4 301.9L877.3 322.3L878.4 330.9L879.9 333.0L881.2 338.4L882.4 306.8L884.8 342.7L885.9 330.9L887.6 306.2L888.7 328.7L889.7 315.8L890.6 324.4L891.7 305.5L893.4 334.1L894.9 335.2L896.4 289.4L897.7 347.6L898.8 319.0L900.3 326.6L901.3 323.3L902.4 339.5L903.9 330.9L905.2 334.1L906.3 323.3L907.8 334.1L909.5 298.6L910.3 297.1L911.6 343.8L913.8 329.8L915.5 299.3L917.4 349.6L918.5 248.1L919.6 304.0L921.5 240.2L922.6 329.8L923.2 306.2L924.5 308.3L925.8 345.5L927.1 320.1L928.4 312.6L929.7 254.1L930.7 332.6L932.2 316.5L933.7 330.9L935.4 352.8L936.9 316.5L939.1 337.3L941.0 322.3L942.5 314.1L944.5 352.8L946.0 333.7L947.7 336.2L949.6 342.7L951.3 304.6L952.4 304.6L954.1 338.4L955.8 315.8L957.3 286.4L959.3 334.1L961.0 299.7L961.8 296.5L963.6 335.2L964.8 320.1L966.3 309.4L967.4 333.0L969.1 316.9L970.2 322.3L971.7 309.4L973.2 332.6L975.6 275.4L977.7 342.7L979.0 311.5L980.5 286.4L982.4 323.3L983.9 326.6L985.7 301.4L986.7 329.8L988.4 268.5L990.4 335.2L992.7 348.5L993.8 311.5L994.7 313.2L996.0 336.2L998.5 293.3L1000.7 334.1L1002.2 322.3L1003.5 317.5L1005.6 337.7L1007.1 328.7L1008.6 302.9L1010.3 334.7L1012.7 259.3L1014.0 313.7L1015.5 341.6L1017.8 308.3L1019.3 304.0L1020.6 336.9L1022.8 296.5" fill="none" stroke="#E0B400" stroke-width="1.1" stroke-linejoin="round"/><path d="M743.2 377.5L745.6 377.5L747.9 377.5L750.3 377.5L752.6 377.5L755.0 377.5L757.3 377.5L759.7 377.5L762.0 377.5L764.4 377.5L766.7 377.5L769.1 377.5L771.4 377.5L773.8 377.5L776.1 377.5L778.5 377.5L780.8 377.5L783.2 376.7L785.6 377.5L787.9 377.5L790.3 377.5L792.6 377.5L795.0 377.5L797.3 377.5L799.7 377.5L802.0 377.5L804.4 377.5L806.7 377.5L809.1 377.5L811.4 377.5L813.8 377.5L816.1 377.5L818.5 377.5L820.8 377.5L823.2 377.5L825.6 377.5L827.9 377.5L830.3 377.5L832.6 377.5L835.0 377.5L837.3 377.5L839.7 377.5L842.0 377.5L844.4 377.5L846.7 377.5L849.1 377.5L851.4 377.5L853.8 377.5L856.1 377.5L858.5 377.5L860.8 377.5L863.2 377.5L865.6 377.5L867.9 377.5L870.3 377.5L872.6 377.5L875.0 377.5L877.3 377.5L879.7 377.5L882.0 377.5L884.4 377.5L886.7 377.5L889.1 377.5L891.4 377.5L893.8 377.5L896.1 377.5L898.5 377.5L900.8 377.5L903.2 377.5L905.6 377.5L907.9 377.5L910.3 377.5L912.6 377.5L915.0 377.5L917.3 377.5L919.7 376.7L922.0 377.5L924.4 377.5L926.7 377.5L929.1 377.5L931.4 377.5L933.8 377.5L936.1 377.5L938.5 377.5L940.8 377.5L943.2 377.5L945.6 377.5L947.9 377.5L950.3 377.5L952.6 377.5L955.0 377.5L957.3 377.5L959.7 377.5L962.0 377.5L964.4 377.5L966.7 377.5L969.1 377.5L971.4 377.5L973.8 377.5L976.1 377.5L978.5 377.5L980.8 377.5L983.2 377.5L985.6 377.5L987.9 377.5L990.3 377.5L992.6 377.5L995.0 377.5L997.3 377.5L999.7 377.5L1002.0 377.5L1004.4 377.5L1006.7 377.5L1009.1 377.5L1011.4 377.5L1013.8 377.5L1016.1 377.5L1018.5 377.5L1020.8 377.5L1023.2 377.5" fill="none" stroke="#56A64B" stroke-width="1.1" stroke-linejoin="round"/></svg>
<div class="sw" style="left:717.6px;top:412.0px;background:#56A64B"></div><span class="t" style="left:739.60px;top:406.80px;font-size:12px;color:#2b3035;letter-spacing:0.670px;">avg</span>
<div class="sw" style="left:770.2px;top:412.0px;background:#E0B400"></div><span class="t" style="left:792.20px;top:406.80px;font-size:12px;color:#2b3035;letter-spacing:0.649px;">highest</span>
<svg class="abs" style="left:0;top:0" width="1400" height="1000" shape-rendering="crispEdges"><path d="M762.5 527.3V686.5" stroke="rgba(36,41,46,0.1)" stroke-width="1"/><path d="M832.5 527.3V686.5" stroke="rgba(36,41,46,0.1)" stroke-width="1"/><path d="M902.5 527.3V686.5" stroke="rgba(36,41,46,0.1)" stroke-width="1"/><path d="M972.5 527.3V686.5" stroke="rgba(36,41,46,0.1)" stroke-width="1"/><path d="M743.2 681.5H1023.2" stroke="rgba(36,41,46,0.1)" stroke-width="1"/><path d="M743.2 622.5H1023.2" stroke="rgba(36,41,46,0.1)" stroke-width="1"/><path d="M743.2 563.5H1023.2" stroke="rgba(36,41,46,0.1)" stroke-width="1"/></svg><span class="t" style="left:747.00px;top:691.00px;font-size:12px;color:#2b3035;letter-spacing:-0.008px;">17:30</span><span class="t" style="left:817.13px;top:691.00px;font-size:12px;color:#2b3035;letter-spacing:-0.008px;">17:45</span><span class="t" style="left:887.26px;top:691.00px;font-size:12px;color:#2b3035;letter-spacing:-0.008px;">18:00</span><span class="t" style="left:957.39px;top:691.00px;font-size:12px;color:#2b3035;letter-spacing:-0.008px;">18:15</span><span class="t" style="left:730.51px;top:674.90px;font-size:12px;color:#2b3035;">0</span><span class="t" style="left:722.60px;top:615.90px;font-size:12px;color:#2b3035;letter-spacing:1.241px;">50</span><span class="t" style="left:716.60px;top:556.90px;font-size:12px;color:#2b3035;letter-spacing:0.284px;">100</span>
<svg class="abs" style="left:0;top:0" width="1400" height="1000"><path d="M743.2 665.7L744.4 659.2L745.6 661.7L746.9 658.1L748.1 661.7L749.3 655.4L750.5 668.0L751.8 664.1L753.0 665.4L754.2 665.8L755.4 659.4L756.6 668.2L757.9 668.3L759.1 650.0L760.3 661.0L761.5 663.9L762.8 649.2L764.0 663.3L765.2 660.6L766.4 661.3L767.7 663.3L768.9 656.3L770.1 657.9L771.3 661.9L772.5 662.0L773.8 665.4L775.0 660.2L776.2 663.3L777.4 657.4L778.7 667.1L779.9 663.2L781.1 661.7L782.3 663.3L783.5 657.6L784.8 663.3L786.0 655.8L787.2 666.0L788.4 659.2L789.7 663.4L790.9 660.2L792.1 662.6L793.3 663.8L794.6 650.4L795.8 658.1L797.0 660.3L798.2 664.8L799.4 661.6L800.7 664.6L801.9 664.4L803.1 661.7L804.3 659.1L805.6 663.1L806.8 664.5L808.0 662.5L809.2 660.1L810.4 661.6L811.7 664.6L812.9 661.3L814.1 663.0L815.3 660.7L816.6 662.9L817.8 649.5L819.0 660.1L820.2 661.6L821.5 661.4L822.7 662.7L823.9 665.1L825.1 661.6L826.3 663.7L827.6 661.8L828.8 659.7L830.0 664.5L831.2 662.3L832.5 662.4L833.7 665.4L834.9 662.8L836.1 656.6L837.3 661.6L838.6 663.6L839.8 659.0L841.0 664.8L842.2 666.1L843.5 660.2L844.7 666.6L845.9 659.0L847.1 661.7L848.4 655.2L849.6 659.7L850.8 661.2L852.0 660.4L853.2 664.8L854.5 658.7L855.7 658.2L856.9 659.1L858.1 662.4L859.4 660.9L860.6 659.7L861.8 662.2L863.0 659.5L864.2 664.8L865.5 665.8L866.7 662.9L867.9 655.8L869.1 659.6L870.4 660.8L871.6 666.1L872.8 661.6L874.0 661.2L875.3 655.4L876.5 667.6L877.7 659.5L878.9 656.2L880.1 664.6L881.4 659.5L882.6 661.8L883.8 660.1L885.0 663.2L886.3 662.9L887.5 663.0L888.7 662.6L889.9 660.7L891.1 663.3L892.4 661.7L893.6 662.6L894.8 662.4L896.0 661.3L897.3 661.9L898.5 660.9L899.7 655.9L900.9 668.5L902.2 660.7L903.4 660.5L904.6 660.5L905.8 663.1L907.0 662.4L908.3 661.9L909.5 660.3L910.7 665.4L911.9 656.9L913.2 660.1L914.4 662.6L915.6 663.6L916.8 660.1L918.0 663.6L919.3 659.5L919.5 657.9L921.5 544.4L923.5 666.1L924.2 659.7L925.4 655.4L926.6 660.5L927.8 664.6L929.1 652.4L930.3 653.9L931.5 666.9L932.7 659.8L933.9 665.5L935.2 662.6L936.4 662.6L937.6 661.6L938.8 667.7L940.1 660.3L941.3 664.1L942.5 664.0L943.7 663.6L944.9 659.3L946.2 666.2L947.4 663.3L948.6 664.4L949.8 660.4L951.1 667.8L952.3 662.2L953.5 660.8L954.7 662.0L956.0 666.1L957.2 662.8L958.4 657.6L959.6 659.1L960.8 662.7L962.1 662.9L963.3 664.8L964.5 662.8L965.7 661.9L967.0 660.0L968.2 661.8L969.4 662.4L970.6 663.0L971.8 659.0L973.1 665.6L974.3 660.9L975.5 663.7L976.7 661.5L978.0 657.2L979.2 650.0L980.4 663.2L981.6 655.9L982.9 661.2L984.1 660.8L985.3 665.6L986.5 662.2L987.7 660.5L989.0 650.4L990.2 659.3L991.4 661.4L992.6 659.7L993.9 666.1L995.1 662.1L996.3 664.6L997.5 661.1L998.7 667.3L1000.0 665.8L1001.2 658.9L1002.4 657.9L1003.6 661.9L1004.9 664.0L1006.1 663.8L1007.3 662.6L1008.5 662.9L1009.8 662.3L1011.0 653.2L1012.2 661.1L1013.4 662.5L1014.6 666.0L1015.9 664.4L1017.1 663.3L1018.3 663.1L1019.5 662.7L1020.8 660.5L1022.0 660.3L1023.2 658.6L1023.2 681.5L743.2 681.5Z" fill="#E0B400" fill-opacity="0.017"/><path d="M743.2 679.3L744.4 680.4L745.6 679.3L746.9 679.2L748.1 680.3L749.3 680.3L750.5 679.8L751.8 679.7L753.0 679.8L754.2 680.0L755.4 679.8L756.6 679.6L757.9 679.6L759.1 679.9L760.3 679.8L761.5 679.4L762.8 680.0L764.0 679.4L765.2 680.4L766.4 680.2L767.7 679.2L768.9 679.5L770.1 679.3L771.3 679.9L772.5 679.7L773.8 679.6L775.0 679.7L776.2 679.4L777.4 679.6L778.7 680.0L779.9 679.8L781.1 680.1L782.3 679.3L783.5 679.3L784.8 680.3L786.0 679.2L787.2 679.4L788.4 679.2L789.7 679.8L790.9 679.4L792.1 680.3L793.3 680.2L794.6 679.3L795.8 679.9L797.0 679.4L798.2 679.9L799.4 680.4L800.7 680.2L801.9 680.1L803.1 679.2L804.3 680.1L805.6 679.4L806.8 679.7L808.0 679.4L809.2 679.4L810.4 679.6L811.7 680.4L812.9 680.3L814.1 679.5L815.3 680.3L816.6 679.6L817.8 679.6L819.0 680.0L820.2 680.0L821.5 679.6L822.7 680.1L823.9 679.6L825.1 679.4L826.3 680.4L827.6 680.3L828.8 680.3L830.0 680.2L831.2 680.4L832.5 680.4L833.7 679.4L834.9 679.4L836.1 679.2L837.3 679.2L838.6 679.9L839.8 680.4L841.0 679.7L842.2 679.2L843.5 680.3L844.7 680.4L845.9 680.4L847.1 680.0L848.4 680.2L849.6 680.2L850.8 679.6L852.0 679.8L853.2 680.0L854.5 680.1L855.7 680.4L856.9 679.6L858.1 680.1L859.4 680.2L860.6 679.6L861.8 679.4L863.0 679.9L864.2 679.4L865.5 679.8L866.7 679.1L867.9 679.5L869.1 680.1L870.4 680.4L871.6 680.2L872.8 679.3L874.0 680.1L875.3 679.5L876.5 679.4L877.7 680.4L878.9 679.4L880.1 680.2L881.4 680.4L882.6 679.8L883.8 679.2L885.0 679.2L886.3 679.9L887.5 679.3L888.7 680.1L889.9 679.9L891.1 679.8L892.4 680.0L893.6 679.6L894.8 679.8L896.0 680.0L897.3 679.8L898.5 679.9L899.7 680.0L900.9 680.0L902.2 679.8L903.4 679.6L904.6 680.0L905.8 680.0L907.0 679.6L908.3 680.0L909.5 680.0L910.7 679.9L911.9 679.9L913.2 680.0L914.4 679.6L915.6 679.9L916.8 679.7L918.0 679.8L919.3 679.4L920.5 677.4L921.7 676.2L922.9 678.0L924.2 679.5L925.4 679.7L926.6 679.9L927.8 679.6L929.1 679.7L930.3 680.0L931.5 679.7L932.7 680.0L933.9 679.8L935.2 679.9L936.4 679.9L937.6 679.9L938.8 680.0L940.1 679.7L941.3 679.7L942.5 679.8L943.7 680.0L944.9 679.8L946.2 679.7L947.4 680.0L948.6 679.7L949.8 679.8L951.1 679.9L952.3 680.0L953.5 679.9L954.7 679.8L956.0 679.7L957.2 679.7L958.4 680.0L959.6 679.9L960.8 679.6L962.1 679.7L963.3 679.7L964.5 679.7L965.7 679.8L967.0 679.9L968.2 680.0L969.4 679.8L970.6 679.9L971.8 679.9L973.1 680.0L974.3 679.7L975.5 679.9L976.7 679.8L978.0 679.8L979.2 679.9L980.4 680.0L981.6 679.8L982.9 680.0L984.1 679.7L985.3 679.6L986.5 679.9L987.7 680.0L989.0 679.9L990.2 679.7L991.4 679.7L992.6 679.8L993.9 679.8L995.1 679.8L996.3 679.8L997.5 679.9L998.7 679.8L1000.0 679.9L1001.2 679.9L1002.4 679.6L1003.6 679.7L1004.9 679.8L1006.1 680.0L1007.3 679.7L1008.5 679.8L1009.8 680.0L1011.0 679.8L1012.2 679.7L1013.4 679.7L1014.6 679.7L1015.9 679.9L1017.1 679.8L1018.3 679.9L1019.5 680.0L1020.8 679.6L1022.0 679.8L1023.2 679.9L1023.2 681.5L743.2 681.5Z" fill="#56A64B" fill-opacity="0.006"/><path d="M743.2 665.7L744.4 659.2L745.6 661.7L746.9 658.1L748.1 661.7L749.3 655.4L750.5 668.0L751.8 664.1L753.0 665.4L754.2 665.8L755.4 659.4L756.6 668.2L757.9 668.3L759.1 650.0L760.3 661.0L761.5 663.9L762.8 649.2L764.0 663.3L765.2 660.6L766.4 661.3L767.7 663.3L768.9 656.3L770.1 657.9L771.3 661.9L772.5 662.0L773.8 665.4L775.0 660.2L776.2 663.3L777.4 657.4L778.7 667.1L779.9 663.2L781.1 661.7L782.3 663.3L783.5 657.6L784.8 663.3L786.0 655.8L787.2 666.0L788.4 659.2L789.7 663.4L790.9 660.2L792.1 662.6L793.3 663.8L794.6 650.4L795.8 658.1L797.0 660.3L798.2 664.8L799.4 661.6L800.7 664.6L801.9 664.4L803.1 661.7L804.3 659.1L805.6 663.1L806.8 664.5L808.0 662.5L809.2 660.1L810.4 661.6L811.7 664.6L812.9 661.3L814.1 663.0L815.3 660.7L816.6 662.9L817.8 649.5L819.0 660.1L820.2 661.6L821.5 661.4L822.7 662.7L823.9 665.1L825.1 661.6L826.3 663.7L827.6 661.8L828.8 659.7L830.0 664.5L831.2 662.3L832.5 662.4L833.7 665.4L834.9 662.8L836.1 656.6L837.3 661.6L838.6 663.6L839.8 659.0L841.0 664.8L842.2 666.1L843.5 660.2L844.7 666.6L845.9 659.0L847.1 661.7L848.4 655.2L849.6 659.7L850.8 661.2L852.0 660.4L853.2 664.8L854.5 658.7L855.7 658.2L856.9 659.1L858.1 662.4L859.4 660.9L860.6 659.7L861.8 662.2L863.0 659.5L864.2 664.8L865.5 665.8L866.7 662.9L867.9 655.8L869.1 659.6L870.4 660.8L871.6 666.1L872.8 661.6L874.0 661.2L875.3 655.4L876.5 667.6L877.7 659.5L878.9 656.2L880.1 664.6L881.4 659.5L882.6 661.8L883.8 660.1L885.0 663.2L886.3 662.9L887.5 663.0L888.7 662.6L889.9 660.7L891.1 663.3L892.4 661.7L893.6 662.6L894.8 662.4L896.0 661.3L897.3 661.9L898.5 660.9L899.7 655.9L900.9 668.5L902.2 660.7L903.4 660.5L904.6 660.5L905.8 663.1L907.0 662.4L908.3 661.9L909.5 660.3L910.7 665.4L911.9 656.9L913.2 660.1L914.4 662.6L915.6 663.6L916.8 660.1L918.0 663.6L919.3 659.5L919.5 657.9L921.5 544.4L923.5 666.1L924.2 659.7L925.4 655.4L926.6 660.5L927.8 664.6L929.1 652.4L930.3 653.9L931.5 666.9L932.7 659.8L933.9 665.5L935.2 662.6L936.4 662.6L937.6 661.6L938.8 667.7L940.1 660.3L941.3 664.1L942.5 664.0L943.7 663.6L944.9 659.3L946.2 666.2L947.4 663.3L948.6 664.4L949.8 660.4L951.1 667.8L952.3 662.2L953.5 660.8L954.7 662.0L956.0 666.1L957.2 662.8L958.4 657.6L959.6 659.1L960.8 662.7L962.1 662.9L963.3 664.8L964.5 662.8L965.7 661.9L967.0 660.0L968.2 661.8L969.4 662.4L970.6 663.0L971.8 659.0L973.1 665.6L974.3 660.9L975.5 663.7L976.7 661.5L978.0 657.2L979.2 650.0L980.4 663.2L981.6 655.9L982.9 661.2L984.1 660.8L985.3 665.6L986.5 662.2L987.7 660.5L989.0 650.4L990.2 659.3L991.4 661.4L992.6 659.7L993.9 666.1L995.1 662.1L996.3 664.6L997.5 661.1L998.7 667.3L1000.0 665.8L1001.2 658.9L1002.4 657.9L1003.6 661.9L1004.9 664.0L1006.1 663.8L1007.3 662.6L1008.5 662.9L1009.8 662.3L1011.0 653.2L1012.2 661.1L1013.4 662.5L1014.6 666.0L1015.9 664.4L1017.1 663.3L1018.3 663.1L1019.5 662.7L1020.8 660.5L1022.0 660.3L1023.2 658.6" fill="none" stroke="#E0B400" stroke-width="1.1" stroke-linejoin="round"/><path d="M743.2 679.3L744.4 680.4L745.6 679.3L746.9 679.2L748.1 680.3L749.3 680.3L750.5 679.8L751.8 679.7L753.0 679.8L754.2 680.0L755.4 679.8L756.6 679.6L757.9 679.6L759.1 679.9L760.3 679.8L761.5 679.4L762.8 680.0L764.0 679.4L765.2 680.4L766.4 680.2L767.7 679.2L768.9 679.5L770.1 679.3L771.3 679.9L772.5 679.7L773.8 679.6L775.0 679.7L776.2 679.4L777.4 679.6L778.7 680.0L779.9 679.8L781.1 680.1L782.3 679.3L783.5 679.3L784.8 680.3L786.0 679.2L787.2 679.4L788.4 679.2L789.7 679.8L790.9 679.4L792.1 680.3L793.3 680.2L794.6 679.3L795.8 679.9L797.0 679.4L798.2 679.9L799.4 680.4L800.7 680.2L801.9 680.1L803.1 679.2L804.3 680.1L805.6 679.4L806.8 679.7L808.0 679.4L809.2 679.4L810.4 679.6L811.7 680.4L812.9 680.3L814.1 679.5L815.3 680.3L816.6 679.6L817.8 679.6L819.0 680.0L820.2 680.0L821.5 679.6L822.7 680.1L823.9 679.6L825.1 679.4L826.3 680.4L827.6 680.3L828.8 680.3L830.0 680.2L831.2 680.4L832.5 680.4L833.7 679.4L834.9 679.4L836.1 679.2L837.3 679.2L838.6 679.9L839.8 680.4L841.0 679.7L842.2 679.2L843.5 680.3L844.7 680.4L845.9 680.4L847.1 680.0L848.4 680.2L849.6 680.2L850.8 679.6L852.0 679.8L853.2 680.0L854.5 680.1L855.7 680.4L856.9 679.6L858.1 680.1L859.4 680.2L860.6 679.6L861.8 679.4L863.0 679.9L864.2 679.4L865.5 679.8L866.7 679.1L867.9 679.5L869.1 680.1L870.4 680.4L871.6 680.2L872.8 679.3L874.0 680.1L875.3 679.5L876.5 679.4L877.7 680.4L878.9 679.4L880.1 680.2L881.4 680.4L882.6 679.8L883.8 679.2L885.0 679.2L886.3 679.9L887.5 679.3L888.7 680.1L889.9 679.9L891.1 679.8L892.4 680.0L893.6 679.6L894.8 679.8L896.0 680.0L897.3 679.8L898.5 679.9L899.7 680.0L900.9 680.0L902.2 679.8L903.4 679.6L904.6 680.0L905.8 680.0L907.0 679.6L908.3 680.0L909.5 680.0L910.7 679.9L911.9 679.9L913.2 680.0L914.4 679.6L915.6 679.9L916.8 679.7L918.0 679.8L919.3 679.4L920.5 677.4L921.7 676.2L922.9 678.0L924.2 679.5L925.4 679.7L926.6 679.9L927.8 679.6L929.1 679.7L930.3 680.0L931.5 679.7L932.7 680.0L933.9 679.8L935.2 679.9L936.4 679.9L937.6 679.9L938.8 680.0L940.1 679.7L941.3 679.7L942.5 679.8L943.7 680.0L944.9 679.8L946.2 679.7L947.4 680.0L948.6 679.7L949.8 679.8L951.1 679.9L952.3 680.0L953.5 679.9L954.7 679.8L956.0 679.7L957.2 679.7L958.4 680.0L959.6 679.9L960.8 679.6L962.1 679.7L963.3 679.7L964.5 679.7L965.7 679.8L967.0 679.9L968.2 680.0L969.4 679.8L970.6 679.9L971.8 679.9L973.1 680.0L974.3 679.7L975.5 679.9L976.7 679.8L978.0 679.8L979.2 679.9L980.4 680.0L981.6 679.8L982.9 680.0L984.1 679.7L985.3 679.6L986.5 679.9L987.7 680.0L989.0 679.9L990.2 679.7L991.4 679.7L992.6 679.8L993.9 679.8L995.1 679.8L996.3 679.8L997.5 679.9L998.7 679.8L1000.0 679.9L1001.2 679.9L1002.4 679.6L1003.6 679.7L1004.9 679.8L1006.1 680.0L1007.3 679.7L1008.5 679.8L1009.8 680.0L1011.0 679.8L1012.2 679.7L1013.4 679.7L1014.6 679.7L1015.9 679.9L1017.1 679.8L1018.3 679.9L1019.5 680.0L1020.8 679.6L1022.0 679.8L1023.2 679.9" fill="none" stroke="#56A64B" stroke-width="1.1" stroke-linejoin="round"/></svg>
<div class="sw" style="left:717.6px;top:716.0px;background:#56A64B"></div><span class="t" style="left:739.60px;top:710.80px;font-size:12px;color:#2b3035;letter-spacing:0.670px;">avg</span>
<div class="sw" style="left:770.2px;top:716.0px;background:#E0B400"></div><span class="t" style="left:792.20px;top:710.80px;font-size:12px;color:#2b3035;letter-spacing:0.649px;">highest</span>
<svg class="abs" style="left:0;top:0" width="1400" height="1000" shape-rendering="crispEdges"><path d="M762.5 831.3V990.5" stroke="rgba(36,41,46,0.1)" stroke-width="1"/><path d="M832.5 831.3V990.5" stroke="rgba(36,41,46,0.1)" stroke-width="1"/><path d="M902.5 831.3V990.5" stroke="rgba(36,41,46,0.1)" stroke-width="1"/><path d="M972.5 831.3V990.5" stroke="rgba(36,41,46,0.1)" stroke-width="1"/><path d="M743.2 985.5H1023.2" stroke="rgba(36,41,46,0.1)" stroke-width="1"/><path d="M743.2 953.5H1023.2" stroke="rgba(36,41,46,0.1)" stroke-width="1"/><path d="M743.2 921.5H1023.2" stroke="rgba(36,41,46,0.1)" stroke-width="1"/><path d="M743.2 889.5H1023.2" stroke="rgba(36,41,46,0.1)" stroke-width="1"/><path d="M743.2 857.5H1023.2" stroke="rgba(36,41,46,0.1)" stroke-width="1"/></svg><span class="t" style="left:747.00px;top:995.00px;font-size:12px;color:#2b3035;letter-spacing:-0.008px;">17:30</span><span class="t" style="left:817.13px;top:995.00px;font-size:12px;color:#2b3035;letter-spacing:-0.008px;">17:45</span><span class="t" style="left:887.26px;top:995.00px;font-size:12px;color:#2b3035;letter-spacing:-0.008px;">18:00</span><span class="t" style="left:957.39px;top:995.00px;font-size:12px;color:#2b3035;letter-spacing:-0.008px;">18:15</span><span class="t" style="left:730.51px;top:978.90px;font-size:12px;color:#2b3035;">0</span><span class="t" style="left:722.60px;top:946.90px;font-size:12px;color:#2b3035;letter-spacing:1.241px;">25</span><span class="t" style="left:722.60px;top:914.90px;font-size:12px;color:#2b3035;letter-spacing:1.241px;">50</span><span class="t" style="left:723.00px;top:882.90px;font-size:12px;color:#2b3035;letter-spacing:0.841px;">75</span><span class="t" style="left:716.60px;top:850.90px;font-size:12px;color:#2b3035;letter-spacing:0.284px;">100</span>
<svg class="abs" style="left:0;top:0" width="1400" height="1000"><path d="M743.2 936.7L744.3 899.4L745.8 931.4L747.3 889.9L748.6 936.0L749.6 908.1L751.1 899.4L752.4 925.5L753.9 943.7L756.1 908.1L757.1 944.2L758.4 889.9L759.9 902.2L761.4 931.4L763.2 906.4L765.1 911.6L767.2 946.5L770.0 915.1L771.5 934.9L772.6 913.9L774.3 936.7L775.4 910.4L776.5 947.7L778.0 920.9L779.5 898.3L781.4 953.1L782.9 915.1L784.4 873.5L785.9 927.9L788.3 948.9L789.3 910.4L790.4 944.2L792.3 896.4L793.6 909.2L795.3 942.3L796.4 863.7L797.9 920.9L799.4 939.5L800.7 911.6L802.2 915.1L803.5 898.3L805.0 917.4L806.1 916.2L807.4 899.9L809.3 961.7L810.8 943.0L811.9 942.3L812.9 925.1L814.6 920.9L816.4 929.0L817.7 938.4L819.4 940.7L821.1 920.9L823.2 948.9L824.7 930.2L826.2 887.8L828.0 936.7L830.1 938.6L831.6 896.4L832.9 934.9L835.5 920.4L837.0 941.9L838.7 933.7L840.4 936.0L841.5 920.4L843.0 934.9L844.0 930.2L845.5 953.1L847.3 937.2L848.5 906.2L850.5 934.9L852.2 944.2L854.3 902.9L855.8 936.0L856.9 915.1L858.4 923.2L859.5 912.7L860.6 925.5L861.4 896.4L862.5 926.7L863.4 898.7L865.5 898.7L866.6 950.7L868.3 897.6L869.4 925.5L870.9 945.4L872.6 905.0L874.3 944.2L875.4 903.4L877.3 925.5L878.4 934.9L879.9 937.2L881.2 943.0L882.4 908.8L884.8 947.7L885.9 934.9L887.6 908.1L888.7 932.5L889.7 918.6L890.6 927.9L891.7 907.4L893.4 938.4L894.9 939.5L896.4 889.9L897.7 953.1L898.8 922.0L900.3 930.2L901.3 926.7L902.4 944.2L903.9 934.9L905.2 938.4L906.3 926.7L907.8 938.4L909.5 899.9L910.3 898.3L911.6 948.9L913.8 933.7L915.5 900.6L917.4 955.2L918.5 845.1L919.6 905.7L921.5 913.7L922.6 933.7L923.2 908.1L924.5 910.4L925.8 950.7L927.1 923.2L928.4 915.1L929.7 851.6L930.7 936.7L932.2 919.3L933.7 934.9L935.4 958.7L936.9 919.3L939.1 941.9L941.0 925.5L942.5 916.7L944.5 958.7L946.0 937.9L947.7 940.7L949.6 947.7L951.3 906.4L952.4 906.4L954.1 943.0L955.8 918.6L957.3 886.6L959.3 938.4L961.0 901.1L961.8 897.6L963.6 939.5L964.8 923.2L966.3 911.6L967.4 937.2L969.1 919.7L970.2 925.5L971.7 911.6L973.2 936.7L975.6 874.7L977.7 947.7L979.0 913.9L980.5 886.6L982.4 926.7L983.9 930.2L985.7 902.9L986.7 933.7L988.4 867.2L990.4 939.5L992.7 954.0L993.8 913.9L994.7 915.8L996.0 940.7L998.5 894.1L1000.7 938.4L1002.2 925.5L1003.5 920.4L1005.6 942.3L1007.1 932.5L1008.6 904.6L1010.3 939.1L1012.7 857.2L1014.0 916.2L1015.5 946.5L1017.8 910.4L1019.3 905.7L1020.6 941.4L1022.8 897.6L1022.8 985.5L743.2 985.5Z" fill="#E0B400" fill-opacity="0.017"/><path d="M743.2 985.5L745.6 985.5L747.9 985.5L750.3 985.5L752.6 985.5L755.0 985.5L757.3 985.5L759.7 985.5L762.0 985.5L764.4 985.5L766.7 985.5L769.1 985.5L771.4 985.5L773.8 985.5L776.1 985.5L778.5 985.5L780.8 985.5L783.2 984.6L785.6 985.5L787.9 985.5L790.3 985.5L792.6 985.5L795.0 985.5L797.3 985.5L799.7 985.5L802.0 985.5L804.4 985.5L806.7 985.5L809.1 985.5L811.4 985.5L813.8 985.5L816.1 985.5L818.5 985.5L820.8 985.5L823.2 985.5L825.6 985.5L827.9 985.5L830.3 985.5L832.6 985.5L835.0 985.5L837.3 985.5L839.7 985.5L842.0 985.5L844.4 985.5L846.7 985.5L849.1 985.5L851.4 985.5L853.8 985.5L856.1 985.5L858.5 985.5L860.8 985.5L863.2 985.5L865.6 985.5L867.9 985.5L870.3 985.5L872.6 985.5L875.0 985.5L877.3 985.5L879.7 985.5L882.0 985.5L884.4 985.5L886.7 985.5L889.1 985.5L891.4 985.5L893.8 985.5L896.1 985.5L898.5 985.5L900.8 985.5L903.2 985.5L905.6 985.5L907.9 985.5L910.3 985.5L912.6 985.5L915.0 985.5L917.3 985.5L919.7 984.6L922.0 985.5L924.4 985.5L926.7 985.5L929.1 985.5L931.4 985.5L933.8 985.5L936.1 985.5L938.5 985.5L940.8 985.5L943.2 985.5L945.6 985.5L947.9 985.5L950.3 985.5L952.6 985.5L955.0 985.5L957.3 985.5L959.7 985.5L962.0 985.5L964.4 985.5L966.7 985.5L969.1 985.5L971.4 985.5L973.8 985.5L976.1 985.5L978.5 985.5L980.8 985.5L983.2 985.5L985.6 985.5L987.9 985.5L990.3 985.5L992.6 985.5L995.0 985.5L997.3 985.5L999.7 985.5L1002.0 985.5L1004.4 985.5L1006.7 985.5L1009.1 985.5L1011.4 985.5L1013.8 985.5L1016.1 985.5L1018.5 985.5L1020.8 985.5L1023.2 985.5L1023.2 985.5L743.2 985.5Z" fill="#56A64B" fill-opacity="0.006"/><path d="M743.2 936.7L744.3 899.4L745.8 931.4L747.3 889.9L748.6 936.0L749.6 908.1L751.1 899.4L752.4 925.5L753.9 943.7L756.1 908.1L757.1 944.2L758.4 889.9L759.9 902.2L761.4 931.4L763.2 906.4L765.1 911.6L767.2 946.5L770.0 915.1L771.5 934.9L772.6 913.9L774.3 936.7L775.4 910.4L776.5 947.7L778.0 920.9L779.5 898.3L781.4 953.1L782.9 915.1L784.4 873.5L785.9 927.9L788.3 948.9L789.3 910.4L790.4 944.2L792.3 896.4L793.6 909.2L795.3 942.3L796.4 863.7L797.9 920.9L799.4 939.5L800.7 911.6L802.2 915.1L803.5 898.3L805.0 917.4L806.1 916.2L807.4 899.9L809.3 961.7L810.8 943.0L811.9 942.3L812.9 925.1L814.6 920.9L816.4 929.0L817.7 938.4L819.4 940.7L821.1 920.9L823.2 948.9L824.7 930.2L826.2 887.8L828.0 936.7L830.1 938.6L831.6 896.4L832.9 934.9L835.5 920.4L837.0 941.9L838.7 933.7L840.4 936.0L841.5 920.4L843.0 934.9L844.0 930.2L845.5 953.1L847.3 937.2L848.5 906.2L850.5 934.9L852.2 944.2L854.3 902.9L855.8 936.0L856.9 915.1L858.4 923.2L859.5 912.7L860.6 925.5L861.4 896.4L862.5 926.7L863.4 898.7L865.5 898.7L866.6 950.7L868.3 897.6L869.4 925.5L870.9 945.4L872.6 905.0L874.3 944.2L875.4 903.4L877.3 925.5L878.4 934.9L879.9 937.2L881.2 943.0L882.4 908.8L884.8 947.7L885.9 934.9L887.6 908.1L888.7 932.5L889.7 918.6L890.6 927.9L891.7 907.4L893.4 938.4L894.9 939.5L896.4 889.9L897.7 953.1L898.8 922.0L900.3 930.2L901.3 926.7L902.4 944.2L903.9 934.9L905.2 938.4L906.3 926.7L907.8 938.4L909.5 899.9L910.3 898.3L911.6 948.9L913.8 933.7L915.5 900.6L917.4 955.2L918.5 845.1L919.6 905.7L921.5 913.7L922.6 933.7L923.2 908.1L924.5 910.4L925.8 950.7L927.1 923.2L928.4 915.1L929.7 851.6L930.7 936.7L932.2 919.3L933.7 934.9L935.4 958.7L936.9 919.3L939.1 941.9L941.0 925.5L942.5 916.7L944.5 958.7L946.0 937.9L947.7 940.7L949.6 947.7L951.3 906.4L952.4 906.4L954.1 943.0L955.8 918.6L957.3 886.6L959.3 938.4L961.0 901.1L961.8 897.6L963.6 939.5L964.8 923.2L966.3 911.6L967.4 937.2L969.1 919.7L970.2 925.5L971.7 911.6L973.2 936.7L975.6 874.7L977.7 947.7L979.0 913.9L980.5 886.6L982.4 926.7L983.9 930.2L985.7 902.9L986.7 933.7L988.4 867.2L990.4 939.5L992.7 954.0L993.8 913.9L994.7 915.8L996.0 940.7L998.5 894.1L1000.7 938.4L1002.2 925.5L1003.5 920.4L1005.6 942.3L1007.1 932.5L1008.6 904.6L1010.3 939.1L1012.7 857.2L1014.0 916.2L1015.5 946.5L1017.8 910.4L1019.3 905.7L1020.6 941.4L1022.8 897.6" fill="none" stroke="#E0B400" stroke-width="1.1" stroke-linejoin="round"/><path d="M743.2 985.5L745.6 985.5L747.9 985.5L750.3 985.5L752.6 985.5L755.0 985.5L757.3 985.5L759.7 985.5L762.0 985.5L764.4 985.5L766.7 985.5L769.1 985.5L771.4 985.5L773.8 985.5L776.1 985.5L778.5 985.5L780.8 985.5L783.2 984.6L785.6 985.5L787.9 985.5L790.3 985.5L792.6 985.5L795.0 985.5L797.3 985.5L799.7 985.5L802.0 985.5L804.4 985.5L806.7 985.5L809.1 985.5L811.4 985.5L813.8 985.5L816.1 985.5L818.5 985.5L820.8 985.5L823.2 985.5L825.6 985.5L827.9 985.5L830.3 985.5L832.6 985.5L835.0 985.5L837.3 985.5L839.7 985.5L842.0 985.5L844.4 985.5L846.7 985.5L849.1 985.5L851.4 985.5L853.8 985.5L856.1 985.5L858.5 985.5L860.8 985.5L863.2 985.5L865.6 985.5L867.9 985.5L870.3 985.5L872.6 985.5L875.0 985.5L877.3 985.5L879.7 985.5L882.0 985.5L884.4 985.5L886.7 985.5L889.1 985.5L891.4 985.5L893.8 985.5L896.1 985.5L898.5 985.5L900.8 985.5L903.2 985.5L905.6 985.5L907.9 985.5L910.3 985.5L912.6 985.5L915.0 985.5L917.3 985.5L919.7 984.6L922.0 985.5L924.4 985.5L926.7 985.5L929.1 985.5L931.4 985.5L933.8 985.5L936.1 985.5L938.5 985.5L940.8 985.5L943.2 985.5L945.6 985.5L947.9 985.5L950.3 985.5L952.6 985.5L955.0 985.5L957.3 985.5L959.7 985.5L962.0 985.5L964.4 985.5L966.7 985.5L969.1 985.5L971.4 985.5L973.8 985.5L976.1 985.5L978.5 985.5L980.8 985.5L983.2 985.5L985.6 985.5L987.9 985.5L990.3 985.5L992.6 985.5L995.0 985.5L997.3 985.5L999.7 985.5L1002.0 985.5L1004.4 985.5L1006.7 985.5L1009.1 985.5L1011.4 985.5L1013.8 985.5L1016.1 985.5L1018.5 985.5L1020.8 985.5L1023.2 985.5" fill="none" stroke="#56A64B" stroke-width="1.1" stroke-linejoin="round"/></svg>
<div class="sw" style="left:717.6px;top:1020.0px;background:#56A64B"></div><span class="t" style="left:739.60px;top:1014.80px;font-size:12px;color:#2b3035;letter-spacing:0.670px;">avg</span>
<div class="sw" style="left:770.2px;top:1020.0px;background:#E0B400"></div><span class="t" style="left:792.20px;top:1014.80px;font-size:12px;color:#2b3035;letter-spacing:0.649px;">highest</span>
<svg class="abs" style="left:0;top:0" width="1400" height="1000" shape-rendering="crispEdges"><path d="M1108.5 223.3V383.3" stroke="rgba(36,41,46,0.1)" stroke-width="1"/><path d="M1177.5 223.3V383.3" stroke="rgba(36,41,46,0.1)" stroke-width="1"/><path d="M1247.5 223.3V383.3" stroke="rgba(36,41,46,0.1)" stroke-width="1"/><path d="M1316.5 223.3V383.3" stroke="rgba(36,41,46,0.1)" stroke-width="1"/><path d="M1089.3 378.5H1367.3" stroke="rgba(36,41,46,0.1)" stroke-width="1"/><path d="M1089.3 343.5H1367.3" stroke="rgba(36,41,46,0.1)" stroke-width="1"/><path d="M1089.3 307.5H1367.3" stroke="rgba(36,41,46,0.1)" stroke-width="1"/><path d="M1089.3 272.5H1367.3" stroke="rgba(36,41,46,0.1)" stroke-width="1"/><path d="M1089.3 237.5H1367.3" stroke="rgba(36,41,46,0.1)" stroke-width="1"/></svg><span class="t" style="left:1093.00px;top:387.00px;font-size:12px;color:#2b3035;letter-spacing:-0.008px;">17:30</span><span class="t" style="left:1162.37px;top:387.00px;font-size:12px;color:#2b3035;letter-spacing:-0.008px;">17:45</span><span class="t" style="left:1231.74px;top:387.00px;font-size:12px;color:#2b3035;letter-spacing:-0.008px;">18:00</span><span class="t" style="left:1301.11px;top:387.00px;font-size:12px;color:#2b3035;letter-spacing:-0.008px;">18:15</span><span class="t" style="left:1077.01px;top:371.90px;font-size:12px;color:#2b3035;">0</span><span class="t" style="left:1069.10px;top:336.90px;font-size:12px;color:#2b3035;letter-spacing:1.241px;">50</span><span class="t" style="left:1063.10px;top:300.90px;font-size:12px;color:#2b3035;letter-spacing:0.284px;">100</span><span class="t" style="left:1062.90px;top:265.90px;font-size:12px;color:#2b3035;letter-spacing:0.384px;">150</span><span class="t" style="left:1061.70px;top:230.90px;font-size:12px;color:#2b3035;letter-spacing:0.984px;">200</span>
<svg class="abs" style="left:0;top:0" width="1400" height="1000"><path d="M1089.3 320.1L1093.6 321.2L1103.2 321.2L1105.4 320.5L1109.7 323.3L1118.2 324.8L1122.5 324.4L1127.9 326.1L1133.2 325.5L1141.8 327.2L1150.4 326.5L1156.8 328.0L1163.2 327.2L1169.7 327.6L1178.3 330.2L1184.7 328.7L1191.1 330.8L1197.5 332.3L1204.0 332.5L1212.5 332.5L1217.3 333.4L1220.0 328.7L1223.3 328.2L1226.5 322.2L1228.6 320.5L1234.0 320.5L1240.4 321.2L1246.8 320.5L1255.4 321.2L1263.6 321.2L1265.1 309.4L1267.2 304.7L1269.3 304.7L1272.6 308.3L1275.3 318.0L1276.4 324.4L1286.5 324.4L1291.9 326.5L1298.3 327.6L1306.9 328.7L1315.4 327.2L1319.7 328.2L1328.3 329.7L1334.7 330.8L1341.2 332.3L1349.7 332.5L1356.2 334.0L1360.4 335.1L1363.7 334.0L1367.3 332.3L1367.3 378.3L1089.3 378.3Z" fill="#56A64B" fill-opacity="0.006"/><path d="M1089.3 308.3L1092.5 309.8L1096.8 310.5L1100.0 312.0L1102.2 309.4L1107.5 310.0L1113.9 311.5L1120.4 310.9L1124.7 309.4L1127.9 310.0L1132.2 308.3L1137.5 308.3L1142.9 308.8L1147.2 304.7L1150.4 305.1L1153.6 305.1L1156.8 307.3L1161.1 303.4L1165.4 303.0L1167.5 304.7L1169.7 302.3L1172.9 302.3L1176.1 305.1L1179.3 309.4L1181.5 310.5L1183.0 304.1L1185.8 301.5L1189.0 302.3L1191.1 303.0L1192.6 308.3L1195.4 308.5L1204.0 308.5L1212.5 308.3L1216.8 310.0L1223.3 309.4L1229.7 311.1L1234.0 311.1L1238.3 312.0L1241.5 311.1L1243.6 312.2L1251.1 312.2L1255.4 310.9L1259.7 311.5L1262.9 310.5L1264.4 279.5L1265.7 243.1L1267.2 241.4L1270.4 240.9L1272.6 244.1L1275.3 248.4L1276.2 279.5L1276.8 314.8L1280.1 312.0L1284.4 310.5L1288.6 312.6L1292.9 313.7L1298.3 312.6L1304.7 313.3L1311.1 312.6L1314.4 309.4L1316.5 308.3L1319.7 310.5L1324.0 311.1L1327.2 310.5L1330.4 312.0L1334.7 312.6L1339.0 311.5L1343.3 312.6L1348.7 312.6L1350.2 314.8L1351.9 312.6L1354.0 315.2L1358.3 315.8L1360.4 317.3L1362.6 315.8L1364.7 312.6L1367.3 308.8L1367.3 378.3L1089.3 378.3Z" fill="#E0B400" fill-opacity="0.017"/><path d="M1089.3 320.1L1093.6 321.2L1103.2 321.2L1105.4 320.5L1109.7 323.3L1118.2 324.8L1122.5 324.4L1127.9 326.1L1133.2 325.5L1141.8 327.2L1150.4 326.5L1156.8 328.0L1163.2 327.2L1169.7 327.6L1178.3 330.2L1184.7 328.7L1191.1 330.8L1197.5 332.3L1204.0 332.5L1212.5 332.5L1217.3 333.4L1220.0 328.7L1223.3 328.2L1226.5 322.2L1228.6 320.5L1234.0 320.5L1240.4 321.2L1246.8 320.5L1255.4 321.2L1263.6 321.2L1265.1 309.4L1267.2 304.7L1269.3 304.7L1272.6 308.3L1275.3 318.0L1276.4 324.4L1286.5 324.4L1291.9 326.5L1298.3 327.6L1306.9 328.7L1315.4 327.2L1319.7 328.2L1328.3 329.7L1334.7 330.8L1341.2 332.3L1349.7 332.5L1356.2 334.0L1360.4 335.1L1363.7 334.0L1367.3 332.3" fill="none" stroke="#56A64B" stroke-width="1.1" stroke-linejoin="round"/><path d="M1089.3 308.3L1092.5 309.8L1096.8 310.5L1100.0 312.0L1102.2 309.4L1107.5 310.0L1113.9 311.5L1120.4 310.9L1124.7 309.4L1127.9 310.0L1132.2 308.3L1137.5 308.3L1142.9 308.8L1147.2 304.7L1150.4 305.1L1153.6 305.1L1156.8 307.3L1161.1 303.4L1165.4 303.0L1167.5 304.7L1169.7 302.3L1172.9 302.3L1176.1 305.1L1179.3 309.4L1181.5 310.5L1183.0 304.1L1185.8 301.5L1189.0 302.3L1191.1 303.0L1192.6 308.3L1195.4 308.5L1204.0 308.5L1212.5 308.3L1216.8 310.0L1223.3 309.4L1229.7 311.1L1234.0 311.1L1238.3 312.0L1241.5 311.1L1243.6 312.2L1251.1 312.2L1255.4 310.9L1259.7 311.5L1262.9 310.5L1264.4 279.5L1265.7 243.1L1267.2 241.4L1270.4 240.9L1272.6 244.1L1275.3 248.4L1276.2 279.5L1276.8 314.8L1280.1 312.0L1284.4 310.5L1288.6 312.6L1292.9 313.7L1298.3 312.6L1304.7 313.3L1311.1 312.6L1314.4 309.4L1316.5 308.3L1319.7 310.5L1324.0 311.1L1327.2 310.5L1330.4 312.0L1334.7 312.6L1339.0 311.5L1343.3 312.6L1348.7 312.6L1350.2 314.8L1351.9 312.6L1354.0 315.2L1358.3 315.8L1360.4 317.3L1362.6 315.8L1364.7 312.6L1367.3 308.8" fill="none" stroke="#E0B400" stroke-width="1.1" stroke-linejoin="round"/><path d="M1089.3 378.5L1367.3 378.5" fill="none" stroke="#5794F2" stroke-width="1.0" stroke-linejoin="round"/></svg>
<div class="sw" style="left:1061.6px;top:412.0px;background:#56A64B"></div><span class="t" style="left:1083.60px;top:406.80px;font-size:12px;color:#2b3035;letter-spacing:0.670px;">avg</span>
<div class="sw" style="left:1114.2px;top:412.0px;background:#E0B400"></div><span class="t" style="left:1136.20px;top:406.80px;font-size:12px;color:#2b3035;letter-spacing:0.649px;">highest</span>
<div class="sw" style="left:1188.4px;top:412.0px;background:#5794F2"></div><span class="t" style="left:1210.40px;top:406.80px;font-size:12px;color:#2b3035;letter-spacing:0.543px;">limit</span>
<svg class="abs" style="left:0;top:0" width="1400" height="1000" shape-rendering="crispEdges"><path d="M1108.5 527.3V687.3" stroke="rgba(36,41,46,0.1)" stroke-width="1"/><path d="M1177.5 527.3V687.3" stroke="rgba(36,41,46,0.1)" stroke-width="1"/><path d="M1247.5 527.3V687.3" stroke="rgba(36,41,46,0.1)" stroke-width="1"/><path d="M1316.5 527.3V687.3" stroke="rgba(36,41,46,0.1)" stroke-width="1"/><path d="M1089.3 682.5H1367.3" stroke="rgba(36,41,46,0.1)" stroke-width="1"/><path d="M1089.3 647.5H1367.3" stroke="rgba(36,41,46,0.1)" stroke-width="1"/><path d="M1089.3 611.5H1367.3" stroke="rgba(36,41,46,0.1)" stroke-width="1"/><path d="M1089.3 576.5H1367.3" stroke="rgba(36,41,46,0.1)" stroke-width="1"/><path d="M1089.3 541.5H1367.3" stroke="rgba(36,41,46,0.1)" stroke-width="1"/></svg><span class="t" style="left:1093.00px;top:691.00px;font-size:12px;color:#2b3035;letter-spacing:-0.008px;">17:30</span><span class="t" style="left:1162.37px;top:691.00px;font-size:12px;color:#2b3035;letter-spacing:-0.008px;">17:45</span><span class="t" style="left:1231.74px;top:691.00px;font-size:12px;color:#2b3035;letter-spacing:-0.008px;">18:00</span><span class="t" style="left:1301.11px;top:691.00px;font-size:12px;color:#2b3035;letter-spacing:-0.008px;">18:15</span><span class="t" style="left:1077.01px;top:675.90px;font-size:12px;color:#2b3035;">0</span><span class="t" style="left:1069.10px;top:640.90px;font-size:12px;color:#2b3035;letter-spacing:1.241px;">50</span><span class="t" style="left:1063.10px;top:604.90px;font-size:12px;color:#2b3035;letter-spacing:0.284px;">100</span><span class="t" style="left:1062.90px;top:569.90px;font-size:12px;color:#2b3035;letter-spacing:0.384px;">150</span><span class="t" style="left:1061.70px;top:534.90px;font-size:12px;color:#2b3035;letter-spacing:0.984px;">200</span>
<svg class="abs" style="left:0;top:0" width="1400" height="1000"><path d="M1089.3 614.4L1092.5 615.9L1096.8 616.6L1100.0 618.1L1102.2 615.5L1107.5 616.2L1113.9 617.7L1120.4 617.0L1124.7 615.5L1127.9 616.2L1132.2 614.4L1137.5 614.4L1142.9 614.9L1147.2 610.8L1150.4 611.2L1153.6 611.2L1156.8 613.4L1161.1 609.5L1165.4 609.1L1167.5 610.8L1169.7 608.5L1172.9 608.5L1176.1 611.2L1179.3 615.5L1181.5 616.6L1183.0 610.2L1185.8 607.6L1189.0 608.5L1191.1 609.1L1192.6 614.4L1195.4 614.7L1204.0 614.7L1212.5 614.4L1216.8 616.2L1223.3 615.5L1229.7 617.2L1234.0 617.2L1238.3 618.1L1241.5 617.2L1243.6 618.3L1251.1 618.3L1255.4 617.0L1259.7 617.7L1262.9 616.6L1264.4 603.3L1265.7 575.1L1267.2 575.1L1270.4 575.1L1272.6 575.1L1275.3 575.1L1276.2 603.3L1276.8 620.9L1280.1 618.1L1284.4 616.6L1288.6 618.7L1292.9 619.8L1298.3 618.7L1304.7 619.4L1311.1 618.7L1314.4 615.5L1316.5 614.4L1319.7 616.6L1324.0 617.2L1327.2 616.6L1330.4 618.1L1334.7 618.7L1339.0 617.7L1343.3 618.7L1348.7 618.7L1350.2 620.9L1351.9 618.7L1354.0 621.3L1358.3 621.9L1360.4 623.4L1362.6 621.9L1364.7 618.7L1367.3 614.9L1367.3 682.3L1089.3 682.3Z" fill="#56A64B" fill-opacity="0.006"/><path d="M1089.3 612.3L1092.5 613.8L1096.8 614.5L1100.0 616.0L1102.2 613.4L1107.5 614.0L1113.9 615.5L1120.4 614.9L1124.7 613.4L1127.9 614.0L1132.2 612.3L1137.5 612.3L1142.9 612.8L1147.2 608.7L1150.4 609.1L1153.6 609.1L1156.8 611.3L1161.1 607.4L1165.4 607.0L1167.5 608.7L1169.7 606.3L1172.9 606.3L1176.1 609.1L1179.3 613.4L1181.5 614.5L1183.0 608.1L1185.8 605.5L1189.0 606.3L1191.1 607.0L1192.6 612.3L1195.4 612.5L1204.0 612.5L1212.5 612.3L1216.8 614.0L1223.3 613.4L1229.7 615.1L1234.0 615.1L1238.3 616.0L1241.5 615.1L1243.6 616.2L1251.1 616.2L1255.4 614.9L1259.7 615.5L1262.9 614.5L1264.4 583.5L1265.7 547.1L1267.2 545.4L1270.4 544.9L1272.6 548.1L1275.3 552.4L1276.2 583.5L1276.8 618.8L1280.1 616.0L1284.4 614.5L1288.6 616.6L1292.9 617.7L1298.3 616.6L1304.7 617.3L1311.1 616.6L1314.4 613.4L1316.5 612.3L1319.7 614.5L1324.0 615.1L1327.2 614.5L1330.4 616.0L1334.7 616.6L1339.0 615.5L1343.3 616.6L1348.7 616.6L1350.2 618.8L1351.9 616.6L1354.0 619.2L1358.3 619.8L1360.4 621.3L1362.6 619.8L1364.7 616.6L1367.3 612.8L1367.3 682.3L1089.3 682.3Z" fill="#E0B400" fill-opacity="0.017"/><path d="M1089.3 614.4L1092.5 615.9L1096.8 616.6L1100.0 618.1L1102.2 615.5L1107.5 616.2L1113.9 617.7L1120.4 617.0L1124.7 615.5L1127.9 616.2L1132.2 614.4L1137.5 614.4L1142.9 614.9L1147.2 610.8L1150.4 611.2L1153.6 611.2L1156.8 613.4L1161.1 609.5L1165.4 609.1L1167.5 610.8L1169.7 608.5L1172.9 608.5L1176.1 611.2L1179.3 615.5L1181.5 616.6L1183.0 610.2L1185.8 607.6L1189.0 608.5L1191.1 609.1L1192.6 614.4L1195.4 614.7L1204.0 614.7L1212.5 614.4L1216.8 616.2L1223.3 615.5L1229.7 617.2L1234.0 617.2L1238.3 618.1L1241.5 617.2L1243.6 618.3L1251.1 618.3L1255.4 617.0L1259.7 617.7L1262.9 616.6L1264.4 603.3L1265.7 575.1L1267.2 575.1L1270.4 575.1L1272.6 575.1L1275.3 575.1L1276.2 603.3L1276.8 620.9L1280.1 618.1L1284.4 616.6L1288.6 618.7L1292.9 619.8L1298.3 618.7L1304.7 619.4L1311.1 618.7L1314.4 615.5L1316.5 614.4L1319.7 616.6L1324.0 617.2L1327.2 616.6L1330.4 618.1L1334.7 618.7L1339.0 617.7L1343.3 618.7L1348.7 618.7L1350.2 620.9L1351.9 618.7L1354.0 621.3L1358.3 621.9L1360.4 623.4L1362.6 621.9L1364.7 618.7L1367.3 614.9" fill="none" stroke="#56A64B" stroke-width="1.1" stroke-linejoin="round"/><path d="M1089.3 612.3L1092.5 613.8L1096.8 614.5L1100.0 616.0L1102.2 613.4L1107.5 614.0L1113.9 615.5L1120.4 614.9L1124.7 613.4L1127.9 614.0L1132.2 612.3L1137.5 612.3L1142.9 612.8L1147.2 608.7L1150.4 609.1L1153.6 609.1L1156.8 611.3L1161.1 607.4L1165.4 607.0L1167.5 608.7L1169.7 606.3L1172.9 606.3L1176.1 609.1L1179.3 613.4L1181.5 614.5L1183.0 608.1L1185.8 605.5L1189.0 606.3L1191.1 607.0L1192.6 612.3L1195.4 612.5L1204.0 612.5L1212.5 612.3L1216.8 614.0L1223.3 613.4L1229.7 615.1L1234.0 615.1L1238.3 616.0L1241.5 615.1L1243.6 616.2L1251.1 616.2L1255.4 614.9L1259.7 615.5L1262.9 614.5L1264.4 583.5L1265.7 547.1L1267.2 545.4L1270.4 544.9L1272.6 548.1L1275.3 552.4L1276.2 583.5L1276.8 618.8L1280.1 616.0L1284.4 614.5L1288.6 616.6L1292.9 617.7L1298.3 616.6L1304.7 617.3L1311.1 616.6L1314.4 613.4L1316.5 612.3L1319.7 614.5L1324.0 615.1L1327.2 614.5L1330.4 616.0L1334.7 616.6L1339.0 615.5L1343.3 616.6L1348.7 616.6L1350.2 618.8L1351.9 616.6L1354.0 619.2L1358.3 619.8L1360.4 621.3L1362.6 619.8L1364.7 616.6L1367.3 612.8" fill="none" stroke="#E0B400" stroke-width="1.1" stroke-linejoin="round"/><path d="M1089.3 682.5L1367.3 682.5" fill="none" stroke="#5794F2" stroke-width="1.0" stroke-linejoin="round"/></svg>
<div class="sw" style="left:1061.6px;top:716.0px;background:#56A64B"></div><span class="t" style="left:1083.60px;top:710.80px;font-size:12px;color:#2b3035;letter-spacing:0.670px;">avg</span>
<div class="sw" style="left:1114.2px;top:716.0px;background:#E0B400"></div><span class="t" style="left:1136.20px;top:710.80px;font-size:12px;color:#2b3035;letter-spacing:0.649px;">highest</span>
<div class="sw" style="left:1188.4px;top:716.0px;background:#5794F2"></div><span class="t" style="left:1210.40px;top:710.80px;font-size:12px;color:#2b3035;letter-spacing:0.543px;">limit</span>
<svg class="abs" style="left:0;top:0" width="1400" height="1000" shape-rendering="crispEdges"><path d="M1101.5 831.3V991.2" stroke="rgba(36,41,46,0.1)" stroke-width="1"/><path d="M1149.5 831.3V991.2" stroke="rgba(36,41,46,0.1)" stroke-width="1"/><path d="M1196.5 831.3V991.2" stroke="rgba(36,41,46,0.1)" stroke-width="1"/><path d="M1244.5 831.3V991.2" stroke="rgba(36,41,46,0.1)" stroke-width="1"/><path d="M1292.5 831.3V991.2" stroke="rgba(36,41,46,0.1)" stroke-width="1"/><path d="M1340.5 831.3V991.2" stroke="rgba(36,41,46,0.1)" stroke-width="1"/><path d="M1082.0 986.5H1367.0" stroke="rgba(36,41,46,0.1)" stroke-width="1"/><path d="M1082.0 949.5H1367.0" stroke="rgba(36,41,46,0.1)" stroke-width="1"/><path d="M1082.0 913.5H1367.0" stroke="rgba(36,41,46,0.1)" stroke-width="1"/><path d="M1082.0 876.5H1367.0" stroke="rgba(36,41,46,0.1)" stroke-width="1"/><path d="M1082.0 840.5H1367.0" stroke="rgba(36,41,46,0.1)" stroke-width="1"/></svg><span class="t" style="left:1086.00px;top:995.00px;font-size:12px;color:#2b3035;letter-spacing:-0.008px;">17:30</span><span class="t" style="left:1133.75px;top:995.00px;font-size:12px;color:#2b3035;letter-spacing:-0.008px;">17:40</span><span class="t" style="left:1181.50px;top:995.00px;font-size:12px;color:#2b3035;letter-spacing:-0.008px;">17:50</span><span class="t" style="left:1229.25px;top:995.00px;font-size:12px;color:#2b3035;letter-spacing:-0.008px;">18:00</span><span class="t" style="left:1277.00px;top:995.00px;font-size:12px;color:#2b3035;letter-spacing:-0.008px;">18:10</span><span class="t" style="left:1324.75px;top:995.00px;font-size:12px;color:#2b3035;letter-spacing:-0.008px;">18:20</span><span class="t" style="left:1070.31px;top:979.90px;font-size:12px;color:#2b3035;">0</span><span class="t" style="left:1062.00px;top:942.90px;font-size:12px;color:#2b3035;letter-spacing:1.641px;">20</span><span class="t" style="left:1061.80px;top:906.90px;font-size:12px;color:#2b3035;letter-spacing:1.841px;">40</span><span class="t" style="left:1062.00px;top:869.90px;font-size:12px;color:#2b3035;letter-spacing:1.641px;">60</span><span class="t" style="left:1062.00px;top:833.90px;font-size:12px;color:#2b3035;letter-spacing:1.641px;">80</span>
<svg class="abs" style="left:0;top:0" width="1400" height="1000"><path d="M1082.0 853.9L1099.6 853.9L1101.4 860.6L1109.7 860.6L1111.4 867.7L1119.0 867.7L1121.5 876.7L1129.0 875.7L1131.6 880.7L1138.1 880.7L1140.6 881.5L1142.4 881.7L1148.7 880.7L1151.2 889.8L1157.5 888.8L1160.0 891.8L1167.5 892.8L1170.0 896.8L1175.1 896.8L1176.8 892.0L1180.1 895.8L1182.6 899.8L1185.9 898.8L1188.9 903.8L1195.2 902.8L1197.0 905.8L1207.8 905.8L1209.0 900.8L1211.5 901.8L1213.3 908.1L1215.3 887.0L1219.1 887.0L1221.6 860.4L1225.4 850.1L1236.7 850.1L1238.7 846.8L1245.5 847.8L1247.5 851.8L1264.4 851.8L1266.9 855.6L1269.4 858.6L1273.2 859.6L1274.4 856.1L1278.2 862.9L1280.7 864.2L1284.5 864.2L1287.0 870.4L1289.5 873.7L1292.0 873.7L1294.6 871.9L1298.3 879.7L1303.4 879.7L1308.4 882.7L1312.2 882.0L1314.2 879.7L1318.5 882.7L1321.7 882.7L1324.7 888.8L1328.5 889.8L1333.5 890.8L1337.3 893.8L1343.6 893.8L1346.9 898.8L1349.9 897.8L1352.4 893.8L1353.7 894.5L1355.4 901.8L1361.2 901.8L1367.0 905.6L1367.0 986.2L1082.0 986.2Z" fill="#56A64B" fill-opacity="0.006"/><path d="M1082.0 853.6L1099.6 853.6L1101.4 860.4L1109.7 860.4L1111.4 867.4L1119.0 867.4L1121.5 875.4L1129.0 875.4L1131.6 880.5L1138.1 880.5L1140.6 881.2L1142.4 880.5L1148.7 880.5L1151.2 888.5L1157.5 888.5L1160.0 891.5L1167.5 891.5L1170.0 895.5L1175.1 895.5L1176.8 891.8L1180.1 895.5L1182.6 898.5L1185.9 898.5L1188.9 902.6L1195.2 902.6L1197.0 904.6L1207.8 904.6L1209.0 900.6L1211.5 900.6L1213.3 906.8L1215.3 886.7L1219.1 886.7L1221.6 859.1L1225.4 849.8L1236.7 849.8L1238.7 846.5L1245.5 846.5L1247.5 851.6L1264.4 851.6L1266.9 855.3L1269.4 858.4L1273.2 858.4L1274.4 855.8L1278.2 861.6L1280.7 862.9L1284.5 862.9L1287.0 869.2L1289.5 873.4L1292.0 872.4L1294.6 871.7L1298.3 878.4L1303.4 878.4L1308.4 882.5L1312.2 881.7L1314.2 878.4L1318.5 882.5L1321.7 882.5L1324.7 887.5L1328.5 889.5L1333.5 889.5L1337.3 893.5L1343.6 893.5L1346.9 897.5L1349.9 897.5L1352.4 893.5L1353.7 894.3L1355.4 900.6L1361.2 900.6L1367.0 904.3L1367.0 986.2L1082.0 986.2Z" fill="#E0B400" fill-opacity="0.017"/><path d="M1082.0 853.9L1099.6 853.9L1101.4 860.6L1109.7 860.6L1111.4 867.7L1119.0 867.7L1121.5 876.7L1129.0 875.7L1131.6 880.7L1138.1 880.7L1140.6 881.5L1142.4 881.7L1148.7 880.7L1151.2 889.8L1157.5 888.8L1160.0 891.8L1167.5 892.8L1170.0 896.8L1175.1 896.8L1176.8 892.0L1180.1 895.8L1182.6 899.8L1185.9 898.8L1188.9 903.8L1195.2 902.8L1197.0 905.8L1207.8 905.8L1209.0 900.8L1211.5 901.8L1213.3 908.1L1215.3 887.0L1219.1 887.0L1221.6 860.4L1225.4 850.1L1236.7 850.1L1238.7 846.8L1245.5 847.8L1247.5 851.8L1264.4 851.8L1266.9 855.6L1269.4 858.6L1273.2 859.6L1274.4 856.1L1278.2 862.9L1280.7 864.2L1284.5 864.2L1287.0 870.4L1289.5 873.7L1292.0 873.7L1294.6 871.9L1298.3 879.7L1303.4 879.7L1308.4 882.7L1312.2 882.0L1314.2 879.7L1318.5 882.7L1321.7 882.7L1324.7 888.8L1328.5 889.8L1333.5 890.8L1337.3 893.8L1343.6 893.8L1346.9 898.8L1349.9 897.8L1352.4 893.8L1353.7 894.5L1355.4 901.8L1361.2 901.8L1367.0 905.6" fill="none" stroke="#56A64B" stroke-width="1.1" stroke-linejoin="round"/><path d="M1082.0 853.6L1099.6 853.6L1101.4 860.4L1109.7 860.4L1111.4 867.4L1119.0 867.4L1121.5 875.4L1129.0 875.4L1131.6 880.5L1138.1 880.5L1140.6 881.2L1142.4 880.5L1148.7 880.5L1151.2 888.5L1157.5 888.5L1160.0 891.5L1167.5 891.5L1170.0 895.5L1175.1 895.5L1176.8 891.8L1180.1 895.5L1182.6 898.5L1185.9 898.5L1188.9 902.6L1195.2 902.6L1197.0 904.6L1207.8 904.6L1209.0 900.6L1211.5 900.6L1213.3 906.8L1215.3 886.7L1219.1 886.7L1221.6 859.1L1225.4 849.8L1236.7 849.8L1238.7 846.5L1245.5 846.5L1247.5 851.6L1264.4 851.6L1266.9 855.3L1269.4 858.4L1273.2 858.4L1274.4 855.8L1278.2 861.6L1280.7 862.9L1284.5 862.9L1287.0 869.2L1289.5 873.4L1292.0 872.4L1294.6 871.7L1298.3 878.4L1303.4 878.4L1308.4 882.5L1312.2 881.7L1314.2 878.4L1318.5 882.5L1321.7 882.5L1324.7 887.5L1328.5 889.5L1333.5 889.5L1337.3 893.5L1343.6 893.5L1346.9 897.5L1349.9 897.5L1352.4 893.5L1353.7 894.3L1355.4 900.6L1361.2 900.6L1367.0 904.3" fill="none" stroke="#E0B400" stroke-width="1.1" stroke-linejoin="round"/><path d="M1082.0 986.5L1367.0 986.5" fill="none" stroke="#5794F2" stroke-width="1.0" stroke-linejoin="round"/></svg>
<div class="sw" style="left:1061.6px;top:1020.0px;background:#56A64B"></div><span class="t" style="left:1083.60px;top:1014.80px;font-size:12px;color:#2b3035;letter-spacing:0.670px;">avg</span>
<div class="sw" style="left:1114.2px;top:1020.0px;background:#E0B400"></div><span class="t" style="left:1136.20px;top:1014.80px;font-size:12px;color:#2b3035;letter-spacing:0.649px;">highest</span>
<div class="sw" style="left:1188.4px;top:1020.0px;background:#5794F2"></div><span class="t" style="left:1210.40px;top:1014.80px;font-size:12px;color:#2b3035;letter-spacing:0.543px;">limit</span>
</div>
</body></html>
